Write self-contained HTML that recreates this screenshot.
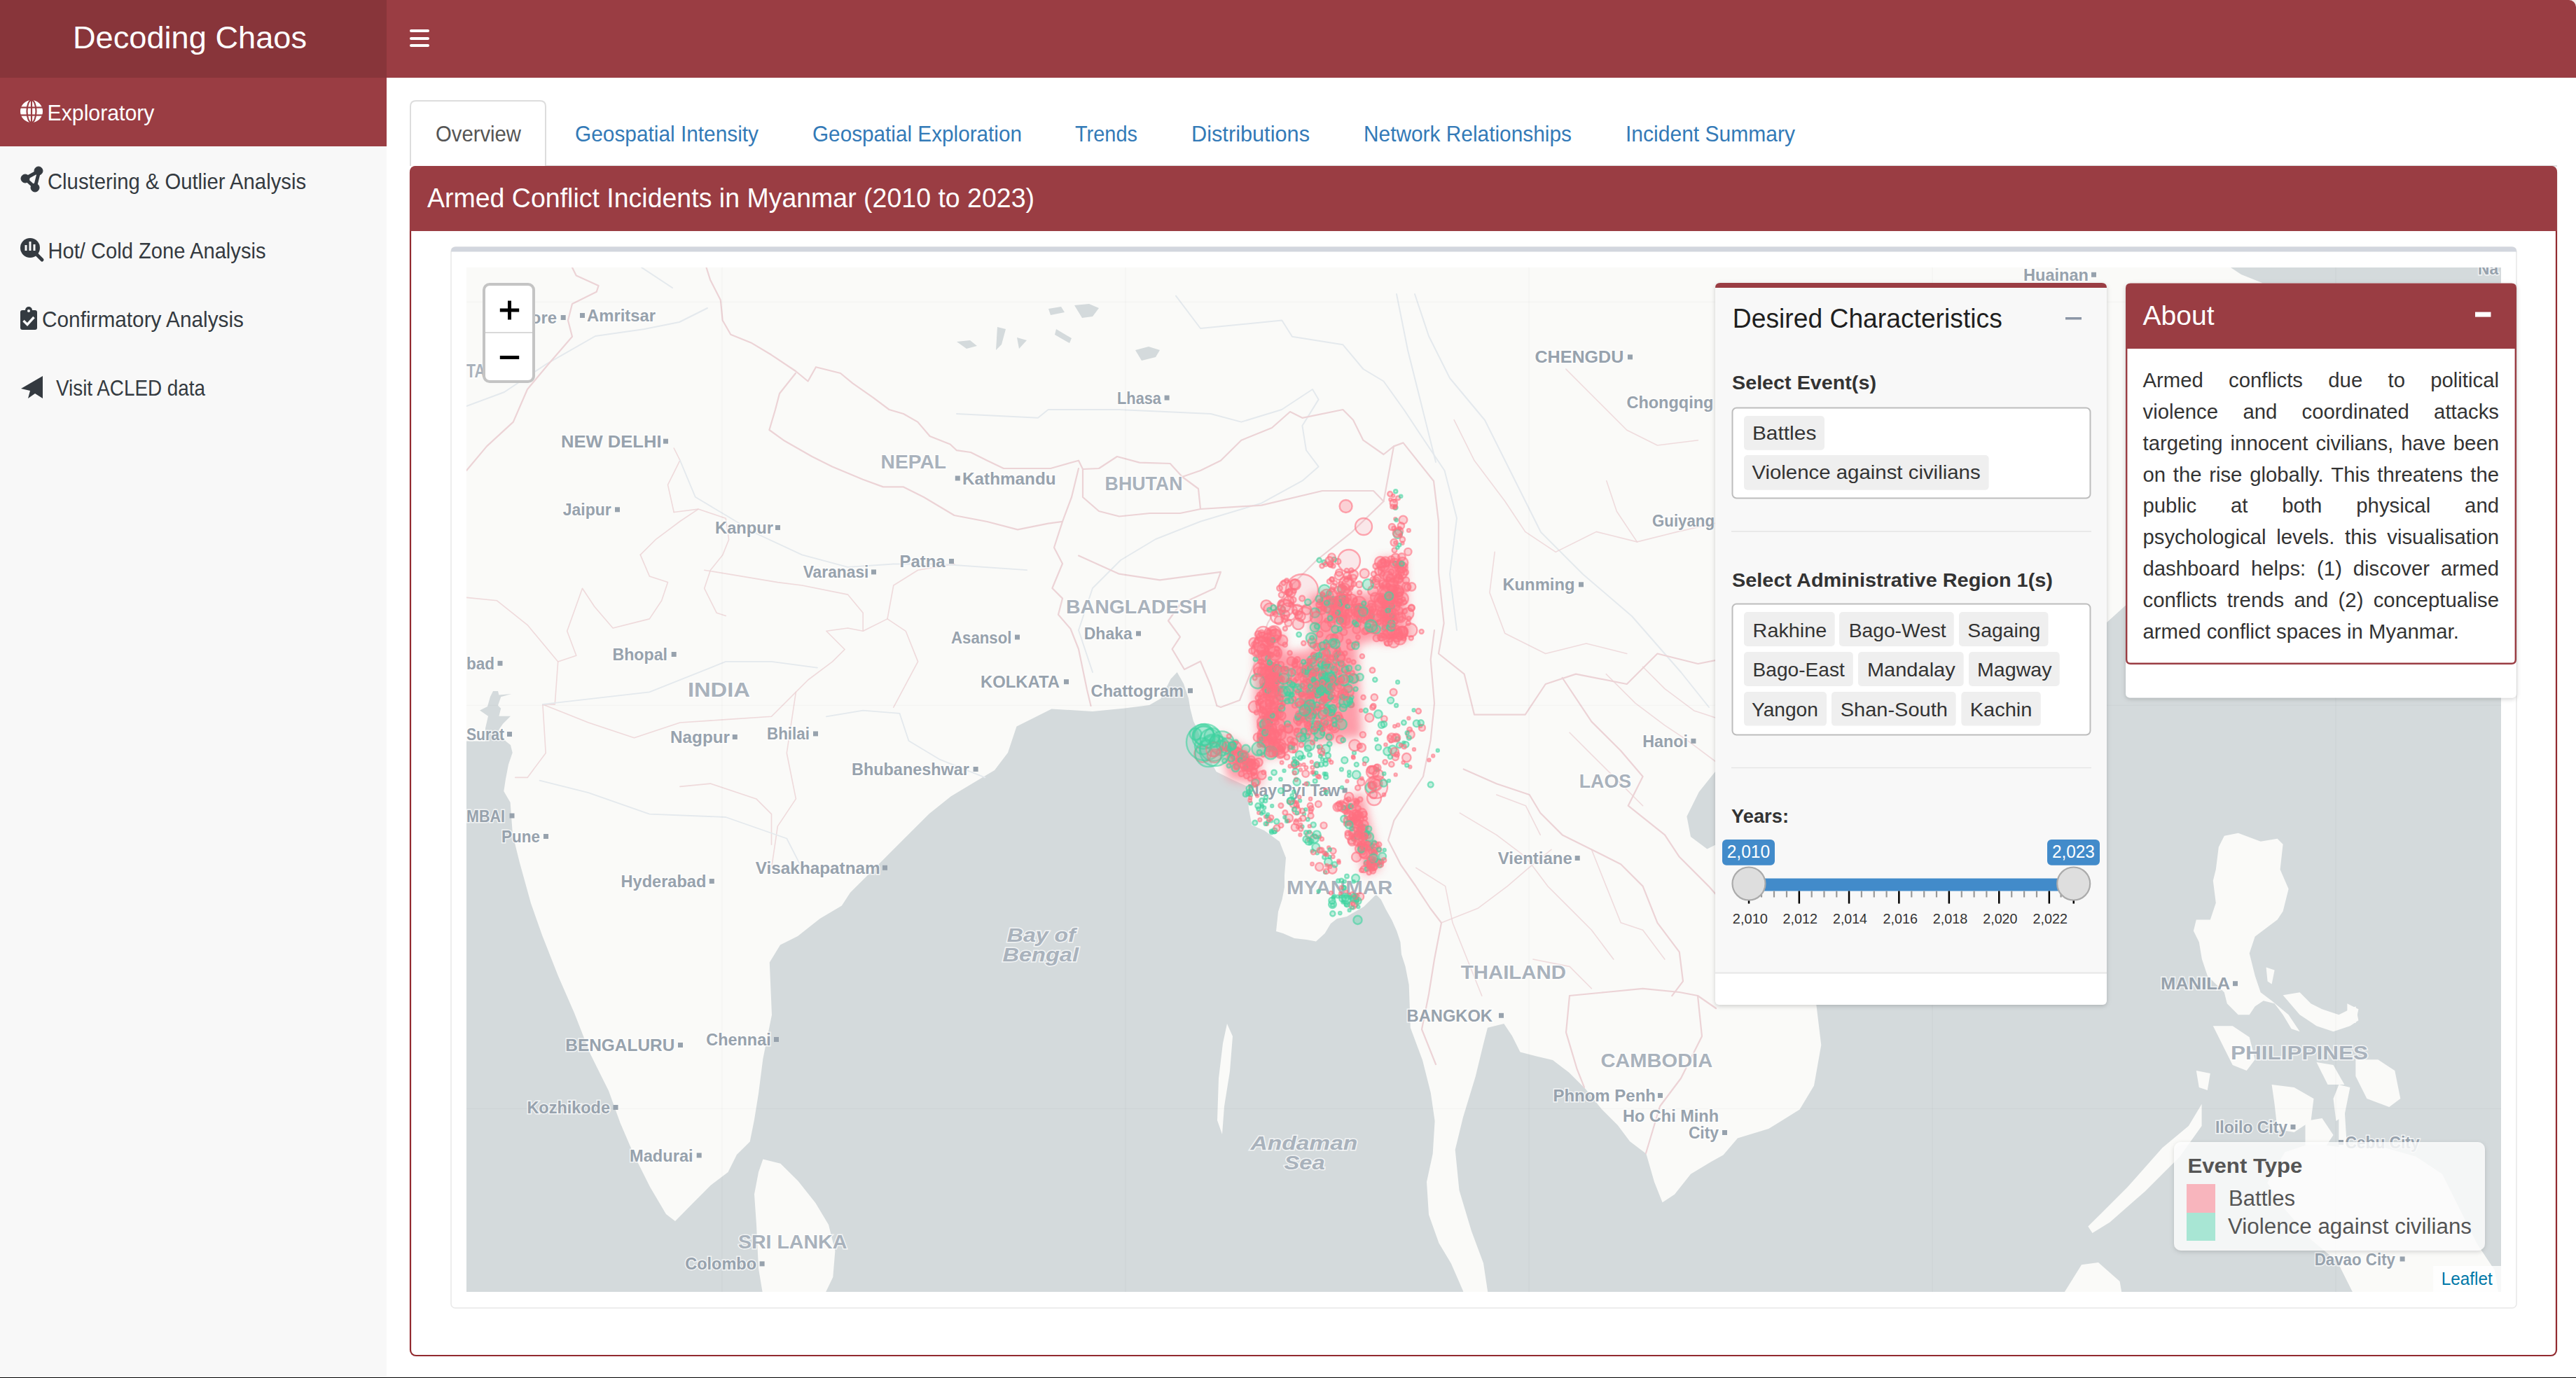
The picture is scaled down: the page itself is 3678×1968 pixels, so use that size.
<!DOCTYPE html>
<html><head><meta charset="utf-8"><title>Decoding Chaos</title>
<style>html,body{margin:0;padding:0;background:#fcfcfc;overflow:hidden;} svg{display:block;}</style>
</head><body>
<svg width="3678" height="1968" viewBox="0 0 3678 1968">
<rect x="0" y="0" width="3678" height="1968" fill="#ffffff"/>
<rect x="0" y="0" width="3678" height="111" fill="#9a3d43"/>
<rect x="0" y="0" width="552" height="111" fill="#88353a"/>
<path d="M3668,0 A10,10 0 0 1 3678,10 L3678,0 Z" fill="#f3e8e8"/>
<text x="104.0" y="68.5" font-family="Liberation Sans" font-size="44" font-weight="normal" fill="#ffffff" text-anchor="start" textLength="334.0" lengthAdjust="spacingAndGlyphs" >Decoding Chaos</text>
<rect x="585" y="42" width="28" height="4" rx="2" fill="#ffffff"/>
<rect x="585" y="53" width="28" height="4" rx="2" fill="#ffffff"/>
<rect x="585" y="63" width="28" height="4" rx="2" fill="#ffffff"/>
<rect x="0" y="111" width="552" height="1857" fill="#f8f8f8"/>
<rect x="0" y="111" width="552" height="98" fill="#9a3d43"/>
<text x="67.5" y="172.0" font-family="Liberation Sans" font-size="32" font-weight="normal" fill="#ffffff" text-anchor="start" textLength="153.0" lengthAdjust="spacingAndGlyphs" >Exploratory</text>
<text x="68.0" y="270.0" font-family="Liberation Sans" font-size="32" font-weight="normal" fill="#343a40" text-anchor="start" textLength="369.0" lengthAdjust="spacingAndGlyphs" >Clustering &amp; Outlier Analysis</text>
<text x="68.5" y="368.5" font-family="Liberation Sans" font-size="32" font-weight="normal" fill="#343a40" text-anchor="start" textLength="311.0" lengthAdjust="spacingAndGlyphs" >Hot/ Cold Zone Analysis</text>
<text x="60.0" y="466.7" font-family="Liberation Sans" font-size="32" font-weight="normal" fill="#343a40" text-anchor="start" textLength="288.0" lengthAdjust="spacingAndGlyphs" >Confirmatory Analysis</text>
<text x="80.0" y="565.4" font-family="Liberation Sans" font-size="32" font-weight="normal" fill="#343a40" text-anchor="start" textLength="213.0" lengthAdjust="spacingAndGlyphs" >Visit ACLED data</text>
<g transform="translate(45,159)"><circle r="16" fill="#fff"/><ellipse rx="6.5" ry="16" fill="none" stroke="#9a3d43" stroke-width="2.2"/><line x1="-16" y1="-5.5" x2="16" y2="-5.5" stroke="#9a3d43" stroke-width="2.2"/><line x1="-16" y1="5.5" x2="16" y2="5.5" stroke="#9a3d43" stroke-width="2.2"/><line x1="0" y1="-16" x2="0" y2="16" stroke="#9a3d43" stroke-width="2.2"/></g>
<g fill="#343a40" stroke="#343a40"><path d="M36,255 L56,244 L50,268 Z" fill="none" stroke-width="5" stroke-linejoin="round"/><circle cx="36" cy="255" r="6"/><circle cx="55" cy="244" r="6"/><circle cx="50" cy="268" r="6"/></g>
<g><circle cx="43" cy="354" r="14" fill="#343a40"/><line x1="52" y1="363" x2="60" y2="371" stroke="#343a40" stroke-width="5" stroke-linecap="round"/><rect x="35.5" y="350" width="3" height="8" fill="#f8f8f8"/><rect x="41.5" y="345" width="3" height="13" fill="#f8f8f8"/><rect x="47.5" y="349" width="3" height="9" fill="#f8f8f8"/></g>
<g><rect x="29" y="443" width="24" height="28" rx="3" fill="#343a40"/><circle cx="41" cy="443" r="5" fill="#343a40"/><circle cx="41" cy="444" r="2" fill="#f8f8f8"/><path d="M33.5,458 L39,463.5 L48.5,453" fill="none" stroke="#f8f8f8" stroke-width="3.4"/></g>
<path d="M30,555 L61,537 L61,569 L50,562 L40,569 L43,558 Z" fill="#343a40"/>
<path d="M586,237 L586,152 Q586,144 594,144 L771,144 Q779,144 779,152 L779,237" fill="#ffffff" stroke="#dddddd" stroke-width="2"/>
<line x1="779" y1="237" x2="3651" y2="237" stroke="#dddddd" stroke-width="2"/>
<text x="622.0" y="202.0" font-family="Liberation Sans" font-size="32" font-weight="normal" fill="#555555" text-anchor="start" textLength="122.0" lengthAdjust="spacingAndGlyphs" >Overview</text>
<text x="821.0" y="202.0" font-family="Liberation Sans" font-size="32" font-weight="normal" fill="#337ab7" text-anchor="start" textLength="262.0" lengthAdjust="spacingAndGlyphs" >Geospatial Intensity</text>
<text x="1160.0" y="202.0" font-family="Liberation Sans" font-size="32" font-weight="normal" fill="#337ab7" text-anchor="start" textLength="299.0" lengthAdjust="spacingAndGlyphs" >Geospatial Exploration</text>
<text x="1535.0" y="202.0" font-family="Liberation Sans" font-size="32" font-weight="normal" fill="#337ab7" text-anchor="start" textLength="89.0" lengthAdjust="spacingAndGlyphs" >Trends</text>
<text x="1701.0" y="202.0" font-family="Liberation Sans" font-size="32" font-weight="normal" fill="#337ab7" text-anchor="start" textLength="169.0" lengthAdjust="spacingAndGlyphs" >Distributions</text>
<text x="1947.0" y="202.0" font-family="Liberation Sans" font-size="32" font-weight="normal" fill="#337ab7" text-anchor="start" textLength="297.0" lengthAdjust="spacingAndGlyphs" >Network Relationships</text>
<text x="2321.0" y="202.0" font-family="Liberation Sans" font-size="32" font-weight="normal" fill="#337ab7" text-anchor="start" textLength="242.0" lengthAdjust="spacingAndGlyphs" >Incident Summary</text>
<rect x="586" y="238" width="3064" height="1698" rx="8" fill="#ffffff" stroke="#922a2f" stroke-width="2.2"/>
<path d="M585,246 Q585,237 594,237 L3642,237 Q3651,237 3651,246 L3651,330 L585,330 Z" fill="#9a3d43"/>
<text x="610.0" y="296.3" font-family="Liberation Sans" font-size="38" font-weight="normal" fill="#ffffff" text-anchor="start" textLength="867.0" lengthAdjust="spacingAndGlyphs" >Armed Conflict Incidents in Myanmar (2010 to 2023)</text>
<rect x="644" y="353" width="2949" height="1515" rx="6" fill="#ffffff" stroke="#e8e8e8" stroke-width="1.5"/>
<path d="M644,359.5 L644,359 Q644,352.5 650.5,352.5 L3586.5,352.5 Q3593,352.5 3593,359 L3593,359.5 Z" fill="#d2d6de"/>
<defs><clipPath id="mapclip"><rect x="666" y="382" width="2905" height="1463"/></clipPath><filter id="sh" x="-10%" y="-10%" width="120%" height="130%"><feDropShadow dx="0" dy="2" stdDeviation="3" flood-color="#000" flood-opacity="0.18"/></filter></defs>
<g clip-path="url(#mapclip)">
<rect x="666" y="382" width="2905" height="1463" fill="#fafaf8"/>
<polygon points="660.0,1058.6 693.0,1058.6 693.0,1040.0 697.0,1022.8 685.0,1014.5 696.0,1009.0 700.0,995.0 704.0,986.9 711.0,986.9 712.4,992.4 730.3,991.0 715.2,995.2 711.0,1007.6 715.2,1011.7 712.4,1022.8 729.0,1022.8 718.0,1033.8 712.4,1042.0 722.0,1058.6 729.0,1064.0 731.7,1075.0 726.0,1091.7 722.0,1112.4 719.3,1130.0 728.6,1146.0 732.0,1191.8 741.7,1231.0 758.0,1290.0 774.0,1335.6 797.0,1394.0 820.0,1446.7 843.0,1505.6 869.0,1557.8 885.5,1603.6 905.0,1649.0 928.0,1695.0 951.0,1734.0 964.0,1744.0 989.6,1717.9 1014.5,1692.9 1039.5,1674.0 1052.0,1649.0 1070.7,1630.5 1077.0,1599.0 1083.0,1561.8 1089.4,1511.9 1102.0,1449.4 1098.8,1374.5 1114.0,1349.6 1139.0,1337.0 1170.6,1312.0 1201.8,1293.4 1214.0,1274.7 1251.7,1237.2 1289.0,1199.8 1326.6,1162.3 1357.8,1137.3 1389.0,1118.6 1420.0,1099.9 1439.0,1074.9 1451.5,1037.5 1476.5,1025.0 1501.4,1012.5 1560.0,1016.0 1606.0,1011.5 1641.0,1007.0 1657.5,997.5 1671.5,969.7 1680.7,960.0 1690.0,976.6 1697.0,997.5 1699.3,1011.5 1704.0,1030.0 1708.6,1039.3 1720.0,1070.0 1736.5,1102.0 1759.7,1113.6 1780.6,1123.0 1783.0,1155.4 1787.5,1178.6 1805.0,1186.0 1827.0,1202.0 1836.0,1225.0 1834.0,1250.0 1834.0,1267.0 1830.6,1284.5 1825.0,1302.0 1822.0,1330.0 1832.0,1333.0 1848.0,1340.0 1865.4,1342.0 1879.0,1344.6 1891.6,1333.0 1900.0,1319.0 1909.0,1312.0 1923.0,1309.0 1935.0,1302.0 1947.0,1295.0 1957.7,1284.5 1964.7,1277.5 1971.7,1284.5 1978.6,1298.4 1987.3,1314.0 1994.3,1329.8 1999.5,1345.4 2001.0,1363.0 2006.5,1380.0 2011.7,1406.4 2013.8,1467.8 2031.0,1514.0 2042.8,1560.7 2048.6,1601.0 2045.7,1647.7 2037.0,1688.0 2040.0,1734.7 2054.5,1775.4 2071.9,1804.4 2089.0,1843.8 2092.0,1860.0 660.0,1860.0" fill="#d4dadc"/>
<polygon points="2128.0,1860.0 2124.0,1843.8 2118.0,1804.0 2100.9,1758.0 2083.5,1700.0 2077.7,1641.9 2089.0,1595.5 2106.7,1537.4 2118.0,1491.0 2124.0,1467.8 2147.3,1462.0 2159.0,1479.4 2170.5,1502.6 2193.7,1508.4 2217.0,1514.0 2240.0,1531.6 2263.4,1554.8 2286.6,1583.8 2309.8,1607.0 2327.0,1630.0 2350.4,1647.7 2362.0,1688.0 2373.6,1717.3 2391.0,1705.7 2414.0,1676.7 2443.0,1659.3 2460.5,1649.4 2481.0,1625.6 2525.3,1612.0 2569.6,1584.6 2590.0,1550.5 2600.3,1492.5 2593.5,1436.3 2580.0,1380.0 2540.0,1300.0 2470.0,1230.0 2449.0,1206.7 2437.4,1212.5 2414.0,1195.0 2408.4,1166.0 2425.8,1131.0 2449.0,1102.0 2520.0,1080.0 2700.0,1000.0 2900.0,930.0 3008.0,889.0 3040.0,860.0 3100.0,700.0 3230.0,404.0 3200.0,392.0 3185.0,382.0 3185.0,370.0 3590.0,370.0 3590.0,1860.0" fill="#d4dadc"/>
<polygon points="1089.4,1655.4 1114.4,1661.7 1139.4,1686.6 1164.4,1717.9 1183.0,1749.0 1192.4,1786.5 1189.3,1824.0 1176.8,1850.0 1089.4,1850.0 1083.0,1811.5 1080.0,1749.0 1077.0,1705.4 1083.0,1674.0" fill="#fafaf8"/>
<polygon points="1752.0,1462.0 1760.0,1480.0 1756.0,1530.0 1748.0,1580.0 1745.0,1620.0 1738.0,1600.0 1740.0,1540.0 1746.0,1490.0" fill="#fafaf8"/>
<polygon points="3175.8,1193.8 3195.7,1189.8 3227.7,1201.8 3251.6,1197.8 3259.6,1205.8 3255.6,1241.7 3267.6,1269.6 3259.6,1301.6 3251.6,1313.6 3235.6,1325.5 3219.7,1337.5 3211.7,1361.5 3219.7,1393.4 3227.7,1417.3 3243.6,1429.3 3267.6,1449.3 3283.6,1473.2 3271.6,1469.2 3259.6,1449.3 3247.6,1433.3 3231.7,1429.3 3219.7,1437.3 3211.7,1449.3 3195.7,1449.3 3179.8,1433.3 3175.8,1417.3 3163.8,1405.4 3151.8,1393.4 3143.8,1369.4 3139.8,1345.5 3131.9,1329.5 3135.8,1313.6 3155.8,1313.6 3163.8,1289.6 3159.8,1257.7 3163.8,1241.7 3167.8,1209.8" fill="#fafaf8"/>
<polygon points="3259.6,1421.3 3283.6,1417.3 3299.5,1433.3 3315.5,1441.3 3339.4,1449.3 3363.4,1437.3 3367.4,1457.3 3355.4,1465.2 3331.5,1473.2 3307.5,1465.2 3283.6,1449.3" fill="#fafaf8"/>
<polygon points="3159.8,1465.2 3187.7,1465.2 3211.7,1481.2 3219.7,1513.2 3207.7,1529.1 3187.7,1521.1 3171.8,1489.2" fill="#fafaf8"/>
<polygon points="3363.4,1513.2 3395.3,1513.2 3419.3,1529.1 3427.3,1569.0 3411.3,1581.0 3379.4,1569.0 3363.4,1537.1" fill="#fafaf8"/>
<polygon points="3339.4,1549.1 3355.4,1553.1 3347.4,1593.0 3335.4,1601.0 3331.5,1569.0" fill="#fafaf8"/>
<polygon points="3243.6,1549.1 3275.6,1553.1 3303.5,1569.0 3299.5,1601.0 3275.6,1616.9 3251.6,1613.0 3247.6,1577.0" fill="#fafaf8"/>
<polygon points="3291.5,1601.0 3315.5,1597.0 3331.5,1620.9 3315.5,1644.9 3291.5,1644.9" fill="#fafaf8"/>
<polygon points="3307.5,1517.1 3331.5,1521.1 3347.4,1549.1 3323.5,1549.1" fill="#fafaf8"/>
<polygon points="3339.4,1581.0 3347.4,1581.0 3351.4,1644.9 3339.4,1644.9" fill="#fafaf8"/>
<polygon points="3135.8,1529.1 3155.8,1533.1 3151.8,1557.1 3139.8,1553.1" fill="#fafaf8"/>
<polygon points="3235.6,1381.4 3247.6,1385.4 3243.6,1405.4 3237.6,1401.4" fill="#fafaf8"/>
<polygon points="3351.4,1433.3 3367.4,1441.3 3363.4,1461.3 3351.4,1457.3" fill="#fafaf8"/>
<polygon points="3262.2,1645.5 3299.7,1633.0 3349.6,1639.3 3405.8,1639.3 3449.5,1651.8 3487.0,1676.7 3511.9,1726.7 3536.9,1776.6 3561.9,1814.1 3568.1,1851.5 3362.1,1851.5 3337.1,1801.6 3299.7,1770.4 3262.2,1726.7 3237.2,1689.2" fill="#fafaf8"/>
<polygon points="3143.6,1576.8 3124.9,1608.1 3087.4,1639.3 3037.5,1695.5 3000.0,1732.9 2981.3,1751.6 2987.5,1761.0 3012.5,1745.4 3062.4,1701.7 3112.4,1651.8 3143.6,1608.1" fill="#fafaf8"/>
<polygon points="2944.8,1850.0 2972.0,1806.3 2996.0,1803.0 3026.6,1830.0 3030.0,1850.0" fill="#fafaf8"/>
<polyline points="1366.0,591.0 1482.0,596.8 1496.6,585.0 1598.0,585.0 1728.8,591.0 1772.3,602.6 1830.0,585.0 1874.0,556.0 1882.6,570.6 1859.4,608.0 1865.0,643.0 1882.6,666.4 1859.4,686.7 1801.0,718.6 1714.0,744.8 1650.0,770.0 1600.0,800.0 1560.0,840.0 1540.0,900.0 1560.0,960.0" fill="none" stroke="#e4e9ed" stroke-width="2" stroke-linejoin="round" stroke-linecap="round" />
<polyline points="1679.0,422.6 1714.0,469.0 1830.3,457.5 1845.0,480.7 1917.4,492.3 1946.4,527.0 1975.5,544.5 2004.5,585.0 2033.5,628.7 2062.5,672.0 2080.0,740.0 2070.0,820.0 2080.0,900.0" fill="none" stroke="#e4e9ed" stroke-width="2" stroke-linejoin="round" stroke-linecap="round" />
<polyline points="916.0,382.0 960.0,411.0" fill="none" stroke="#e4e9ed" stroke-width="2" stroke-linejoin="round" stroke-linecap="round" />
<polyline points="666.0,580.0 720.0,560.0 780.0,520.0 850.0,480.0 920.0,470.0 970.0,460.0 1010.0,440.0" fill="none" stroke="#e4e9ed" stroke-width="2" stroke-linejoin="round" stroke-linecap="round" />
<polyline points="2020.0,420.0 2040.0,480.0 2070.0,540.0 2120.0,600.0 2160.0,680.0 2200.0,760.0 2260.0,820.0 2330.0,880.0 2400.0,960.0 2440.0,1010.0" fill="none" stroke="#e4e9ed" stroke-width="2" stroke-linejoin="round" stroke-linecap="round" />
<polyline points="1994.0,420.0 2010.0,500.0 2030.0,580.0 2050.0,660.0" fill="none" stroke="#e4e9ed" stroke-width="2" stroke-linejoin="round" stroke-linecap="round" />
<polyline points="817.0,382.0 822.7,393.6 854.6,408.0 851.7,416.8 817.0,434.0 811.0,457.5 817.0,480.7 782.0,521.3 753.0,556.0 732.8,602.6 695.0,637.4 666.0,672.0" fill="none" stroke="#ecd3d6" stroke-width="2.2" stroke-linejoin="round" stroke-linecap="round" />
<polyline points="1008.5,382.0 1014.0,399.4 1028.8,428.4 1031.7,457.5 1043.3,477.8 1072.3,489.4 1101.3,506.8 1136.0,530.0 1153.6,544.5 1165.0,524.2 1200.0,533.0 1217.4,547.4 1246.4,567.7 1269.6,585.0 1290.0,591.0 1310.3,602.6 1327.7,623.0 1356.7,634.5 1366.0,643.2 1386.0,646.0 1409.5,657.7 1433.0,669.0 1462.0,669.0 1500.0,669.0 1540.0,657.7 1546.0,670.0 1569.0,669.0 1595.0,652.0 1627.0,660.6 1670.7,662.0 1688.0,681.0 1714.0,672.0 1743.0,657.7 1772.3,628.7 1816.0,611.0 1842.0,588.0 1859.4,596.8 1917.4,585.0 1932.0,599.7 1946.4,628.7 1975.5,649.0 1990.0,637.4 2003.5,632.4 2047.0,687.0 2054.0,745.0 2054.0,817.4 2061.6,890.0 2054.0,933.5 2090.6,962.6 2105.0,1020.6 2134.0,1020.6 2177.7,1020.6 2206.7,977.0 2250.0,962.6 2322.8,977.0 2366.4,933.5 2424.4,948.0 2460.0,940.8" fill="none" stroke="#ecd3d6" stroke-width="2.2" stroke-linejoin="round" stroke-linecap="round" />
<polyline points="1136.0,533.0 1113.0,562.0 1107.0,585.0 1098.4,614.0 1118.7,628.7 1159.4,652.0 1188.4,666.4 1232.0,684.8 1261.0,695.4 1290.0,695.4 1319.0,710.0 1362.5,736.0 1409.5,745.0 1453.0,756.4 1496.6,747.7 1517.0,744.8 1530.0,710.0 1540.0,669.0" fill="none" stroke="#ecd3d6" stroke-width="2.2" stroke-linejoin="round" stroke-linecap="round" />
<polyline points="1546.0,670.0 1546.0,710.0 1569.0,730.0 1598.0,737.5 1641.7,733.0 1685.0,733.0 1714.0,727.0 1711.0,698.0 1688.0,681.0" fill="none" stroke="#ecd3d6" stroke-width="2.2" stroke-linejoin="round" stroke-linecap="round" />
<polyline points="1517.0,744.8 1505.0,782.0 1517.0,805.0 1502.4,840.0 1517.0,854.6 1511.0,877.8 1528.5,898.0 1540.0,927.0 1546.0,956.0 1552.0,985.0 1557.5,1008.0" fill="none" stroke="#ecd3d6" stroke-width="2.2" stroke-linejoin="round" stroke-linecap="round" />
<polyline points="1540.0,793.6 1598.0,819.7 1656.0,828.4 1743.0,816.8 1734.6,840.0 1685.0,863.0 1668.0,886.5 1685.0,909.7 1673.6,927.0 1691.0,956.0 1714.0,944.5 1728.8,979.3 1737.5,1008.0" fill="none" stroke="#ecd3d6" stroke-width="2.2" stroke-linejoin="round" stroke-linecap="round" />
<polyline points="1714.0,727.0 1801.0,721.6 1888.0,701.0 1961.0,701.0 1975.5,716.0 1990.0,637.4" fill="none" stroke="#ecd3d6" stroke-width="2.2" stroke-linejoin="round" stroke-linecap="round" />
<polyline points="1975.5,716.0 1930.0,760.0 1880.0,800.0 1840.0,840.0 1810.0,890.0 1790.0,950.0 1770.0,1000.0 1743.0,1010.0 1737.5,1008.0" fill="none" stroke="#ecd3d6" stroke-width="2.2" stroke-linejoin="round" stroke-linecap="round" />
<polyline points="2048.0,900.0 2042.7,941.8 2048.0,1004.4 2042.7,1056.7 2032.0,1109.0 2011.3,1140.0 1990.4,1171.6 1982.0,1200.0 2000.0,1235.0 2021.0,1265.0 2042.0,1297.0 2058.0,1318.0 2048.0,1370.0 2040.0,1420.0 2030.0,1470.0 2050.0,1520.0" fill="none" stroke="#ecd3d6" stroke-width="2.2" stroke-linejoin="round" stroke-linecap="round" />
<polyline points="2089.7,1098.4 2136.7,1119.3 2183.7,1135.0 2199.3,1161.0 2230.7,1192.4 2272.4,1213.3 2314.2,1234.2 2345.6,1265.6 2366.4,1317.8 2397.8,1359.6 2403.0,1401.3 2387.3,1422.2" fill="none" stroke="#ecd3d6" stroke-width="2.2" stroke-linejoin="round" stroke-linecap="round" />
<polyline points="2241.0,1422.0 2293.0,1417.0 2345.6,1411.8 2397.8,1417.0 2424.0,1422.0 2450.0,1440.0" fill="none" stroke="#ecd3d6" stroke-width="2.2" stroke-linejoin="round" stroke-linecap="round" />
<polyline points="2241.0,1422.0 2236.0,1474.4 2251.6,1526.7 2262.0,1552.8" fill="none" stroke="#ecd3d6" stroke-width="2.2" stroke-linejoin="round" stroke-linecap="round" />
<polyline points="2230.7,968.0 2272.4,1030.6 2314.2,1072.3 2345.6,1109.0 2324.7,1150.7 2377.0,1192.4 2397.8,1223.8 2439.6,1265.6 2470.0,1300.0" fill="none" stroke="#ecd3d6" stroke-width="2.2" stroke-linejoin="round" stroke-linecap="round" />
<polyline points="2424.0,1422.0 2430.0,1480.0 2400.0,1540.0 2370.0,1580.0 2350.0,1647.0" fill="none" stroke="#ecd3d6" stroke-width="2.2" stroke-linejoin="round" stroke-linecap="round" />
<polyline points="962.2,731.5 997.0,727.1 1036.2,740.2 1040.6,770.7 1031.9,792.4 1014.4,814.2 1005.7,840.3 1023.1,875.2 1036.2,879.5" fill="none" stroke="#ecd3d6" stroke-width="1.6" stroke-linejoin="round" stroke-linecap="round" stroke-opacity="0.85"/>
<polyline points="1005.7,814.2 1058.0,822.9 1110.3,831.6 1145.1,836.0 1210.4,849.1 1232.2,875.2 1232.2,901.3 1267.0,883.9" fill="none" stroke="#ecd3d6" stroke-width="1.6" stroke-linejoin="round" stroke-linecap="round" stroke-opacity="0.85"/>
<polyline points="774.9,1005.9 840.2,1032.0 905.5,1053.8 970.9,1032.0 1036.2,1027.6 1101.5,1023.3 1136.4,988.4 1153.8,971.0 1188.6,944.9 1206.1,927.5 1179.9,901.3 1210.4,897.0 1232.2,901.3" fill="none" stroke="#ecd3d6" stroke-width="1.6" stroke-linejoin="round" stroke-linecap="round" stroke-opacity="0.85"/>
<polyline points="1136.4,988.4 1123.3,1075.5 1136.4,1140.9 1110.3,1180.1 1101.5,1240.2" fill="none" stroke="#ecd3d6" stroke-width="1.6" stroke-linejoin="round" stroke-linecap="round" stroke-opacity="0.85"/>
<polyline points="1275.8,1010.2 1310.6,944.9 1293.2,901.3 1267.0,883.9 1275.8,836.0 1310.6,814.2 1362.9,805.5" fill="none" stroke="#ecd3d6" stroke-width="1.6" stroke-linejoin="round" stroke-linecap="round" stroke-opacity="0.85"/>
<polyline points="666.0,853.4 709.6,857.8 753.1,892.6 796.7,944.9 792.3,1005.9 774.9,1005.9 779.2,1075.5 753.1,1110.4 735.7,1110.4" fill="none" stroke="#ecd3d6" stroke-width="1.6" stroke-linejoin="round" stroke-linecap="round" stroke-opacity="0.85"/>
<polyline points="970.9,1123.4 1014.4,1119.1 1079.8,1140.9 1101.5,1162.6 1101.5,1206.2" fill="none" stroke="#ecd3d6" stroke-width="1.6" stroke-linejoin="round" stroke-linecap="round" stroke-opacity="0.85"/>
<polyline points="962.2,731.5 953.5,692.3 970.9,657.4 962.2,640.0" fill="none" stroke="#ecd3d6" stroke-width="1.6" stroke-linejoin="round" stroke-linecap="round" stroke-opacity="0.85"/>
<polyline points="914.3,792.4 936.0,770.7 970.9,744.5 997.0,727.1" fill="none" stroke="#ecd3d6" stroke-width="1.6" stroke-linejoin="round" stroke-linecap="round" stroke-opacity="0.85"/>
<polyline points="914.3,792.4 927.3,822.9 953.5,831.6 944.7,857.8 927.3,883.9 875.1,897.0 848.9,866.5 831.5,840.3 809.7,901.3 822.8,936.2 796.7,944.9" fill="none" stroke="#ecd3d6" stroke-width="1.6" stroke-linejoin="round" stroke-linecap="round" stroke-opacity="0.85"/>
<polyline points="2058.3,1317.8 2110.6,1296.9 2152.3,1265.6 2188.9,1234.2 2215.0,1213.3" fill="none" stroke="#ecd3d6" stroke-width="1.6" stroke-linejoin="round" stroke-linecap="round" stroke-opacity="0.8"/>
<polyline points="2084.4,1161.1 2136.7,1192.4 2178.4,1223.8 2209.8,1265.6 2241.1,1296.9 2272.4,1328.2 2303.8,1370.0" fill="none" stroke="#ecd3d6" stroke-width="1.6" stroke-linejoin="round" stroke-linecap="round" stroke-opacity="0.8"/>
<polyline points="2021.8,1239.4 2063.6,1265.6 2074.0,1317.8 2094.9,1370.0 2115.8,1422.2" fill="none" stroke="#ecd3d6" stroke-width="1.6" stroke-linejoin="round" stroke-linecap="round" stroke-opacity="0.8"/>
<polyline points="2136.7,1135.0 2178.4,1150.7 2199.3,1192.4" fill="none" stroke="#ecd3d6" stroke-width="1.6" stroke-linejoin="round" stroke-linecap="round" stroke-opacity="0.8"/>
<polyline points="2272.4,1213.3 2293.3,1265.6 2314.2,1317.8 2345.6,1328.2 2376.9,1370.0" fill="none" stroke="#ecd3d6" stroke-width="1.6" stroke-linejoin="round" stroke-linecap="round" stroke-opacity="0.8"/>
<polyline points="2188.9,1370.0 2241.1,1380.4 2272.4,1411.8" fill="none" stroke="#ecd3d6" stroke-width="1.6" stroke-linejoin="round" stroke-linecap="round" stroke-opacity="0.8"/>
<polyline points="2241.1,1046.2 2272.4,1077.6 2303.8,1108.9 2345.6,1150.7" fill="none" stroke="#ecd3d6" stroke-width="1.6" stroke-linejoin="round" stroke-linecap="round" stroke-opacity="0.8"/>
<polyline points="2293.3,962.7 2335.1,1004.4 2376.9,1035.8 2408.2,1056.7 2450.0,1088.0" fill="none" stroke="#ecd3d6" stroke-width="1.6" stroke-linejoin="round" stroke-linecap="round" stroke-opacity="0.8"/>
<polyline points="2345.6,952.2 2376.9,983.6 2418.7,1014.9 2450.0,1025.3" fill="none" stroke="#ecd3d6" stroke-width="1.6" stroke-linejoin="round" stroke-linecap="round" stroke-opacity="0.8"/>
<polyline points="2076.1,599.7 2105.1,657.8 2148.7,715.8 2177.7,759.4 2221.2,788.4 2279.3,759.4 2337.4,773.9 2395.4,759.4 2460.0,744.8" fill="none" stroke="#ecd3d6" stroke-width="1.6" stroke-linejoin="round" stroke-linecap="round" stroke-opacity="0.8"/>
<polyline points="2134.2,788.4 2126.9,846.4 2148.7,904.5 2206.7,933.5 2264.8,919.0 2322.8,933.5" fill="none" stroke="#ecd3d6" stroke-width="1.6" stroke-linejoin="round" stroke-linecap="round" stroke-opacity="0.8"/>
<polyline points="2235.8,527.1 2279.3,570.7 2322.8,614.2 2366.4,636.0 2424.4,628.7" fill="none" stroke="#ecd3d6" stroke-width="1.6" stroke-linejoin="round" stroke-linecap="round" stroke-opacity="0.8"/>
<polyline points="2293.8,686.8 2308.3,730.3 2337.4,773.9" fill="none" stroke="#ecd3d6" stroke-width="1.6" stroke-linejoin="round" stroke-linecap="round" stroke-opacity="0.8"/>
<polyline points="970.9,657.4 992.7,709.7 1036.2,735.8 1079.8,762.0 1145.1,792.4 1210.4,809.9 1275.8,805.5 1341.1,805.5 1466.1,814.2" fill="none" stroke="#e4e9ed" stroke-width="1.8" stroke-linejoin="round" stroke-linecap="round" />
<polyline points="774.9,1005.9 927.3,988.4 1036.2,944.9 1101.5,944.9 1166.9,953.6" fill="none" stroke="#e4e9ed" stroke-width="1.8" stroke-linejoin="round" stroke-linecap="round" />
<polyline points="770.5,1114.7 840.2,1132.2 927.3,1162.6 1036.2,1167.0 1123.3,1197.5 1145.1,1240.2" fill="none" stroke="#e4e9ed" stroke-width="1.8" stroke-linejoin="round" stroke-linecap="round" />
<polyline points="1179.9,1023.3 1232.2,1014.6 1284.5,1018.9 1297.5,1058.1 1341.1,1084.3 1406.4,1110.4" fill="none" stroke="#e4e9ed" stroke-width="1.8" stroke-linejoin="round" stroke-linecap="round" />
<rect x="1030.5" y="382" width="1" height="1463" fill="#000" fill-opacity="0.03"/>
<rect x="1606.5" y="382" width="1" height="1463" fill="#000" fill-opacity="0.03"/>
<rect x="2182.5" y="382" width="1" height="1463" fill="#000" fill-opacity="0.03"/>
<rect x="2758.5" y="382" width="1" height="1463" fill="#000" fill-opacity="0.03"/>
<rect x="3334.5" y="382" width="1" height="1463" fill="#000" fill-opacity="0.03"/>
<rect x="666" y="430.7" width="2905" height="1" fill="#000" fill-opacity="0.03"/>
<rect x="666" y="1006.7" width="2905" height="1" fill="#000" fill-opacity="0.03"/>
<rect x="666" y="1582.7" width="2905" height="1" fill="#000" fill-opacity="0.03"/>
<polygon points="1621.0,500.0 1640.0,495.0 1656.0,500.0 1650.0,510.0 1630.0,515.0" fill="#d4dadc"/>
<polygon points="1534.0,436.0 1555.0,434.0 1569.0,440.0 1560.0,452.0 1545.0,454.0" fill="#d4dadc"/>
<polygon points="1366.0,488.0 1385.0,486.0 1395.0,494.0 1380.0,498.0" fill="#d4dadc"/>
<polygon points="1497.0,441.0 1515.0,438.0 1520.0,446.0 1500.0,450.0" fill="#d4dadc"/>
<polygon points="1424.0,467.0 1436.0,470.0 1430.0,492.0 1422.0,500.0" fill="#d4dadc"/>
<polygon points="1452.0,482.0 1466.0,486.0 1455.0,498.0" fill="#d4dadc"/>
<polygon points="1508.0,470.0 1530.0,483.0 1527.0,490.0 1506.0,478.0" fill="#d4dadc"/>
<text x="757.8" y="462.0" font-family="Liberation Sans" font-size="23" font-weight="bold" fill="#97a2ad" stroke="#ffffff" stroke-width="3" stroke-opacity="0.7" paint-order="stroke" textLength="37.2" lengthAdjust="spacingAndGlyphs">ore</text>
<rect x="800.7" y="450.0" width="7" height="7" fill="#97a2ad"/>
<text x="838.0" y="459.0" font-family="Liberation Sans" font-size="23" font-weight="bold" fill="#97a2ad" stroke="#ffffff" stroke-width="3" stroke-opacity="0.7" paint-order="stroke" textLength="98.0" lengthAdjust="spacingAndGlyphs">Amritsar</text>
<rect x="828.0" y="447.0" width="7" height="7" fill="#97a2ad"/>
<text x="666.0" y="539.0" font-family="Liberation Sans" font-size="28" font-weight="bold" fill="#a9b2bc" stroke="#ffffff" stroke-width="3" stroke-opacity="0.7" paint-order="stroke" textLength="27.0" lengthAdjust="spacingAndGlyphs">TA</text>
<text x="801.0" y="638.7" font-family="Liberation Sans" font-size="23" font-weight="bold" fill="#97a2ad" stroke="#ffffff" stroke-width="3" stroke-opacity="0.7" paint-order="stroke" textLength="143.5" lengthAdjust="spacingAndGlyphs">NEW DELHI</text>
<rect x="947.0" y="626.7" width="7" height="7" fill="#97a2ad"/>
<text x="1595.0" y="576.6" font-family="Liberation Sans" font-size="23" font-weight="bold" fill="#97a2ad" stroke="#ffffff" stroke-width="3" stroke-opacity="0.7" paint-order="stroke" textLength="63.0" lengthAdjust="spacingAndGlyphs">Lhasa</text>
<rect x="1662.6" y="564.6" width="7" height="7" fill="#97a2ad"/>
<text x="1257.6" y="668.5" font-family="Liberation Sans" font-size="27" font-weight="bold" fill="#a9b2bc" stroke="#ffffff" stroke-width="3" stroke-opacity="0.7" paint-order="stroke" textLength="93.4" lengthAdjust="spacingAndGlyphs">NEPAL</text>
<text x="1374.0" y="691.5" font-family="Liberation Sans" font-size="23" font-weight="bold" fill="#97a2ad" stroke="#ffffff" stroke-width="3" stroke-opacity="0.7" paint-order="stroke" textLength="133.6" lengthAdjust="spacingAndGlyphs">Kathmandu</text>
<rect x="1363.8" y="679.5" width="7" height="7" fill="#97a2ad"/>
<text x="1577.6" y="700.0" font-family="Liberation Sans" font-size="27" font-weight="bold" fill="#a9b2bc" stroke="#ffffff" stroke-width="3" stroke-opacity="0.7" paint-order="stroke" textLength="110.9" lengthAdjust="spacingAndGlyphs">BHUTAN</text>
<text x="803.7" y="736.3" font-family="Liberation Sans" font-size="23" font-weight="bold" fill="#97a2ad" stroke="#ffffff" stroke-width="3" stroke-opacity="0.7" paint-order="stroke" textLength="69.0" lengthAdjust="spacingAndGlyphs">Jaipur</text>
<rect x="878.0" y="724.3" width="7" height="7" fill="#97a2ad"/>
<text x="1021.0" y="762.0" font-family="Liberation Sans" font-size="23" font-weight="bold" fill="#97a2ad" stroke="#ffffff" stroke-width="3" stroke-opacity="0.7" paint-order="stroke" textLength="83.0" lengthAdjust="spacingAndGlyphs">Kanpur</text>
<rect x="1107.0" y="750.0" width="7" height="7" fill="#97a2ad"/>
<text x="1284.6" y="810.0" font-family="Liberation Sans" font-size="23" font-weight="bold" fill="#97a2ad" stroke="#ffffff" stroke-width="3" stroke-opacity="0.7" paint-order="stroke" textLength="65.0" lengthAdjust="spacingAndGlyphs">Patna</text>
<rect x="1355.0" y="798.0" width="7" height="7" fill="#97a2ad"/>
<text x="1146.7" y="825.4" font-family="Liberation Sans" font-size="23" font-weight="bold" fill="#97a2ad" stroke="#ffffff" stroke-width="3" stroke-opacity="0.7" paint-order="stroke" textLength="93.7" lengthAdjust="spacingAndGlyphs">Varanasi</text>
<rect x="1244.0" y="813.4" width="7" height="7" fill="#97a2ad"/>
<text x="1522.0" y="876.0" font-family="Liberation Sans" font-size="27" font-weight="bold" fill="#a9b2bc" stroke="#ffffff" stroke-width="3" stroke-opacity="0.7" paint-order="stroke" textLength="201.0" lengthAdjust="spacingAndGlyphs">BANGLADESH</text>
<text x="1547.8" y="913.3" font-family="Liberation Sans" font-size="23" font-weight="bold" fill="#97a2ad" stroke="#ffffff" stroke-width="3" stroke-opacity="0.7" paint-order="stroke" textLength="68.9" lengthAdjust="spacingAndGlyphs">Dhaka</text>
<rect x="1622.0" y="901.3" width="7" height="7" fill="#97a2ad"/>
<text x="1358.0" y="918.5" font-family="Liberation Sans" font-size="23" font-weight="bold" fill="#97a2ad" stroke="#ffffff" stroke-width="3" stroke-opacity="0.7" paint-order="stroke" textLength="86.4" lengthAdjust="spacingAndGlyphs">Asansol</text>
<rect x="1449.0" y="906.5" width="7" height="7" fill="#97a2ad"/>
<text x="874.4" y="943.0" font-family="Liberation Sans" font-size="23" font-weight="bold" fill="#97a2ad" stroke="#ffffff" stroke-width="3" stroke-opacity="0.7" paint-order="stroke" textLength="78.6" lengthAdjust="spacingAndGlyphs">Bhopal</text>
<rect x="958.7" y="931.0" width="7" height="7" fill="#97a2ad"/>
<text x="666.0" y="955.8" font-family="Liberation Sans" font-size="23" font-weight="bold" fill="#97a2ad" stroke="#ffffff" stroke-width="3" stroke-opacity="0.7" paint-order="stroke" textLength="40.0" lengthAdjust="spacingAndGlyphs">bad</text>
<rect x="710.5" y="943.8" width="7" height="7" fill="#97a2ad"/>
<text x="981.9" y="994.9" font-family="Liberation Sans" font-size="30" font-weight="bold" fill="#a9b2bc" stroke="#ffffff" stroke-width="3" stroke-opacity="0.7" paint-order="stroke" textLength="89.1" lengthAdjust="spacingAndGlyphs">INDIA</text>
<text x="1400.0" y="982.2" font-family="Liberation Sans" font-size="23" font-weight="bold" fill="#97a2ad" stroke="#ffffff" stroke-width="3" stroke-opacity="0.7" paint-order="stroke" textLength="113.0" lengthAdjust="spacingAndGlyphs">KOLKATA</text>
<rect x="1519.0" y="970.2" width="7" height="7" fill="#97a2ad"/>
<text x="1557.6" y="994.9" font-family="Liberation Sans" font-size="23" font-weight="bold" fill="#97a2ad" stroke="#ffffff" stroke-width="3" stroke-opacity="0.7" paint-order="stroke" textLength="132.4" lengthAdjust="spacingAndGlyphs">Chattogram</text>
<rect x="1696.0" y="982.9" width="7" height="7" fill="#97a2ad"/>
<text x="666.0" y="1057.0" font-family="Liberation Sans" font-size="23" font-weight="bold" fill="#97a2ad" stroke="#ffffff" stroke-width="3" stroke-opacity="0.7" paint-order="stroke" textLength="54.0" lengthAdjust="spacingAndGlyphs">Surat</text>
<rect x="724.0" y="1045.0" width="7" height="7" fill="#97a2ad"/>
<text x="957.0" y="1061.0" font-family="Liberation Sans" font-size="23" font-weight="bold" fill="#97a2ad" stroke="#ffffff" stroke-width="3" stroke-opacity="0.7" paint-order="stroke" textLength="85.0" lengthAdjust="spacingAndGlyphs">Nagpur</text>
<rect x="1045.8" y="1049.0" width="7" height="7" fill="#97a2ad"/>
<text x="1095.0" y="1056.4" font-family="Liberation Sans" font-size="23" font-weight="bold" fill="#97a2ad" stroke="#ffffff" stroke-width="3" stroke-opacity="0.7" paint-order="stroke" textLength="61.0" lengthAdjust="spacingAndGlyphs">Bhilai</text>
<rect x="1161.0" y="1044.4" width="7" height="7" fill="#97a2ad"/>
<text x="1216.0" y="1107.0" font-family="Liberation Sans" font-size="23" font-weight="bold" fill="#97a2ad" stroke="#ffffff" stroke-width="3" stroke-opacity="0.7" paint-order="stroke" textLength="168.0" lengthAdjust="spacingAndGlyphs">Bhubaneshwar</text>
<rect x="1389.6" y="1095.0" width="7" height="7" fill="#97a2ad"/>
<text x="666.0" y="1173.5" font-family="Liberation Sans" font-size="23" font-weight="bold" fill="#97a2ad" stroke="#ffffff" stroke-width="3" stroke-opacity="0.7" paint-order="stroke" textLength="55.0" lengthAdjust="spacingAndGlyphs">MBAI</text>
<rect x="727.5" y="1161.5" width="7" height="7" fill="#97a2ad"/>
<text x="716.0" y="1203.0" font-family="Liberation Sans" font-size="23" font-weight="bold" fill="#97a2ad" stroke="#ffffff" stroke-width="3" stroke-opacity="0.7" paint-order="stroke" textLength="55.0" lengthAdjust="spacingAndGlyphs">Pune</text>
<rect x="776.0" y="1191.0" width="7" height="7" fill="#97a2ad"/>
<text x="886.6" y="1267.0" font-family="Liberation Sans" font-size="23" font-weight="bold" fill="#97a2ad" stroke="#ffffff" stroke-width="3" stroke-opacity="0.7" paint-order="stroke" textLength="121.7" lengthAdjust="spacingAndGlyphs">Hyderabad</text>
<rect x="1012.8" y="1255.0" width="7" height="7" fill="#97a2ad"/>
<text x="1078.8" y="1247.8" font-family="Liberation Sans" font-size="23" font-weight="bold" fill="#97a2ad" stroke="#ffffff" stroke-width="3" stroke-opacity="0.7" paint-order="stroke" textLength="177.9" lengthAdjust="spacingAndGlyphs">Visakhapatnam</text>
<rect x="1260.0" y="1235.8" width="7" height="7" fill="#97a2ad"/>
<text x="1437.8" y="1344.6" font-family="Liberation Sans" font-size="27" font-weight="bold" fill="#a9b2bc" stroke="#ffffff" stroke-width="3" stroke-opacity="0.7" paint-order="stroke" textLength="98.0" lengthAdjust="spacingAndGlyphs" font-style="italic">Bay of</text>
<text x="1431.5" y="1372.7" font-family="Liberation Sans" font-size="27" font-weight="bold" fill="#a9b2bc" stroke="#ffffff" stroke-width="3" stroke-opacity="0.7" paint-order="stroke" textLength="108.5" lengthAdjust="spacingAndGlyphs" font-style="italic">Bengal</text>
<text x="1837.0" y="1276.5" font-family="Liberation Sans" font-size="27" font-weight="bold" fill="#a9b2bc" stroke="#ffffff" stroke-width="3" stroke-opacity="0.7" paint-order="stroke" textLength="151.3" lengthAdjust="spacingAndGlyphs">MYANMAR</text>
<text x="807.3" y="1501.0" font-family="Liberation Sans" font-size="23" font-weight="bold" fill="#97a2ad" stroke="#ffffff" stroke-width="3" stroke-opacity="0.7" paint-order="stroke" textLength="156.0" lengthAdjust="spacingAndGlyphs">BENGALURU</text>
<rect x="968.0" y="1489.0" width="7" height="7" fill="#97a2ad"/>
<text x="1008.3" y="1493.0" font-family="Liberation Sans" font-size="23" font-weight="bold" fill="#97a2ad" stroke="#ffffff" stroke-width="3" stroke-opacity="0.7" paint-order="stroke" textLength="92.4" lengthAdjust="spacingAndGlyphs">Chennai</text>
<rect x="1105.0" y="1481.0" width="7" height="7" fill="#97a2ad"/>
<text x="752.4" y="1590.0" font-family="Liberation Sans" font-size="23" font-weight="bold" fill="#97a2ad" stroke="#ffffff" stroke-width="3" stroke-opacity="0.7" paint-order="stroke" textLength="118.6" lengthAdjust="spacingAndGlyphs">Kozhikode</text>
<rect x="875.5" y="1578.0" width="7" height="7" fill="#97a2ad"/>
<text x="899.0" y="1658.5" font-family="Liberation Sans" font-size="23" font-weight="bold" fill="#97a2ad" stroke="#ffffff" stroke-width="3" stroke-opacity="0.7" paint-order="stroke" textLength="90.6" lengthAdjust="spacingAndGlyphs">Madurai</text>
<rect x="994.7" y="1646.5" width="7" height="7" fill="#97a2ad"/>
<text x="1785.4" y="1641.7" font-family="Liberation Sans" font-size="27" font-weight="bold" fill="#a9b2bc" stroke="#ffffff" stroke-width="3" stroke-opacity="0.7" paint-order="stroke" textLength="153.0" lengthAdjust="spacingAndGlyphs" font-style="italic">Andaman</text>
<text x="1833.5" y="1669.8" font-family="Liberation Sans" font-size="27" font-weight="bold" fill="#a9b2bc" stroke="#ffffff" stroke-width="3" stroke-opacity="0.7" paint-order="stroke" textLength="58.1" lengthAdjust="spacingAndGlyphs" font-style="italic">Sea</text>
<text x="1053.9" y="1783.4" font-family="Liberation Sans" font-size="27" font-weight="bold" fill="#a9b2bc" stroke="#ffffff" stroke-width="3" stroke-opacity="0.7" paint-order="stroke" textLength="155.4" lengthAdjust="spacingAndGlyphs">SRI LANKA</text>
<text x="978.3" y="1813.4" font-family="Liberation Sans" font-size="23" font-weight="bold" fill="#97a2ad" stroke="#ffffff" stroke-width="3" stroke-opacity="0.7" paint-order="stroke" textLength="101.7" lengthAdjust="spacingAndGlyphs">Colombo</text>
<rect x="1084.6" y="1801.4" width="7" height="7" fill="#97a2ad"/>
<text x="2889.0" y="400.8" font-family="Liberation Sans" font-size="23" font-weight="bold" fill="#97a2ad" stroke="#ffffff" stroke-width="3" stroke-opacity="0.7" paint-order="stroke" textLength="93.0" lengthAdjust="spacingAndGlyphs">Huainan</text>
<rect x="2986.0" y="388.8" width="7" height="7" fill="#97a2ad"/>
<text x="2191.4" y="518.4" font-family="Liberation Sans" font-size="23" font-weight="bold" fill="#97a2ad" stroke="#ffffff" stroke-width="3" stroke-opacity="0.7" paint-order="stroke" textLength="127.0" lengthAdjust="spacingAndGlyphs">CHENGDU</text>
<rect x="2324.0" y="506.4" width="7" height="7" fill="#97a2ad"/>
<text x="2322.4" y="583.0" font-family="Liberation Sans" font-size="23" font-weight="bold" fill="#97a2ad" stroke="#ffffff" stroke-width="3" stroke-opacity="0.7" paint-order="stroke" textLength="124.1" lengthAdjust="spacingAndGlyphs">Chongqing</text>
<text x="2359.0" y="752.0" font-family="Liberation Sans" font-size="23" font-weight="bold" fill="#97a2ad" stroke="#ffffff" stroke-width="3" stroke-opacity="0.7" paint-order="stroke" textLength="89.0" lengthAdjust="spacingAndGlyphs">Guiyang</text>
<text x="2145.4" y="843.3" font-family="Liberation Sans" font-size="23" font-weight="bold" fill="#97a2ad" stroke="#ffffff" stroke-width="3" stroke-opacity="0.7" paint-order="stroke" textLength="103.1" lengthAdjust="spacingAndGlyphs">Kunming</text>
<rect x="2254.0" y="831.3" width="7" height="7" fill="#97a2ad"/>
<text x="2345.3" y="1066.8" font-family="Liberation Sans" font-size="23" font-weight="bold" fill="#97a2ad" stroke="#ffffff" stroke-width="3" stroke-opacity="0.7" paint-order="stroke" textLength="64.7" lengthAdjust="spacingAndGlyphs">Hanoi</text>
<rect x="2414.4" y="1054.8" width="7" height="7" fill="#97a2ad"/>
<text x="2254.8" y="1124.8" font-family="Liberation Sans" font-size="27" font-weight="bold" fill="#a9b2bc" stroke="#ffffff" stroke-width="3" stroke-opacity="0.7" paint-order="stroke" textLength="74.2" lengthAdjust="spacingAndGlyphs">LAOS</text>
<text x="2138.7" y="1234.0" font-family="Liberation Sans" font-size="23" font-weight="bold" fill="#97a2ad" stroke="#ffffff" stroke-width="3" stroke-opacity="0.7" paint-order="stroke" textLength="106.1" lengthAdjust="spacingAndGlyphs">Vientiane</text>
<rect x="2248.7" y="1222.0" width="7" height="7" fill="#97a2ad"/>
<text x="2085.7" y="1397.6" font-family="Liberation Sans" font-size="27" font-weight="bold" fill="#a9b2bc" stroke="#ffffff" stroke-width="3" stroke-opacity="0.7" paint-order="stroke" textLength="150.3" lengthAdjust="spacingAndGlyphs">THAILAND</text>
<text x="2008.6" y="1458.8" font-family="Liberation Sans" font-size="23" font-weight="bold" fill="#97a2ad" stroke="#ffffff" stroke-width="3" stroke-opacity="0.7" paint-order="stroke" textLength="122.4" lengthAdjust="spacingAndGlyphs">BANGKOK</text>
<rect x="2140.0" y="1446.8" width="7" height="7" fill="#97a2ad"/>
<text x="2285.4" y="1524.3" font-family="Liberation Sans" font-size="27" font-weight="bold" fill="#a9b2bc" stroke="#ffffff" stroke-width="3" stroke-opacity="0.7" paint-order="stroke" textLength="159.8" lengthAdjust="spacingAndGlyphs">CAMBODIA</text>
<text x="2217.4" y="1573.0" font-family="Liberation Sans" font-size="23" font-weight="bold" fill="#97a2ad" stroke="#ffffff" stroke-width="3" stroke-opacity="0.7" paint-order="stroke" textLength="146.6" lengthAdjust="spacingAndGlyphs">Phnom Penh</text>
<rect x="2367.0" y="1561.0" width="7" height="7" fill="#97a2ad"/>
<text x="2317.0" y="1602.4" font-family="Liberation Sans" font-size="23" font-weight="bold" fill="#97a2ad" stroke="#ffffff" stroke-width="3" stroke-opacity="0.7" paint-order="stroke" textLength="137.0" lengthAdjust="spacingAndGlyphs">Ho Chi Minh</text>
<text x="2410.9" y="1626.0" font-family="Liberation Sans" font-size="23" font-weight="bold" fill="#97a2ad" stroke="#ffffff" stroke-width="3" stroke-opacity="0.7" paint-order="stroke" textLength="43.1" lengthAdjust="spacingAndGlyphs">City</text>
<rect x="2459.0" y="1614.0" width="7" height="7" fill="#97a2ad"/>
<text x="3085.0" y="1413.2" font-family="Liberation Sans" font-size="23" font-weight="bold" fill="#97a2ad" stroke="#ffffff" stroke-width="3" stroke-opacity="0.7" paint-order="stroke" textLength="99.3" lengthAdjust="spacingAndGlyphs">MANILA</text>
<rect x="3188.0" y="1401.2" width="7" height="7" fill="#97a2ad"/>
<text x="3185.0" y="1513.0" font-family="Liberation Sans" font-size="27" font-weight="bold" fill="#a9b2bc" stroke="#ffffff" stroke-width="3" stroke-opacity="0.7" paint-order="stroke" textLength="196.0" lengthAdjust="spacingAndGlyphs">PHILIPPINES</text>
<text x="3163.0" y="1618.0" font-family="Liberation Sans" font-size="23" font-weight="bold" fill="#97a2ad" stroke="#ffffff" stroke-width="3" stroke-opacity="0.7" paint-order="stroke" textLength="103.0" lengthAdjust="spacingAndGlyphs">Iloilo City</text>
<rect x="3270.5" y="1606.0" width="7" height="7" fill="#97a2ad"/>
<text x="3348.4" y="1640.0" font-family="Liberation Sans" font-size="23" font-weight="bold" fill="#97a2ad" stroke="#ffffff" stroke-width="3" stroke-opacity="0.7" paint-order="stroke" textLength="106.2" lengthAdjust="spacingAndGlyphs">Cebu City</text>
<rect x="3339.0" y="1628.0" width="7" height="7" fill="#97a2ad"/>
<text x="3304.7" y="1806.5" font-family="Liberation Sans" font-size="23" font-weight="bold" fill="#97a2ad" stroke="#ffffff" stroke-width="3" stroke-opacity="0.7" paint-order="stroke" textLength="115.3" lengthAdjust="spacingAndGlyphs">Davao City</text>
<rect x="3426.6" y="1794.5" width="7" height="7" fill="#97a2ad"/>
<text x="3538.0" y="392.0" font-family="Liberation Sans" font-size="23" font-weight="bold" fill="#97a2ad" stroke="#ffffff" stroke-width="3" stroke-opacity="0.7" paint-order="stroke" textLength="29.0" lengthAdjust="spacingAndGlyphs">Na</text>
<text x="1781.0" y="1137.3" font-family="Liberation Sans" font-size="23" font-weight="bold" fill="#97a2ad" stroke="#ffffff" stroke-width="3" stroke-opacity="0.7" paint-order="stroke" textLength="132.4" lengthAdjust="spacingAndGlyphs">Nay Pyi Taw</text>
<rect x="1916.6" y="1125.3" width="7" height="7" fill="#97a2ad"/>
<g>
<filter id="ub" x="-20%" y="-20%" width="140%" height="140%"><feGaussianBlur stdDeviation="7"/></filter>
<g filter="url(#ub)" opacity="0.8">
<polygon points="1797.0,915.0 1830.0,905.0 1836.0,1000.0 1834.0,1075.0 1802.0,1080.0 1794.0,1000.0" fill="#ff8494" stroke="#ff8494" stroke-width="6" stroke-linejoin="round"/>
<polygon points="1872.0,852.0 1990.0,848.0 2002.0,900.0 1940.0,918.0 1876.0,925.0" fill="#ff8494" stroke="#ff8494" stroke-width="6" stroke-linejoin="round"/>
<polygon points="1972.0,800.0 2002.0,800.0 2008.0,912.0 1974.0,916.0" fill="#ff8494" stroke="#ff8494" stroke-width="6" stroke-linejoin="round"/>
<polygon points="1836.0,935.0 1935.0,925.0 1942.0,1050.0 1840.0,1060.0" fill="#ff8494" stroke="#ff8494" stroke-width="6" stroke-linejoin="round"/>
<polygon points="1926.0,1142.0 1944.0,1136.0 1968.0,1238.0 1950.0,1246.0" fill="#ff8494" stroke="#ff8494" stroke-width="6" stroke-linejoin="round"/>
<polygon points="1742.0,1052.0 1794.0,1080.0 1800.0,1118.0 1756.0,1110.0" fill="#ff8494" stroke="#ff8494" stroke-width="6" stroke-linejoin="round"/>
</g>
<circle cx="1803.5" cy="1077.9" r="3.0" fill="#ff6f80" fill-opacity="0.3" stroke="#ff6f80" stroke-opacity="0.6" stroke-width="2.4"/>
<circle cx="1849.1" cy="1091.0" r="5.5" fill="#ff6f80" fill-opacity="0.3" stroke="#ff6f80" stroke-opacity="0.6" stroke-width="2.4"/>
<circle cx="1997.5" cy="758.7" r="5.8" fill="#ff6f80" fill-opacity="0.3" stroke="#ff6f80" stroke-opacity="0.6" stroke-width="2.4"/>
<circle cx="1833.5" cy="1100.7" r="2.0" fill="#3fd3a0" fill-opacity="0.3" stroke="#3fd3a0" stroke-opacity="0.6" stroke-width="2.4"/>
<circle cx="1977.8" cy="863.6" r="3.5" fill="#ff6f80" fill-opacity="0.3" stroke="#ff6f80" stroke-opacity="0.6" stroke-width="2.4"/>
<circle cx="1917.8" cy="990.9" r="7.0" fill="#ff6f80" fill-opacity="0.3" stroke="#ff6f80" stroke-opacity="0.6" stroke-width="2.4"/>
<circle cx="1910.5" cy="926.5" r="3.0" fill="#ff6f80" fill-opacity="0.3" stroke="#ff6f80" stroke-opacity="0.6" stroke-width="2.4"/>
<circle cx="1997.7" cy="872.4" r="5.3" fill="#ff6f80" fill-opacity="0.3" stroke="#ff6f80" stroke-opacity="0.6" stroke-width="2.4"/>
<circle cx="1966.5" cy="881.7" r="5.0" fill="#ff6f80" fill-opacity="0.3" stroke="#ff6f80" stroke-opacity="0.6" stroke-width="2.4"/>
<circle cx="1996.1" cy="711.3" r="2.9" fill="#ff6f80" fill-opacity="0.3" stroke="#ff6f80" stroke-opacity="0.6" stroke-width="2.4"/>
<circle cx="1941.6" cy="882.1" r="3.0" fill="#3fd3a0" fill-opacity="0.3" stroke="#3fd3a0" stroke-opacity="0.6" stroke-width="2.4"/>
<circle cx="1785.7" cy="1090.8" r="6.9" fill="#ff6f80" fill-opacity="0.3" stroke="#ff6f80" stroke-opacity="0.6" stroke-width="2.4"/>
<circle cx="2010.0" cy="876.5" r="8.3" fill="#ff6f80" fill-opacity="0.3" stroke="#ff6f80" stroke-opacity="0.6" stroke-width="2.4"/>
<circle cx="1744.7" cy="1061.6" r="17.2" fill="#3fd3a0" fill-opacity="0.13" stroke="#3fd3a0" stroke-opacity="0.6" stroke-width="2.4"/>
<circle cx="1874.8" cy="936.2" r="3.0" fill="#ff6f80" fill-opacity="0.3" stroke="#ff6f80" stroke-opacity="0.6" stroke-width="2.4"/>
<circle cx="1948.0" cy="1197.0" r="3.6" fill="#ff6f80" fill-opacity="0.3" stroke="#ff6f80" stroke-opacity="0.6" stroke-width="2.4"/>
<circle cx="1801.0" cy="1046.0" r="3.0" fill="#ff6f80" fill-opacity="0.3" stroke="#ff6f80" stroke-opacity="0.6" stroke-width="2.4"/>
<circle cx="1847.2" cy="1130.8" r="2.0" fill="#3fd3a0" fill-opacity="0.3" stroke="#3fd3a0" stroke-opacity="0.6" stroke-width="2.4"/>
<circle cx="1904.1" cy="837.5" r="4.2" fill="#ff6f80" fill-opacity="0.3" stroke="#ff6f80" stroke-opacity="0.6" stroke-width="2.4"/>
<circle cx="1841.6" cy="932.5" r="3.1" fill="#ff6f80" fill-opacity="0.3" stroke="#ff6f80" stroke-opacity="0.6" stroke-width="2.4"/>
<circle cx="1821.9" cy="968.9" r="7.4" fill="#ff6f80" fill-opacity="0.3" stroke="#ff6f80" stroke-opacity="0.6" stroke-width="2.4"/>
<circle cx="1894.5" cy="850.7" r="9.1" fill="#ff6f80" fill-opacity="0.3" stroke="#ff6f80" stroke-opacity="0.6" stroke-width="2.4"/>
<circle cx="1892.5" cy="1128.3" r="2.3" fill="#ff6f80" fill-opacity="0.3" stroke="#ff6f80" stroke-opacity="0.6" stroke-width="2.4"/>
<circle cx="1807.4" cy="989.0" r="3.6" fill="#ff6f80" fill-opacity="0.3" stroke="#ff6f80" stroke-opacity="0.6" stroke-width="2.4"/>
<circle cx="1947.7" cy="1163.0" r="4.1" fill="#ff6f80" fill-opacity="0.3" stroke="#ff6f80" stroke-opacity="0.6" stroke-width="2.4"/>
<circle cx="1944.0" cy="1067.7" r="6.0" fill="#ff6f80" fill-opacity="0.3" stroke="#ff6f80" stroke-opacity="0.6" stroke-width="2.4"/>
<circle cx="1848.9" cy="1181.6" r="5.2" fill="#ff6f80" fill-opacity="0.3" stroke="#ff6f80" stroke-opacity="0.6" stroke-width="2.4"/>
<circle cx="1945.4" cy="1184.1" r="6.3" fill="#3fd3a0" fill-opacity="0.3" stroke="#3fd3a0" stroke-opacity="0.6" stroke-width="2.4"/>
<circle cx="1802.4" cy="932.8" r="3.0" fill="#ff6f80" fill-opacity="0.3" stroke="#ff6f80" stroke-opacity="0.6" stroke-width="2.4"/>
<circle cx="1805.2" cy="1153.6" r="2.1" fill="#3fd3a0" fill-opacity="0.3" stroke="#3fd3a0" stroke-opacity="0.6" stroke-width="2.4"/>
<circle cx="1796.9" cy="1088.7" r="5.8" fill="#ff6f80" fill-opacity="0.3" stroke="#ff6f80" stroke-opacity="0.6" stroke-width="2.4"/>
<circle cx="1902.6" cy="1010.7" r="4.2" fill="#ff6f80" fill-opacity="0.3" stroke="#ff6f80" stroke-opacity="0.6" stroke-width="2.4"/>
<circle cx="1941.7" cy="967.0" r="5.0" fill="#3fd3a0" fill-opacity="0.3" stroke="#3fd3a0" stroke-opacity="0.6" stroke-width="2.4"/>
<circle cx="1907.2" cy="933.5" r="3.9" fill="#ff6f80" fill-opacity="0.3" stroke="#ff6f80" stroke-opacity="0.6" stroke-width="2.4"/>
<circle cx="1886.4" cy="1036.1" r="3.2" fill="#ff6f80" fill-opacity="0.3" stroke="#ff6f80" stroke-opacity="0.6" stroke-width="2.4"/>
<circle cx="1999.6" cy="807.0" r="2.9" fill="#ff6f80" fill-opacity="0.3" stroke="#ff6f80" stroke-opacity="0.6" stroke-width="2.4"/>
<circle cx="1912.4" cy="1026.2" r="5.1" fill="#ff6f80" fill-opacity="0.3" stroke="#ff6f80" stroke-opacity="0.6" stroke-width="2.4"/>
<circle cx="1906.3" cy="832.5" r="3.1" fill="#ff6f80" fill-opacity="0.3" stroke="#ff6f80" stroke-opacity="0.6" stroke-width="2.4"/>
<circle cx="1919.8" cy="1085.8" r="4.5" fill="#3fd3a0" fill-opacity="0.3" stroke="#3fd3a0" stroke-opacity="0.6" stroke-width="2.4"/>
<circle cx="1893.8" cy="996.1" r="8.0" fill="#3fd3a0" fill-opacity="0.3" stroke="#3fd3a0" stroke-opacity="0.6" stroke-width="2.4"/>
<circle cx="1991.6" cy="888.5" r="3.2" fill="#ff6f80" fill-opacity="0.3" stroke="#ff6f80" stroke-opacity="0.6" stroke-width="2.4"/>
<circle cx="1924.6" cy="1158.6" r="3.0" fill="#ff6f80" fill-opacity="0.3" stroke="#ff6f80" stroke-opacity="0.6" stroke-width="2.4"/>
<circle cx="1938.7" cy="1125.2" r="3.6" fill="#ff6f80" fill-opacity="0.3" stroke="#ff6f80" stroke-opacity="0.6" stroke-width="2.4"/>
<circle cx="1936.9" cy="1146.8" r="3.2" fill="#ff6f80" fill-opacity="0.3" stroke="#ff6f80" stroke-opacity="0.6" stroke-width="2.4"/>
<circle cx="1824.0" cy="880.0" r="10.0" fill="#ff6f80" fill-opacity="0.13" stroke="#ff6f80" stroke-opacity="0.6" stroke-width="2.4"/>
<circle cx="1892.1" cy="1245.7" r="2.1" fill="#3fd3a0" fill-opacity="0.3" stroke="#3fd3a0" stroke-opacity="0.6" stroke-width="2.4"/>
<circle cx="1987.1" cy="863.6" r="3.0" fill="#ff6f80" fill-opacity="0.3" stroke="#ff6f80" stroke-opacity="0.6" stroke-width="2.4"/>
<circle cx="1774.1" cy="1083.6" r="4.0" fill="#ff6f80" fill-opacity="0.3" stroke="#ff6f80" stroke-opacity="0.6" stroke-width="2.4"/>
<circle cx="1743.5" cy="1064.5" r="6.8" fill="#3fd3a0" fill-opacity="0.3" stroke="#3fd3a0" stroke-opacity="0.6" stroke-width="2.4"/>
<circle cx="1936.9" cy="878.4" r="3.1" fill="#ff6f80" fill-opacity="0.3" stroke="#ff6f80" stroke-opacity="0.6" stroke-width="2.4"/>
<circle cx="1852.7" cy="982.9" r="6.0" fill="#3fd3a0" fill-opacity="0.3" stroke="#3fd3a0" stroke-opacity="0.6" stroke-width="2.4"/>
<circle cx="1895.4" cy="997.5" r="3.3" fill="#ff6f80" fill-opacity="0.3" stroke="#ff6f80" stroke-opacity="0.6" stroke-width="2.4"/>
<circle cx="1826.8" cy="1020.1" r="5.1" fill="#ff6f80" fill-opacity="0.3" stroke="#ff6f80" stroke-opacity="0.6" stroke-width="2.4"/>
<circle cx="1825.0" cy="999.1" r="6.9" fill="#ff6f80" fill-opacity="0.3" stroke="#ff6f80" stroke-opacity="0.6" stroke-width="2.4"/>
<circle cx="1791.1" cy="1009.6" r="8.3" fill="#ff6f80" fill-opacity="0.3" stroke="#ff6f80" stroke-opacity="0.6" stroke-width="2.4"/>
<circle cx="1976.9" cy="896.6" r="3.4" fill="#3fd3a0" fill-opacity="0.3" stroke="#3fd3a0" stroke-opacity="0.6" stroke-width="2.4"/>
<circle cx="1900.4" cy="979.4" r="3.0" fill="#ff6f80" fill-opacity="0.3" stroke="#ff6f80" stroke-opacity="0.6" stroke-width="2.4"/>
<circle cx="1965.7" cy="1231.5" r="4.9" fill="#ff6f80" fill-opacity="0.3" stroke="#ff6f80" stroke-opacity="0.6" stroke-width="2.4"/>
<circle cx="1842.3" cy="1056.6" r="4.3" fill="#ff6f80" fill-opacity="0.3" stroke="#ff6f80" stroke-opacity="0.6" stroke-width="2.4"/>
<circle cx="1881.4" cy="991.3" r="4.8" fill="#3fd3a0" fill-opacity="0.3" stroke="#3fd3a0" stroke-opacity="0.6" stroke-width="2.4"/>
<circle cx="1808.8" cy="1051.0" r="3.0" fill="#ff6f80" fill-opacity="0.3" stroke="#ff6f80" stroke-opacity="0.6" stroke-width="2.4"/>
<circle cx="1839.4" cy="1172.2" r="2.3" fill="#ff6f80" fill-opacity="0.3" stroke="#ff6f80" stroke-opacity="0.6" stroke-width="2.4"/>
<circle cx="1967.8" cy="1106.6" r="7.5" fill="#ff6f80" fill-opacity="0.3" stroke="#ff6f80" stroke-opacity="0.6" stroke-width="2.4"/>
<circle cx="1893.0" cy="894.1" r="7.6" fill="#ff6f80" fill-opacity="0.3" stroke="#ff6f80" stroke-opacity="0.6" stroke-width="2.4"/>
<circle cx="1921.4" cy="862.5" r="9.3" fill="#ff6f80" fill-opacity="0.3" stroke="#ff6f80" stroke-opacity="0.6" stroke-width="2.4"/>
<circle cx="1815.2" cy="1069.1" r="3.0" fill="#ff6f80" fill-opacity="0.3" stroke="#ff6f80" stroke-opacity="0.6" stroke-width="2.4"/>
<circle cx="1775.1" cy="1077.4" r="4.1" fill="#3fd3a0" fill-opacity="0.3" stroke="#3fd3a0" stroke-opacity="0.6" stroke-width="2.4"/>
<circle cx="1847.7" cy="1072.7" r="2.0" fill="#ff6f80" fill-opacity="0.3" stroke="#ff6f80" stroke-opacity="0.6" stroke-width="2.4"/>
<circle cx="1918.7" cy="902.7" r="4.7" fill="#ff6f80" fill-opacity="0.3" stroke="#ff6f80" stroke-opacity="0.6" stroke-width="2.4"/>
<circle cx="1831.0" cy="914.5" r="7.2" fill="#ff6f80" fill-opacity="0.3" stroke="#ff6f80" stroke-opacity="0.6" stroke-width="2.4"/>
<circle cx="1917.6" cy="872.7" r="7.8" fill="#ff6f80" fill-opacity="0.3" stroke="#ff6f80" stroke-opacity="0.6" stroke-width="2.4"/>
<circle cx="2018.6" cy="1014.2" r="2.0" fill="#3fd3a0" fill-opacity="0.3" stroke="#3fd3a0" stroke-opacity="0.6" stroke-width="2.4"/>
<circle cx="1953.6" cy="1193.2" r="3.8" fill="#ff6f80" fill-opacity="0.3" stroke="#ff6f80" stroke-opacity="0.6" stroke-width="2.4"/>
<circle cx="1801.6" cy="1107.2" r="6.0" fill="#ff6f80" fill-opacity="0.3" stroke="#ff6f80" stroke-opacity="0.6" stroke-width="2.4"/>
<circle cx="1857.0" cy="1099.5" r="2.0" fill="#ff6f80" fill-opacity="0.3" stroke="#ff6f80" stroke-opacity="0.6" stroke-width="2.4"/>
<circle cx="1820.9" cy="980.9" r="3.9" fill="#ff6f80" fill-opacity="0.3" stroke="#ff6f80" stroke-opacity="0.6" stroke-width="2.4"/>
<circle cx="2030.4" cy="1039.4" r="4.5" fill="#ff6f80" fill-opacity="0.3" stroke="#ff6f80" stroke-opacity="0.6" stroke-width="2.4"/>
<circle cx="1864.8" cy="961.5" r="5.5" fill="#3fd3a0" fill-opacity="0.3" stroke="#3fd3a0" stroke-opacity="0.6" stroke-width="2.4"/>
<circle cx="1852.9" cy="1180.9" r="2.0" fill="#ff6f80" fill-opacity="0.3" stroke="#ff6f80" stroke-opacity="0.6" stroke-width="2.4"/>
<circle cx="1981.6" cy="872.3" r="3.0" fill="#ff6f80" fill-opacity="0.3" stroke="#ff6f80" stroke-opacity="0.6" stroke-width="2.4"/>
<circle cx="1903.7" cy="859.8" r="7.6" fill="#3fd3a0" fill-opacity="0.3" stroke="#3fd3a0" stroke-opacity="0.6" stroke-width="2.4"/>
<circle cx="1982.5" cy="846.7" r="3.0" fill="#ff6f80" fill-opacity="0.3" stroke="#ff6f80" stroke-opacity="0.6" stroke-width="2.4"/>
<circle cx="1791.6" cy="968.3" r="3.0" fill="#ff6f80" fill-opacity="0.3" stroke="#ff6f80" stroke-opacity="0.6" stroke-width="2.4"/>
<circle cx="1976.4" cy="1026.6" r="4.2" fill="#ff6f80" fill-opacity="0.3" stroke="#ff6f80" stroke-opacity="0.6" stroke-width="2.4"/>
<circle cx="1812.6" cy="1029.1" r="3.0" fill="#ff6f80" fill-opacity="0.3" stroke="#ff6f80" stroke-opacity="0.6" stroke-width="2.4"/>
<circle cx="1825.8" cy="886.0" r="5.9" fill="#ff6f80" fill-opacity="0.3" stroke="#ff6f80" stroke-opacity="0.6" stroke-width="2.4"/>
<circle cx="1928.1" cy="1151.2" r="3.3" fill="#3fd3a0" fill-opacity="0.3" stroke="#3fd3a0" stroke-opacity="0.6" stroke-width="2.4"/>
<circle cx="2001.3" cy="855.0" r="9.5" fill="#ff6f80" fill-opacity="0.3" stroke="#ff6f80" stroke-opacity="0.6" stroke-width="2.4"/>
<circle cx="1908.7" cy="952.7" r="3.9" fill="#ff6f80" fill-opacity="0.3" stroke="#ff6f80" stroke-opacity="0.6" stroke-width="2.4"/>
<circle cx="1791.0" cy="1108.0" r="4.1" fill="#ff6f80" fill-opacity="0.3" stroke="#ff6f80" stroke-opacity="0.6" stroke-width="2.4"/>
<circle cx="1883.3" cy="1109.5" r="2.6" fill="#ff6f80" fill-opacity="0.3" stroke="#ff6f80" stroke-opacity="0.6" stroke-width="2.4"/>
<circle cx="1926.9" cy="824.8" r="3.2" fill="#ff6f80" fill-opacity="0.3" stroke="#ff6f80" stroke-opacity="0.6" stroke-width="2.4"/>
<circle cx="1943.8" cy="1170.7" r="3.0" fill="#ff6f80" fill-opacity="0.3" stroke="#ff6f80" stroke-opacity="0.6" stroke-width="2.4"/>
<circle cx="1876.5" cy="972.8" r="3.5" fill="#ff6f80" fill-opacity="0.3" stroke="#ff6f80" stroke-opacity="0.6" stroke-width="2.4"/>
<circle cx="1931.7" cy="1292.2" r="5.9" fill="#ff6f80" fill-opacity="0.3" stroke="#ff6f80" stroke-opacity="0.6" stroke-width="2.4"/>
<circle cx="1828.6" cy="871.2" r="6.5" fill="#3fd3a0" fill-opacity="0.3" stroke="#3fd3a0" stroke-opacity="0.6" stroke-width="2.4"/>
<circle cx="1839.8" cy="846.2" r="4.5" fill="#ff6f80" fill-opacity="0.3" stroke="#ff6f80" stroke-opacity="0.6" stroke-width="2.4"/>
<circle cx="1871.5" cy="1165.0" r="4.0" fill="#ff6f80" fill-opacity="0.3" stroke="#ff6f80" stroke-opacity="0.6" stroke-width="2.4"/>
<circle cx="1905.3" cy="962.7" r="3.0" fill="#3fd3a0" fill-opacity="0.3" stroke="#3fd3a0" stroke-opacity="0.6" stroke-width="2.4"/>
<circle cx="1991.0" cy="785.8" r="3.4" fill="#ff6f80" fill-opacity="0.3" stroke="#ff6f80" stroke-opacity="0.6" stroke-width="2.4"/>
<circle cx="1903.1" cy="1223.5" r="2.4" fill="#ff6f80" fill-opacity="0.3" stroke="#ff6f80" stroke-opacity="0.6" stroke-width="2.4"/>
<circle cx="1906.9" cy="939.8" r="3.0" fill="#ff6f80" fill-opacity="0.3" stroke="#ff6f80" stroke-opacity="0.6" stroke-width="2.4"/>
<circle cx="1915.1" cy="940.3" r="5.4" fill="#ff6f80" fill-opacity="0.3" stroke="#ff6f80" stroke-opacity="0.6" stroke-width="2.4"/>
<circle cx="1827.9" cy="1076.4" r="6.3" fill="#ff6f80" fill-opacity="0.3" stroke="#ff6f80" stroke-opacity="0.6" stroke-width="2.4"/>
<circle cx="1880.1" cy="964.8" r="4.7" fill="#ff6f80" fill-opacity="0.3" stroke="#ff6f80" stroke-opacity="0.6" stroke-width="2.4"/>
<circle cx="1997.5" cy="826.4" r="5.0" fill="#ff6f80" fill-opacity="0.3" stroke="#ff6f80" stroke-opacity="0.6" stroke-width="2.4"/>
<circle cx="1830.1" cy="1089.1" r="2.3" fill="#ff6f80" fill-opacity="0.3" stroke="#ff6f80" stroke-opacity="0.6" stroke-width="2.4"/>
<circle cx="1802.7" cy="922.2" r="3.0" fill="#ff6f80" fill-opacity="0.3" stroke="#ff6f80" stroke-opacity="0.6" stroke-width="2.4"/>
<circle cx="1905.4" cy="998.0" r="5.1" fill="#ff6f80" fill-opacity="0.3" stroke="#ff6f80" stroke-opacity="0.6" stroke-width="2.4"/>
<circle cx="1976.7" cy="884.1" r="3.2" fill="#ff6f80" fill-opacity="0.3" stroke="#ff6f80" stroke-opacity="0.6" stroke-width="2.4"/>
<circle cx="1814.2" cy="982.7" r="3.1" fill="#ff6f80" fill-opacity="0.3" stroke="#ff6f80" stroke-opacity="0.6" stroke-width="2.4"/>
<circle cx="1810.7" cy="913.9" r="9.4" fill="#ff6f80" fill-opacity="0.3" stroke="#ff6f80" stroke-opacity="0.6" stroke-width="2.4"/>
<circle cx="1800.0" cy="919.6" r="10.3" fill="#ff6f80" fill-opacity="0.13" stroke="#ff6f80" stroke-opacity="0.6" stroke-width="2.4"/>
<circle cx="1850.6" cy="1113.3" r="2.5" fill="#ff6f80" fill-opacity="0.3" stroke="#ff6f80" stroke-opacity="0.6" stroke-width="2.4"/>
<circle cx="1806.3" cy="973.7" r="7.5" fill="#ff6f80" fill-opacity="0.3" stroke="#ff6f80" stroke-opacity="0.6" stroke-width="2.4"/>
<circle cx="1921.7" cy="1273.6" r="2.1" fill="#ff6f80" fill-opacity="0.3" stroke="#ff6f80" stroke-opacity="0.6" stroke-width="2.4"/>
<circle cx="1899.1" cy="805.5" r="3.8" fill="#ff6f80" fill-opacity="0.3" stroke="#ff6f80" stroke-opacity="0.6" stroke-width="2.4"/>
<circle cx="1877.2" cy="987.0" r="3.4" fill="#ff6f80" fill-opacity="0.3" stroke="#ff6f80" stroke-opacity="0.6" stroke-width="2.4"/>
<circle cx="1798.9" cy="944.7" r="3.1" fill="#ff6f80" fill-opacity="0.3" stroke="#ff6f80" stroke-opacity="0.6" stroke-width="2.4"/>
<circle cx="1784.4" cy="1090.6" r="3.0" fill="#ff6f80" fill-opacity="0.3" stroke="#ff6f80" stroke-opacity="0.6" stroke-width="2.4"/>
<circle cx="1876.4" cy="1043.0" r="5.2" fill="#3fd3a0" fill-opacity="0.3" stroke="#3fd3a0" stroke-opacity="0.6" stroke-width="2.4"/>
<circle cx="1974.6" cy="834.2" r="5.6" fill="#ff6f80" fill-opacity="0.3" stroke="#ff6f80" stroke-opacity="0.6" stroke-width="2.4"/>
<circle cx="1766.2" cy="1077.7" r="9.3" fill="#ff6f80" fill-opacity="0.3" stroke="#ff6f80" stroke-opacity="0.6" stroke-width="2.4"/>
<circle cx="1892.6" cy="1036.0" r="3.0" fill="#ff6f80" fill-opacity="0.3" stroke="#ff6f80" stroke-opacity="0.6" stroke-width="2.4"/>
<circle cx="1778.5" cy="1134.2" r="3.7" fill="#3fd3a0" fill-opacity="0.3" stroke="#3fd3a0" stroke-opacity="0.6" stroke-width="2.4"/>
<circle cx="1953.1" cy="1207.6" r="6.0" fill="#3fd3a0" fill-opacity="0.3" stroke="#3fd3a0" stroke-opacity="0.6" stroke-width="2.4"/>
<circle cx="1886.6" cy="923.1" r="5.5" fill="#ff6f80" fill-opacity="0.3" stroke="#ff6f80" stroke-opacity="0.6" stroke-width="2.4"/>
<circle cx="1916.9" cy="861.5" r="3.0" fill="#ff6f80" fill-opacity="0.3" stroke="#ff6f80" stroke-opacity="0.6" stroke-width="2.4"/>
<circle cx="1794.4" cy="932.8" r="3.5" fill="#ff6f80" fill-opacity="0.3" stroke="#ff6f80" stroke-opacity="0.6" stroke-width="2.4"/>
<circle cx="1818.0" cy="1057.0" r="3.8" fill="#ff6f80" fill-opacity="0.3" stroke="#ff6f80" stroke-opacity="0.6" stroke-width="2.4"/>
<circle cx="1998.2" cy="909.4" r="3.1" fill="#ff6f80" fill-opacity="0.3" stroke="#ff6f80" stroke-opacity="0.6" stroke-width="2.4"/>
<circle cx="1867.9" cy="972.8" r="3.1" fill="#3fd3a0" fill-opacity="0.3" stroke="#3fd3a0" stroke-opacity="0.6" stroke-width="2.4"/>
<circle cx="1911.0" cy="874.1" r="3.2" fill="#3fd3a0" fill-opacity="0.3" stroke="#3fd3a0" stroke-opacity="0.6" stroke-width="2.4"/>
<circle cx="1989.2" cy="708.0" r="2.0" fill="#ff6f80" fill-opacity="0.3" stroke="#ff6f80" stroke-opacity="0.6" stroke-width="2.4"/>
<circle cx="1848.9" cy="972.1" r="3.0" fill="#ff6f80" fill-opacity="0.3" stroke="#ff6f80" stroke-opacity="0.6" stroke-width="2.4"/>
<circle cx="1813.7" cy="1034.8" r="3.0" fill="#ff6f80" fill-opacity="0.3" stroke="#ff6f80" stroke-opacity="0.6" stroke-width="2.4"/>
<circle cx="1929.4" cy="814.5" r="3.1" fill="#ff6f80" fill-opacity="0.3" stroke="#ff6f80" stroke-opacity="0.6" stroke-width="2.4"/>
<circle cx="1873.1" cy="942.7" r="6.1" fill="#3fd3a0" fill-opacity="0.3" stroke="#3fd3a0" stroke-opacity="0.6" stroke-width="2.4"/>
<circle cx="1732.3" cy="1067.8" r="19.0" fill="#3fd3a0" fill-opacity="0.13" stroke="#3fd3a0" stroke-opacity="0.6" stroke-width="2.4"/>
<circle cx="1879.6" cy="937.8" r="4.4" fill="#3fd3a0" fill-opacity="0.3" stroke="#3fd3a0" stroke-opacity="0.6" stroke-width="2.4"/>
<circle cx="1822.8" cy="932.5" r="4.2" fill="#ff6f80" fill-opacity="0.3" stroke="#ff6f80" stroke-opacity="0.6" stroke-width="2.4"/>
<circle cx="1900.7" cy="874.8" r="3.1" fill="#ff6f80" fill-opacity="0.3" stroke="#ff6f80" stroke-opacity="0.6" stroke-width="2.4"/>
<circle cx="1856.0" cy="1092.6" r="2.0" fill="#ff6f80" fill-opacity="0.3" stroke="#ff6f80" stroke-opacity="0.6" stroke-width="2.4"/>
<circle cx="2008.1" cy="838.2" r="6.4" fill="#ff6f80" fill-opacity="0.3" stroke="#ff6f80" stroke-opacity="0.6" stroke-width="2.4"/>
<circle cx="2014.8" cy="911.2" r="3.0" fill="#ff6f80" fill-opacity="0.3" stroke="#ff6f80" stroke-opacity="0.6" stroke-width="2.4"/>
<circle cx="1891.8" cy="989.2" r="3.0" fill="#3fd3a0" fill-opacity="0.3" stroke="#3fd3a0" stroke-opacity="0.6" stroke-width="2.4"/>
<circle cx="1918.8" cy="856.9" r="3.0" fill="#ff6f80" fill-opacity="0.3" stroke="#ff6f80" stroke-opacity="0.6" stroke-width="2.4"/>
<circle cx="1964.5" cy="808.5" r="4.0" fill="#ff6f80" fill-opacity="0.3" stroke="#ff6f80" stroke-opacity="0.6" stroke-width="2.4"/>
<circle cx="1869.9" cy="1078.0" r="2.9" fill="#3fd3a0" fill-opacity="0.3" stroke="#3fd3a0" stroke-opacity="0.6" stroke-width="2.4"/>
<circle cx="1914.3" cy="1280.1" r="2.1" fill="#3fd3a0" fill-opacity="0.3" stroke="#3fd3a0" stroke-opacity="0.6" stroke-width="2.4"/>
<circle cx="1805.6" cy="1056.6" r="10.3" fill="#ff6f80" fill-opacity="0.13" stroke="#ff6f80" stroke-opacity="0.6" stroke-width="2.4"/>
<circle cx="1913.3" cy="1304.1" r="2.2" fill="#3fd3a0" fill-opacity="0.3" stroke="#3fd3a0" stroke-opacity="0.6" stroke-width="2.4"/>
<circle cx="1874.9" cy="921.3" r="4.2" fill="#3fd3a0" fill-opacity="0.3" stroke="#3fd3a0" stroke-opacity="0.6" stroke-width="2.4"/>
<circle cx="1988.8" cy="898.7" r="3.0" fill="#ff6f80" fill-opacity="0.3" stroke="#ff6f80" stroke-opacity="0.6" stroke-width="2.4"/>
<circle cx="1785.4" cy="1135.3" r="2.6" fill="#3fd3a0" fill-opacity="0.3" stroke="#3fd3a0" stroke-opacity="0.6" stroke-width="2.4"/>
<circle cx="1889.4" cy="975.8" r="7.3" fill="#ff6f80" fill-opacity="0.3" stroke="#ff6f80" stroke-opacity="0.6" stroke-width="2.4"/>
<circle cx="1778.8" cy="1069.7" r="5.9" fill="#3fd3a0" fill-opacity="0.3" stroke="#3fd3a0" stroke-opacity="0.6" stroke-width="2.4"/>
<circle cx="1898.0" cy="1085.2" r="2.0" fill="#ff6f80" fill-opacity="0.3" stroke="#ff6f80" stroke-opacity="0.6" stroke-width="2.4"/>
<circle cx="1826.5" cy="1014.3" r="3.0" fill="#ff6f80" fill-opacity="0.3" stroke="#ff6f80" stroke-opacity="0.6" stroke-width="2.4"/>
<circle cx="1817.4" cy="971.6" r="10.1" fill="#ff6f80" fill-opacity="0.13" stroke="#ff6f80" stroke-opacity="0.6" stroke-width="2.4"/>
<circle cx="1973.1" cy="907.8" r="3.2" fill="#ff6f80" fill-opacity="0.3" stroke="#ff6f80" stroke-opacity="0.6" stroke-width="2.4"/>
<circle cx="1910.0" cy="1024.8" r="3.1" fill="#3fd3a0" fill-opacity="0.3" stroke="#3fd3a0" stroke-opacity="0.6" stroke-width="2.4"/>
<circle cx="1843.0" cy="1143.9" r="4.9" fill="#3fd3a0" fill-opacity="0.3" stroke="#3fd3a0" stroke-opacity="0.6" stroke-width="2.4"/>
<circle cx="1957.8" cy="869.7" r="3.0" fill="#ff6f80" fill-opacity="0.3" stroke="#ff6f80" stroke-opacity="0.6" stroke-width="2.4"/>
<circle cx="1810.2" cy="968.5" r="4.5" fill="#ff6f80" fill-opacity="0.3" stroke="#ff6f80" stroke-opacity="0.6" stroke-width="2.4"/>
<circle cx="1987.1" cy="1053.7" r="6.3" fill="#ff6f80" fill-opacity="0.3" stroke="#ff6f80" stroke-opacity="0.6" stroke-width="2.4"/>
<circle cx="1893.2" cy="1109.8" r="3.1" fill="#3fd3a0" fill-opacity="0.3" stroke="#3fd3a0" stroke-opacity="0.6" stroke-width="2.4"/>
<circle cx="1915.1" cy="969.7" r="4.7" fill="#3fd3a0" fill-opacity="0.3" stroke="#3fd3a0" stroke-opacity="0.6" stroke-width="2.4"/>
<circle cx="1902.7" cy="1012.0" r="5.5" fill="#3fd3a0" fill-opacity="0.3" stroke="#3fd3a0" stroke-opacity="0.6" stroke-width="2.4"/>
<circle cx="1942.4" cy="883.3" r="5.3" fill="#ff6f80" fill-opacity="0.3" stroke="#ff6f80" stroke-opacity="0.6" stroke-width="2.4"/>
<circle cx="2029.6" cy="902.0" r="3.0" fill="#ff6f80" fill-opacity="0.3" stroke="#ff6f80" stroke-opacity="0.6" stroke-width="2.4"/>
<circle cx="1887.5" cy="1002.1" r="3.6" fill="#3fd3a0" fill-opacity="0.3" stroke="#3fd3a0" stroke-opacity="0.6" stroke-width="2.4"/>
<circle cx="1816.3" cy="955.1" r="5.1" fill="#ff6f80" fill-opacity="0.3" stroke="#ff6f80" stroke-opacity="0.6" stroke-width="2.4"/>
<circle cx="1910.4" cy="801.9" r="3.9" fill="#ff6f80" fill-opacity="0.3" stroke="#ff6f80" stroke-opacity="0.6" stroke-width="2.4"/>
<circle cx="1871.9" cy="969.7" r="4.0" fill="#ff6f80" fill-opacity="0.3" stroke="#ff6f80" stroke-opacity="0.6" stroke-width="2.4"/>
<circle cx="1877.7" cy="1115.5" r="2.9" fill="#3fd3a0" fill-opacity="0.3" stroke="#3fd3a0" stroke-opacity="0.6" stroke-width="2.4"/>
<circle cx="1809.2" cy="1030.9" r="7.8" fill="#ff6f80" fill-opacity="0.3" stroke="#ff6f80" stroke-opacity="0.6" stroke-width="2.4"/>
<circle cx="1920.3" cy="954.9" r="5.3" fill="#ff6f80" fill-opacity="0.3" stroke="#ff6f80" stroke-opacity="0.6" stroke-width="2.4"/>
<circle cx="1924.8" cy="983.2" r="5.7" fill="#3fd3a0" fill-opacity="0.3" stroke="#3fd3a0" stroke-opacity="0.6" stroke-width="2.4"/>
<circle cx="1806.6" cy="1143.6" r="2.7" fill="#3fd3a0" fill-opacity="0.3" stroke="#3fd3a0" stroke-opacity="0.6" stroke-width="2.4"/>
<circle cx="1928.5" cy="1005.8" r="4.4" fill="#3fd3a0" fill-opacity="0.3" stroke="#3fd3a0" stroke-opacity="0.6" stroke-width="2.4"/>
<circle cx="2002.7" cy="803.6" r="7.6" fill="#ff6f80" fill-opacity="0.3" stroke="#ff6f80" stroke-opacity="0.6" stroke-width="2.4"/>
<circle cx="1924.3" cy="1153.1" r="3.2" fill="#ff6f80" fill-opacity="0.3" stroke="#ff6f80" stroke-opacity="0.6" stroke-width="2.4"/>
<circle cx="1881.3" cy="978.0" r="4.1" fill="#ff6f80" fill-opacity="0.3" stroke="#ff6f80" stroke-opacity="0.6" stroke-width="2.4"/>
<circle cx="1881.4" cy="979.5" r="3.6" fill="#3fd3a0" fill-opacity="0.3" stroke="#3fd3a0" stroke-opacity="0.6" stroke-width="2.4"/>
<circle cx="1937.7" cy="1144.8" r="3.2" fill="#ff6f80" fill-opacity="0.3" stroke="#ff6f80" stroke-opacity="0.6" stroke-width="2.4"/>
<circle cx="1831.5" cy="990.5" r="11.0" fill="#3fd3a0" fill-opacity="0.13" stroke="#3fd3a0" stroke-opacity="0.6" stroke-width="2.4"/>
<circle cx="1883.1" cy="1011.5" r="3.0" fill="#ff6f80" fill-opacity="0.3" stroke="#ff6f80" stroke-opacity="0.6" stroke-width="2.4"/>
<circle cx="1752.1" cy="1065.1" r="10.9" fill="#3fd3a0" fill-opacity="0.13" stroke="#3fd3a0" stroke-opacity="0.6" stroke-width="2.4"/>
<circle cx="1796.6" cy="1003.7" r="3.6" fill="#ff6f80" fill-opacity="0.3" stroke="#ff6f80" stroke-opacity="0.6" stroke-width="2.4"/>
<circle cx="1921.8" cy="1176.6" r="3.0" fill="#ff6f80" fill-opacity="0.3" stroke="#ff6f80" stroke-opacity="0.6" stroke-width="2.4"/>
<circle cx="1986.2" cy="876.5" r="6.6" fill="#ff6f80" fill-opacity="0.3" stroke="#ff6f80" stroke-opacity="0.6" stroke-width="2.4"/>
<circle cx="1883.0" cy="870.9" r="3.8" fill="#ff6f80" fill-opacity="0.3" stroke="#ff6f80" stroke-opacity="0.6" stroke-width="2.4"/>
<circle cx="1874.5" cy="978.1" r="3.0" fill="#ff6f80" fill-opacity="0.3" stroke="#ff6f80" stroke-opacity="0.6" stroke-width="2.4"/>
<circle cx="1799.3" cy="955.5" r="9.4" fill="#ff6f80" fill-opacity="0.3" stroke="#ff6f80" stroke-opacity="0.6" stroke-width="2.4"/>
<circle cx="1920.6" cy="849.0" r="3.2" fill="#ff6f80" fill-opacity="0.3" stroke="#ff6f80" stroke-opacity="0.6" stroke-width="2.4"/>
<circle cx="1958.0" cy="1216.0" r="3.9" fill="#ff6f80" fill-opacity="0.3" stroke="#ff6f80" stroke-opacity="0.6" stroke-width="2.4"/>
<circle cx="1911.1" cy="1007.2" r="3.0" fill="#ff6f80" fill-opacity="0.3" stroke="#ff6f80" stroke-opacity="0.6" stroke-width="2.4"/>
<circle cx="1926.1" cy="1164.5" r="6.4" fill="#ff6f80" fill-opacity="0.3" stroke="#ff6f80" stroke-opacity="0.6" stroke-width="2.4"/>
<circle cx="1955.3" cy="1025.0" r="6.0" fill="#ff6f80" fill-opacity="0.3" stroke="#ff6f80" stroke-opacity="0.6" stroke-width="2.4"/>
<circle cx="1808.9" cy="1176.7" r="2.0" fill="#ff6f80" fill-opacity="0.3" stroke="#ff6f80" stroke-opacity="0.6" stroke-width="2.4"/>
<circle cx="1992.4" cy="724.8" r="3.1" fill="#3fd3a0" fill-opacity="0.3" stroke="#3fd3a0" stroke-opacity="0.6" stroke-width="2.4"/>
<circle cx="1840.4" cy="1168.4" r="5.7" fill="#ff6f80" fill-opacity="0.3" stroke="#ff6f80" stroke-opacity="0.6" stroke-width="2.4"/>
<circle cx="1942.0" cy="1190.3" r="3.2" fill="#ff6f80" fill-opacity="0.3" stroke="#ff6f80" stroke-opacity="0.6" stroke-width="2.4"/>
<circle cx="1918.3" cy="1267.8" r="2.8" fill="#3fd3a0" fill-opacity="0.3" stroke="#3fd3a0" stroke-opacity="0.6" stroke-width="2.4"/>
<circle cx="1910.1" cy="842.7" r="5.3" fill="#ff6f80" fill-opacity="0.3" stroke="#ff6f80" stroke-opacity="0.6" stroke-width="2.4"/>
<circle cx="1808.2" cy="961.2" r="9.2" fill="#ff6f80" fill-opacity="0.3" stroke="#ff6f80" stroke-opacity="0.6" stroke-width="2.4"/>
<circle cx="1849.1" cy="943.9" r="3.3" fill="#ff6f80" fill-opacity="0.3" stroke="#ff6f80" stroke-opacity="0.6" stroke-width="2.4"/>
<circle cx="1812.8" cy="1030.1" r="3.8" fill="#3fd3a0" fill-opacity="0.3" stroke="#3fd3a0" stroke-opacity="0.6" stroke-width="2.4"/>
<circle cx="1803.9" cy="990.4" r="5.9" fill="#ff6f80" fill-opacity="0.3" stroke="#ff6f80" stroke-opacity="0.6" stroke-width="2.4"/>
<circle cx="1868.8" cy="968.8" r="7.9" fill="#ff6f80" fill-opacity="0.3" stroke="#ff6f80" stroke-opacity="0.6" stroke-width="2.4"/>
<circle cx="1821.6" cy="976.8" r="10.6" fill="#ff6f80" fill-opacity="0.13" stroke="#ff6f80" stroke-opacity="0.6" stroke-width="2.4"/>
<circle cx="1940.7" cy="1175.9" r="4.7" fill="#ff6f80" fill-opacity="0.3" stroke="#ff6f80" stroke-opacity="0.6" stroke-width="2.4"/>
<circle cx="1889.7" cy="975.0" r="5.1" fill="#ff6f80" fill-opacity="0.3" stroke="#ff6f80" stroke-opacity="0.6" stroke-width="2.4"/>
<circle cx="2002.0" cy="902.8" r="8.3" fill="#ff6f80" fill-opacity="0.3" stroke="#ff6f80" stroke-opacity="0.6" stroke-width="2.4"/>
<circle cx="1811.1" cy="902.7" r="3.1" fill="#ff6f80" fill-opacity="0.3" stroke="#ff6f80" stroke-opacity="0.6" stroke-width="2.4"/>
<circle cx="1999.4" cy="824.6" r="2.0" fill="#ff6f80" fill-opacity="0.3" stroke="#ff6f80" stroke-opacity="0.6" stroke-width="2.4"/>
<circle cx="1981.6" cy="823.1" r="7.0" fill="#ff6f80" fill-opacity="0.3" stroke="#ff6f80" stroke-opacity="0.6" stroke-width="2.4"/>
<circle cx="1798.2" cy="992.2" r="3.3" fill="#ff6f80" fill-opacity="0.3" stroke="#ff6f80" stroke-opacity="0.6" stroke-width="2.4"/>
<circle cx="1988.2" cy="1070.6" r="5.9" fill="#3fd3a0" fill-opacity="0.3" stroke="#3fd3a0" stroke-opacity="0.6" stroke-width="2.4"/>
<circle cx="1957.8" cy="879.9" r="3.7" fill="#3fd3a0" fill-opacity="0.3" stroke="#3fd3a0" stroke-opacity="0.6" stroke-width="2.4"/>
<circle cx="1872.4" cy="1201.5" r="3.2" fill="#3fd3a0" fill-opacity="0.3" stroke="#3fd3a0" stroke-opacity="0.6" stroke-width="2.4"/>
<circle cx="1778.1" cy="1086.2" r="5.2" fill="#3fd3a0" fill-opacity="0.3" stroke="#3fd3a0" stroke-opacity="0.6" stroke-width="2.4"/>
<circle cx="1962.2" cy="1214.1" r="4.1" fill="#3fd3a0" fill-opacity="0.3" stroke="#3fd3a0" stroke-opacity="0.6" stroke-width="2.4"/>
<circle cx="1809.9" cy="1009.9" r="10.9" fill="#ff6f80" fill-opacity="0.13" stroke="#ff6f80" stroke-opacity="0.6" stroke-width="2.4"/>
<circle cx="1893.3" cy="1032.3" r="3.2" fill="#3fd3a0" fill-opacity="0.3" stroke="#3fd3a0" stroke-opacity="0.6" stroke-width="2.4"/>
<circle cx="1801.6" cy="1143.2" r="3.2" fill="#3fd3a0" fill-opacity="0.3" stroke="#3fd3a0" stroke-opacity="0.6" stroke-width="2.4"/>
<circle cx="2007.3" cy="1063.2" r="4.1" fill="#3fd3a0" fill-opacity="0.3" stroke="#3fd3a0" stroke-opacity="0.6" stroke-width="2.4"/>
<circle cx="1828.9" cy="949.2" r="4.2" fill="#ff6f80" fill-opacity="0.3" stroke="#ff6f80" stroke-opacity="0.6" stroke-width="2.4"/>
<circle cx="1851.0" cy="1149.4" r="3.5" fill="#ff6f80" fill-opacity="0.3" stroke="#ff6f80" stroke-opacity="0.6" stroke-width="2.4"/>
<circle cx="1946.1" cy="1216.7" r="3.4" fill="#ff6f80" fill-opacity="0.3" stroke="#ff6f80" stroke-opacity="0.6" stroke-width="2.4"/>
<circle cx="1845.5" cy="977.9" r="3.6" fill="#3fd3a0" fill-opacity="0.3" stroke="#3fd3a0" stroke-opacity="0.6" stroke-width="2.4"/>
<circle cx="1763.8" cy="1079.6" r="5.0" fill="#ff6f80" fill-opacity="0.3" stroke="#ff6f80" stroke-opacity="0.6" stroke-width="2.4"/>
<circle cx="1852.6" cy="988.4" r="3.1" fill="#ff6f80" fill-opacity="0.3" stroke="#ff6f80" stroke-opacity="0.6" stroke-width="2.4"/>
<circle cx="1884.0" cy="976.4" r="3.5" fill="#ff6f80" fill-opacity="0.3" stroke="#ff6f80" stroke-opacity="0.6" stroke-width="2.4"/>
<circle cx="1912.4" cy="848.6" r="3.0" fill="#ff6f80" fill-opacity="0.3" stroke="#ff6f80" stroke-opacity="0.6" stroke-width="2.4"/>
<circle cx="1867.6" cy="959.1" r="4.4" fill="#3fd3a0" fill-opacity="0.3" stroke="#3fd3a0" stroke-opacity="0.6" stroke-width="2.4"/>
<circle cx="1902.4" cy="1241.6" r="6.1" fill="#ff6f80" fill-opacity="0.3" stroke="#ff6f80" stroke-opacity="0.6" stroke-width="2.4"/>
<circle cx="1943.2" cy="1014.8" r="2.1" fill="#ff6f80" fill-opacity="0.3" stroke="#ff6f80" stroke-opacity="0.6" stroke-width="2.4"/>
<circle cx="1834.3" cy="883.8" r="4.8" fill="#ff6f80" fill-opacity="0.3" stroke="#ff6f80" stroke-opacity="0.6" stroke-width="2.4"/>
<circle cx="1949.7" cy="887.8" r="3.0" fill="#ff6f80" fill-opacity="0.3" stroke="#ff6f80" stroke-opacity="0.6" stroke-width="2.4"/>
<circle cx="1941.9" cy="1213.5" r="3.1" fill="#ff6f80" fill-opacity="0.3" stroke="#ff6f80" stroke-opacity="0.6" stroke-width="2.4"/>
<circle cx="1850.4" cy="944.7" r="3.0" fill="#ff6f80" fill-opacity="0.3" stroke="#ff6f80" stroke-opacity="0.6" stroke-width="2.4"/>
<circle cx="1997.6" cy="901.2" r="3.9" fill="#ff6f80" fill-opacity="0.3" stroke="#ff6f80" stroke-opacity="0.6" stroke-width="2.4"/>
<circle cx="1796.3" cy="1150.9" r="3.9" fill="#3fd3a0" fill-opacity="0.3" stroke="#3fd3a0" stroke-opacity="0.6" stroke-width="2.4"/>
<circle cx="1893.4" cy="1218.7" r="2.2" fill="#3fd3a0" fill-opacity="0.3" stroke="#3fd3a0" stroke-opacity="0.6" stroke-width="2.4"/>
<circle cx="1895.9" cy="974.7" r="3.2" fill="#ff6f80" fill-opacity="0.3" stroke="#ff6f80" stroke-opacity="0.6" stroke-width="2.4"/>
<circle cx="1922.3" cy="827.7" r="3.3" fill="#ff6f80" fill-opacity="0.3" stroke="#ff6f80" stroke-opacity="0.6" stroke-width="2.4"/>
<circle cx="1843.4" cy="1064.2" r="4.7" fill="#ff6f80" fill-opacity="0.3" stroke="#ff6f80" stroke-opacity="0.6" stroke-width="2.4"/>
<circle cx="1873.5" cy="1215.2" r="2.0" fill="#3fd3a0" fill-opacity="0.3" stroke="#3fd3a0" stroke-opacity="0.6" stroke-width="2.4"/>
<circle cx="1843.6" cy="944.2" r="6.0" fill="#ff6f80" fill-opacity="0.3" stroke="#ff6f80" stroke-opacity="0.6" stroke-width="2.4"/>
<circle cx="1942.3" cy="871.8" r="9.6" fill="#ff6f80" fill-opacity="0.3" stroke="#ff6f80" stroke-opacity="0.6" stroke-width="2.4"/>
<circle cx="1844.3" cy="960.4" r="5.4" fill="#3fd3a0" fill-opacity="0.3" stroke="#3fd3a0" stroke-opacity="0.6" stroke-width="2.4"/>
<circle cx="1788.7" cy="1105.8" r="2.5" fill="#ff6f80" fill-opacity="0.3" stroke="#ff6f80" stroke-opacity="0.6" stroke-width="2.4"/>
<circle cx="1786.9" cy="1084.3" r="4.6" fill="#ff6f80" fill-opacity="0.3" stroke="#ff6f80" stroke-opacity="0.6" stroke-width="2.4"/>
<circle cx="1948.5" cy="878.5" r="3.1" fill="#ff6f80" fill-opacity="0.3" stroke="#ff6f80" stroke-opacity="0.6" stroke-width="2.4"/>
<circle cx="1956.9" cy="883.0" r="3.0" fill="#ff6f80" fill-opacity="0.3" stroke="#ff6f80" stroke-opacity="0.6" stroke-width="2.4"/>
<circle cx="1785.0" cy="1112.1" r="3.1" fill="#ff6f80" fill-opacity="0.3" stroke="#ff6f80" stroke-opacity="0.6" stroke-width="2.4"/>
<circle cx="1906.8" cy="877.0" r="5.6" fill="#ff6f80" fill-opacity="0.3" stroke="#ff6f80" stroke-opacity="0.6" stroke-width="2.4"/>
<circle cx="1930.0" cy="1006.7" r="3.3" fill="#ff6f80" fill-opacity="0.3" stroke="#ff6f80" stroke-opacity="0.6" stroke-width="2.4"/>
<circle cx="1955.5" cy="899.3" r="4.5" fill="#ff6f80" fill-opacity="0.3" stroke="#ff6f80" stroke-opacity="0.6" stroke-width="2.4"/>
<circle cx="1868.4" cy="988.1" r="3.7" fill="#3fd3a0" fill-opacity="0.3" stroke="#3fd3a0" stroke-opacity="0.6" stroke-width="2.4"/>
<circle cx="1869.5" cy="949.2" r="3.1" fill="#ff6f80" fill-opacity="0.3" stroke="#ff6f80" stroke-opacity="0.6" stroke-width="2.4"/>
<circle cx="1985.5" cy="713.5" r="2.1" fill="#ff6f80" fill-opacity="0.3" stroke="#ff6f80" stroke-opacity="0.6" stroke-width="2.4"/>
<circle cx="1836.1" cy="955.3" r="3.0" fill="#3fd3a0" fill-opacity="0.3" stroke="#3fd3a0" stroke-opacity="0.6" stroke-width="2.4"/>
<circle cx="1856.6" cy="1082.5" r="3.1" fill="#3fd3a0" fill-opacity="0.3" stroke="#3fd3a0" stroke-opacity="0.6" stroke-width="2.4"/>
<circle cx="1855.8" cy="1004.0" r="6.6" fill="#3fd3a0" fill-opacity="0.3" stroke="#3fd3a0" stroke-opacity="0.6" stroke-width="2.4"/>
<circle cx="1840.9" cy="971.9" r="3.3" fill="#ff6f80" fill-opacity="0.3" stroke="#ff6f80" stroke-opacity="0.6" stroke-width="2.4"/>
<circle cx="1992.5" cy="796.5" r="5.7" fill="#ff6f80" fill-opacity="0.3" stroke="#ff6f80" stroke-opacity="0.6" stroke-width="2.4"/>
<circle cx="1895.5" cy="870.8" r="4.4" fill="#3fd3a0" fill-opacity="0.3" stroke="#3fd3a0" stroke-opacity="0.6" stroke-width="2.4"/>
<circle cx="1902.7" cy="1292.4" r="2.7" fill="#3fd3a0" fill-opacity="0.3" stroke="#3fd3a0" stroke-opacity="0.6" stroke-width="2.4"/>
<circle cx="1978.4" cy="903.3" r="3.3" fill="#ff6f80" fill-opacity="0.3" stroke="#ff6f80" stroke-opacity="0.6" stroke-width="2.4"/>
<circle cx="1819.2" cy="908.3" r="9.5" fill="#ff6f80" fill-opacity="0.3" stroke="#ff6f80" stroke-opacity="0.6" stroke-width="2.4"/>
<circle cx="1934.1" cy="969.0" r="5.9" fill="#ff6f80" fill-opacity="0.3" stroke="#ff6f80" stroke-opacity="0.6" stroke-width="2.4"/>
<circle cx="1960.3" cy="1100.1" r="5.9" fill="#ff6f80" fill-opacity="0.3" stroke="#ff6f80" stroke-opacity="0.6" stroke-width="2.4"/>
<circle cx="1957.5" cy="884.2" r="3.3" fill="#ff6f80" fill-opacity="0.3" stroke="#ff6f80" stroke-opacity="0.6" stroke-width="2.4"/>
<circle cx="1772.0" cy="1084.6" r="5.7" fill="#ff6f80" fill-opacity="0.3" stroke="#ff6f80" stroke-opacity="0.6" stroke-width="2.4"/>
<circle cx="1804.5" cy="1008.0" r="10.5" fill="#ff6f80" fill-opacity="0.13" stroke="#ff6f80" stroke-opacity="0.6" stroke-width="2.4"/>
<circle cx="1918.0" cy="851.7" r="3.0" fill="#ff6f80" fill-opacity="0.3" stroke="#ff6f80" stroke-opacity="0.6" stroke-width="2.4"/>
<circle cx="1810.7" cy="1070.0" r="3.2" fill="#ff6f80" fill-opacity="0.3" stroke="#ff6f80" stroke-opacity="0.6" stroke-width="2.4"/>
<circle cx="1893.2" cy="1105.7" r="2.4" fill="#3fd3a0" fill-opacity="0.3" stroke="#3fd3a0" stroke-opacity="0.6" stroke-width="2.4"/>
<circle cx="1807.7" cy="992.7" r="3.5" fill="#ff6f80" fill-opacity="0.3" stroke="#ff6f80" stroke-opacity="0.6" stroke-width="2.4"/>
<circle cx="1947.4" cy="1241.4" r="4.6" fill="#ff6f80" fill-opacity="0.3" stroke="#ff6f80" stroke-opacity="0.6" stroke-width="2.4"/>
<circle cx="1934.1" cy="1290.2" r="5.0" fill="#ff6f80" fill-opacity="0.3" stroke="#ff6f80" stroke-opacity="0.6" stroke-width="2.4"/>
<circle cx="1841.1" cy="975.2" r="3.6" fill="#3fd3a0" fill-opacity="0.3" stroke="#3fd3a0" stroke-opacity="0.6" stroke-width="2.4"/>
<circle cx="1803.7" cy="1005.9" r="4.8" fill="#ff6f80" fill-opacity="0.3" stroke="#ff6f80" stroke-opacity="0.6" stroke-width="2.4"/>
<circle cx="1946.1" cy="1190.8" r="4.7" fill="#ff6f80" fill-opacity="0.3" stroke="#ff6f80" stroke-opacity="0.6" stroke-width="2.4"/>
<circle cx="1892.7" cy="1085.7" r="2.7" fill="#3fd3a0" fill-opacity="0.3" stroke="#3fd3a0" stroke-opacity="0.6" stroke-width="2.4"/>
<circle cx="1796.7" cy="906.1" r="5.0" fill="#ff6f80" fill-opacity="0.3" stroke="#ff6f80" stroke-opacity="0.6" stroke-width="2.4"/>
<circle cx="1832.2" cy="1005.1" r="3.0" fill="#ff6f80" fill-opacity="0.3" stroke="#ff6f80" stroke-opacity="0.6" stroke-width="2.4"/>
<circle cx="1835.1" cy="877.7" r="6.0" fill="#ff6f80" fill-opacity="0.3" stroke="#ff6f80" stroke-opacity="0.6" stroke-width="2.4"/>
<circle cx="1991.8" cy="724.7" r="2.4" fill="#ff6f80" fill-opacity="0.3" stroke="#ff6f80" stroke-opacity="0.6" stroke-width="2.4"/>
<circle cx="2000.2" cy="708.8" r="2.1" fill="#3fd3a0" fill-opacity="0.3" stroke="#3fd3a0" stroke-opacity="0.6" stroke-width="2.4"/>
<circle cx="1986.3" cy="900.6" r="6.0" fill="#ff6f80" fill-opacity="0.3" stroke="#ff6f80" stroke-opacity="0.6" stroke-width="2.4"/>
<circle cx="1813.2" cy="1026.9" r="3.0" fill="#ff6f80" fill-opacity="0.3" stroke="#ff6f80" stroke-opacity="0.6" stroke-width="2.4"/>
<circle cx="1868.9" cy="1199.2" r="2.4" fill="#ff6f80" fill-opacity="0.3" stroke="#ff6f80" stroke-opacity="0.6" stroke-width="2.4"/>
<circle cx="1816.4" cy="953.1" r="6.3" fill="#ff6f80" fill-opacity="0.3" stroke="#ff6f80" stroke-opacity="0.6" stroke-width="2.4"/>
<circle cx="1975.1" cy="884.1" r="3.0" fill="#ff6f80" fill-opacity="0.3" stroke="#ff6f80" stroke-opacity="0.6" stroke-width="2.4"/>
<circle cx="1830.7" cy="1008.6" r="3.0" fill="#ff6f80" fill-opacity="0.3" stroke="#ff6f80" stroke-opacity="0.6" stroke-width="2.4"/>
<circle cx="2012.6" cy="1042.0" r="3.3" fill="#ff6f80" fill-opacity="0.3" stroke="#ff6f80" stroke-opacity="0.6" stroke-width="2.4"/>
<circle cx="1819.8" cy="1073.0" r="3.2" fill="#ff6f80" fill-opacity="0.3" stroke="#ff6f80" stroke-opacity="0.6" stroke-width="2.4"/>
<circle cx="1846.2" cy="1067.7" r="2.0" fill="#3fd3a0" fill-opacity="0.3" stroke="#3fd3a0" stroke-opacity="0.6" stroke-width="2.4"/>
<circle cx="1994.5" cy="837.7" r="3.0" fill="#ff6f80" fill-opacity="0.3" stroke="#ff6f80" stroke-opacity="0.6" stroke-width="2.4"/>
<circle cx="1977.1" cy="888.9" r="3.3" fill="#ff6f80" fill-opacity="0.3" stroke="#ff6f80" stroke-opacity="0.6" stroke-width="2.4"/>
<circle cx="1883.7" cy="1047.7" r="7.4" fill="#3fd3a0" fill-opacity="0.3" stroke="#3fd3a0" stroke-opacity="0.6" stroke-width="2.4"/>
<circle cx="1945.7" cy="1191.1" r="3.2" fill="#ff6f80" fill-opacity="0.3" stroke="#ff6f80" stroke-opacity="0.6" stroke-width="2.4"/>
<circle cx="1877.9" cy="1195.0" r="2.5" fill="#ff6f80" fill-opacity="0.3" stroke="#ff6f80" stroke-opacity="0.6" stroke-width="2.4"/>
<circle cx="1972.5" cy="1035.3" r="4.6" fill="#3fd3a0" fill-opacity="0.3" stroke="#3fd3a0" stroke-opacity="0.6" stroke-width="2.4"/>
<circle cx="1867.0" cy="1119.4" r="2.6" fill="#3fd3a0" fill-opacity="0.3" stroke="#3fd3a0" stroke-opacity="0.6" stroke-width="2.4"/>
<circle cx="1872.8" cy="1002.7" r="3.0" fill="#3fd3a0" fill-opacity="0.3" stroke="#3fd3a0" stroke-opacity="0.6" stroke-width="2.4"/>
<circle cx="1920.4" cy="933.1" r="3.1" fill="#ff6f80" fill-opacity="0.3" stroke="#ff6f80" stroke-opacity="0.6" stroke-width="2.4"/>
<circle cx="1952.6" cy="868.9" r="3.3" fill="#ff6f80" fill-opacity="0.3" stroke="#ff6f80" stroke-opacity="0.6" stroke-width="2.4"/>
<circle cx="1847.3" cy="998.0" r="3.1" fill="#ff6f80" fill-opacity="0.3" stroke="#ff6f80" stroke-opacity="0.6" stroke-width="2.4"/>
<circle cx="1808.4" cy="1024.5" r="4.5" fill="#ff6f80" fill-opacity="0.3" stroke="#ff6f80" stroke-opacity="0.6" stroke-width="2.4"/>
<circle cx="1876.3" cy="1105.7" r="2.0" fill="#3fd3a0" fill-opacity="0.3" stroke="#3fd3a0" stroke-opacity="0.6" stroke-width="2.4"/>
<circle cx="1970.0" cy="861.5" r="7.1" fill="#ff6f80" fill-opacity="0.3" stroke="#ff6f80" stroke-opacity="0.6" stroke-width="2.4"/>
<circle cx="1951.5" cy="1241.1" r="3.0" fill="#3fd3a0" fill-opacity="0.3" stroke="#3fd3a0" stroke-opacity="0.6" stroke-width="2.4"/>
<circle cx="1896.5" cy="1230.9" r="5.4" fill="#3fd3a0" fill-opacity="0.3" stroke="#3fd3a0" stroke-opacity="0.6" stroke-width="2.4"/>
<circle cx="1888.0" cy="1084.5" r="2.1" fill="#3fd3a0" fill-opacity="0.3" stroke="#3fd3a0" stroke-opacity="0.6" stroke-width="2.4"/>
<circle cx="1996.5" cy="809.7" r="2.6" fill="#ff6f80" fill-opacity="0.3" stroke="#ff6f80" stroke-opacity="0.6" stroke-width="2.4"/>
<circle cx="1758.8" cy="1075.7" r="3.0" fill="#ff6f80" fill-opacity="0.3" stroke="#ff6f80" stroke-opacity="0.6" stroke-width="2.4"/>
<circle cx="1908.9" cy="880.2" r="5.9" fill="#ff6f80" fill-opacity="0.3" stroke="#ff6f80" stroke-opacity="0.6" stroke-width="2.4"/>
<circle cx="1803.6" cy="1031.4" r="8.4" fill="#ff6f80" fill-opacity="0.3" stroke="#ff6f80" stroke-opacity="0.6" stroke-width="2.4"/>
<circle cx="1808.7" cy="926.8" r="3.1" fill="#ff6f80" fill-opacity="0.3" stroke="#ff6f80" stroke-opacity="0.6" stroke-width="2.4"/>
<circle cx="1791.8" cy="1175.1" r="3.4" fill="#3fd3a0" fill-opacity="0.3" stroke="#3fd3a0" stroke-opacity="0.6" stroke-width="2.4"/>
<circle cx="1771.8" cy="1078.5" r="3.0" fill="#3fd3a0" fill-opacity="0.3" stroke="#3fd3a0" stroke-opacity="0.6" stroke-width="2.4"/>
<circle cx="1874.0" cy="1096.1" r="2.5" fill="#ff6f80" fill-opacity="0.3" stroke="#ff6f80" stroke-opacity="0.6" stroke-width="2.4"/>
<circle cx="1774.5" cy="1088.3" r="8.0" fill="#ff6f80" fill-opacity="0.3" stroke="#ff6f80" stroke-opacity="0.6" stroke-width="2.4"/>
<circle cx="1941.0" cy="868.7" r="6.4" fill="#ff6f80" fill-opacity="0.3" stroke="#ff6f80" stroke-opacity="0.6" stroke-width="2.4"/>
<circle cx="1817.9" cy="900.1" r="4.6" fill="#ff6f80" fill-opacity="0.3" stroke="#ff6f80" stroke-opacity="0.6" stroke-width="2.4"/>
<circle cx="1857.7" cy="1023.5" r="5.8" fill="#3fd3a0" fill-opacity="0.3" stroke="#3fd3a0" stroke-opacity="0.6" stroke-width="2.4"/>
<circle cx="1859.9" cy="1010.5" r="3.4" fill="#ff6f80" fill-opacity="0.3" stroke="#ff6f80" stroke-opacity="0.6" stroke-width="2.4"/>
<circle cx="1754.6" cy="1093.6" r="3.0" fill="#3fd3a0" fill-opacity="0.3" stroke="#3fd3a0" stroke-opacity="0.6" stroke-width="2.4"/>
<circle cx="1807.9" cy="976.8" r="3.0" fill="#ff6f80" fill-opacity="0.3" stroke="#ff6f80" stroke-opacity="0.6" stroke-width="2.4"/>
<circle cx="1808.0" cy="864.8" r="7.7" fill="#ff6f80" fill-opacity="0.3" stroke="#ff6f80" stroke-opacity="0.6" stroke-width="2.4"/>
<circle cx="1838.0" cy="1001.1" r="3.8" fill="#3fd3a0" fill-opacity="0.3" stroke="#3fd3a0" stroke-opacity="0.6" stroke-width="2.4"/>
<circle cx="1821.2" cy="877.0" r="3.3" fill="#ff6f80" fill-opacity="0.3" stroke="#ff6f80" stroke-opacity="0.6" stroke-width="2.4"/>
<circle cx="1848.8" cy="1007.3" r="3.8" fill="#ff6f80" fill-opacity="0.3" stroke="#ff6f80" stroke-opacity="0.6" stroke-width="2.4"/>
<circle cx="1932.3" cy="1178.7" r="3.0" fill="#ff6f80" fill-opacity="0.3" stroke="#ff6f80" stroke-opacity="0.6" stroke-width="2.4"/>
<circle cx="1858.6" cy="990.9" r="3.9" fill="#3fd3a0" fill-opacity="0.3" stroke="#3fd3a0" stroke-opacity="0.6" stroke-width="2.4"/>
<circle cx="1876.4" cy="1021.7" r="3.5" fill="#ff6f80" fill-opacity="0.3" stroke="#ff6f80" stroke-opacity="0.6" stroke-width="2.4"/>
<circle cx="1972.5" cy="909.7" r="5.6" fill="#ff6f80" fill-opacity="0.3" stroke="#ff6f80" stroke-opacity="0.6" stroke-width="2.4"/>
<circle cx="1807.1" cy="1176.4" r="2.5" fill="#3fd3a0" fill-opacity="0.3" stroke="#3fd3a0" stroke-opacity="0.6" stroke-width="2.4"/>
<circle cx="1832.7" cy="832.8" r="3.0" fill="#ff6f80" fill-opacity="0.3" stroke="#ff6f80" stroke-opacity="0.6" stroke-width="2.4"/>
<circle cx="1816.2" cy="1054.8" r="7.3" fill="#ff6f80" fill-opacity="0.3" stroke="#ff6f80" stroke-opacity="0.6" stroke-width="2.4"/>
<circle cx="1766.5" cy="1094.2" r="4.0" fill="#ff6f80" fill-opacity="0.3" stroke="#ff6f80" stroke-opacity="0.6" stroke-width="2.4"/>
<circle cx="1910.1" cy="1280.4" r="2.0" fill="#3fd3a0" fill-opacity="0.3" stroke="#3fd3a0" stroke-opacity="0.6" stroke-width="2.4"/>
<circle cx="1994.6" cy="1077.6" r="3.4" fill="#ff6f80" fill-opacity="0.3" stroke="#ff6f80" stroke-opacity="0.6" stroke-width="2.4"/>
<circle cx="1899.1" cy="967.6" r="3.0" fill="#3fd3a0" fill-opacity="0.3" stroke="#3fd3a0" stroke-opacity="0.6" stroke-width="2.4"/>
<circle cx="1992.4" cy="775.0" r="2.0" fill="#ff6f80" fill-opacity="0.3" stroke="#ff6f80" stroke-opacity="0.6" stroke-width="2.4"/>
<circle cx="1859.3" cy="1180.6" r="2.2" fill="#3fd3a0" fill-opacity="0.3" stroke="#3fd3a0" stroke-opacity="0.6" stroke-width="2.4"/>
<circle cx="1903.5" cy="1215.3" r="4.1" fill="#ff6f80" fill-opacity="0.3" stroke="#ff6f80" stroke-opacity="0.6" stroke-width="2.4"/>
<circle cx="1933.0" cy="1197.9" r="3.0" fill="#3fd3a0" fill-opacity="0.3" stroke="#3fd3a0" stroke-opacity="0.6" stroke-width="2.4"/>
<circle cx="1893.2" cy="856.9" r="5.6" fill="#ff6f80" fill-opacity="0.3" stroke="#ff6f80" stroke-opacity="0.6" stroke-width="2.4"/>
<circle cx="1896.2" cy="952.1" r="3.0" fill="#ff6f80" fill-opacity="0.3" stroke="#ff6f80" stroke-opacity="0.6" stroke-width="2.4"/>
<circle cx="1990.8" cy="909.1" r="3.3" fill="#ff6f80" fill-opacity="0.3" stroke="#ff6f80" stroke-opacity="0.6" stroke-width="2.4"/>
<circle cx="1838.4" cy="991.2" r="3.0" fill="#3fd3a0" fill-opacity="0.3" stroke="#3fd3a0" stroke-opacity="0.6" stroke-width="2.4"/>
<circle cx="1941.2" cy="846.3" r="3.0" fill="#ff6f80" fill-opacity="0.3" stroke="#ff6f80" stroke-opacity="0.6" stroke-width="2.4"/>
<circle cx="1813.6" cy="952.3" r="6.9" fill="#ff6f80" fill-opacity="0.3" stroke="#ff6f80" stroke-opacity="0.6" stroke-width="2.4"/>
<circle cx="1869.2" cy="1192.2" r="5.0" fill="#ff6f80" fill-opacity="0.3" stroke="#ff6f80" stroke-opacity="0.6" stroke-width="2.4"/>
<circle cx="1866.6" cy="953.4" r="7.2" fill="#3fd3a0" fill-opacity="0.3" stroke="#3fd3a0" stroke-opacity="0.6" stroke-width="2.4"/>
<circle cx="1942.2" cy="1207.9" r="3.7" fill="#ff6f80" fill-opacity="0.3" stroke="#ff6f80" stroke-opacity="0.6" stroke-width="2.4"/>
<circle cx="1998.8" cy="819.3" r="2.1" fill="#ff6f80" fill-opacity="0.3" stroke="#ff6f80" stroke-opacity="0.6" stroke-width="2.4"/>
<circle cx="1883.9" cy="1238.0" r="5.8" fill="#ff6f80" fill-opacity="0.3" stroke="#ff6f80" stroke-opacity="0.6" stroke-width="2.4"/>
<circle cx="1969.1" cy="1231.0" r="3.8" fill="#3fd3a0" fill-opacity="0.3" stroke="#3fd3a0" stroke-opacity="0.6" stroke-width="2.4"/>
<circle cx="1964.7" cy="898.6" r="6.3" fill="#3fd3a0" fill-opacity="0.3" stroke="#3fd3a0" stroke-opacity="0.6" stroke-width="2.4"/>
<circle cx="1790.4" cy="920.0" r="3.2" fill="#ff6f80" fill-opacity="0.3" stroke="#ff6f80" stroke-opacity="0.6" stroke-width="2.4"/>
<circle cx="1805.5" cy="973.9" r="3.8" fill="#ff6f80" fill-opacity="0.3" stroke="#ff6f80" stroke-opacity="0.6" stroke-width="2.4"/>
<circle cx="1863.4" cy="1008.1" r="5.1" fill="#ff6f80" fill-opacity="0.3" stroke="#ff6f80" stroke-opacity="0.6" stroke-width="2.4"/>
<circle cx="1799.3" cy="1051.7" r="4.2" fill="#ff6f80" fill-opacity="0.3" stroke="#ff6f80" stroke-opacity="0.6" stroke-width="2.4"/>
<circle cx="1873.6" cy="1103.3" r="2.0" fill="#ff6f80" fill-opacity="0.3" stroke="#ff6f80" stroke-opacity="0.6" stroke-width="2.4"/>
<circle cx="1813.1" cy="948.5" r="4.1" fill="#ff6f80" fill-opacity="0.3" stroke="#ff6f80" stroke-opacity="0.6" stroke-width="2.4"/>
<circle cx="1941.5" cy="868.7" r="3.3" fill="#ff6f80" fill-opacity="0.3" stroke="#ff6f80" stroke-opacity="0.6" stroke-width="2.4"/>
<circle cx="1802.3" cy="951.3" r="3.8" fill="#ff6f80" fill-opacity="0.3" stroke="#ff6f80" stroke-opacity="0.6" stroke-width="2.4"/>
<circle cx="1707.0" cy="1048.3" r="8.4" fill="#3fd3a0" fill-opacity="0.3" stroke="#3fd3a0" stroke-opacity="0.6" stroke-width="2.4"/>
<circle cx="1810.0" cy="981.8" r="8.0" fill="#ff6f80" fill-opacity="0.3" stroke="#ff6f80" stroke-opacity="0.6" stroke-width="2.4"/>
<circle cx="1909.8" cy="877.9" r="4.3" fill="#ff6f80" fill-opacity="0.3" stroke="#ff6f80" stroke-opacity="0.6" stroke-width="2.4"/>
<circle cx="1846.2" cy="1141.6" r="2.1" fill="#3fd3a0" fill-opacity="0.3" stroke="#3fd3a0" stroke-opacity="0.6" stroke-width="2.4"/>
<circle cx="1969.1" cy="1213.4" r="3.3" fill="#ff6f80" fill-opacity="0.3" stroke="#ff6f80" stroke-opacity="0.6" stroke-width="2.4"/>
<circle cx="1889.5" cy="967.6" r="3.0" fill="#3fd3a0" fill-opacity="0.3" stroke="#3fd3a0" stroke-opacity="0.6" stroke-width="2.4"/>
<circle cx="1802.9" cy="928.7" r="8.2" fill="#ff6f80" fill-opacity="0.3" stroke="#ff6f80" stroke-opacity="0.6" stroke-width="2.4"/>
<circle cx="1848.6" cy="1094.7" r="2.9" fill="#ff6f80" fill-opacity="0.3" stroke="#ff6f80" stroke-opacity="0.6" stroke-width="2.4"/>
<circle cx="1925.5" cy="943.3" r="3.0" fill="#ff6f80" fill-opacity="0.3" stroke="#ff6f80" stroke-opacity="0.6" stroke-width="2.4"/>
<circle cx="1977.9" cy="874.4" r="3.0" fill="#3fd3a0" fill-opacity="0.3" stroke="#3fd3a0" stroke-opacity="0.6" stroke-width="2.4"/>
<circle cx="1977.8" cy="882.6" r="3.5" fill="#ff6f80" fill-opacity="0.3" stroke="#ff6f80" stroke-opacity="0.6" stroke-width="2.4"/>
<circle cx="1906.6" cy="944.0" r="3.5" fill="#3fd3a0" fill-opacity="0.3" stroke="#3fd3a0" stroke-opacity="0.6" stroke-width="2.4"/>
<circle cx="1984.8" cy="891.2" r="5.0" fill="#ff6f80" fill-opacity="0.3" stroke="#ff6f80" stroke-opacity="0.6" stroke-width="2.4"/>
<circle cx="1937.6" cy="1285.3" r="2.6" fill="#3fd3a0" fill-opacity="0.3" stroke="#3fd3a0" stroke-opacity="0.6" stroke-width="2.4"/>
<circle cx="1781.0" cy="1134.5" r="2.0" fill="#3fd3a0" fill-opacity="0.3" stroke="#3fd3a0" stroke-opacity="0.6" stroke-width="2.4"/>
<circle cx="1912.0" cy="817.8" r="4.9" fill="#ff6f80" fill-opacity="0.3" stroke="#ff6f80" stroke-opacity="0.6" stroke-width="2.4"/>
<circle cx="1895.0" cy="948.2" r="4.0" fill="#3fd3a0" fill-opacity="0.3" stroke="#3fd3a0" stroke-opacity="0.6" stroke-width="2.4"/>
<circle cx="2003.6" cy="1089.0" r="2.1" fill="#ff6f80" fill-opacity="0.3" stroke="#ff6f80" stroke-opacity="0.6" stroke-width="2.4"/>
<circle cx="1870.4" cy="1010.2" r="4.9" fill="#3fd3a0" fill-opacity="0.3" stroke="#3fd3a0" stroke-opacity="0.6" stroke-width="2.4"/>
<circle cx="1880.7" cy="924.1" r="5.2" fill="#ff6f80" fill-opacity="0.3" stroke="#ff6f80" stroke-opacity="0.6" stroke-width="2.4"/>
<circle cx="1819.5" cy="1022.9" r="6.3" fill="#ff6f80" fill-opacity="0.3" stroke="#ff6f80" stroke-opacity="0.6" stroke-width="2.4"/>
<circle cx="1951.4" cy="1190.7" r="3.3" fill="#ff6f80" fill-opacity="0.3" stroke="#ff6f80" stroke-opacity="0.6" stroke-width="2.4"/>
<circle cx="1942.0" cy="1280.4" r="5.2" fill="#ff6f80" fill-opacity="0.3" stroke="#ff6f80" stroke-opacity="0.6" stroke-width="2.4"/>
<circle cx="1913.3" cy="960.2" r="3.0" fill="#ff6f80" fill-opacity="0.3" stroke="#ff6f80" stroke-opacity="0.6" stroke-width="2.4"/>
<circle cx="1764.6" cy="1059.9" r="3.2" fill="#3fd3a0" fill-opacity="0.3" stroke="#3fd3a0" stroke-opacity="0.6" stroke-width="2.4"/>
<circle cx="1926.6" cy="1300.0" r="2.0" fill="#3fd3a0" fill-opacity="0.3" stroke="#3fd3a0" stroke-opacity="0.6" stroke-width="2.4"/>
<circle cx="1930.1" cy="1194.0" r="3.3" fill="#ff6f80" fill-opacity="0.3" stroke="#ff6f80" stroke-opacity="0.6" stroke-width="2.4"/>
<circle cx="1884.4" cy="1195.3" r="2.0" fill="#ff6f80" fill-opacity="0.3" stroke="#ff6f80" stroke-opacity="0.6" stroke-width="2.4"/>
<circle cx="1998.7" cy="912.0" r="8.6" fill="#ff6f80" fill-opacity="0.3" stroke="#ff6f80" stroke-opacity="0.6" stroke-width="2.4"/>
<circle cx="1853.4" cy="1028.1" r="6.2" fill="#ff6f80" fill-opacity="0.3" stroke="#ff6f80" stroke-opacity="0.6" stroke-width="2.4"/>
<circle cx="1886.1" cy="970.6" r="8.3" fill="#ff6f80" fill-opacity="0.3" stroke="#ff6f80" stroke-opacity="0.6" stroke-width="2.4"/>
<circle cx="1808.5" cy="1032.2" r="5.2" fill="#ff6f80" fill-opacity="0.3" stroke="#ff6f80" stroke-opacity="0.6" stroke-width="2.4"/>
<circle cx="1985.5" cy="884.7" r="5.5" fill="#ff6f80" fill-opacity="0.3" stroke="#ff6f80" stroke-opacity="0.6" stroke-width="2.4"/>
<circle cx="1862.7" cy="1019.2" r="8.1" fill="#ff6f80" fill-opacity="0.3" stroke="#ff6f80" stroke-opacity="0.6" stroke-width="2.4"/>
<circle cx="1988.5" cy="828.6" r="3.0" fill="#ff6f80" fill-opacity="0.3" stroke="#ff6f80" stroke-opacity="0.6" stroke-width="2.4"/>
<circle cx="1918.8" cy="887.5" r="3.0" fill="#ff6f80" fill-opacity="0.3" stroke="#ff6f80" stroke-opacity="0.6" stroke-width="2.4"/>
<circle cx="1951.5" cy="875.9" r="6.2" fill="#ff6f80" fill-opacity="0.3" stroke="#ff6f80" stroke-opacity="0.6" stroke-width="2.4"/>
<circle cx="1839.9" cy="858.7" r="7.3" fill="#ff6f80" fill-opacity="0.3" stroke="#ff6f80" stroke-opacity="0.6" stroke-width="2.4"/>
<circle cx="1892.6" cy="1090.8" r="3.4" fill="#3fd3a0" fill-opacity="0.3" stroke="#3fd3a0" stroke-opacity="0.6" stroke-width="2.4"/>
<circle cx="1930.2" cy="1189.5" r="4.7" fill="#ff6f80" fill-opacity="0.3" stroke="#ff6f80" stroke-opacity="0.6" stroke-width="2.4"/>
<circle cx="1803.8" cy="951.6" r="3.1" fill="#ff6f80" fill-opacity="0.3" stroke="#ff6f80" stroke-opacity="0.6" stroke-width="2.4"/>
<circle cx="1895.9" cy="953.8" r="8.0" fill="#3fd3a0" fill-opacity="0.3" stroke="#3fd3a0" stroke-opacity="0.6" stroke-width="2.4"/>
<circle cx="1849.8" cy="1101.8" r="4.3" fill="#3fd3a0" fill-opacity="0.3" stroke="#3fd3a0" stroke-opacity="0.6" stroke-width="2.4"/>
<circle cx="1851.2" cy="1043.1" r="3.0" fill="#ff6f80" fill-opacity="0.3" stroke="#ff6f80" stroke-opacity="0.6" stroke-width="2.4"/>
<circle cx="1962.9" cy="1207.8" r="6.1" fill="#ff6f80" fill-opacity="0.3" stroke="#ff6f80" stroke-opacity="0.6" stroke-width="2.4"/>
<circle cx="1972.2" cy="873.9" r="6.1" fill="#ff6f80" fill-opacity="0.3" stroke="#ff6f80" stroke-opacity="0.6" stroke-width="2.4"/>
<circle cx="1914.1" cy="1276.2" r="2.1" fill="#ff6f80" fill-opacity="0.3" stroke="#ff6f80" stroke-opacity="0.6" stroke-width="2.4"/>
<circle cx="1946.4" cy="1219.4" r="5.5" fill="#ff6f80" fill-opacity="0.3" stroke="#ff6f80" stroke-opacity="0.6" stroke-width="2.4"/>
<circle cx="1873.6" cy="1017.6" r="3.0" fill="#ff6f80" fill-opacity="0.3" stroke="#ff6f80" stroke-opacity="0.6" stroke-width="2.4"/>
<circle cx="1929.5" cy="995.9" r="3.0" fill="#3fd3a0" fill-opacity="0.3" stroke="#3fd3a0" stroke-opacity="0.6" stroke-width="2.4"/>
<circle cx="1890.8" cy="1105.0" r="2.0" fill="#3fd3a0" fill-opacity="0.3" stroke="#3fd3a0" stroke-opacity="0.6" stroke-width="2.4"/>
<circle cx="1925.2" cy="987.6" r="7.7" fill="#ff6f80" fill-opacity="0.3" stroke="#ff6f80" stroke-opacity="0.6" stroke-width="2.4"/>
<circle cx="1823.9" cy="1036.4" r="10.9" fill="#ff6f80" fill-opacity="0.13" stroke="#ff6f80" stroke-opacity="0.6" stroke-width="2.4"/>
<circle cx="1762.6" cy="1086.4" r="3.0" fill="#ff6f80" fill-opacity="0.3" stroke="#ff6f80" stroke-opacity="0.6" stroke-width="2.4"/>
<circle cx="1890.5" cy="858.1" r="5.8" fill="#ff6f80" fill-opacity="0.3" stroke="#ff6f80" stroke-opacity="0.6" stroke-width="2.4"/>
<circle cx="1878.9" cy="1055.7" r="2.3" fill="#3fd3a0" fill-opacity="0.3" stroke="#3fd3a0" stroke-opacity="0.6" stroke-width="2.4"/>
<circle cx="1816.2" cy="1151.0" r="2.0" fill="#3fd3a0" fill-opacity="0.3" stroke="#3fd3a0" stroke-opacity="0.6" stroke-width="2.4"/>
<circle cx="1875.2" cy="1178.0" r="3.6" fill="#3fd3a0" fill-opacity="0.3" stroke="#3fd3a0" stroke-opacity="0.6" stroke-width="2.4"/>
<circle cx="1933.0" cy="834.1" r="3.4" fill="#ff6f80" fill-opacity="0.3" stroke="#ff6f80" stroke-opacity="0.6" stroke-width="2.4"/>
<circle cx="1995.7" cy="762.6" r="6.3" fill="#3fd3a0" fill-opacity="0.3" stroke="#3fd3a0" stroke-opacity="0.6" stroke-width="2.4"/>
<circle cx="1804.3" cy="1103.1" r="3.0" fill="#ff6f80" fill-opacity="0.3" stroke="#ff6f80" stroke-opacity="0.6" stroke-width="2.4"/>
<circle cx="1876.5" cy="1197.7" r="6.2" fill="#3fd3a0" fill-opacity="0.3" stroke="#3fd3a0" stroke-opacity="0.6" stroke-width="2.4"/>
<circle cx="2013.3" cy="1095.2" r="2.0" fill="#ff6f80" fill-opacity="0.3" stroke="#ff6f80" stroke-opacity="0.6" stroke-width="2.4"/>
<circle cx="1861.1" cy="1081.3" r="2.1" fill="#3fd3a0" fill-opacity="0.3" stroke="#3fd3a0" stroke-opacity="0.6" stroke-width="2.4"/>
<circle cx="1942.1" cy="1141.8" r="3.3" fill="#ff6f80" fill-opacity="0.3" stroke="#ff6f80" stroke-opacity="0.6" stroke-width="2.4"/>
<circle cx="1891.4" cy="933.8" r="7.9" fill="#3fd3a0" fill-opacity="0.3" stroke="#3fd3a0" stroke-opacity="0.6" stroke-width="2.4"/>
<circle cx="1801.0" cy="945.1" r="3.6" fill="#ff6f80" fill-opacity="0.3" stroke="#ff6f80" stroke-opacity="0.6" stroke-width="2.4"/>
<circle cx="1812.7" cy="959.7" r="6.7" fill="#ff6f80" fill-opacity="0.3" stroke="#ff6f80" stroke-opacity="0.6" stroke-width="2.4"/>
<circle cx="1812.1" cy="1062.7" r="8.1" fill="#ff6f80" fill-opacity="0.3" stroke="#ff6f80" stroke-opacity="0.6" stroke-width="2.4"/>
<circle cx="1995.3" cy="846.4" r="6.4" fill="#ff6f80" fill-opacity="0.3" stroke="#ff6f80" stroke-opacity="0.6" stroke-width="2.4"/>
<circle cx="1929.8" cy="1200.0" r="5.4" fill="#ff6f80" fill-opacity="0.3" stroke="#ff6f80" stroke-opacity="0.6" stroke-width="2.4"/>
<circle cx="1859.0" cy="843.0" r="23.0" fill="#ff6f80" fill-opacity="0.13" stroke="#ff6f80" stroke-opacity="0.6" stroke-width="2.4"/>
<circle cx="1888.3" cy="1047.2" r="3.0" fill="#3fd3a0" fill-opacity="0.3" stroke="#3fd3a0" stroke-opacity="0.6" stroke-width="2.4"/>
<circle cx="1961.4" cy="819.9" r="3.6" fill="#ff6f80" fill-opacity="0.3" stroke="#ff6f80" stroke-opacity="0.6" stroke-width="2.4"/>
<circle cx="1920.1" cy="1156.7" r="4.4" fill="#ff6f80" fill-opacity="0.3" stroke="#ff6f80" stroke-opacity="0.6" stroke-width="2.4"/>
<circle cx="1890.7" cy="1224.3" r="2.5" fill="#3fd3a0" fill-opacity="0.3" stroke="#3fd3a0" stroke-opacity="0.6" stroke-width="2.4"/>
<circle cx="1915.2" cy="1034.3" r="7.7" fill="#3fd3a0" fill-opacity="0.3" stroke="#3fd3a0" stroke-opacity="0.6" stroke-width="2.4"/>
<circle cx="1997.5" cy="850.9" r="4.9" fill="#ff6f80" fill-opacity="0.3" stroke="#ff6f80" stroke-opacity="0.6" stroke-width="2.4"/>
<circle cx="1887.4" cy="871.6" r="5.7" fill="#ff6f80" fill-opacity="0.3" stroke="#ff6f80" stroke-opacity="0.6" stroke-width="2.4"/>
<circle cx="1813.0" cy="955.1" r="3.1" fill="#ff6f80" fill-opacity="0.3" stroke="#ff6f80" stroke-opacity="0.6" stroke-width="2.4"/>
<circle cx="1831.9" cy="955.3" r="3.3" fill="#ff6f80" fill-opacity="0.3" stroke="#ff6f80" stroke-opacity="0.6" stroke-width="2.4"/>
<circle cx="1961.2" cy="898.2" r="6.3" fill="#ff6f80" fill-opacity="0.3" stroke="#ff6f80" stroke-opacity="0.6" stroke-width="2.4"/>
<circle cx="1854.2" cy="878.1" r="5.6" fill="#ff6f80" fill-opacity="0.3" stroke="#ff6f80" stroke-opacity="0.6" stroke-width="2.4"/>
<circle cx="1948.8" cy="1219.4" r="6.9" fill="#ff6f80" fill-opacity="0.3" stroke="#ff6f80" stroke-opacity="0.6" stroke-width="2.4"/>
<circle cx="1852.4" cy="1089.9" r="2.0" fill="#3fd3a0" fill-opacity="0.3" stroke="#3fd3a0" stroke-opacity="0.6" stroke-width="2.4"/>
<circle cx="1880.8" cy="957.6" r="3.6" fill="#ff6f80" fill-opacity="0.3" stroke="#ff6f80" stroke-opacity="0.6" stroke-width="2.4"/>
<circle cx="1801.4" cy="1149.6" r="2.0" fill="#3fd3a0" fill-opacity="0.3" stroke="#3fd3a0" stroke-opacity="0.6" stroke-width="2.4"/>
<circle cx="1810.5" cy="1173.1" r="2.0" fill="#3fd3a0" fill-opacity="0.3" stroke="#3fd3a0" stroke-opacity="0.6" stroke-width="2.4"/>
<circle cx="1873.9" cy="958.8" r="3.3" fill="#3fd3a0" fill-opacity="0.3" stroke="#3fd3a0" stroke-opacity="0.6" stroke-width="2.4"/>
<circle cx="1885.7" cy="988.8" r="4.0" fill="#3fd3a0" fill-opacity="0.3" stroke="#3fd3a0" stroke-opacity="0.6" stroke-width="2.4"/>
<circle cx="1973.8" cy="811.9" r="3.0" fill="#ff6f80" fill-opacity="0.3" stroke="#ff6f80" stroke-opacity="0.6" stroke-width="2.4"/>
<circle cx="1865.3" cy="953.5" r="3.0" fill="#ff6f80" fill-opacity="0.3" stroke="#ff6f80" stroke-opacity="0.6" stroke-width="2.4"/>
<circle cx="1884.4" cy="905.7" r="4.1" fill="#ff6f80" fill-opacity="0.3" stroke="#ff6f80" stroke-opacity="0.6" stroke-width="2.4"/>
<circle cx="1898.4" cy="1038.7" r="3.6" fill="#ff6f80" fill-opacity="0.3" stroke="#ff6f80" stroke-opacity="0.6" stroke-width="2.4"/>
<circle cx="1948.2" cy="819.0" r="6.5" fill="#ff6f80" fill-opacity="0.3" stroke="#ff6f80" stroke-opacity="0.6" stroke-width="2.4"/>
<circle cx="1874.0" cy="1036.2" r="3.2" fill="#3fd3a0" fill-opacity="0.3" stroke="#3fd3a0" stroke-opacity="0.6" stroke-width="2.4"/>
<circle cx="1905.2" cy="1039.2" r="7.1" fill="#ff6f80" fill-opacity="0.3" stroke="#ff6f80" stroke-opacity="0.6" stroke-width="2.4"/>
<circle cx="1919.2" cy="1268.1" r="2.8" fill="#3fd3a0" fill-opacity="0.3" stroke="#3fd3a0" stroke-opacity="0.6" stroke-width="2.4"/>
<circle cx="1980.1" cy="877.6" r="4.1" fill="#ff6f80" fill-opacity="0.3" stroke="#ff6f80" stroke-opacity="0.6" stroke-width="2.4"/>
<circle cx="1917.7" cy="1010.7" r="5.1" fill="#3fd3a0" fill-opacity="0.3" stroke="#3fd3a0" stroke-opacity="0.6" stroke-width="2.4"/>
<circle cx="1855.0" cy="982.1" r="3.0" fill="#3fd3a0" fill-opacity="0.3" stroke="#3fd3a0" stroke-opacity="0.6" stroke-width="2.4"/>
<circle cx="1892.5" cy="932.6" r="4.0" fill="#ff6f80" fill-opacity="0.3" stroke="#ff6f80" stroke-opacity="0.6" stroke-width="2.4"/>
<circle cx="1908.3" cy="856.4" r="4.3" fill="#ff6f80" fill-opacity="0.3" stroke="#ff6f80" stroke-opacity="0.6" stroke-width="2.4"/>
<circle cx="1908.5" cy="869.9" r="8.1" fill="#ff6f80" fill-opacity="0.3" stroke="#ff6f80" stroke-opacity="0.6" stroke-width="2.4"/>
<circle cx="1893.6" cy="1131.5" r="2.6" fill="#3fd3a0" fill-opacity="0.3" stroke="#3fd3a0" stroke-opacity="0.6" stroke-width="2.4"/>
<circle cx="1974.2" cy="819.4" r="3.1" fill="#ff6f80" fill-opacity="0.3" stroke="#ff6f80" stroke-opacity="0.6" stroke-width="2.4"/>
<circle cx="1873.6" cy="1014.6" r="3.3" fill="#ff6f80" fill-opacity="0.3" stroke="#ff6f80" stroke-opacity="0.6" stroke-width="2.4"/>
<circle cx="1866.4" cy="985.7" r="3.2" fill="#ff6f80" fill-opacity="0.3" stroke="#ff6f80" stroke-opacity="0.6" stroke-width="2.4"/>
<circle cx="1963.3" cy="970.7" r="3.1" fill="#3fd3a0" fill-opacity="0.3" stroke="#3fd3a0" stroke-opacity="0.6" stroke-width="2.4"/>
<circle cx="1813.1" cy="870.3" r="8.9" fill="#ff6f80" fill-opacity="0.3" stroke="#ff6f80" stroke-opacity="0.6" stroke-width="2.4"/>
<circle cx="1980.3" cy="859.8" r="9.7" fill="#ff6f80" fill-opacity="0.3" stroke="#ff6f80" stroke-opacity="0.6" stroke-width="2.4"/>
<circle cx="1870.7" cy="1150.5" r="3.9" fill="#ff6f80" fill-opacity="0.3" stroke="#ff6f80" stroke-opacity="0.6" stroke-width="2.4"/>
<circle cx="1772.4" cy="1105.1" r="3.8" fill="#ff6f80" fill-opacity="0.3" stroke="#ff6f80" stroke-opacity="0.6" stroke-width="2.4"/>
<circle cx="1897.2" cy="1210.5" r="2.0" fill="#ff6f80" fill-opacity="0.3" stroke="#ff6f80" stroke-opacity="0.6" stroke-width="2.4"/>
<circle cx="1874.7" cy="943.3" r="3.7" fill="#3fd3a0" fill-opacity="0.3" stroke="#3fd3a0" stroke-opacity="0.6" stroke-width="2.4"/>
<circle cx="1876.8" cy="986.8" r="8.1" fill="#ff6f80" fill-opacity="0.3" stroke="#ff6f80" stroke-opacity="0.6" stroke-width="2.4"/>
<circle cx="1897.3" cy="847.4" r="3.4" fill="#3fd3a0" fill-opacity="0.3" stroke="#3fd3a0" stroke-opacity="0.6" stroke-width="2.4"/>
<circle cx="1827.0" cy="840.1" r="3.8" fill="#ff6f80" fill-opacity="0.3" stroke="#ff6f80" stroke-opacity="0.6" stroke-width="2.4"/>
<circle cx="1977.6" cy="1088.3" r="3.2" fill="#ff6f80" fill-opacity="0.3" stroke="#ff6f80" stroke-opacity="0.6" stroke-width="2.4"/>
<circle cx="1879.5" cy="1014.4" r="5.2" fill="#ff6f80" fill-opacity="0.3" stroke="#ff6f80" stroke-opacity="0.6" stroke-width="2.4"/>
<circle cx="1859.2" cy="854.7" r="3.9" fill="#ff6f80" fill-opacity="0.3" stroke="#ff6f80" stroke-opacity="0.6" stroke-width="2.4"/>
<circle cx="1864.2" cy="1105.0" r="4.9" fill="#ff6f80" fill-opacity="0.3" stroke="#ff6f80" stroke-opacity="0.6" stroke-width="2.4"/>
<circle cx="1903.6" cy="881.1" r="7.8" fill="#ff6f80" fill-opacity="0.3" stroke="#ff6f80" stroke-opacity="0.6" stroke-width="2.4"/>
<circle cx="1819.4" cy="975.7" r="4.4" fill="#ff6f80" fill-opacity="0.3" stroke="#ff6f80" stroke-opacity="0.6" stroke-width="2.4"/>
<circle cx="1880.7" cy="1218.3" r="2.1" fill="#3fd3a0" fill-opacity="0.3" stroke="#3fd3a0" stroke-opacity="0.6" stroke-width="2.4"/>
<circle cx="1891.0" cy="1218.1" r="2.5" fill="#ff6f80" fill-opacity="0.3" stroke="#ff6f80" stroke-opacity="0.6" stroke-width="2.4"/>
<circle cx="1837.2" cy="846.2" r="3.0" fill="#ff6f80" fill-opacity="0.3" stroke="#ff6f80" stroke-opacity="0.6" stroke-width="2.4"/>
<circle cx="1910.8" cy="933.2" r="3.0" fill="#3fd3a0" fill-opacity="0.3" stroke="#3fd3a0" stroke-opacity="0.6" stroke-width="2.4"/>
<circle cx="1869.6" cy="1001.6" r="6.6" fill="#3fd3a0" fill-opacity="0.3" stroke="#3fd3a0" stroke-opacity="0.6" stroke-width="2.4"/>
<circle cx="1969.8" cy="1235.8" r="3.2" fill="#3fd3a0" fill-opacity="0.3" stroke="#3fd3a0" stroke-opacity="0.6" stroke-width="2.4"/>
<circle cx="1910.7" cy="928.8" r="3.0" fill="#ff6f80" fill-opacity="0.3" stroke="#ff6f80" stroke-opacity="0.6" stroke-width="2.4"/>
<circle cx="1914.7" cy="866.8" r="3.2" fill="#ff6f80" fill-opacity="0.3" stroke="#ff6f80" stroke-opacity="0.6" stroke-width="2.4"/>
<circle cx="1936.9" cy="899.1" r="5.6" fill="#ff6f80" fill-opacity="0.3" stroke="#ff6f80" stroke-opacity="0.6" stroke-width="2.4"/>
<circle cx="1815.4" cy="1011.9" r="8.5" fill="#ff6f80" fill-opacity="0.3" stroke="#ff6f80" stroke-opacity="0.6" stroke-width="2.4"/>
<circle cx="1823.3" cy="926.7" r="3.4" fill="#ff6f80" fill-opacity="0.3" stroke="#ff6f80" stroke-opacity="0.6" stroke-width="2.4"/>
<circle cx="1884.3" cy="859.8" r="3.7" fill="#ff6f80" fill-opacity="0.3" stroke="#ff6f80" stroke-opacity="0.6" stroke-width="2.4"/>
<circle cx="1919.1" cy="1169.6" r="4.9" fill="#3fd3a0" fill-opacity="0.3" stroke="#3fd3a0" stroke-opacity="0.6" stroke-width="2.4"/>
<circle cx="1882.6" cy="1272.7" r="2.1" fill="#3fd3a0" fill-opacity="0.3" stroke="#3fd3a0" stroke-opacity="0.6" stroke-width="2.4"/>
<circle cx="1810.3" cy="916.5" r="3.1" fill="#ff6f80" fill-opacity="0.3" stroke="#ff6f80" stroke-opacity="0.6" stroke-width="2.4"/>
<circle cx="1932.5" cy="820.6" r="6.4" fill="#ff6f80" fill-opacity="0.3" stroke="#ff6f80" stroke-opacity="0.6" stroke-width="2.4"/>
<circle cx="1855.4" cy="1078.0" r="5.5" fill="#3fd3a0" fill-opacity="0.3" stroke="#3fd3a0" stroke-opacity="0.6" stroke-width="2.4"/>
<circle cx="1936.0" cy="1204.3" r="3.0" fill="#ff6f80" fill-opacity="0.3" stroke="#ff6f80" stroke-opacity="0.6" stroke-width="2.4"/>
<circle cx="1807.3" cy="1001.8" r="10.8" fill="#ff6f80" fill-opacity="0.13" stroke="#ff6f80" stroke-opacity="0.6" stroke-width="2.4"/>
<circle cx="1778.4" cy="1095.9" r="3.1" fill="#3fd3a0" fill-opacity="0.3" stroke="#3fd3a0" stroke-opacity="0.6" stroke-width="2.4"/>
<circle cx="1829.1" cy="985.3" r="3.2" fill="#ff6f80" fill-opacity="0.3" stroke="#ff6f80" stroke-opacity="0.6" stroke-width="2.4"/>
<circle cx="1979.4" cy="873.8" r="8.2" fill="#ff6f80" fill-opacity="0.3" stroke="#ff6f80" stroke-opacity="0.6" stroke-width="2.4"/>
<circle cx="1910.6" cy="1022.7" r="5.4" fill="#ff6f80" fill-opacity="0.3" stroke="#ff6f80" stroke-opacity="0.6" stroke-width="2.4"/>
<circle cx="1978.6" cy="858.7" r="3.2" fill="#ff6f80" fill-opacity="0.3" stroke="#ff6f80" stroke-opacity="0.6" stroke-width="2.4"/>
<circle cx="1787.5" cy="929.6" r="4.1" fill="#ff6f80" fill-opacity="0.3" stroke="#ff6f80" stroke-opacity="0.6" stroke-width="2.4"/>
<circle cx="1717.2" cy="1076.8" r="11.8" fill="#ff6f80" fill-opacity="0.13" stroke="#ff6f80" stroke-opacity="0.6" stroke-width="2.4"/>
<circle cx="1905.5" cy="997.0" r="3.0" fill="#ff6f80" fill-opacity="0.3" stroke="#ff6f80" stroke-opacity="0.6" stroke-width="2.4"/>
<circle cx="1963.4" cy="853.0" r="6.5" fill="#ff6f80" fill-opacity="0.3" stroke="#ff6f80" stroke-opacity="0.6" stroke-width="2.4"/>
<circle cx="1803.7" cy="1159.8" r="2.6" fill="#3fd3a0" fill-opacity="0.3" stroke="#3fd3a0" stroke-opacity="0.6" stroke-width="2.4"/>
<circle cx="1927.4" cy="969.5" r="4.2" fill="#3fd3a0" fill-opacity="0.3" stroke="#3fd3a0" stroke-opacity="0.6" stroke-width="2.4"/>
<circle cx="1903.9" cy="879.5" r="3.5" fill="#ff6f80" fill-opacity="0.3" stroke="#ff6f80" stroke-opacity="0.6" stroke-width="2.4"/>
<circle cx="1996.2" cy="844.2" r="7.9" fill="#ff6f80" fill-opacity="0.3" stroke="#ff6f80" stroke-opacity="0.6" stroke-width="2.4"/>
<circle cx="1843.2" cy="863.7" r="3.0" fill="#ff6f80" fill-opacity="0.3" stroke="#ff6f80" stroke-opacity="0.6" stroke-width="2.4"/>
<circle cx="1811.6" cy="1052.3" r="3.0" fill="#ff6f80" fill-opacity="0.3" stroke="#ff6f80" stroke-opacity="0.6" stroke-width="2.4"/>
<circle cx="1975.1" cy="807.0" r="8.7" fill="#ff6f80" fill-opacity="0.3" stroke="#ff6f80" stroke-opacity="0.6" stroke-width="2.4"/>
<circle cx="1886.6" cy="1072.9" r="4.8" fill="#ff6f80" fill-opacity="0.3" stroke="#ff6f80" stroke-opacity="0.6" stroke-width="2.4"/>
<circle cx="1837.4" cy="1081.2" r="3.7" fill="#ff6f80" fill-opacity="0.3" stroke="#ff6f80" stroke-opacity="0.6" stroke-width="2.4"/>
<circle cx="1866.0" cy="958.9" r="4.6" fill="#ff6f80" fill-opacity="0.3" stroke="#ff6f80" stroke-opacity="0.6" stroke-width="2.4"/>
<circle cx="1847.5" cy="1083.3" r="2.0" fill="#3fd3a0" fill-opacity="0.3" stroke="#3fd3a0" stroke-opacity="0.6" stroke-width="2.4"/>
<circle cx="1981.1" cy="1073.1" r="5.8" fill="#3fd3a0" fill-opacity="0.3" stroke="#3fd3a0" stroke-opacity="0.6" stroke-width="2.4"/>
<circle cx="1925.4" cy="1141.4" r="3.0" fill="#ff6f80" fill-opacity="0.3" stroke="#ff6f80" stroke-opacity="0.6" stroke-width="2.4"/>
<circle cx="1963.5" cy="1119.2" r="10.1" fill="#ff6f80" fill-opacity="0.13" stroke="#ff6f80" stroke-opacity="0.6" stroke-width="2.4"/>
<circle cx="1819.7" cy="1186.4" r="3.8" fill="#3fd3a0" fill-opacity="0.3" stroke="#3fd3a0" stroke-opacity="0.6" stroke-width="2.4"/>
<circle cx="1868.1" cy="944.5" r="3.8" fill="#ff6f80" fill-opacity="0.3" stroke="#ff6f80" stroke-opacity="0.6" stroke-width="2.4"/>
<circle cx="1906.8" cy="863.1" r="3.1" fill="#ff6f80" fill-opacity="0.3" stroke="#ff6f80" stroke-opacity="0.6" stroke-width="2.4"/>
<circle cx="1856.1" cy="1143.5" r="2.0" fill="#3fd3a0" fill-opacity="0.3" stroke="#3fd3a0" stroke-opacity="0.6" stroke-width="2.4"/>
<circle cx="1966.4" cy="1099.0" r="2.4" fill="#3fd3a0" fill-opacity="0.3" stroke="#3fd3a0" stroke-opacity="0.6" stroke-width="2.4"/>
<circle cx="1988.1" cy="723.4" r="2.8" fill="#ff6f80" fill-opacity="0.3" stroke="#ff6f80" stroke-opacity="0.6" stroke-width="2.4"/>
<circle cx="1867.2" cy="1170.2" r="2.3" fill="#3fd3a0" fill-opacity="0.3" stroke="#3fd3a0" stroke-opacity="0.6" stroke-width="2.4"/>
<circle cx="1846.8" cy="1148.4" r="4.9" fill="#ff6f80" fill-opacity="0.3" stroke="#ff6f80" stroke-opacity="0.6" stroke-width="2.4"/>
<circle cx="1878.6" cy="979.7" r="3.1" fill="#3fd3a0" fill-opacity="0.3" stroke="#3fd3a0" stroke-opacity="0.6" stroke-width="2.4"/>
<circle cx="1791.9" cy="1093.7" r="4.5" fill="#ff6f80" fill-opacity="0.3" stroke="#ff6f80" stroke-opacity="0.6" stroke-width="2.4"/>
<circle cx="1990.2" cy="754.5" r="2.8" fill="#ff6f80" fill-opacity="0.3" stroke="#ff6f80" stroke-opacity="0.6" stroke-width="2.4"/>
<circle cx="1882.4" cy="1148.4" r="4.4" fill="#ff6f80" fill-opacity="0.3" stroke="#ff6f80" stroke-opacity="0.6" stroke-width="2.4"/>
<circle cx="1908.1" cy="976.0" r="3.0" fill="#3fd3a0" fill-opacity="0.3" stroke="#3fd3a0" stroke-opacity="0.6" stroke-width="2.4"/>
<circle cx="1997.9" cy="862.8" r="3.0" fill="#ff6f80" fill-opacity="0.3" stroke="#ff6f80" stroke-opacity="0.6" stroke-width="2.4"/>
<circle cx="1915.4" cy="840.9" r="5.5" fill="#3fd3a0" fill-opacity="0.3" stroke="#3fd3a0" stroke-opacity="0.6" stroke-width="2.4"/>
<circle cx="1869.7" cy="1064.5" r="7.2" fill="#3fd3a0" fill-opacity="0.3" stroke="#3fd3a0" stroke-opacity="0.6" stroke-width="2.4"/>
<circle cx="1937.1" cy="875.4" r="3.3" fill="#ff6f80" fill-opacity="0.3" stroke="#ff6f80" stroke-opacity="0.6" stroke-width="2.4"/>
<circle cx="1887.5" cy="1040.8" r="3.6" fill="#ff6f80" fill-opacity="0.3" stroke="#ff6f80" stroke-opacity="0.6" stroke-width="2.4"/>
<circle cx="1838.2" cy="1033.7" r="4.1" fill="#3fd3a0" fill-opacity="0.3" stroke="#3fd3a0" stroke-opacity="0.6" stroke-width="2.4"/>
<circle cx="1936.1" cy="1162.1" r="5.4" fill="#ff6f80" fill-opacity="0.3" stroke="#ff6f80" stroke-opacity="0.6" stroke-width="2.4"/>
<circle cx="1988.8" cy="877.5" r="8.3" fill="#ff6f80" fill-opacity="0.3" stroke="#ff6f80" stroke-opacity="0.6" stroke-width="2.4"/>
<circle cx="1820.8" cy="955.9" r="5.0" fill="#ff6f80" fill-opacity="0.3" stroke="#ff6f80" stroke-opacity="0.6" stroke-width="2.4"/>
<circle cx="1877.7" cy="992.4" r="4.2" fill="#ff6f80" fill-opacity="0.3" stroke="#ff6f80" stroke-opacity="0.6" stroke-width="2.4"/>
<circle cx="1807.1" cy="937.7" r="6.4" fill="#ff6f80" fill-opacity="0.3" stroke="#ff6f80" stroke-opacity="0.6" stroke-width="2.4"/>
<circle cx="1949.3" cy="1182.2" r="3.7" fill="#ff6f80" fill-opacity="0.3" stroke="#ff6f80" stroke-opacity="0.6" stroke-width="2.4"/>
<circle cx="1803.0" cy="1041.4" r="4.8" fill="#ff6f80" fill-opacity="0.3" stroke="#ff6f80" stroke-opacity="0.6" stroke-width="2.4"/>
<circle cx="1912.7" cy="858.8" r="7.9" fill="#ff6f80" fill-opacity="0.3" stroke="#ff6f80" stroke-opacity="0.6" stroke-width="2.4"/>
<circle cx="1947.9" cy="1208.6" r="3.8" fill="#ff6f80" fill-opacity="0.3" stroke="#ff6f80" stroke-opacity="0.6" stroke-width="2.4"/>
<circle cx="1938.9" cy="890.9" r="4.0" fill="#ff6f80" fill-opacity="0.3" stroke="#ff6f80" stroke-opacity="0.6" stroke-width="2.4"/>
<circle cx="1943.0" cy="1163.5" r="3.2" fill="#ff6f80" fill-opacity="0.3" stroke="#ff6f80" stroke-opacity="0.6" stroke-width="2.4"/>
<circle cx="1857.1" cy="992.4" r="3.0" fill="#ff6f80" fill-opacity="0.3" stroke="#ff6f80" stroke-opacity="0.6" stroke-width="2.4"/>
<circle cx="1939.1" cy="1193.3" r="5.6" fill="#3fd3a0" fill-opacity="0.3" stroke="#3fd3a0" stroke-opacity="0.6" stroke-width="2.4"/>
<circle cx="1902.6" cy="982.4" r="3.0" fill="#3fd3a0" fill-opacity="0.3" stroke="#3fd3a0" stroke-opacity="0.6" stroke-width="2.4"/>
<circle cx="1892.9" cy="1069.7" r="6.1" fill="#3fd3a0" fill-opacity="0.3" stroke="#3fd3a0" stroke-opacity="0.6" stroke-width="2.4"/>
<circle cx="1958.5" cy="1208.1" r="3.0" fill="#3fd3a0" fill-opacity="0.3" stroke="#3fd3a0" stroke-opacity="0.6" stroke-width="2.4"/>
<circle cx="1896.3" cy="974.6" r="4.8" fill="#ff6f80" fill-opacity="0.3" stroke="#ff6f80" stroke-opacity="0.6" stroke-width="2.4"/>
<circle cx="1804.7" cy="1062.4" r="3.0" fill="#ff6f80" fill-opacity="0.3" stroke="#ff6f80" stroke-opacity="0.6" stroke-width="2.4"/>
<circle cx="1798.2" cy="1064.1" r="3.0" fill="#ff6f80" fill-opacity="0.3" stroke="#ff6f80" stroke-opacity="0.6" stroke-width="2.4"/>
<circle cx="1919.0" cy="988.5" r="4.0" fill="#ff6f80" fill-opacity="0.3" stroke="#ff6f80" stroke-opacity="0.6" stroke-width="2.4"/>
<circle cx="1880.3" cy="1016.2" r="3.6" fill="#ff6f80" fill-opacity="0.3" stroke="#ff6f80" stroke-opacity="0.6" stroke-width="2.4"/>
<circle cx="1988.7" cy="881.2" r="3.4" fill="#ff6f80" fill-opacity="0.3" stroke="#ff6f80" stroke-opacity="0.6" stroke-width="2.4"/>
<circle cx="1902.9" cy="968.0" r="3.6" fill="#3fd3a0" fill-opacity="0.3" stroke="#3fd3a0" stroke-opacity="0.6" stroke-width="2.4"/>
<circle cx="1875.5" cy="1102.8" r="2.0" fill="#ff6f80" fill-opacity="0.3" stroke="#ff6f80" stroke-opacity="0.6" stroke-width="2.4"/>
<circle cx="1912.8" cy="898.4" r="3.1" fill="#3fd3a0" fill-opacity="0.3" stroke="#3fd3a0" stroke-opacity="0.6" stroke-width="2.4"/>
<circle cx="1915.6" cy="859.9" r="3.0" fill="#ff6f80" fill-opacity="0.3" stroke="#ff6f80" stroke-opacity="0.6" stroke-width="2.4"/>
<circle cx="1977.7" cy="890.5" r="3.4" fill="#ff6f80" fill-opacity="0.3" stroke="#ff6f80" stroke-opacity="0.6" stroke-width="2.4"/>
<circle cx="1901.1" cy="890.5" r="5.0" fill="#ff6f80" fill-opacity="0.3" stroke="#ff6f80" stroke-opacity="0.6" stroke-width="2.4"/>
<circle cx="1813.0" cy="1019.6" r="3.0" fill="#ff6f80" fill-opacity="0.3" stroke="#ff6f80" stroke-opacity="0.6" stroke-width="2.4"/>
<circle cx="1843.3" cy="992.6" r="3.0" fill="#3fd3a0" fill-opacity="0.3" stroke="#3fd3a0" stroke-opacity="0.6" stroke-width="2.4"/>
<circle cx="1815.4" cy="922.0" r="3.0" fill="#ff6f80" fill-opacity="0.3" stroke="#ff6f80" stroke-opacity="0.6" stroke-width="2.4"/>
<circle cx="1779.9" cy="1108.1" r="3.8" fill="#ff6f80" fill-opacity="0.3" stroke="#ff6f80" stroke-opacity="0.6" stroke-width="2.4"/>
<circle cx="1929.4" cy="1171.9" r="3.5" fill="#ff6f80" fill-opacity="0.3" stroke="#ff6f80" stroke-opacity="0.6" stroke-width="2.4"/>
<circle cx="1949.9" cy="1085.1" r="4.1" fill="#3fd3a0" fill-opacity="0.3" stroke="#3fd3a0" stroke-opacity="0.6" stroke-width="2.4"/>
<circle cx="1902.7" cy="972.2" r="7.4" fill="#3fd3a0" fill-opacity="0.3" stroke="#3fd3a0" stroke-opacity="0.6" stroke-width="2.4"/>
<circle cx="1874.8" cy="1016.8" r="3.0" fill="#ff6f80" fill-opacity="0.3" stroke="#ff6f80" stroke-opacity="0.6" stroke-width="2.4"/>
<circle cx="1804.5" cy="1021.3" r="3.0" fill="#ff6f80" fill-opacity="0.3" stroke="#ff6f80" stroke-opacity="0.6" stroke-width="2.4"/>
<circle cx="1814.9" cy="1172.4" r="2.0" fill="#3fd3a0" fill-opacity="0.3" stroke="#3fd3a0" stroke-opacity="0.6" stroke-width="2.4"/>
<circle cx="1940.6" cy="861.6" r="9.6" fill="#ff6f80" fill-opacity="0.3" stroke="#ff6f80" stroke-opacity="0.6" stroke-width="2.4"/>
<circle cx="1969.4" cy="888.2" r="3.0" fill="#ff6f80" fill-opacity="0.3" stroke="#ff6f80" stroke-opacity="0.6" stroke-width="2.4"/>
<circle cx="1909.9" cy="910.7" r="7.4" fill="#ff6f80" fill-opacity="0.3" stroke="#ff6f80" stroke-opacity="0.6" stroke-width="2.4"/>
<circle cx="1878.7" cy="1036.2" r="6.5" fill="#3fd3a0" fill-opacity="0.3" stroke="#3fd3a0" stroke-opacity="0.6" stroke-width="2.4"/>
<circle cx="1876.4" cy="963.0" r="3.2" fill="#3fd3a0" fill-opacity="0.3" stroke="#3fd3a0" stroke-opacity="0.6" stroke-width="2.4"/>
<circle cx="1815.9" cy="1003.6" r="9.0" fill="#ff6f80" fill-opacity="0.3" stroke="#ff6f80" stroke-opacity="0.6" stroke-width="2.4"/>
<circle cx="1892.4" cy="1220.1" r="2.0" fill="#ff6f80" fill-opacity="0.3" stroke="#ff6f80" stroke-opacity="0.6" stroke-width="2.4"/>
<circle cx="1934.5" cy="889.9" r="3.0" fill="#ff6f80" fill-opacity="0.3" stroke="#ff6f80" stroke-opacity="0.6" stroke-width="2.4"/>
<circle cx="1894.2" cy="886.3" r="3.1" fill="#ff6f80" fill-opacity="0.3" stroke="#ff6f80" stroke-opacity="0.6" stroke-width="2.4"/>
<circle cx="1986.8" cy="1091.6" r="3.7" fill="#ff6f80" fill-opacity="0.3" stroke="#ff6f80" stroke-opacity="0.6" stroke-width="2.4"/>
<circle cx="1972.3" cy="1231.0" r="3.4" fill="#ff6f80" fill-opacity="0.3" stroke="#ff6f80" stroke-opacity="0.6" stroke-width="2.4"/>
<circle cx="1887.6" cy="971.4" r="3.0" fill="#3fd3a0" fill-opacity="0.3" stroke="#3fd3a0" stroke-opacity="0.6" stroke-width="2.4"/>
<circle cx="1869.7" cy="988.9" r="3.1" fill="#3fd3a0" fill-opacity="0.3" stroke="#3fd3a0" stroke-opacity="0.6" stroke-width="2.4"/>
<circle cx="1993.0" cy="832.8" r="3.2" fill="#ff6f80" fill-opacity="0.3" stroke="#ff6f80" stroke-opacity="0.6" stroke-width="2.4"/>
<circle cx="1898.9" cy="1015.4" r="7.1" fill="#3fd3a0" fill-opacity="0.3" stroke="#3fd3a0" stroke-opacity="0.6" stroke-width="2.4"/>
<circle cx="1873.9" cy="964.6" r="3.5" fill="#ff6f80" fill-opacity="0.3" stroke="#ff6f80" stroke-opacity="0.6" stroke-width="2.4"/>
<circle cx="1901.4" cy="827.5" r="3.0" fill="#ff6f80" fill-opacity="0.3" stroke="#ff6f80" stroke-opacity="0.6" stroke-width="2.4"/>
<circle cx="1792.2" cy="1117.9" r="5.1" fill="#3fd3a0" fill-opacity="0.3" stroke="#3fd3a0" stroke-opacity="0.6" stroke-width="2.4"/>
<circle cx="1905.1" cy="910.8" r="5.1" fill="#ff6f80" fill-opacity="0.3" stroke="#ff6f80" stroke-opacity="0.6" stroke-width="2.4"/>
<circle cx="1892.8" cy="948.9" r="5.8" fill="#3fd3a0" fill-opacity="0.3" stroke="#3fd3a0" stroke-opacity="0.6" stroke-width="2.4"/>
<circle cx="1896.7" cy="977.1" r="3.1" fill="#3fd3a0" fill-opacity="0.3" stroke="#3fd3a0" stroke-opacity="0.6" stroke-width="2.4"/>
<circle cx="1920.5" cy="956.4" r="4.6" fill="#3fd3a0" fill-opacity="0.3" stroke="#3fd3a0" stroke-opacity="0.6" stroke-width="2.4"/>
<circle cx="1804.0" cy="1040.8" r="3.2" fill="#ff6f80" fill-opacity="0.3" stroke="#ff6f80" stroke-opacity="0.6" stroke-width="2.4"/>
<circle cx="1810.0" cy="955.1" r="4.0" fill="#ff6f80" fill-opacity="0.3" stroke="#ff6f80" stroke-opacity="0.6" stroke-width="2.4"/>
<circle cx="1920.0" cy="1002.6" r="7.9" fill="#3fd3a0" fill-opacity="0.3" stroke="#3fd3a0" stroke-opacity="0.6" stroke-width="2.4"/>
<circle cx="1795.6" cy="914.4" r="3.9" fill="#ff6f80" fill-opacity="0.3" stroke="#ff6f80" stroke-opacity="0.6" stroke-width="2.4"/>
<circle cx="1823.1" cy="972.3" r="3.5" fill="#3fd3a0" fill-opacity="0.3" stroke="#3fd3a0" stroke-opacity="0.6" stroke-width="2.4"/>
<circle cx="1899.1" cy="882.9" r="3.4" fill="#3fd3a0" fill-opacity="0.3" stroke="#3fd3a0" stroke-opacity="0.6" stroke-width="2.4"/>
<circle cx="1919.0" cy="1153.1" r="3.0" fill="#ff6f80" fill-opacity="0.3" stroke="#ff6f80" stroke-opacity="0.6" stroke-width="2.4"/>
<circle cx="1990.0" cy="840.5" r="3.4" fill="#ff6f80" fill-opacity="0.3" stroke="#ff6f80" stroke-opacity="0.6" stroke-width="2.4"/>
<circle cx="1959.1" cy="1236.8" r="3.0" fill="#3fd3a0" fill-opacity="0.3" stroke="#3fd3a0" stroke-opacity="0.6" stroke-width="2.4"/>
<circle cx="1821.9" cy="1067.3" r="3.1" fill="#ff6f80" fill-opacity="0.3" stroke="#ff6f80" stroke-opacity="0.6" stroke-width="2.4"/>
<circle cx="1942.9" cy="1198.1" r="3.6" fill="#ff6f80" fill-opacity="0.3" stroke="#ff6f80" stroke-opacity="0.6" stroke-width="2.4"/>
<circle cx="1851.2" cy="1157.7" r="5.9" fill="#ff6f80" fill-opacity="0.3" stroke="#ff6f80" stroke-opacity="0.6" stroke-width="2.4"/>
<circle cx="1898.7" cy="1213.4" r="2.2" fill="#3fd3a0" fill-opacity="0.3" stroke="#3fd3a0" stroke-opacity="0.6" stroke-width="2.4"/>
<circle cx="1995.4" cy="1055.5" r="3.1" fill="#3fd3a0" fill-opacity="0.3" stroke="#3fd3a0" stroke-opacity="0.6" stroke-width="2.4"/>
<circle cx="1936.8" cy="1091.9" r="3.0" fill="#3fd3a0" fill-opacity="0.3" stroke="#3fd3a0" stroke-opacity="0.6" stroke-width="2.4"/>
<circle cx="1807.1" cy="1166.6" r="2.1" fill="#ff6f80" fill-opacity="0.3" stroke="#ff6f80" stroke-opacity="0.6" stroke-width="2.4"/>
<circle cx="1987.6" cy="879.7" r="3.0" fill="#3fd3a0" fill-opacity="0.3" stroke="#3fd3a0" stroke-opacity="0.6" stroke-width="2.4"/>
<circle cx="1999.6" cy="764.6" r="2.1" fill="#ff6f80" fill-opacity="0.3" stroke="#ff6f80" stroke-opacity="0.6" stroke-width="2.4"/>
<circle cx="1810.6" cy="997.6" r="3.0" fill="#ff6f80" fill-opacity="0.3" stroke="#ff6f80" stroke-opacity="0.6" stroke-width="2.4"/>
<circle cx="1879.9" cy="975.6" r="4.7" fill="#3fd3a0" fill-opacity="0.3" stroke="#3fd3a0" stroke-opacity="0.6" stroke-width="2.4"/>
<circle cx="1893.4" cy="961.3" r="3.2" fill="#ff6f80" fill-opacity="0.3" stroke="#ff6f80" stroke-opacity="0.6" stroke-width="2.4"/>
<circle cx="1951.2" cy="900.1" r="5.0" fill="#ff6f80" fill-opacity="0.3" stroke="#ff6f80" stroke-opacity="0.6" stroke-width="2.4"/>
<circle cx="1834.7" cy="920.7" r="3.2" fill="#ff6f80" fill-opacity="0.3" stroke="#ff6f80" stroke-opacity="0.6" stroke-width="2.4"/>
<circle cx="1856.1" cy="1170.7" r="2.0" fill="#ff6f80" fill-opacity="0.3" stroke="#ff6f80" stroke-opacity="0.6" stroke-width="2.4"/>
<circle cx="1994.5" cy="868.2" r="3.8" fill="#ff6f80" fill-opacity="0.3" stroke="#ff6f80" stroke-opacity="0.6" stroke-width="2.4"/>
<circle cx="1996.0" cy="863.0" r="3.2" fill="#ff6f80" fill-opacity="0.3" stroke="#ff6f80" stroke-opacity="0.6" stroke-width="2.4"/>
<circle cx="2014.0" cy="899.9" r="9.4" fill="#ff6f80" fill-opacity="0.3" stroke="#ff6f80" stroke-opacity="0.6" stroke-width="2.4"/>
<circle cx="1814.0" cy="1022.5" r="4.2" fill="#ff6f80" fill-opacity="0.3" stroke="#ff6f80" stroke-opacity="0.6" stroke-width="2.4"/>
<circle cx="1885.8" cy="1040.4" r="3.1" fill="#3fd3a0" fill-opacity="0.3" stroke="#3fd3a0" stroke-opacity="0.6" stroke-width="2.4"/>
<circle cx="1872.5" cy="964.9" r="3.0" fill="#ff6f80" fill-opacity="0.3" stroke="#ff6f80" stroke-opacity="0.6" stroke-width="2.4"/>
<circle cx="1976.2" cy="1104.9" r="2.2" fill="#3fd3a0" fill-opacity="0.3" stroke="#3fd3a0" stroke-opacity="0.6" stroke-width="2.4"/>
<circle cx="1810.2" cy="1163.2" r="2.0" fill="#3fd3a0" fill-opacity="0.3" stroke="#3fd3a0" stroke-opacity="0.6" stroke-width="2.4"/>
<circle cx="1822.8" cy="1173.3" r="3.6" fill="#3fd3a0" fill-opacity="0.3" stroke="#3fd3a0" stroke-opacity="0.6" stroke-width="2.4"/>
<circle cx="1924.5" cy="853.5" r="4.4" fill="#ff6f80" fill-opacity="0.3" stroke="#ff6f80" stroke-opacity="0.6" stroke-width="2.4"/>
<circle cx="1847.8" cy="979.3" r="3.0" fill="#3fd3a0" fill-opacity="0.3" stroke="#3fd3a0" stroke-opacity="0.6" stroke-width="2.4"/>
<circle cx="2005.7" cy="872.8" r="3.4" fill="#ff6f80" fill-opacity="0.3" stroke="#ff6f80" stroke-opacity="0.6" stroke-width="2.4"/>
<circle cx="1882.8" cy="1032.7" r="3.1" fill="#3fd3a0" fill-opacity="0.3" stroke="#3fd3a0" stroke-opacity="0.6" stroke-width="2.4"/>
<circle cx="1877.4" cy="875.2" r="6.8" fill="#3fd3a0" fill-opacity="0.3" stroke="#3fd3a0" stroke-opacity="0.6" stroke-width="2.4"/>
<circle cx="1881.5" cy="1108.4" r="2.5" fill="#ff6f80" fill-opacity="0.3" stroke="#ff6f80" stroke-opacity="0.6" stroke-width="2.4"/>
<circle cx="1936.6" cy="1106.5" r="5.8" fill="#3fd3a0" fill-opacity="0.3" stroke="#3fd3a0" stroke-opacity="0.6" stroke-width="2.4"/>
<circle cx="1941.5" cy="1204.5" r="3.0" fill="#ff6f80" fill-opacity="0.3" stroke="#ff6f80" stroke-opacity="0.6" stroke-width="2.4"/>
<circle cx="1812.1" cy="1170.4" r="3.0" fill="#ff6f80" fill-opacity="0.3" stroke="#ff6f80" stroke-opacity="0.6" stroke-width="2.4"/>
<circle cx="1833.5" cy="1068.9" r="6.8" fill="#ff6f80" fill-opacity="0.3" stroke="#ff6f80" stroke-opacity="0.6" stroke-width="2.4"/>
<circle cx="1889.4" cy="850.8" r="3.1" fill="#ff6f80" fill-opacity="0.3" stroke="#ff6f80" stroke-opacity="0.6" stroke-width="2.4"/>
<circle cx="1889.5" cy="980.9" r="5.1" fill="#ff6f80" fill-opacity="0.3" stroke="#ff6f80" stroke-opacity="0.6" stroke-width="2.4"/>
<circle cx="1917.5" cy="837.1" r="3.0" fill="#ff6f80" fill-opacity="0.3" stroke="#ff6f80" stroke-opacity="0.6" stroke-width="2.4"/>
<circle cx="1859.7" cy="979.0" r="3.0" fill="#3fd3a0" fill-opacity="0.3" stroke="#3fd3a0" stroke-opacity="0.6" stroke-width="2.4"/>
<circle cx="1976.7" cy="1214.0" r="2.0" fill="#3fd3a0" fill-opacity="0.3" stroke="#3fd3a0" stroke-opacity="0.6" stroke-width="2.4"/>
<circle cx="1848.1" cy="1144.8" r="2.0" fill="#ff6f80" fill-opacity="0.3" stroke="#ff6f80" stroke-opacity="0.6" stroke-width="2.4"/>
<circle cx="1824.4" cy="935.1" r="3.0" fill="#ff6f80" fill-opacity="0.3" stroke="#ff6f80" stroke-opacity="0.6" stroke-width="2.4"/>
<circle cx="1875.8" cy="972.4" r="3.3" fill="#3fd3a0" fill-opacity="0.3" stroke="#3fd3a0" stroke-opacity="0.6" stroke-width="2.4"/>
<circle cx="1848.6" cy="948.3" r="3.9" fill="#ff6f80" fill-opacity="0.3" stroke="#ff6f80" stroke-opacity="0.6" stroke-width="2.4"/>
<circle cx="1969.4" cy="1046.5" r="3.1" fill="#ff6f80" fill-opacity="0.3" stroke="#ff6f80" stroke-opacity="0.6" stroke-width="2.4"/>
<circle cx="2001.5" cy="810.6" r="3.0" fill="#ff6f80" fill-opacity="0.3" stroke="#ff6f80" stroke-opacity="0.6" stroke-width="2.4"/>
<circle cx="1957.8" cy="869.2" r="6.9" fill="#ff6f80" fill-opacity="0.3" stroke="#ff6f80" stroke-opacity="0.6" stroke-width="2.4"/>
<circle cx="1950.9" cy="1232.1" r="3.1" fill="#3fd3a0" fill-opacity="0.3" stroke="#3fd3a0" stroke-opacity="0.6" stroke-width="2.4"/>
<circle cx="1855.3" cy="1138.3" r="2.2" fill="#ff6f80" fill-opacity="0.3" stroke="#ff6f80" stroke-opacity="0.6" stroke-width="2.4"/>
<circle cx="1963.6" cy="833.6" r="6.2" fill="#ff6f80" fill-opacity="0.3" stroke="#ff6f80" stroke-opacity="0.6" stroke-width="2.4"/>
<circle cx="1911.8" cy="822.3" r="6.1" fill="#ff6f80" fill-opacity="0.3" stroke="#ff6f80" stroke-opacity="0.6" stroke-width="2.4"/>
<circle cx="1953.8" cy="893.5" r="3.3" fill="#3fd3a0" fill-opacity="0.3" stroke="#3fd3a0" stroke-opacity="0.6" stroke-width="2.4"/>
<circle cx="1865.0" cy="959.9" r="3.1" fill="#3fd3a0" fill-opacity="0.3" stroke="#3fd3a0" stroke-opacity="0.6" stroke-width="2.4"/>
<circle cx="1748.4" cy="1086.5" r="3.3" fill="#3fd3a0" fill-opacity="0.3" stroke="#3fd3a0" stroke-opacity="0.6" stroke-width="2.4"/>
<circle cx="1883.2" cy="1012.3" r="3.0" fill="#ff6f80" fill-opacity="0.3" stroke="#ff6f80" stroke-opacity="0.6" stroke-width="2.4"/>
<circle cx="1861.3" cy="918.6" r="3.1" fill="#ff6f80" fill-opacity="0.3" stroke="#ff6f80" stroke-opacity="0.6" stroke-width="2.4"/>
<circle cx="1965.0" cy="1124.0" r="16.0" fill="#ff6f80" fill-opacity="0.13" stroke="#ff6f80" stroke-opacity="0.6" stroke-width="2.4"/>
<circle cx="1905.7" cy="1234.7" r="3.8" fill="#3fd3a0" fill-opacity="0.3" stroke="#3fd3a0" stroke-opacity="0.6" stroke-width="2.4"/>
<circle cx="1730.7" cy="1050.9" r="11.1" fill="#3fd3a0" fill-opacity="0.13" stroke="#3fd3a0" stroke-opacity="0.6" stroke-width="2.4"/>
<circle cx="1962.3" cy="1219.7" r="4.4" fill="#ff6f80" fill-opacity="0.3" stroke="#ff6f80" stroke-opacity="0.6" stroke-width="2.4"/>
<circle cx="1890.7" cy="803.2" r="3.2" fill="#3fd3a0" fill-opacity="0.3" stroke="#3fd3a0" stroke-opacity="0.6" stroke-width="2.4"/>
<circle cx="2008.7" cy="1093.0" r="2.4" fill="#3fd3a0" fill-opacity="0.3" stroke="#3fd3a0" stroke-opacity="0.6" stroke-width="2.4"/>
<circle cx="1879.4" cy="1103.7" r="2.0" fill="#3fd3a0" fill-opacity="0.3" stroke="#3fd3a0" stroke-opacity="0.6" stroke-width="2.4"/>
<circle cx="2011.6" cy="883.5" r="3.0" fill="#ff6f80" fill-opacity="0.3" stroke="#ff6f80" stroke-opacity="0.6" stroke-width="2.4"/>
<circle cx="1954.3" cy="1212.0" r="3.0" fill="#ff6f80" fill-opacity="0.3" stroke="#ff6f80" stroke-opacity="0.6" stroke-width="2.4"/>
<circle cx="1957.4" cy="1124.8" r="7.5" fill="#3fd3a0" fill-opacity="0.3" stroke="#3fd3a0" stroke-opacity="0.6" stroke-width="2.4"/>
<circle cx="1990.7" cy="855.0" r="5.2" fill="#ff6f80" fill-opacity="0.3" stroke="#ff6f80" stroke-opacity="0.6" stroke-width="2.4"/>
<circle cx="1904.8" cy="1040.3" r="3.1" fill="#ff6f80" fill-opacity="0.3" stroke="#ff6f80" stroke-opacity="0.6" stroke-width="2.4"/>
<circle cx="1811.5" cy="1004.3" r="4.2" fill="#ff6f80" fill-opacity="0.3" stroke="#ff6f80" stroke-opacity="0.6" stroke-width="2.4"/>
<circle cx="1806.7" cy="912.9" r="3.0" fill="#ff6f80" fill-opacity="0.3" stroke="#ff6f80" stroke-opacity="0.6" stroke-width="2.4"/>
<circle cx="1790.7" cy="1121.0" r="3.0" fill="#ff6f80" fill-opacity="0.3" stroke="#ff6f80" stroke-opacity="0.6" stroke-width="2.4"/>
<circle cx="1950.0" cy="1014.8" r="3.0" fill="#3fd3a0" fill-opacity="0.3" stroke="#3fd3a0" stroke-opacity="0.6" stroke-width="2.4"/>
<circle cx="1884.8" cy="1038.1" r="3.7" fill="#3fd3a0" fill-opacity="0.3" stroke="#3fd3a0" stroke-opacity="0.6" stroke-width="2.4"/>
<circle cx="1968.7" cy="1213.2" r="3.0" fill="#3fd3a0" fill-opacity="0.3" stroke="#3fd3a0" stroke-opacity="0.6" stroke-width="2.4"/>
<circle cx="1942.7" cy="1178.6" r="3.5" fill="#ff6f80" fill-opacity="0.3" stroke="#ff6f80" stroke-opacity="0.6" stroke-width="2.4"/>
<circle cx="1964.6" cy="829.6" r="5.2" fill="#ff6f80" fill-opacity="0.3" stroke="#ff6f80" stroke-opacity="0.6" stroke-width="2.4"/>
<circle cx="1996.2" cy="1035.5" r="2.2" fill="#ff6f80" fill-opacity="0.3" stroke="#ff6f80" stroke-opacity="0.6" stroke-width="2.4"/>
<circle cx="1911.8" cy="876.6" r="6.3" fill="#ff6f80" fill-opacity="0.3" stroke="#ff6f80" stroke-opacity="0.6" stroke-width="2.4"/>
<circle cx="1718.5" cy="1053.5" r="16.0" fill="#3fd3a0" fill-opacity="0.13" stroke="#3fd3a0" stroke-opacity="0.6" stroke-width="2.4"/>
<circle cx="1899.7" cy="1023.7" r="5.9" fill="#ff6f80" fill-opacity="0.3" stroke="#ff6f80" stroke-opacity="0.6" stroke-width="2.4"/>
<circle cx="1905.1" cy="956.6" r="4.7" fill="#3fd3a0" fill-opacity="0.3" stroke="#3fd3a0" stroke-opacity="0.6" stroke-width="2.4"/>
<circle cx="1899.2" cy="941.0" r="5.8" fill="#ff6f80" fill-opacity="0.3" stroke="#ff6f80" stroke-opacity="0.6" stroke-width="2.4"/>
<circle cx="1954.9" cy="1234.3" r="4.1" fill="#ff6f80" fill-opacity="0.3" stroke="#ff6f80" stroke-opacity="0.6" stroke-width="2.4"/>
<circle cx="1864.8" cy="1189.1" r="2.8" fill="#3fd3a0" fill-opacity="0.3" stroke="#3fd3a0" stroke-opacity="0.6" stroke-width="2.4"/>
<circle cx="1937.2" cy="1286.0" r="2.7" fill="#3fd3a0" fill-opacity="0.3" stroke="#3fd3a0" stroke-opacity="0.6" stroke-width="2.4"/>
<circle cx="1802.7" cy="980.1" r="3.2" fill="#ff6f80" fill-opacity="0.3" stroke="#ff6f80" stroke-opacity="0.6" stroke-width="2.4"/>
<circle cx="1888.9" cy="868.2" r="3.1" fill="#ff6f80" fill-opacity="0.3" stroke="#ff6f80" stroke-opacity="0.6" stroke-width="2.4"/>
<circle cx="1866.2" cy="1033.3" r="3.8" fill="#ff6f80" fill-opacity="0.3" stroke="#ff6f80" stroke-opacity="0.6" stroke-width="2.4"/>
<circle cx="1895.4" cy="868.9" r="5.5" fill="#ff6f80" fill-opacity="0.3" stroke="#ff6f80" stroke-opacity="0.6" stroke-width="2.4"/>
<circle cx="1740.6" cy="1073.1" r="3.2" fill="#ff6f80" fill-opacity="0.3" stroke="#ff6f80" stroke-opacity="0.6" stroke-width="2.4"/>
<circle cx="1839.8" cy="873.7" r="12.4" fill="#ff6f80" fill-opacity="0.13" stroke="#ff6f80" stroke-opacity="0.6" stroke-width="2.4"/>
<circle cx="1935.6" cy="984.1" r="3.0" fill="#3fd3a0" fill-opacity="0.3" stroke="#3fd3a0" stroke-opacity="0.6" stroke-width="2.4"/>
<circle cx="1793.5" cy="1116.7" r="5.7" fill="#ff6f80" fill-opacity="0.3" stroke="#ff6f80" stroke-opacity="0.6" stroke-width="2.4"/>
<circle cx="1751.6" cy="1066.3" r="6.5" fill="#ff6f80" fill-opacity="0.3" stroke="#ff6f80" stroke-opacity="0.6" stroke-width="2.4"/>
<circle cx="1862.7" cy="997.7" r="7.2" fill="#ff6f80" fill-opacity="0.3" stroke="#ff6f80" stroke-opacity="0.6" stroke-width="2.4"/>
<circle cx="1980.8" cy="854.4" r="3.7" fill="#ff6f80" fill-opacity="0.3" stroke="#ff6f80" stroke-opacity="0.6" stroke-width="2.4"/>
<circle cx="1815.7" cy="1023.5" r="6.6" fill="#ff6f80" fill-opacity="0.3" stroke="#ff6f80" stroke-opacity="0.6" stroke-width="2.4"/>
<circle cx="1992.3" cy="741.1" r="2.0" fill="#ff6f80" fill-opacity="0.3" stroke="#ff6f80" stroke-opacity="0.6" stroke-width="2.4"/>
<circle cx="1828.9" cy="1150.6" r="3.4" fill="#ff6f80" fill-opacity="0.3" stroke="#ff6f80" stroke-opacity="0.6" stroke-width="2.4"/>
<circle cx="1993.0" cy="887.0" r="3.4" fill="#ff6f80" fill-opacity="0.3" stroke="#ff6f80" stroke-opacity="0.6" stroke-width="2.4"/>
<circle cx="1904.1" cy="1021.8" r="3.0" fill="#ff6f80" fill-opacity="0.3" stroke="#ff6f80" stroke-opacity="0.6" stroke-width="2.4"/>
<circle cx="1823.5" cy="1012.7" r="3.1" fill="#ff6f80" fill-opacity="0.3" stroke="#ff6f80" stroke-opacity="0.6" stroke-width="2.4"/>
<circle cx="1892.9" cy="1016.0" r="3.0" fill="#3fd3a0" fill-opacity="0.3" stroke="#3fd3a0" stroke-opacity="0.6" stroke-width="2.4"/>
<circle cx="1976.4" cy="863.8" r="3.4" fill="#ff6f80" fill-opacity="0.3" stroke="#ff6f80" stroke-opacity="0.6" stroke-width="2.4"/>
<circle cx="1858.5" cy="950.2" r="3.2" fill="#ff6f80" fill-opacity="0.3" stroke="#ff6f80" stroke-opacity="0.6" stroke-width="2.4"/>
<circle cx="1865.5" cy="870.7" r="6.9" fill="#ff6f80" fill-opacity="0.3" stroke="#ff6f80" stroke-opacity="0.6" stroke-width="2.4"/>
<circle cx="1887.5" cy="808.3" r="3.1" fill="#ff6f80" fill-opacity="0.3" stroke="#ff6f80" stroke-opacity="0.6" stroke-width="2.4"/>
<circle cx="1890.2" cy="955.3" r="3.8" fill="#ff6f80" fill-opacity="0.3" stroke="#ff6f80" stroke-opacity="0.6" stroke-width="2.4"/>
<circle cx="1898.4" cy="1223.9" r="2.0" fill="#3fd3a0" fill-opacity="0.3" stroke="#3fd3a0" stroke-opacity="0.6" stroke-width="2.4"/>
<circle cx="1914.0" cy="884.5" r="3.4" fill="#ff6f80" fill-opacity="0.3" stroke="#ff6f80" stroke-opacity="0.6" stroke-width="2.4"/>
<circle cx="1887.6" cy="991.1" r="4.1" fill="#ff6f80" fill-opacity="0.3" stroke="#ff6f80" stroke-opacity="0.6" stroke-width="2.4"/>
<circle cx="1815.5" cy="987.3" r="3.1" fill="#ff6f80" fill-opacity="0.3" stroke="#ff6f80" stroke-opacity="0.6" stroke-width="2.4"/>
<circle cx="1802.4" cy="1037.1" r="7.0" fill="#ff6f80" fill-opacity="0.3" stroke="#ff6f80" stroke-opacity="0.6" stroke-width="2.4"/>
<circle cx="1932.2" cy="825.2" r="4.6" fill="#ff6f80" fill-opacity="0.3" stroke="#ff6f80" stroke-opacity="0.6" stroke-width="2.4"/>
<circle cx="1982.4" cy="827.2" r="3.0" fill="#ff6f80" fill-opacity="0.3" stroke="#ff6f80" stroke-opacity="0.6" stroke-width="2.4"/>
<circle cx="1854.7" cy="1005.1" r="3.0" fill="#ff6f80" fill-opacity="0.3" stroke="#ff6f80" stroke-opacity="0.6" stroke-width="2.4"/>
<circle cx="1995.6" cy="974.2" r="2.4" fill="#3fd3a0" fill-opacity="0.3" stroke="#3fd3a0" stroke-opacity="0.6" stroke-width="2.4"/>
<circle cx="1905.5" cy="1034.5" r="3.1" fill="#3fd3a0" fill-opacity="0.3" stroke="#3fd3a0" stroke-opacity="0.6" stroke-width="2.4"/>
<circle cx="1955.2" cy="884.0" r="4.0" fill="#ff6f80" fill-opacity="0.3" stroke="#ff6f80" stroke-opacity="0.6" stroke-width="2.4"/>
<circle cx="1783.2" cy="1092.8" r="8.9" fill="#ff6f80" fill-opacity="0.3" stroke="#ff6f80" stroke-opacity="0.6" stroke-width="2.4"/>
<circle cx="1990.0" cy="880.4" r="3.5" fill="#ff6f80" fill-opacity="0.3" stroke="#ff6f80" stroke-opacity="0.6" stroke-width="2.4"/>
<circle cx="1817.6" cy="1039.4" r="5.3" fill="#ff6f80" fill-opacity="0.3" stroke="#ff6f80" stroke-opacity="0.6" stroke-width="2.4"/>
<circle cx="1945.5" cy="1205.7" r="4.4" fill="#ff6f80" fill-opacity="0.3" stroke="#ff6f80" stroke-opacity="0.6" stroke-width="2.4"/>
<circle cx="1948.8" cy="1194.4" r="3.2" fill="#ff6f80" fill-opacity="0.3" stroke="#ff6f80" stroke-opacity="0.6" stroke-width="2.4"/>
<circle cx="1837.1" cy="1172.7" r="2.0" fill="#3fd3a0" fill-opacity="0.3" stroke="#3fd3a0" stroke-opacity="0.6" stroke-width="2.4"/>
<circle cx="1924.9" cy="963.8" r="3.1" fill="#ff6f80" fill-opacity="0.3" stroke="#ff6f80" stroke-opacity="0.6" stroke-width="2.4"/>
<circle cx="1922.1" cy="1292.1" r="2.1" fill="#3fd3a0" fill-opacity="0.3" stroke="#3fd3a0" stroke-opacity="0.6" stroke-width="2.4"/>
<circle cx="1803.2" cy="1057.0" r="3.3" fill="#ff6f80" fill-opacity="0.3" stroke="#ff6f80" stroke-opacity="0.6" stroke-width="2.4"/>
<circle cx="1973.2" cy="875.6" r="3.1" fill="#ff6f80" fill-opacity="0.3" stroke="#ff6f80" stroke-opacity="0.6" stroke-width="2.4"/>
<circle cx="1909.8" cy="960.0" r="3.5" fill="#ff6f80" fill-opacity="0.3" stroke="#ff6f80" stroke-opacity="0.6" stroke-width="2.4"/>
<circle cx="1916.6" cy="854.1" r="4.4" fill="#3fd3a0" fill-opacity="0.3" stroke="#3fd3a0" stroke-opacity="0.6" stroke-width="2.4"/>
<circle cx="1902.4" cy="965.4" r="3.2" fill="#3fd3a0" fill-opacity="0.3" stroke="#3fd3a0" stroke-opacity="0.6" stroke-width="2.4"/>
<circle cx="1830.0" cy="1070.4" r="3.0" fill="#ff6f80" fill-opacity="0.3" stroke="#ff6f80" stroke-opacity="0.6" stroke-width="2.4"/>
<circle cx="2009.1" cy="838.6" r="4.3" fill="#ff6f80" fill-opacity="0.3" stroke="#ff6f80" stroke-opacity="0.6" stroke-width="2.4"/>
<circle cx="1857.3" cy="1184.0" r="3.0" fill="#ff6f80" fill-opacity="0.3" stroke="#ff6f80" stroke-opacity="0.6" stroke-width="2.4"/>
<circle cx="1853.6" cy="890.9" r="8.0" fill="#ff6f80" fill-opacity="0.3" stroke="#ff6f80" stroke-opacity="0.6" stroke-width="2.4"/>
<circle cx="1926.1" cy="1193.3" r="5.5" fill="#ff6f80" fill-opacity="0.3" stroke="#ff6f80" stroke-opacity="0.6" stroke-width="2.4"/>
<circle cx="1991.7" cy="907.6" r="3.1" fill="#ff6f80" fill-opacity="0.3" stroke="#ff6f80" stroke-opacity="0.6" stroke-width="2.4"/>
<circle cx="2002.5" cy="775.8" r="2.0" fill="#ff6f80" fill-opacity="0.3" stroke="#ff6f80" stroke-opacity="0.6" stroke-width="2.4"/>
<circle cx="1932.9" cy="1283.6" r="4.6" fill="#3fd3a0" fill-opacity="0.3" stroke="#3fd3a0" stroke-opacity="0.6" stroke-width="2.4"/>
<circle cx="1817.0" cy="989.7" r="7.8" fill="#ff6f80" fill-opacity="0.3" stroke="#ff6f80" stroke-opacity="0.6" stroke-width="2.4"/>
<circle cx="1871.7" cy="1011.3" r="3.0" fill="#3fd3a0" fill-opacity="0.3" stroke="#3fd3a0" stroke-opacity="0.6" stroke-width="2.4"/>
<circle cx="1911.4" cy="864.0" r="9.5" fill="#ff6f80" fill-opacity="0.3" stroke="#ff6f80" stroke-opacity="0.6" stroke-width="2.4"/>
<circle cx="1759.6" cy="1077.0" r="4.0" fill="#ff6f80" fill-opacity="0.3" stroke="#ff6f80" stroke-opacity="0.6" stroke-width="2.4"/>
<circle cx="1930.9" cy="1296.1" r="2.4" fill="#3fd3a0" fill-opacity="0.3" stroke="#3fd3a0" stroke-opacity="0.6" stroke-width="2.4"/>
<circle cx="1931.4" cy="1282.6" r="2.3" fill="#3fd3a0" fill-opacity="0.3" stroke="#3fd3a0" stroke-opacity="0.6" stroke-width="2.4"/>
<circle cx="1819.3" cy="1052.9" r="9.9" fill="#ff6f80" fill-opacity="0.3" stroke="#ff6f80" stroke-opacity="0.6" stroke-width="2.4"/>
<circle cx="1978.5" cy="835.8" r="5.6" fill="#ff6f80" fill-opacity="0.3" stroke="#ff6f80" stroke-opacity="0.6" stroke-width="2.4"/>
<circle cx="1813.3" cy="934.2" r="3.0" fill="#ff6f80" fill-opacity="0.3" stroke="#ff6f80" stroke-opacity="0.6" stroke-width="2.4"/>
<circle cx="1951.7" cy="1189.9" r="3.1" fill="#3fd3a0" fill-opacity="0.3" stroke="#3fd3a0" stroke-opacity="0.6" stroke-width="2.4"/>
<circle cx="1823.3" cy="946.7" r="3.0" fill="#ff6f80" fill-opacity="0.3" stroke="#ff6f80" stroke-opacity="0.6" stroke-width="2.4"/>
<circle cx="1881.1" cy="1023.3" r="3.0" fill="#ff6f80" fill-opacity="0.3" stroke="#ff6f80" stroke-opacity="0.6" stroke-width="2.4"/>
<circle cx="1826.8" cy="1064.7" r="9.2" fill="#ff6f80" fill-opacity="0.3" stroke="#ff6f80" stroke-opacity="0.6" stroke-width="2.4"/>
<circle cx="1863.9" cy="1020.1" r="3.1" fill="#ff6f80" fill-opacity="0.3" stroke="#ff6f80" stroke-opacity="0.6" stroke-width="2.4"/>
<circle cx="1934.7" cy="1188.8" r="6.8" fill="#ff6f80" fill-opacity="0.3" stroke="#ff6f80" stroke-opacity="0.6" stroke-width="2.4"/>
<circle cx="1848.8" cy="950.3" r="3.6" fill="#ff6f80" fill-opacity="0.3" stroke="#ff6f80" stroke-opacity="0.6" stroke-width="2.4"/>
<circle cx="1962.0" cy="1203.5" r="3.0" fill="#3fd3a0" fill-opacity="0.3" stroke="#3fd3a0" stroke-opacity="0.6" stroke-width="2.4"/>
<circle cx="1943.2" cy="1117.0" r="5.0" fill="#ff6f80" fill-opacity="0.3" stroke="#ff6f80" stroke-opacity="0.6" stroke-width="2.4"/>
<circle cx="1939.2" cy="1174.5" r="4.6" fill="#ff6f80" fill-opacity="0.3" stroke="#ff6f80" stroke-opacity="0.6" stroke-width="2.4"/>
<circle cx="1904.9" cy="799.1" r="3.2" fill="#3fd3a0" fill-opacity="0.3" stroke="#3fd3a0" stroke-opacity="0.6" stroke-width="2.4"/>
<circle cx="1963.8" cy="1229.5" r="4.4" fill="#ff6f80" fill-opacity="0.3" stroke="#ff6f80" stroke-opacity="0.6" stroke-width="2.4"/>
<circle cx="1906.9" cy="877.6" r="3.4" fill="#ff6f80" fill-opacity="0.3" stroke="#ff6f80" stroke-opacity="0.6" stroke-width="2.4"/>
<circle cx="1886.9" cy="1214.1" r="3.4" fill="#ff6f80" fill-opacity="0.3" stroke="#ff6f80" stroke-opacity="0.6" stroke-width="2.4"/>
<circle cx="1801.7" cy="1011.2" r="3.0" fill="#ff6f80" fill-opacity="0.3" stroke="#ff6f80" stroke-opacity="0.6" stroke-width="2.4"/>
<circle cx="2007.5" cy="828.9" r="4.6" fill="#ff6f80" fill-opacity="0.3" stroke="#ff6f80" stroke-opacity="0.6" stroke-width="2.4"/>
<circle cx="1981.1" cy="883.5" r="3.5" fill="#ff6f80" fill-opacity="0.3" stroke="#ff6f80" stroke-opacity="0.6" stroke-width="2.4"/>
<circle cx="1994.9" cy="761.1" r="6.1" fill="#ff6f80" fill-opacity="0.3" stroke="#ff6f80" stroke-opacity="0.6" stroke-width="2.4"/>
<circle cx="1954.7" cy="1195.2" r="6.4" fill="#3fd3a0" fill-opacity="0.3" stroke="#3fd3a0" stroke-opacity="0.6" stroke-width="2.4"/>
<circle cx="1827.6" cy="1067.6" r="3.3" fill="#ff6f80" fill-opacity="0.3" stroke="#ff6f80" stroke-opacity="0.6" stroke-width="2.4"/>
<circle cx="1828.9" cy="1129.2" r="3.8" fill="#3fd3a0" fill-opacity="0.3" stroke="#3fd3a0" stroke-opacity="0.6" stroke-width="2.4"/>
<circle cx="1980.1" cy="806.2" r="3.1" fill="#ff6f80" fill-opacity="0.3" stroke="#ff6f80" stroke-opacity="0.6" stroke-width="2.4"/>
<circle cx="1806.1" cy="977.9" r="3.0" fill="#ff6f80" fill-opacity="0.3" stroke="#ff6f80" stroke-opacity="0.6" stroke-width="2.4"/>
<circle cx="1936.5" cy="1278.4" r="2.0" fill="#3fd3a0" fill-opacity="0.3" stroke="#3fd3a0" stroke-opacity="0.6" stroke-width="2.4"/>
<circle cx="1939.0" cy="910.0" r="3.0" fill="#ff6f80" fill-opacity="0.3" stroke="#ff6f80" stroke-opacity="0.6" stroke-width="2.4"/>
<circle cx="1971.8" cy="911.3" r="3.6" fill="#ff6f80" fill-opacity="0.3" stroke="#ff6f80" stroke-opacity="0.6" stroke-width="2.4"/>
<circle cx="1914.2" cy="834.1" r="3.4" fill="#ff6f80" fill-opacity="0.3" stroke="#ff6f80" stroke-opacity="0.6" stroke-width="2.4"/>
<circle cx="1806.9" cy="1034.2" r="8.0" fill="#3fd3a0" fill-opacity="0.3" stroke="#3fd3a0" stroke-opacity="0.6" stroke-width="2.4"/>
<circle cx="1925.8" cy="1151.6" r="3.2" fill="#ff6f80" fill-opacity="0.3" stroke="#ff6f80" stroke-opacity="0.6" stroke-width="2.4"/>
<circle cx="1915.4" cy="1098.8" r="2.4" fill="#3fd3a0" fill-opacity="0.3" stroke="#3fd3a0" stroke-opacity="0.6" stroke-width="2.4"/>
<circle cx="1807.6" cy="987.2" r="5.3" fill="#ff6f80" fill-opacity="0.3" stroke="#ff6f80" stroke-opacity="0.6" stroke-width="2.4"/>
<circle cx="1815.2" cy="1187.1" r="2.3" fill="#3fd3a0" fill-opacity="0.3" stroke="#3fd3a0" stroke-opacity="0.6" stroke-width="2.4"/>
<circle cx="1815.5" cy="1024.9" r="9.8" fill="#ff6f80" fill-opacity="0.3" stroke="#ff6f80" stroke-opacity="0.6" stroke-width="2.4"/>
<circle cx="1896.8" cy="987.6" r="5.0" fill="#ff6f80" fill-opacity="0.3" stroke="#ff6f80" stroke-opacity="0.6" stroke-width="2.4"/>
<circle cx="1818.3" cy="982.9" r="3.0" fill="#ff6f80" fill-opacity="0.3" stroke="#ff6f80" stroke-opacity="0.6" stroke-width="2.4"/>
<circle cx="1948.1" cy="1090.9" r="2.2" fill="#ff6f80" fill-opacity="0.3" stroke="#ff6f80" stroke-opacity="0.6" stroke-width="2.4"/>
<circle cx="1880.5" cy="894.6" r="3.6" fill="#3fd3a0" fill-opacity="0.3" stroke="#3fd3a0" stroke-opacity="0.6" stroke-width="2.4"/>
<circle cx="1963.4" cy="1120.2" r="8.2" fill="#ff6f80" fill-opacity="0.3" stroke="#ff6f80" stroke-opacity="0.6" stroke-width="2.4"/>
<circle cx="2000.4" cy="883.5" r="3.0" fill="#ff6f80" fill-opacity="0.3" stroke="#ff6f80" stroke-opacity="0.6" stroke-width="2.4"/>
<circle cx="1757.5" cy="1075.3" r="3.0" fill="#3fd3a0" fill-opacity="0.3" stroke="#3fd3a0" stroke-opacity="0.6" stroke-width="2.4"/>
<circle cx="1930.1" cy="1183.3" r="3.0" fill="#3fd3a0" fill-opacity="0.3" stroke="#3fd3a0" stroke-opacity="0.6" stroke-width="2.4"/>
<circle cx="1924.8" cy="834.1" r="8.6" fill="#ff6f80" fill-opacity="0.3" stroke="#ff6f80" stroke-opacity="0.6" stroke-width="2.4"/>
<circle cx="1985.6" cy="1000.3" r="4.5" fill="#3fd3a0" fill-opacity="0.3" stroke="#3fd3a0" stroke-opacity="0.6" stroke-width="2.4"/>
<circle cx="1923.0" cy="887.3" r="9.6" fill="#ff6f80" fill-opacity="0.3" stroke="#ff6f80" stroke-opacity="0.6" stroke-width="2.4"/>
<circle cx="1892.7" cy="805.8" r="3.0" fill="#ff6f80" fill-opacity="0.3" stroke="#ff6f80" stroke-opacity="0.6" stroke-width="2.4"/>
<circle cx="1857.2" cy="1177.7" r="2.0" fill="#ff6f80" fill-opacity="0.3" stroke="#ff6f80" stroke-opacity="0.6" stroke-width="2.4"/>
<circle cx="1823.6" cy="955.8" r="6.5" fill="#3fd3a0" fill-opacity="0.3" stroke="#3fd3a0" stroke-opacity="0.6" stroke-width="2.4"/>
<circle cx="1764.8" cy="1070.0" r="3.2" fill="#ff6f80" fill-opacity="0.3" stroke="#ff6f80" stroke-opacity="0.6" stroke-width="2.4"/>
<circle cx="1926.6" cy="1278.2" r="2.2" fill="#ff6f80" fill-opacity="0.3" stroke="#ff6f80" stroke-opacity="0.6" stroke-width="2.4"/>
<circle cx="1937.1" cy="1173.7" r="4.8" fill="#ff6f80" fill-opacity="0.3" stroke="#ff6f80" stroke-opacity="0.6" stroke-width="2.4"/>
<circle cx="1785.6" cy="1147.2" r="2.2" fill="#3fd3a0" fill-opacity="0.3" stroke="#3fd3a0" stroke-opacity="0.6" stroke-width="2.4"/>
<circle cx="1834.9" cy="897.7" r="3.0" fill="#ff6f80" fill-opacity="0.3" stroke="#ff6f80" stroke-opacity="0.6" stroke-width="2.4"/>
<circle cx="1991.8" cy="804.9" r="3.0" fill="#3fd3a0" fill-opacity="0.3" stroke="#3fd3a0" stroke-opacity="0.6" stroke-width="2.4"/>
<circle cx="1898.6" cy="1051.9" r="5.3" fill="#ff6f80" fill-opacity="0.3" stroke="#ff6f80" stroke-opacity="0.6" stroke-width="2.4"/>
<circle cx="1880.4" cy="957.9" r="3.0" fill="#ff6f80" fill-opacity="0.3" stroke="#ff6f80" stroke-opacity="0.6" stroke-width="2.4"/>
<circle cx="1813.8" cy="949.7" r="4.4" fill="#ff6f80" fill-opacity="0.3" stroke="#ff6f80" stroke-opacity="0.6" stroke-width="2.4"/>
<circle cx="1932.2" cy="969.0" r="6.7" fill="#3fd3a0" fill-opacity="0.3" stroke="#3fd3a0" stroke-opacity="0.6" stroke-width="2.4"/>
<circle cx="1720.0" cy="1060.0" r="26.0" fill="#3fd3a0" fill-opacity="0.13" stroke="#3fd3a0" stroke-opacity="0.6" stroke-width="2.4"/>
<circle cx="1908.2" cy="935.8" r="3.2" fill="#3fd3a0" fill-opacity="0.3" stroke="#3fd3a0" stroke-opacity="0.6" stroke-width="2.4"/>
<circle cx="1822.7" cy="910.6" r="3.5" fill="#ff6f80" fill-opacity="0.3" stroke="#ff6f80" stroke-opacity="0.6" stroke-width="2.4"/>
<circle cx="2002.4" cy="770.5" r="3.7" fill="#ff6f80" fill-opacity="0.3" stroke="#ff6f80" stroke-opacity="0.6" stroke-width="2.4"/>
<circle cx="1952.9" cy="1204.7" r="3.0" fill="#ff6f80" fill-opacity="0.3" stroke="#ff6f80" stroke-opacity="0.6" stroke-width="2.4"/>
<circle cx="1930.8" cy="961.0" r="3.0" fill="#ff6f80" fill-opacity="0.3" stroke="#ff6f80" stroke-opacity="0.6" stroke-width="2.4"/>
<circle cx="1846.7" cy="1062.8" r="2.1" fill="#ff6f80" fill-opacity="0.3" stroke="#ff6f80" stroke-opacity="0.6" stroke-width="2.4"/>
<circle cx="1880.8" cy="1034.8" r="4.3" fill="#ff6f80" fill-opacity="0.3" stroke="#ff6f80" stroke-opacity="0.6" stroke-width="2.4"/>
<circle cx="1851.7" cy="1116.6" r="5.1" fill="#3fd3a0" fill-opacity="0.3" stroke="#3fd3a0" stroke-opacity="0.6" stroke-width="2.4"/>
<circle cx="1915.3" cy="1257.5" r="2.7" fill="#3fd3a0" fill-opacity="0.3" stroke="#3fd3a0" stroke-opacity="0.6" stroke-width="2.4"/>
<circle cx="1852.7" cy="1026.3" r="3.0" fill="#3fd3a0" fill-opacity="0.3" stroke="#3fd3a0" stroke-opacity="0.6" stroke-width="2.4"/>
<circle cx="1885.8" cy="948.6" r="3.7" fill="#3fd3a0" fill-opacity="0.3" stroke="#3fd3a0" stroke-opacity="0.6" stroke-width="2.4"/>
<circle cx="1889.4" cy="965.6" r="6.4" fill="#3fd3a0" fill-opacity="0.3" stroke="#3fd3a0" stroke-opacity="0.6" stroke-width="2.4"/>
<circle cx="1924.0" cy="873.6" r="3.0" fill="#ff6f80" fill-opacity="0.3" stroke="#ff6f80" stroke-opacity="0.6" stroke-width="2.4"/>
<circle cx="1898.2" cy="800.9" r="5.7" fill="#ff6f80" fill-opacity="0.3" stroke="#ff6f80" stroke-opacity="0.6" stroke-width="2.4"/>
<circle cx="1914.8" cy="859.9" r="3.2" fill="#3fd3a0" fill-opacity="0.3" stroke="#3fd3a0" stroke-opacity="0.6" stroke-width="2.4"/>
<circle cx="1947.3" cy="861.8" r="3.1" fill="#3fd3a0" fill-opacity="0.3" stroke="#3fd3a0" stroke-opacity="0.6" stroke-width="2.4"/>
<circle cx="1961.2" cy="1237.4" r="5.4" fill="#ff6f80" fill-opacity="0.3" stroke="#ff6f80" stroke-opacity="0.6" stroke-width="2.4"/>
<circle cx="1993.5" cy="1053.2" r="4.3" fill="#ff6f80" fill-opacity="0.3" stroke="#ff6f80" stroke-opacity="0.6" stroke-width="2.4"/>
<circle cx="1910.2" cy="875.1" r="3.1" fill="#3fd3a0" fill-opacity="0.3" stroke="#3fd3a0" stroke-opacity="0.6" stroke-width="2.4"/>
<circle cx="1901.4" cy="974.2" r="6.9" fill="#ff6f80" fill-opacity="0.3" stroke="#ff6f80" stroke-opacity="0.6" stroke-width="2.4"/>
<circle cx="1901.9" cy="859.3" r="4.1" fill="#3fd3a0" fill-opacity="0.3" stroke="#3fd3a0" stroke-opacity="0.6" stroke-width="2.4"/>
<circle cx="1985.6" cy="862.4" r="8.1" fill="#ff6f80" fill-opacity="0.3" stroke="#ff6f80" stroke-opacity="0.6" stroke-width="2.4"/>
<circle cx="1761.2" cy="1082.1" r="8.9" fill="#ff6f80" fill-opacity="0.3" stroke="#ff6f80" stroke-opacity="0.6" stroke-width="2.4"/>
<circle cx="1941.3" cy="1065.4" r="3.4" fill="#ff6f80" fill-opacity="0.3" stroke="#ff6f80" stroke-opacity="0.6" stroke-width="2.4"/>
<circle cx="1869.6" cy="1188.1" r="2.2" fill="#3fd3a0" fill-opacity="0.3" stroke="#3fd3a0" stroke-opacity="0.6" stroke-width="2.4"/>
<circle cx="1931.9" cy="1171.1" r="3.0" fill="#ff6f80" fill-opacity="0.3" stroke="#ff6f80" stroke-opacity="0.6" stroke-width="2.4"/>
<circle cx="2006.9" cy="817.3" r="4.0" fill="#ff6f80" fill-opacity="0.3" stroke="#ff6f80" stroke-opacity="0.6" stroke-width="2.4"/>
<circle cx="1733.7" cy="1079.4" r="9.8" fill="#ff6f80" fill-opacity="0.3" stroke="#ff6f80" stroke-opacity="0.6" stroke-width="2.4"/>
<circle cx="1847.7" cy="843.9" r="3.1" fill="#ff6f80" fill-opacity="0.3" stroke="#ff6f80" stroke-opacity="0.6" stroke-width="2.4"/>
<circle cx="1957.1" cy="876.8" r="3.9" fill="#ff6f80" fill-opacity="0.3" stroke="#ff6f80" stroke-opacity="0.6" stroke-width="2.4"/>
<circle cx="1897.5" cy="1052.6" r="4.0" fill="#3fd3a0" fill-opacity="0.3" stroke="#3fd3a0" stroke-opacity="0.6" stroke-width="2.4"/>
<circle cx="1939.4" cy="1295.1" r="2.0" fill="#3fd3a0" fill-opacity="0.3" stroke="#3fd3a0" stroke-opacity="0.6" stroke-width="2.4"/>
<circle cx="1827.5" cy="1068.8" r="3.1" fill="#ff6f80" fill-opacity="0.3" stroke="#ff6f80" stroke-opacity="0.6" stroke-width="2.4"/>
<circle cx="1811.3" cy="1021.1" r="3.0" fill="#ff6f80" fill-opacity="0.3" stroke="#ff6f80" stroke-opacity="0.6" stroke-width="2.4"/>
<circle cx="1963.5" cy="890.8" r="3.1" fill="#ff6f80" fill-opacity="0.3" stroke="#ff6f80" stroke-opacity="0.6" stroke-width="2.4"/>
<circle cx="1893.1" cy="997.6" r="3.4" fill="#ff6f80" fill-opacity="0.3" stroke="#ff6f80" stroke-opacity="0.6" stroke-width="2.4"/>
<circle cx="1916.5" cy="858.0" r="9.2" fill="#ff6f80" fill-opacity="0.3" stroke="#ff6f80" stroke-opacity="0.6" stroke-width="2.4"/>
<circle cx="1884.8" cy="1067.3" r="3.5" fill="#ff6f80" fill-opacity="0.3" stroke="#ff6f80" stroke-opacity="0.6" stroke-width="2.4"/>
<circle cx="1903.9" cy="1281.0" r="2.0" fill="#3fd3a0" fill-opacity="0.3" stroke="#3fd3a0" stroke-opacity="0.6" stroke-width="2.4"/>
<circle cx="2022.6" cy="1033.3" r="4.8" fill="#3fd3a0" fill-opacity="0.3" stroke="#3fd3a0" stroke-opacity="0.6" stroke-width="2.4"/>
<circle cx="1801.2" cy="921.6" r="10.9" fill="#ff6f80" fill-opacity="0.13" stroke="#ff6f80" stroke-opacity="0.6" stroke-width="2.4"/>
<circle cx="1979.1" cy="884.6" r="4.1" fill="#ff6f80" fill-opacity="0.3" stroke="#ff6f80" stroke-opacity="0.6" stroke-width="2.4"/>
<circle cx="1822.1" cy="965.2" r="3.4" fill="#ff6f80" fill-opacity="0.3" stroke="#ff6f80" stroke-opacity="0.6" stroke-width="2.4"/>
<circle cx="1894.1" cy="982.3" r="3.5" fill="#3fd3a0" fill-opacity="0.3" stroke="#3fd3a0" stroke-opacity="0.6" stroke-width="2.4"/>
<circle cx="1973.5" cy="838.5" r="3.0" fill="#ff6f80" fill-opacity="0.3" stroke="#ff6f80" stroke-opacity="0.6" stroke-width="2.4"/>
<circle cx="1934.5" cy="1166.2" r="3.0" fill="#ff6f80" fill-opacity="0.3" stroke="#ff6f80" stroke-opacity="0.6" stroke-width="2.4"/>
<circle cx="1971.7" cy="877.0" r="5.9" fill="#ff6f80" fill-opacity="0.3" stroke="#ff6f80" stroke-opacity="0.6" stroke-width="2.4"/>
<circle cx="1911.2" cy="980.3" r="7.7" fill="#ff6f80" fill-opacity="0.3" stroke="#ff6f80" stroke-opacity="0.6" stroke-width="2.4"/>
<circle cx="1812.1" cy="982.3" r="3.0" fill="#ff6f80" fill-opacity="0.3" stroke="#ff6f80" stroke-opacity="0.6" stroke-width="2.4"/>
<circle cx="1922.0" cy="887.3" r="5.3" fill="#ff6f80" fill-opacity="0.3" stroke="#ff6f80" stroke-opacity="0.6" stroke-width="2.4"/>
<circle cx="1861.9" cy="1162.6" r="2.1" fill="#3fd3a0" fill-opacity="0.3" stroke="#3fd3a0" stroke-opacity="0.6" stroke-width="2.4"/>
<circle cx="1993.6" cy="1007.5" r="2.5" fill="#3fd3a0" fill-opacity="0.3" stroke="#3fd3a0" stroke-opacity="0.6" stroke-width="2.4"/>
<circle cx="1810.0" cy="932.9" r="3.3" fill="#ff6f80" fill-opacity="0.3" stroke="#ff6f80" stroke-opacity="0.6" stroke-width="2.4"/>
<circle cx="1897.8" cy="985.9" r="3.3" fill="#ff6f80" fill-opacity="0.3" stroke="#ff6f80" stroke-opacity="0.6" stroke-width="2.4"/>
<circle cx="1945.8" cy="1049.2" r="4.1" fill="#ff6f80" fill-opacity="0.3" stroke="#ff6f80" stroke-opacity="0.6" stroke-width="2.4"/>
<circle cx="1888.4" cy="977.0" r="4.8" fill="#3fd3a0" fill-opacity="0.3" stroke="#3fd3a0" stroke-opacity="0.6" stroke-width="2.4"/>
<circle cx="1900.0" cy="965.6" r="3.5" fill="#ff6f80" fill-opacity="0.3" stroke="#ff6f80" stroke-opacity="0.6" stroke-width="2.4"/>
<circle cx="1795.5" cy="972.8" r="10.4" fill="#3fd3a0" fill-opacity="0.13" stroke="#3fd3a0" stroke-opacity="0.6" stroke-width="2.4"/>
<circle cx="1811.0" cy="1046.1" r="3.6" fill="#ff6f80" fill-opacity="0.3" stroke="#ff6f80" stroke-opacity="0.6" stroke-width="2.4"/>
<circle cx="1971.3" cy="857.2" r="9.4" fill="#ff6f80" fill-opacity="0.3" stroke="#ff6f80" stroke-opacity="0.6" stroke-width="2.4"/>
<circle cx="1843.2" cy="1000.8" r="3.7" fill="#3fd3a0" fill-opacity="0.3" stroke="#3fd3a0" stroke-opacity="0.6" stroke-width="2.4"/>
<circle cx="1995.4" cy="782.0" r="2.1" fill="#3fd3a0" fill-opacity="0.3" stroke="#3fd3a0" stroke-opacity="0.6" stroke-width="2.4"/>
<circle cx="1860.9" cy="958.3" r="3.0" fill="#3fd3a0" fill-opacity="0.3" stroke="#3fd3a0" stroke-opacity="0.6" stroke-width="2.4"/>
<circle cx="1763.9" cy="1096.8" r="5.3" fill="#3fd3a0" fill-opacity="0.3" stroke="#3fd3a0" stroke-opacity="0.6" stroke-width="2.4"/>
<circle cx="1839.4" cy="889.5" r="5.0" fill="#ff6f80" fill-opacity="0.3" stroke="#ff6f80" stroke-opacity="0.6" stroke-width="2.4"/>
<circle cx="1805.0" cy="1048.7" r="9.3" fill="#ff6f80" fill-opacity="0.3" stroke="#ff6f80" stroke-opacity="0.6" stroke-width="2.4"/>
<circle cx="1865.2" cy="1016.7" r="3.5" fill="#ff6f80" fill-opacity="0.3" stroke="#ff6f80" stroke-opacity="0.6" stroke-width="2.4"/>
<circle cx="1945.6" cy="1210.0" r="6.1" fill="#ff6f80" fill-opacity="0.3" stroke="#ff6f80" stroke-opacity="0.6" stroke-width="2.4"/>
<circle cx="1825.5" cy="1068.2" r="9.1" fill="#ff6f80" fill-opacity="0.3" stroke="#ff6f80" stroke-opacity="0.6" stroke-width="2.4"/>
<circle cx="1857.7" cy="1052.9" r="6.7" fill="#3fd3a0" fill-opacity="0.3" stroke="#3fd3a0" stroke-opacity="0.6" stroke-width="2.4"/>
<circle cx="1887.0" cy="860.5" r="3.3" fill="#ff6f80" fill-opacity="0.3" stroke="#ff6f80" stroke-opacity="0.6" stroke-width="2.4"/>
<circle cx="1903.6" cy="808.2" r="3.0" fill="#ff6f80" fill-opacity="0.3" stroke="#ff6f80" stroke-opacity="0.6" stroke-width="2.4"/>
<circle cx="1842.7" cy="1067.5" r="3.0" fill="#3fd3a0" fill-opacity="0.3" stroke="#3fd3a0" stroke-opacity="0.6" stroke-width="2.4"/>
<circle cx="1763.3" cy="1067.5" r="8.9" fill="#ff6f80" fill-opacity="0.3" stroke="#ff6f80" stroke-opacity="0.6" stroke-width="2.4"/>
<circle cx="1986.6" cy="816.7" r="3.8" fill="#ff6f80" fill-opacity="0.3" stroke="#ff6f80" stroke-opacity="0.6" stroke-width="2.4"/>
<circle cx="1889.2" cy="997.8" r="3.8" fill="#ff6f80" fill-opacity="0.3" stroke="#ff6f80" stroke-opacity="0.6" stroke-width="2.4"/>
<circle cx="1932.2" cy="873.2" r="3.0" fill="#ff6f80" fill-opacity="0.3" stroke="#ff6f80" stroke-opacity="0.6" stroke-width="2.4"/>
<circle cx="1815.0" cy="967.5" r="6.3" fill="#ff6f80" fill-opacity="0.3" stroke="#ff6f80" stroke-opacity="0.6" stroke-width="2.4"/>
<circle cx="1866.7" cy="1040.8" r="3.0" fill="#ff6f80" fill-opacity="0.3" stroke="#ff6f80" stroke-opacity="0.6" stroke-width="2.4"/>
<circle cx="1961.0" cy="1135.1" r="5.3" fill="#ff6f80" fill-opacity="0.3" stroke="#ff6f80" stroke-opacity="0.6" stroke-width="2.4"/>
<circle cx="2015.2" cy="868.2" r="4.2" fill="#ff6f80" fill-opacity="0.3" stroke="#ff6f80" stroke-opacity="0.6" stroke-width="2.4"/>
<circle cx="1900.3" cy="1275.3" r="2.3" fill="#ff6f80" fill-opacity="0.3" stroke="#ff6f80" stroke-opacity="0.6" stroke-width="2.4"/>
<circle cx="1815.2" cy="1007.3" r="3.0" fill="#ff6f80" fill-opacity="0.3" stroke="#ff6f80" stroke-opacity="0.6" stroke-width="2.4"/>
<circle cx="2011.4" cy="1025.7" r="2.0" fill="#ff6f80" fill-opacity="0.3" stroke="#ff6f80" stroke-opacity="0.6" stroke-width="2.4"/>
<circle cx="1864.9" cy="1096.3" r="2.4" fill="#ff6f80" fill-opacity="0.3" stroke="#ff6f80" stroke-opacity="0.6" stroke-width="2.4"/>
<circle cx="1985.2" cy="879.0" r="6.5" fill="#ff6f80" fill-opacity="0.3" stroke="#ff6f80" stroke-opacity="0.6" stroke-width="2.4"/>
<circle cx="1993.7" cy="742.7" r="2.1" fill="#3fd3a0" fill-opacity="0.3" stroke="#3fd3a0" stroke-opacity="0.6" stroke-width="2.4"/>
<circle cx="1777.3" cy="1079.4" r="4.3" fill="#3fd3a0" fill-opacity="0.3" stroke="#3fd3a0" stroke-opacity="0.6" stroke-width="2.4"/>
<circle cx="1791.1" cy="1091.5" r="7.0" fill="#ff6f80" fill-opacity="0.3" stroke="#ff6f80" stroke-opacity="0.6" stroke-width="2.4"/>
<circle cx="1988.0" cy="843.1" r="7.1" fill="#ff6f80" fill-opacity="0.3" stroke="#ff6f80" stroke-opacity="0.6" stroke-width="2.4"/>
<circle cx="1883.5" cy="855.4" r="4.9" fill="#3fd3a0" fill-opacity="0.3" stroke="#3fd3a0" stroke-opacity="0.6" stroke-width="2.4"/>
<circle cx="1834.9" cy="1160.6" r="3.4" fill="#ff6f80" fill-opacity="0.3" stroke="#ff6f80" stroke-opacity="0.6" stroke-width="2.4"/>
<circle cx="1926.2" cy="1138.2" r="6.3" fill="#ff6f80" fill-opacity="0.3" stroke="#ff6f80" stroke-opacity="0.6" stroke-width="2.4"/>
<circle cx="1939.2" cy="868.9" r="4.0" fill="#3fd3a0" fill-opacity="0.3" stroke="#3fd3a0" stroke-opacity="0.6" stroke-width="2.4"/>
<circle cx="1898.5" cy="1015.5" r="3.1" fill="#3fd3a0" fill-opacity="0.3" stroke="#3fd3a0" stroke-opacity="0.6" stroke-width="2.4"/>
<circle cx="1872.2" cy="1019.6" r="7.1" fill="#3fd3a0" fill-opacity="0.3" stroke="#3fd3a0" stroke-opacity="0.6" stroke-width="2.4"/>
<circle cx="1863.4" cy="878.2" r="10.9" fill="#ff6f80" fill-opacity="0.13" stroke="#ff6f80" stroke-opacity="0.6" stroke-width="2.4"/>
<circle cx="1961.2" cy="869.5" r="3.5" fill="#ff6f80" fill-opacity="0.3" stroke="#ff6f80" stroke-opacity="0.6" stroke-width="2.4"/>
<circle cx="1840.2" cy="1145.2" r="2.0" fill="#ff6f80" fill-opacity="0.3" stroke="#ff6f80" stroke-opacity="0.6" stroke-width="2.4"/>
<circle cx="1864.5" cy="997.5" r="6.2" fill="#ff6f80" fill-opacity="0.3" stroke="#ff6f80" stroke-opacity="0.6" stroke-width="2.4"/>
<circle cx="1843.3" cy="846.6" r="6.2" fill="#ff6f80" fill-opacity="0.3" stroke="#ff6f80" stroke-opacity="0.6" stroke-width="2.4"/>
<circle cx="1853.5" cy="1027.1" r="3.0" fill="#ff6f80" fill-opacity="0.3" stroke="#ff6f80" stroke-opacity="0.6" stroke-width="2.4"/>
<circle cx="1974.6" cy="805.1" r="5.4" fill="#ff6f80" fill-opacity="0.3" stroke="#ff6f80" stroke-opacity="0.6" stroke-width="2.4"/>
<circle cx="1917.1" cy="1283.2" r="4.8" fill="#3fd3a0" fill-opacity="0.3" stroke="#3fd3a0" stroke-opacity="0.6" stroke-width="2.4"/>
<circle cx="1790.7" cy="1101.7" r="4.6" fill="#ff6f80" fill-opacity="0.3" stroke="#ff6f80" stroke-opacity="0.6" stroke-width="2.4"/>
<circle cx="1936.2" cy="1184.1" r="3.0" fill="#ff6f80" fill-opacity="0.3" stroke="#ff6f80" stroke-opacity="0.6" stroke-width="2.4"/>
<circle cx="1939.1" cy="953.6" r="3.7" fill="#3fd3a0" fill-opacity="0.3" stroke="#3fd3a0" stroke-opacity="0.6" stroke-width="2.4"/>
<circle cx="1933.1" cy="1171.2" r="3.7" fill="#ff6f80" fill-opacity="0.3" stroke="#ff6f80" stroke-opacity="0.6" stroke-width="2.4"/>
<circle cx="1999.5" cy="810.0" r="8.0" fill="#ff6f80" fill-opacity="0.3" stroke="#ff6f80" stroke-opacity="0.6" stroke-width="2.4"/>
<circle cx="1801.4" cy="958.7" r="5.8" fill="#ff6f80" fill-opacity="0.3" stroke="#ff6f80" stroke-opacity="0.6" stroke-width="2.4"/>
<circle cx="1817.7" cy="965.7" r="3.0" fill="#ff6f80" fill-opacity="0.3" stroke="#ff6f80" stroke-opacity="0.6" stroke-width="2.4"/>
<circle cx="1823.1" cy="1064.0" r="4.1" fill="#ff6f80" fill-opacity="0.3" stroke="#ff6f80" stroke-opacity="0.6" stroke-width="2.4"/>
<circle cx="1984.9" cy="904.9" r="6.5" fill="#ff6f80" fill-opacity="0.3" stroke="#ff6f80" stroke-opacity="0.6" stroke-width="2.4"/>
<circle cx="1937.2" cy="1279.3" r="3.2" fill="#ff6f80" fill-opacity="0.3" stroke="#ff6f80" stroke-opacity="0.6" stroke-width="2.4"/>
<circle cx="1856.9" cy="958.8" r="5.5" fill="#ff6f80" fill-opacity="0.3" stroke="#ff6f80" stroke-opacity="0.6" stroke-width="2.4"/>
<circle cx="1851.5" cy="969.4" r="3.0" fill="#ff6f80" fill-opacity="0.3" stroke="#ff6f80" stroke-opacity="0.6" stroke-width="2.4"/>
<circle cx="1913.1" cy="993.3" r="3.5" fill="#ff6f80" fill-opacity="0.3" stroke="#ff6f80" stroke-opacity="0.6" stroke-width="2.4"/>
<circle cx="1978.0" cy="802.3" r="6.9" fill="#ff6f80" fill-opacity="0.3" stroke="#ff6f80" stroke-opacity="0.6" stroke-width="2.4"/>
<circle cx="1954.6" cy="1246.1" r="3.1" fill="#ff6f80" fill-opacity="0.3" stroke="#ff6f80" stroke-opacity="0.6" stroke-width="2.4"/>
<circle cx="1796.4" cy="996.6" r="3.8" fill="#ff6f80" fill-opacity="0.3" stroke="#ff6f80" stroke-opacity="0.6" stroke-width="2.4"/>
<circle cx="2003.4" cy="742.5" r="5.9" fill="#ff6f80" fill-opacity="0.3" stroke="#ff6f80" stroke-opacity="0.6" stroke-width="2.4"/>
<circle cx="1890.8" cy="869.8" r="3.0" fill="#ff6f80" fill-opacity="0.3" stroke="#ff6f80" stroke-opacity="0.6" stroke-width="2.4"/>
<circle cx="2004.2" cy="1060.7" r="2.0" fill="#3fd3a0" fill-opacity="0.3" stroke="#3fd3a0" stroke-opacity="0.6" stroke-width="2.4"/>
<circle cx="1897.9" cy="988.5" r="3.1" fill="#3fd3a0" fill-opacity="0.3" stroke="#3fd3a0" stroke-opacity="0.6" stroke-width="2.4"/>
<circle cx="1933.5" cy="1075.2" r="2.4" fill="#3fd3a0" fill-opacity="0.3" stroke="#3fd3a0" stroke-opacity="0.6" stroke-width="2.4"/>
<circle cx="1900.8" cy="913.5" r="7.7" fill="#ff6f80" fill-opacity="0.3" stroke="#ff6f80" stroke-opacity="0.6" stroke-width="2.4"/>
<circle cx="1826.0" cy="968.2" r="5.6" fill="#ff6f80" fill-opacity="0.3" stroke="#ff6f80" stroke-opacity="0.6" stroke-width="2.4"/>
<circle cx="1887.7" cy="1076.3" r="3.5" fill="#ff6f80" fill-opacity="0.3" stroke="#ff6f80" stroke-opacity="0.6" stroke-width="2.4"/>
<circle cx="1986.9" cy="865.5" r="3.6" fill="#3fd3a0" fill-opacity="0.3" stroke="#3fd3a0" stroke-opacity="0.6" stroke-width="2.4"/>
<circle cx="1937.4" cy="1165.5" r="5.6" fill="#ff6f80" fill-opacity="0.3" stroke="#ff6f80" stroke-opacity="0.6" stroke-width="2.4"/>
<circle cx="1886.4" cy="1035.3" r="3.0" fill="#3fd3a0" fill-opacity="0.3" stroke="#3fd3a0" stroke-opacity="0.6" stroke-width="2.4"/>
<circle cx="2000.0" cy="904.3" r="9.2" fill="#ff6f80" fill-opacity="0.3" stroke="#ff6f80" stroke-opacity="0.6" stroke-width="2.4"/>
<circle cx="1883.7" cy="863.6" r="4.4" fill="#ff6f80" fill-opacity="0.3" stroke="#ff6f80" stroke-opacity="0.6" stroke-width="2.4"/>
<circle cx="1880.4" cy="1093.2" r="2.9" fill="#ff6f80" fill-opacity="0.3" stroke="#ff6f80" stroke-opacity="0.6" stroke-width="2.4"/>
<circle cx="1948.6" cy="872.4" r="4.1" fill="#ff6f80" fill-opacity="0.3" stroke="#ff6f80" stroke-opacity="0.6" stroke-width="2.4"/>
<circle cx="1918.2" cy="1153.8" r="3.1" fill="#3fd3a0" fill-opacity="0.3" stroke="#3fd3a0" stroke-opacity="0.6" stroke-width="2.4"/>
<circle cx="1884.6" cy="983.5" r="3.0" fill="#ff6f80" fill-opacity="0.3" stroke="#ff6f80" stroke-opacity="0.6" stroke-width="2.4"/>
<circle cx="1832.0" cy="869.4" r="3.0" fill="#ff6f80" fill-opacity="0.3" stroke="#ff6f80" stroke-opacity="0.6" stroke-width="2.4"/>
<circle cx="1812.0" cy="1041.7" r="6.8" fill="#ff6f80" fill-opacity="0.3" stroke="#ff6f80" stroke-opacity="0.6" stroke-width="2.4"/>
<circle cx="1959.0" cy="876.7" r="3.0" fill="#ff6f80" fill-opacity="0.3" stroke="#ff6f80" stroke-opacity="0.6" stroke-width="2.4"/>
<circle cx="1727.3" cy="1054.9" r="13.5" fill="#3fd3a0" fill-opacity="0.13" stroke="#3fd3a0" stroke-opacity="0.6" stroke-width="2.4"/>
<circle cx="1819.7" cy="874.7" r="3.2" fill="#ff6f80" fill-opacity="0.3" stroke="#ff6f80" stroke-opacity="0.6" stroke-width="2.4"/>
<circle cx="1908.7" cy="974.6" r="3.0" fill="#3fd3a0" fill-opacity="0.3" stroke="#3fd3a0" stroke-opacity="0.6" stroke-width="2.4"/>
<circle cx="1923.5" cy="959.6" r="3.2" fill="#ff6f80" fill-opacity="0.3" stroke="#ff6f80" stroke-opacity="0.6" stroke-width="2.4"/>
<circle cx="1823.8" cy="968.7" r="6.4" fill="#ff6f80" fill-opacity="0.3" stroke="#ff6f80" stroke-opacity="0.6" stroke-width="2.4"/>
<circle cx="1893.8" cy="1244.4" r="3.7" fill="#ff6f80" fill-opacity="0.3" stroke="#ff6f80" stroke-opacity="0.6" stroke-width="2.4"/>
<circle cx="1925.5" cy="916.4" r="3.1" fill="#ff6f80" fill-opacity="0.3" stroke="#ff6f80" stroke-opacity="0.6" stroke-width="2.4"/>
<circle cx="1854.6" cy="906.2" r="3.3" fill="#3fd3a0" fill-opacity="0.3" stroke="#3fd3a0" stroke-opacity="0.6" stroke-width="2.4"/>
<circle cx="1969.0" cy="1206.1" r="3.3" fill="#ff6f80" fill-opacity="0.3" stroke="#ff6f80" stroke-opacity="0.6" stroke-width="2.4"/>
<circle cx="1879.4" cy="882.4" r="8.6" fill="#ff6f80" fill-opacity="0.3" stroke="#ff6f80" stroke-opacity="0.6" stroke-width="2.4"/>
<circle cx="1918.9" cy="971.3" r="7.9" fill="#3fd3a0" fill-opacity="0.3" stroke="#3fd3a0" stroke-opacity="0.6" stroke-width="2.4"/>
<circle cx="1898.2" cy="1062.5" r="3.3" fill="#3fd3a0" fill-opacity="0.3" stroke="#3fd3a0" stroke-opacity="0.6" stroke-width="2.4"/>
<circle cx="1717.6" cy="1065.6" r="11.6" fill="#3fd3a0" fill-opacity="0.13" stroke="#3fd3a0" stroke-opacity="0.6" stroke-width="2.4"/>
<circle cx="1856.6" cy="963.9" r="3.0" fill="#ff6f80" fill-opacity="0.3" stroke="#ff6f80" stroke-opacity="0.6" stroke-width="2.4"/>
<circle cx="1930.4" cy="1277.7" r="3.4" fill="#ff6f80" fill-opacity="0.3" stroke="#ff6f80" stroke-opacity="0.6" stroke-width="2.4"/>
<circle cx="1851.9" cy="1161.0" r="2.1" fill="#3fd3a0" fill-opacity="0.3" stroke="#3fd3a0" stroke-opacity="0.6" stroke-width="2.4"/>
<circle cx="1810.4" cy="986.2" r="3.9" fill="#3fd3a0" fill-opacity="0.3" stroke="#3fd3a0" stroke-opacity="0.6" stroke-width="2.4"/>
<circle cx="1890.4" cy="1031.3" r="4.2" fill="#ff6f80" fill-opacity="0.3" stroke="#ff6f80" stroke-opacity="0.6" stroke-width="2.4"/>
<circle cx="1840.2" cy="1041.2" r="6.0" fill="#ff6f80" fill-opacity="0.3" stroke="#ff6f80" stroke-opacity="0.6" stroke-width="2.4"/>
<circle cx="1872.8" cy="1088.1" r="2.0" fill="#ff6f80" fill-opacity="0.3" stroke="#ff6f80" stroke-opacity="0.6" stroke-width="2.4"/>
<circle cx="1923.4" cy="1115.6" r="2.0" fill="#ff6f80" fill-opacity="0.3" stroke="#ff6f80" stroke-opacity="0.6" stroke-width="2.4"/>
<circle cx="1976.6" cy="892.7" r="3.3" fill="#ff6f80" fill-opacity="0.3" stroke="#ff6f80" stroke-opacity="0.6" stroke-width="2.4"/>
<circle cx="1788.4" cy="1089.1" r="3.2" fill="#ff6f80" fill-opacity="0.3" stroke="#ff6f80" stroke-opacity="0.6" stroke-width="2.4"/>
<circle cx="1919.4" cy="877.7" r="4.5" fill="#ff6f80" fill-opacity="0.3" stroke="#ff6f80" stroke-opacity="0.6" stroke-width="2.4"/>
<circle cx="1906.1" cy="919.4" r="6.8" fill="#3fd3a0" fill-opacity="0.3" stroke="#3fd3a0" stroke-opacity="0.6" stroke-width="2.4"/>
<circle cx="1896.4" cy="863.6" r="3.2" fill="#ff6f80" fill-opacity="0.3" stroke="#ff6f80" stroke-opacity="0.6" stroke-width="2.4"/>
<circle cx="1889.1" cy="1041.2" r="3.1" fill="#ff6f80" fill-opacity="0.3" stroke="#ff6f80" stroke-opacity="0.6" stroke-width="2.4"/>
<circle cx="1950.6" cy="1233.9" r="3.1" fill="#ff6f80" fill-opacity="0.3" stroke="#ff6f80" stroke-opacity="0.6" stroke-width="2.4"/>
<circle cx="1939.3" cy="1162.8" r="4.8" fill="#ff6f80" fill-opacity="0.3" stroke="#ff6f80" stroke-opacity="0.6" stroke-width="2.4"/>
<circle cx="1860.3" cy="1168.6" r="4.0" fill="#ff6f80" fill-opacity="0.3" stroke="#ff6f80" stroke-opacity="0.6" stroke-width="2.4"/>
<circle cx="2052.8" cy="1071.7" r="2.0" fill="#3fd3a0" fill-opacity="0.3" stroke="#3fd3a0" stroke-opacity="0.6" stroke-width="2.4"/>
<circle cx="1832.7" cy="969.2" r="7.8" fill="#3fd3a0" fill-opacity="0.3" stroke="#3fd3a0" stroke-opacity="0.6" stroke-width="2.4"/>
<circle cx="1936.9" cy="1195.4" r="4.8" fill="#ff6f80" fill-opacity="0.3" stroke="#ff6f80" stroke-opacity="0.6" stroke-width="2.4"/>
<circle cx="1806.7" cy="961.0" r="6.0" fill="#ff6f80" fill-opacity="0.3" stroke="#ff6f80" stroke-opacity="0.6" stroke-width="2.4"/>
<circle cx="1902.5" cy="1291.6" r="5.4" fill="#3fd3a0" fill-opacity="0.3" stroke="#3fd3a0" stroke-opacity="0.6" stroke-width="2.4"/>
<circle cx="1989.9" cy="718.4" r="5.2" fill="#ff6f80" fill-opacity="0.3" stroke="#ff6f80" stroke-opacity="0.6" stroke-width="2.4"/>
<circle cx="1816.7" cy="962.8" r="3.0" fill="#ff6f80" fill-opacity="0.3" stroke="#ff6f80" stroke-opacity="0.6" stroke-width="2.4"/>
<circle cx="1852.2" cy="870.9" r="7.4" fill="#ff6f80" fill-opacity="0.3" stroke="#ff6f80" stroke-opacity="0.6" stroke-width="2.4"/>
<circle cx="2000.8" cy="818.3" r="8.2" fill="#ff6f80" fill-opacity="0.3" stroke="#ff6f80" stroke-opacity="0.6" stroke-width="2.4"/>
<circle cx="1921.1" cy="1281.8" r="5.5" fill="#3fd3a0" fill-opacity="0.3" stroke="#3fd3a0" stroke-opacity="0.6" stroke-width="2.4"/>
<circle cx="1898.8" cy="1237.7" r="2.4" fill="#ff6f80" fill-opacity="0.3" stroke="#ff6f80" stroke-opacity="0.6" stroke-width="2.4"/>
<circle cx="1921.6" cy="723.0" r="9.0" fill="#ff6f80" fill-opacity="0.3" stroke="#ff6f80" stroke-opacity="0.6" stroke-width="2.4"/>
<circle cx="1886.6" cy="984.9" r="4.7" fill="#3fd3a0" fill-opacity="0.3" stroke="#3fd3a0" stroke-opacity="0.6" stroke-width="2.4"/>
<circle cx="1783.6" cy="1130.8" r="3.3" fill="#3fd3a0" fill-opacity="0.3" stroke="#3fd3a0" stroke-opacity="0.6" stroke-width="2.4"/>
<circle cx="1940.8" cy="834.7" r="4.4" fill="#ff6f80" fill-opacity="0.3" stroke="#ff6f80" stroke-opacity="0.6" stroke-width="2.4"/>
<circle cx="1809.7" cy="945.1" r="3.0" fill="#ff6f80" fill-opacity="0.3" stroke="#ff6f80" stroke-opacity="0.6" stroke-width="2.4"/>
<circle cx="1891.6" cy="973.1" r="3.0" fill="#ff6f80" fill-opacity="0.3" stroke="#ff6f80" stroke-opacity="0.6" stroke-width="2.4"/>
<circle cx="1938.5" cy="1313.9" r="6.1" fill="#3fd3a0" fill-opacity="0.3" stroke="#3fd3a0" stroke-opacity="0.6" stroke-width="2.4"/>
<circle cx="1861.1" cy="945.3" r="3.1" fill="#3fd3a0" fill-opacity="0.3" stroke="#3fd3a0" stroke-opacity="0.6" stroke-width="2.4"/>
<circle cx="1798.1" cy="1074.5" r="3.5" fill="#3fd3a0" fill-opacity="0.3" stroke="#3fd3a0" stroke-opacity="0.6" stroke-width="2.4"/>
<circle cx="1994.4" cy="907.4" r="8.9" fill="#ff6f80" fill-opacity="0.3" stroke="#ff6f80" stroke-opacity="0.6" stroke-width="2.4"/>
<circle cx="1923.7" cy="822.2" r="5.1" fill="#ff6f80" fill-opacity="0.3" stroke="#ff6f80" stroke-opacity="0.6" stroke-width="2.4"/>
<circle cx="1833.4" cy="864.9" r="9.5" fill="#ff6f80" fill-opacity="0.3" stroke="#ff6f80" stroke-opacity="0.6" stroke-width="2.4"/>
<circle cx="1865.2" cy="1198.7" r="4.7" fill="#3fd3a0" fill-opacity="0.3" stroke="#3fd3a0" stroke-opacity="0.6" stroke-width="2.4"/>
<circle cx="1797.4" cy="1160.8" r="2.1" fill="#ff6f80" fill-opacity="0.3" stroke="#ff6f80" stroke-opacity="0.6" stroke-width="2.4"/>
<circle cx="1998.3" cy="803.4" r="3.3" fill="#ff6f80" fill-opacity="0.3" stroke="#ff6f80" stroke-opacity="0.6" stroke-width="2.4"/>
<circle cx="1872.0" cy="1154.7" r="3.6" fill="#ff6f80" fill-opacity="0.3" stroke="#ff6f80" stroke-opacity="0.6" stroke-width="2.4"/>
<circle cx="1802.5" cy="1013.9" r="3.4" fill="#ff6f80" fill-opacity="0.3" stroke="#ff6f80" stroke-opacity="0.6" stroke-width="2.4"/>
<circle cx="1844.5" cy="992.1" r="3.3" fill="#3fd3a0" fill-opacity="0.3" stroke="#3fd3a0" stroke-opacity="0.6" stroke-width="2.4"/>
<circle cx="1872.9" cy="999.3" r="7.6" fill="#ff6f80" fill-opacity="0.3" stroke="#ff6f80" stroke-opacity="0.6" stroke-width="2.4"/>
<circle cx="1777.6" cy="1088.8" r="3.0" fill="#ff6f80" fill-opacity="0.3" stroke="#ff6f80" stroke-opacity="0.6" stroke-width="2.4"/>
<circle cx="1947.0" cy="1178.1" r="6.7" fill="#ff6f80" fill-opacity="0.3" stroke="#ff6f80" stroke-opacity="0.6" stroke-width="2.4"/>
<circle cx="1849.3" cy="834.8" r="7.6" fill="#ff6f80" fill-opacity="0.3" stroke="#ff6f80" stroke-opacity="0.6" stroke-width="2.4"/>
<circle cx="1870.6" cy="1204.4" r="2.0" fill="#3fd3a0" fill-opacity="0.3" stroke="#3fd3a0" stroke-opacity="0.6" stroke-width="2.4"/>
<circle cx="1805.8" cy="1042.9" r="3.2" fill="#ff6f80" fill-opacity="0.3" stroke="#ff6f80" stroke-opacity="0.6" stroke-width="2.4"/>
<circle cx="1888.1" cy="1020.8" r="6.0" fill="#3fd3a0" fill-opacity="0.3" stroke="#3fd3a0" stroke-opacity="0.6" stroke-width="2.4"/>
<circle cx="1986.9" cy="858.3" r="5.2" fill="#ff6f80" fill-opacity="0.3" stroke="#ff6f80" stroke-opacity="0.6" stroke-width="2.4"/>
<circle cx="1941.4" cy="1206.5" r="3.0" fill="#ff6f80" fill-opacity="0.3" stroke="#ff6f80" stroke-opacity="0.6" stroke-width="2.4"/>
<circle cx="1888.0" cy="1001.6" r="4.9" fill="#ff6f80" fill-opacity="0.3" stroke="#ff6f80" stroke-opacity="0.6" stroke-width="2.4"/>
<circle cx="1878.2" cy="985.6" r="3.9" fill="#ff6f80" fill-opacity="0.3" stroke="#ff6f80" stroke-opacity="0.6" stroke-width="2.4"/>
<circle cx="1989.8" cy="917.0" r="7.8" fill="#ff6f80" fill-opacity="0.3" stroke="#ff6f80" stroke-opacity="0.6" stroke-width="2.4"/>
<circle cx="1957.2" cy="1099.3" r="5.3" fill="#ff6f80" fill-opacity="0.3" stroke="#ff6f80" stroke-opacity="0.6" stroke-width="2.4"/>
<circle cx="1809.8" cy="914.0" r="3.1" fill="#ff6f80" fill-opacity="0.3" stroke="#ff6f80" stroke-opacity="0.6" stroke-width="2.4"/>
<circle cx="1889.7" cy="966.7" r="3.1" fill="#3fd3a0" fill-opacity="0.3" stroke="#3fd3a0" stroke-opacity="0.6" stroke-width="2.4"/>
<circle cx="2028.3" cy="1037.0" r="2.0" fill="#ff6f80" fill-opacity="0.3" stroke="#ff6f80" stroke-opacity="0.6" stroke-width="2.4"/>
<circle cx="2013.7" cy="1048.8" r="6.0" fill="#ff6f80" fill-opacity="0.3" stroke="#ff6f80" stroke-opacity="0.6" stroke-width="2.4"/>
<circle cx="1776.4" cy="1098.1" r="3.0" fill="#ff6f80" fill-opacity="0.3" stroke="#ff6f80" stroke-opacity="0.6" stroke-width="2.4"/>
<circle cx="1901.0" cy="939.5" r="3.1" fill="#ff6f80" fill-opacity="0.3" stroke="#ff6f80" stroke-opacity="0.6" stroke-width="2.4"/>
<circle cx="1924.4" cy="1171.9" r="5.7" fill="#ff6f80" fill-opacity="0.3" stroke="#ff6f80" stroke-opacity="0.6" stroke-width="2.4"/>
<circle cx="1829.8" cy="1076.3" r="5.3" fill="#ff6f80" fill-opacity="0.3" stroke="#ff6f80" stroke-opacity="0.6" stroke-width="2.4"/>
<circle cx="1930.6" cy="1170.0" r="3.1" fill="#ff6f80" fill-opacity="0.3" stroke="#ff6f80" stroke-opacity="0.6" stroke-width="2.4"/>
<circle cx="1939.3" cy="872.0" r="3.0" fill="#ff6f80" fill-opacity="0.3" stroke="#ff6f80" stroke-opacity="0.6" stroke-width="2.4"/>
<circle cx="1960.6" cy="1121.1" r="5.1" fill="#ff6f80" fill-opacity="0.3" stroke="#ff6f80" stroke-opacity="0.6" stroke-width="2.4"/>
<circle cx="1880.1" cy="1006.6" r="4.0" fill="#3fd3a0" fill-opacity="0.3" stroke="#3fd3a0" stroke-opacity="0.6" stroke-width="2.4"/>
<circle cx="1996.7" cy="826.4" r="6.6" fill="#ff6f80" fill-opacity="0.3" stroke="#ff6f80" stroke-opacity="0.6" stroke-width="2.4"/>
<circle cx="1752.7" cy="1069.8" r="3.0" fill="#ff6f80" fill-opacity="0.3" stroke="#ff6f80" stroke-opacity="0.6" stroke-width="2.4"/>
<circle cx="1936.5" cy="1190.6" r="3.0" fill="#ff6f80" fill-opacity="0.3" stroke="#ff6f80" stroke-opacity="0.6" stroke-width="2.4"/>
<circle cx="1849.3" cy="1087.6" r="2.2" fill="#3fd3a0" fill-opacity="0.3" stroke="#3fd3a0" stroke-opacity="0.6" stroke-width="2.4"/>
<circle cx="1880.7" cy="939.9" r="3.1" fill="#3fd3a0" fill-opacity="0.3" stroke="#3fd3a0" stroke-opacity="0.6" stroke-width="2.4"/>
<circle cx="1819.0" cy="1063.5" r="6.8" fill="#ff6f80" fill-opacity="0.3" stroke="#ff6f80" stroke-opacity="0.6" stroke-width="2.4"/>
<circle cx="1975.5" cy="899.6" r="3.0" fill="#ff6f80" fill-opacity="0.3" stroke="#ff6f80" stroke-opacity="0.6" stroke-width="2.4"/>
<circle cx="1790.5" cy="917.9" r="7.0" fill="#ff6f80" fill-opacity="0.3" stroke="#ff6f80" stroke-opacity="0.6" stroke-width="2.4"/>
<circle cx="2042.7" cy="1120.6" r="3.9" fill="#3fd3a0" fill-opacity="0.3" stroke="#3fd3a0" stroke-opacity="0.6" stroke-width="2.4"/>
<circle cx="1878.9" cy="976.2" r="3.4" fill="#ff6f80" fill-opacity="0.3" stroke="#ff6f80" stroke-opacity="0.6" stroke-width="2.4"/>
<circle cx="1920.0" cy="883.1" r="7.4" fill="#ff6f80" fill-opacity="0.3" stroke="#ff6f80" stroke-opacity="0.6" stroke-width="2.4"/>
<circle cx="1985.8" cy="906.7" r="3.5" fill="#ff6f80" fill-opacity="0.3" stroke="#ff6f80" stroke-opacity="0.6" stroke-width="2.4"/>
<circle cx="1822.5" cy="1049.7" r="3.9" fill="#ff6f80" fill-opacity="0.3" stroke="#ff6f80" stroke-opacity="0.6" stroke-width="2.4"/>
<circle cx="1957.2" cy="861.8" r="3.8" fill="#ff6f80" fill-opacity="0.3" stroke="#ff6f80" stroke-opacity="0.6" stroke-width="2.4"/>
<circle cx="1958.2" cy="1233.2" r="5.7" fill="#ff6f80" fill-opacity="0.3" stroke="#ff6f80" stroke-opacity="0.6" stroke-width="2.4"/>
<circle cx="2003.4" cy="901.3" r="6.3" fill="#ff6f80" fill-opacity="0.3" stroke="#ff6f80" stroke-opacity="0.6" stroke-width="2.4"/>
<circle cx="1887.3" cy="989.9" r="3.2" fill="#3fd3a0" fill-opacity="0.3" stroke="#3fd3a0" stroke-opacity="0.6" stroke-width="2.4"/>
<circle cx="1781.0" cy="1095.6" r="3.0" fill="#ff6f80" fill-opacity="0.3" stroke="#ff6f80" stroke-opacity="0.6" stroke-width="2.4"/>
<circle cx="1934.7" cy="857.3" r="3.0" fill="#ff6f80" fill-opacity="0.3" stroke="#ff6f80" stroke-opacity="0.6" stroke-width="2.4"/>
<circle cx="1754.5" cy="1068.7" r="3.7" fill="#ff6f80" fill-opacity="0.3" stroke="#ff6f80" stroke-opacity="0.6" stroke-width="2.4"/>
<circle cx="1872.7" cy="1015.9" r="5.5" fill="#ff6f80" fill-opacity="0.3" stroke="#ff6f80" stroke-opacity="0.6" stroke-width="2.4"/>
<circle cx="1944.1" cy="1242.9" r="3.0" fill="#ff6f80" fill-opacity="0.3" stroke="#ff6f80" stroke-opacity="0.6" stroke-width="2.4"/>
<circle cx="1735.0" cy="1072.0" r="22.0" fill="#3fd3a0" fill-opacity="0.13" stroke="#3fd3a0" stroke-opacity="0.6" stroke-width="2.4"/>
<circle cx="1808.3" cy="913.3" r="3.4" fill="#ff6f80" fill-opacity="0.3" stroke="#ff6f80" stroke-opacity="0.6" stroke-width="2.4"/>
<circle cx="1887.4" cy="948.9" r="5.5" fill="#3fd3a0" fill-opacity="0.3" stroke="#3fd3a0" stroke-opacity="0.6" stroke-width="2.4"/>
<circle cx="1976.5" cy="844.9" r="8.1" fill="#ff6f80" fill-opacity="0.3" stroke="#ff6f80" stroke-opacity="0.6" stroke-width="2.4"/>
<circle cx="1868.4" cy="1201.6" r="5.0" fill="#3fd3a0" fill-opacity="0.3" stroke="#3fd3a0" stroke-opacity="0.6" stroke-width="2.4"/>
<circle cx="1762.8" cy="1062.2" r="3.0" fill="#ff6f80" fill-opacity="0.3" stroke="#ff6f80" stroke-opacity="0.6" stroke-width="2.4"/>
<circle cx="1953.9" cy="1212.3" r="3.2" fill="#ff6f80" fill-opacity="0.3" stroke="#ff6f80" stroke-opacity="0.6" stroke-width="2.4"/>
<circle cx="1815.7" cy="973.7" r="4.3" fill="#ff6f80" fill-opacity="0.3" stroke="#ff6f80" stroke-opacity="0.6" stroke-width="2.4"/>
<circle cx="1968.6" cy="815.5" r="5.4" fill="#ff6f80" fill-opacity="0.3" stroke="#ff6f80" stroke-opacity="0.6" stroke-width="2.4"/>
<circle cx="1821.4" cy="986.9" r="4.7" fill="#ff6f80" fill-opacity="0.3" stroke="#ff6f80" stroke-opacity="0.6" stroke-width="2.4"/>
<circle cx="1864.8" cy="1006.3" r="3.2" fill="#ff6f80" fill-opacity="0.3" stroke="#ff6f80" stroke-opacity="0.6" stroke-width="2.4"/>
<circle cx="1906.4" cy="866.2" r="3.0" fill="#ff6f80" fill-opacity="0.3" stroke="#ff6f80" stroke-opacity="0.6" stroke-width="2.4"/>
<circle cx="1820.4" cy="1019.9" r="8.6" fill="#ff6f80" fill-opacity="0.3" stroke="#ff6f80" stroke-opacity="0.6" stroke-width="2.4"/>
<circle cx="1897.8" cy="854.8" r="3.9" fill="#ff6f80" fill-opacity="0.3" stroke="#ff6f80" stroke-opacity="0.6" stroke-width="2.4"/>
<circle cx="1893.5" cy="981.9" r="6.7" fill="#3fd3a0" fill-opacity="0.3" stroke="#3fd3a0" stroke-opacity="0.6" stroke-width="2.4"/>
<circle cx="1841.6" cy="845.7" r="4.5" fill="#ff6f80" fill-opacity="0.3" stroke="#ff6f80" stroke-opacity="0.6" stroke-width="2.4"/>
<circle cx="1883.0" cy="985.8" r="3.1" fill="#ff6f80" fill-opacity="0.3" stroke="#ff6f80" stroke-opacity="0.6" stroke-width="2.4"/>
<circle cx="1987.5" cy="752.6" r="4.6" fill="#ff6f80" fill-opacity="0.3" stroke="#ff6f80" stroke-opacity="0.6" stroke-width="2.4"/>
<circle cx="1899.1" cy="930.8" r="7.8" fill="#ff6f80" fill-opacity="0.3" stroke="#ff6f80" stroke-opacity="0.6" stroke-width="2.4"/>
<circle cx="1876.0" cy="990.5" r="3.0" fill="#ff6f80" fill-opacity="0.3" stroke="#ff6f80" stroke-opacity="0.6" stroke-width="2.4"/>
<circle cx="1827.1" cy="1046.5" r="3.4" fill="#ff6f80" fill-opacity="0.3" stroke="#ff6f80" stroke-opacity="0.6" stroke-width="2.4"/>
<circle cx="1821.5" cy="906.2" r="7.8" fill="#ff6f80" fill-opacity="0.3" stroke="#ff6f80" stroke-opacity="0.6" stroke-width="2.4"/>
<circle cx="1932.7" cy="1259.0" r="2.0" fill="#3fd3a0" fill-opacity="0.3" stroke="#3fd3a0" stroke-opacity="0.6" stroke-width="2.4"/>
<circle cx="1817.4" cy="914.3" r="3.1" fill="#3fd3a0" fill-opacity="0.3" stroke="#3fd3a0" stroke-opacity="0.6" stroke-width="2.4"/>
<circle cx="1937.4" cy="918.4" r="3.0" fill="#ff6f80" fill-opacity="0.3" stroke="#ff6f80" stroke-opacity="0.6" stroke-width="2.4"/>
<circle cx="1915.3" cy="1146.4" r="3.0" fill="#ff6f80" fill-opacity="0.3" stroke="#ff6f80" stroke-opacity="0.6" stroke-width="2.4"/>
<circle cx="1936.0" cy="866.3" r="3.6" fill="#ff6f80" fill-opacity="0.3" stroke="#ff6f80" stroke-opacity="0.6" stroke-width="2.4"/>
<circle cx="1856.4" cy="1192.2" r="2.0" fill="#ff6f80" fill-opacity="0.3" stroke="#ff6f80" stroke-opacity="0.6" stroke-width="2.4"/>
<circle cx="1925.9" cy="1175.4" r="3.4" fill="#ff6f80" fill-opacity="0.3" stroke="#ff6f80" stroke-opacity="0.6" stroke-width="2.4"/>
<circle cx="1835.6" cy="837.5" r="9.2" fill="#ff6f80" fill-opacity="0.3" stroke="#ff6f80" stroke-opacity="0.6" stroke-width="2.4"/>
<circle cx="1912.2" cy="980.8" r="3.0" fill="#ff6f80" fill-opacity="0.3" stroke="#ff6f80" stroke-opacity="0.6" stroke-width="2.4"/>
<circle cx="1830.1" cy="1011.8" r="4.3" fill="#3fd3a0" fill-opacity="0.3" stroke="#3fd3a0" stroke-opacity="0.6" stroke-width="2.4"/>
<circle cx="1941.8" cy="1212.1" r="6.8" fill="#ff6f80" fill-opacity="0.3" stroke="#ff6f80" stroke-opacity="0.6" stroke-width="2.4"/>
<circle cx="1986.7" cy="860.9" r="3.2" fill="#ff6f80" fill-opacity="0.3" stroke="#ff6f80" stroke-opacity="0.6" stroke-width="2.4"/>
<circle cx="1932.5" cy="1082.0" r="2.2" fill="#ff6f80" fill-opacity="0.3" stroke="#ff6f80" stroke-opacity="0.6" stroke-width="2.4"/>
<circle cx="1829.1" cy="1178.9" r="3.2" fill="#ff6f80" fill-opacity="0.3" stroke="#ff6f80" stroke-opacity="0.6" stroke-width="2.4"/>
<circle cx="1886.4" cy="1091.7" r="3.3" fill="#3fd3a0" fill-opacity="0.3" stroke="#3fd3a0" stroke-opacity="0.6" stroke-width="2.4"/>
<circle cx="1912.1" cy="1148.1" r="3.8" fill="#ff6f80" fill-opacity="0.3" stroke="#ff6f80" stroke-opacity="0.6" stroke-width="2.4"/>
<circle cx="1820.6" cy="1076.8" r="3.7" fill="#ff6f80" fill-opacity="0.3" stroke="#ff6f80" stroke-opacity="0.6" stroke-width="2.4"/>
<circle cx="1983.0" cy="909.7" r="3.0" fill="#ff6f80" fill-opacity="0.3" stroke="#ff6f80" stroke-opacity="0.6" stroke-width="2.4"/>
<circle cx="1928.8" cy="922.9" r="5.4" fill="#ff6f80" fill-opacity="0.3" stroke="#ff6f80" stroke-opacity="0.6" stroke-width="2.4"/>
<circle cx="1902.0" cy="827.4" r="3.3" fill="#ff6f80" fill-opacity="0.3" stroke="#ff6f80" stroke-opacity="0.6" stroke-width="2.4"/>
<circle cx="1792.7" cy="941.4" r="3.0" fill="#3fd3a0" fill-opacity="0.3" stroke="#3fd3a0" stroke-opacity="0.6" stroke-width="2.4"/>
<circle cx="1872.4" cy="911.3" r="7.6" fill="#3fd3a0" fill-opacity="0.3" stroke="#3fd3a0" stroke-opacity="0.6" stroke-width="2.4"/>
<circle cx="1853.7" cy="1046.4" r="6.1" fill="#ff6f80" fill-opacity="0.3" stroke="#ff6f80" stroke-opacity="0.6" stroke-width="2.4"/>
<circle cx="1965.1" cy="1056.1" r="2.3" fill="#3fd3a0" fill-opacity="0.3" stroke="#3fd3a0" stroke-opacity="0.6" stroke-width="2.4"/>
<circle cx="1866.0" cy="974.8" r="5.5" fill="#ff6f80" fill-opacity="0.3" stroke="#ff6f80" stroke-opacity="0.6" stroke-width="2.4"/>
<circle cx="1896.2" cy="1079.0" r="3.7" fill="#3fd3a0" fill-opacity="0.3" stroke="#3fd3a0" stroke-opacity="0.6" stroke-width="2.4"/>
<circle cx="1938.6" cy="1286.6" r="5.0" fill="#3fd3a0" fill-opacity="0.3" stroke="#3fd3a0" stroke-opacity="0.6" stroke-width="2.4"/>
<circle cx="2010.4" cy="788.0" r="5.1" fill="#ff6f80" fill-opacity="0.3" stroke="#ff6f80" stroke-opacity="0.6" stroke-width="2.4"/>
<circle cx="1898.5" cy="996.6" r="3.1" fill="#ff6f80" fill-opacity="0.3" stroke="#ff6f80" stroke-opacity="0.6" stroke-width="2.4"/>
<circle cx="1829.2" cy="861.3" r="3.6" fill="#ff6f80" fill-opacity="0.3" stroke="#ff6f80" stroke-opacity="0.6" stroke-width="2.4"/>
<circle cx="2040.4" cy="1085.4" r="2.0" fill="#ff6f80" fill-opacity="0.3" stroke="#ff6f80" stroke-opacity="0.6" stroke-width="2.4"/>
<circle cx="1865.1" cy="1020.2" r="4.7" fill="#ff6f80" fill-opacity="0.3" stroke="#ff6f80" stroke-opacity="0.6" stroke-width="2.4"/>
<circle cx="1986.6" cy="890.9" r="5.0" fill="#3fd3a0" fill-opacity="0.3" stroke="#3fd3a0" stroke-opacity="0.6" stroke-width="2.4"/>
<circle cx="1982.1" cy="859.6" r="9.2" fill="#ff6f80" fill-opacity="0.3" stroke="#ff6f80" stroke-opacity="0.6" stroke-width="2.4"/>
<circle cx="1819.1" cy="903.7" r="9.7" fill="#ff6f80" fill-opacity="0.3" stroke="#ff6f80" stroke-opacity="0.6" stroke-width="2.4"/>
<circle cx="1992.4" cy="1081.5" r="4.5" fill="#ff6f80" fill-opacity="0.3" stroke="#ff6f80" stroke-opacity="0.6" stroke-width="2.4"/>
<circle cx="1944.4" cy="1111.8" r="2.0" fill="#ff6f80" fill-opacity="0.3" stroke="#ff6f80" stroke-opacity="0.6" stroke-width="2.4"/>
<circle cx="1816.7" cy="1022.0" r="3.0" fill="#3fd3a0" fill-opacity="0.3" stroke="#3fd3a0" stroke-opacity="0.6" stroke-width="2.4"/>
<circle cx="1785.7" cy="1091.4" r="3.1" fill="#ff6f80" fill-opacity="0.3" stroke="#ff6f80" stroke-opacity="0.6" stroke-width="2.4"/>
<circle cx="1875.2" cy="1217.2" r="3.2" fill="#ff6f80" fill-opacity="0.3" stroke="#ff6f80" stroke-opacity="0.6" stroke-width="2.4"/>
<circle cx="1889.1" cy="922.0" r="5.3" fill="#3fd3a0" fill-opacity="0.3" stroke="#3fd3a0" stroke-opacity="0.6" stroke-width="2.4"/>
<circle cx="1916.7" cy="1152.3" r="6.9" fill="#ff6f80" fill-opacity="0.3" stroke="#ff6f80" stroke-opacity="0.6" stroke-width="2.4"/>
<circle cx="1926.0" cy="801.0" r="16.0" fill="#ff6f80" fill-opacity="0.13" stroke="#ff6f80" stroke-opacity="0.6" stroke-width="2.4"/>
<circle cx="1975.6" cy="1118.5" r="5.0" fill="#3fd3a0" fill-opacity="0.3" stroke="#3fd3a0" stroke-opacity="0.6" stroke-width="2.4"/>
<circle cx="1944.9" cy="937.2" r="3.1" fill="#ff6f80" fill-opacity="0.3" stroke="#ff6f80" stroke-opacity="0.6" stroke-width="2.4"/>
<circle cx="1962.0" cy="1140.0" r="10.0" fill="#ff6f80" fill-opacity="0.13" stroke="#ff6f80" stroke-opacity="0.6" stroke-width="2.4"/>
<circle cx="1732.9" cy="1076.1" r="4.1" fill="#ff6f80" fill-opacity="0.3" stroke="#ff6f80" stroke-opacity="0.6" stroke-width="2.4"/>
<circle cx="1919.5" cy="840.1" r="3.2" fill="#ff6f80" fill-opacity="0.3" stroke="#ff6f80" stroke-opacity="0.6" stroke-width="2.4"/>
<circle cx="1810.6" cy="940.2" r="3.6" fill="#3fd3a0" fill-opacity="0.3" stroke="#3fd3a0" stroke-opacity="0.6" stroke-width="2.4"/>
<circle cx="1877.2" cy="895.9" r="6.5" fill="#3fd3a0" fill-opacity="0.3" stroke="#3fd3a0" stroke-opacity="0.6" stroke-width="2.4"/>
<circle cx="1998.8" cy="905.7" r="3.5" fill="#ff6f80" fill-opacity="0.3" stroke="#ff6f80" stroke-opacity="0.6" stroke-width="2.4"/>
<circle cx="1930.5" cy="1202.4" r="5.2" fill="#ff6f80" fill-opacity="0.3" stroke="#ff6f80" stroke-opacity="0.6" stroke-width="2.4"/>
<circle cx="1866.6" cy="1051.5" r="3.6" fill="#3fd3a0" fill-opacity="0.3" stroke="#3fd3a0" stroke-opacity="0.6" stroke-width="2.4"/>
<circle cx="1879.6" cy="954.3" r="4.5" fill="#3fd3a0" fill-opacity="0.3" stroke="#3fd3a0" stroke-opacity="0.6" stroke-width="2.4"/>
<circle cx="1918.9" cy="883.2" r="3.9" fill="#ff6f80" fill-opacity="0.3" stroke="#ff6f80" stroke-opacity="0.6" stroke-width="2.4"/>
<circle cx="1987.7" cy="851.5" r="3.5" fill="#ff6f80" fill-opacity="0.3" stroke="#ff6f80" stroke-opacity="0.6" stroke-width="2.4"/>
<circle cx="1959.9" cy="1010.2" r="3.7" fill="#ff6f80" fill-opacity="0.3" stroke="#ff6f80" stroke-opacity="0.6" stroke-width="2.4"/>
<circle cx="1984.8" cy="866.4" r="4.8" fill="#ff6f80" fill-opacity="0.3" stroke="#ff6f80" stroke-opacity="0.6" stroke-width="2.4"/>
<circle cx="1924.7" cy="1001.4" r="6.4" fill="#3fd3a0" fill-opacity="0.3" stroke="#3fd3a0" stroke-opacity="0.6" stroke-width="2.4"/>
<circle cx="1732.6" cy="1070.1" r="10.5" fill="#ff6f80" fill-opacity="0.13" stroke="#ff6f80" stroke-opacity="0.6" stroke-width="2.4"/>
<circle cx="1867.3" cy="952.8" r="3.2" fill="#ff6f80" fill-opacity="0.3" stroke="#ff6f80" stroke-opacity="0.6" stroke-width="2.4"/>
<circle cx="1798.9" cy="1170.8" r="2.4" fill="#ff6f80" fill-opacity="0.3" stroke="#ff6f80" stroke-opacity="0.6" stroke-width="2.4"/>
<circle cx="1904.6" cy="1028.6" r="3.4" fill="#3fd3a0" fill-opacity="0.3" stroke="#3fd3a0" stroke-opacity="0.6" stroke-width="2.4"/>
<circle cx="1906.4" cy="898.7" r="5.2" fill="#3fd3a0" fill-opacity="0.3" stroke="#3fd3a0" stroke-opacity="0.6" stroke-width="2.4"/>
<circle cx="1830.6" cy="969.2" r="3.2" fill="#ff6f80" fill-opacity="0.3" stroke="#ff6f80" stroke-opacity="0.6" stroke-width="2.4"/>
<circle cx="1913.5" cy="1056.0" r="5.5" fill="#ff6f80" fill-opacity="0.3" stroke="#ff6f80" stroke-opacity="0.6" stroke-width="2.4"/>
<circle cx="1867.4" cy="1069.0" r="4.5" fill="#3fd3a0" fill-opacity="0.3" stroke="#3fd3a0" stroke-opacity="0.6" stroke-width="2.4"/>
<circle cx="1905.2" cy="969.3" r="4.9" fill="#ff6f80" fill-opacity="0.3" stroke="#ff6f80" stroke-opacity="0.6" stroke-width="2.4"/>
<circle cx="1935.6" cy="1254.2" r="5.4" fill="#3fd3a0" fill-opacity="0.3" stroke="#3fd3a0" stroke-opacity="0.6" stroke-width="2.4"/>
<circle cx="1853.7" cy="1023.1" r="4.5" fill="#3fd3a0" fill-opacity="0.3" stroke="#3fd3a0" stroke-opacity="0.6" stroke-width="2.4"/>
<circle cx="1911.3" cy="1229.5" r="2.0" fill="#ff6f80" fill-opacity="0.3" stroke="#ff6f80" stroke-opacity="0.6" stroke-width="2.4"/>
<circle cx="1959.5" cy="957.2" r="3.7" fill="#ff6f80" fill-opacity="0.3" stroke="#ff6f80" stroke-opacity="0.6" stroke-width="2.4"/>
<circle cx="1910.6" cy="945.5" r="3.0" fill="#ff6f80" fill-opacity="0.3" stroke="#ff6f80" stroke-opacity="0.6" stroke-width="2.4"/>
<circle cx="1883.6" cy="800.0" r="3.2" fill="#3fd3a0" fill-opacity="0.3" stroke="#3fd3a0" stroke-opacity="0.6" stroke-width="2.4"/>
<circle cx="2000.4" cy="750.8" r="4.7" fill="#ff6f80" fill-opacity="0.3" stroke="#ff6f80" stroke-opacity="0.6" stroke-width="2.4"/>
<circle cx="1860.9" cy="969.6" r="4.7" fill="#ff6f80" fill-opacity="0.3" stroke="#ff6f80" stroke-opacity="0.6" stroke-width="2.4"/>
<circle cx="1976.0" cy="1135.0" r="2.2" fill="#ff6f80" fill-opacity="0.3" stroke="#ff6f80" stroke-opacity="0.6" stroke-width="2.4"/>
<circle cx="1937.7" cy="872.0" r="8.9" fill="#ff6f80" fill-opacity="0.3" stroke="#ff6f80" stroke-opacity="0.6" stroke-width="2.4"/>
<circle cx="1893.0" cy="940.4" r="4.1" fill="#ff6f80" fill-opacity="0.3" stroke="#ff6f80" stroke-opacity="0.6" stroke-width="2.4"/>
<circle cx="1973.7" cy="1223.1" r="5.3" fill="#3fd3a0" fill-opacity="0.3" stroke="#3fd3a0" stroke-opacity="0.6" stroke-width="2.4"/>
<circle cx="1968.6" cy="889.2" r="3.4" fill="#ff6f80" fill-opacity="0.3" stroke="#ff6f80" stroke-opacity="0.6" stroke-width="2.4"/>
<circle cx="1971.8" cy="1234.9" r="3.2" fill="#ff6f80" fill-opacity="0.3" stroke="#ff6f80" stroke-opacity="0.6" stroke-width="2.4"/>
<circle cx="1939.0" cy="1154.6" r="3.8" fill="#ff6f80" fill-opacity="0.3" stroke="#ff6f80" stroke-opacity="0.6" stroke-width="2.4"/>
<circle cx="1988.2" cy="839.9" r="5.7" fill="#ff6f80" fill-opacity="0.3" stroke="#ff6f80" stroke-opacity="0.6" stroke-width="2.4"/>
<circle cx="1934.8" cy="1281.3" r="2.8" fill="#ff6f80" fill-opacity="0.3" stroke="#ff6f80" stroke-opacity="0.6" stroke-width="2.4"/>
<circle cx="1894.4" cy="991.5" r="3.0" fill="#ff6f80" fill-opacity="0.3" stroke="#ff6f80" stroke-opacity="0.6" stroke-width="2.4"/>
<circle cx="1943.5" cy="1213.1" r="4.6" fill="#3fd3a0" fill-opacity="0.3" stroke="#3fd3a0" stroke-opacity="0.6" stroke-width="2.4"/>
<circle cx="1859.5" cy="991.7" r="3.0" fill="#ff6f80" fill-opacity="0.3" stroke="#ff6f80" stroke-opacity="0.6" stroke-width="2.4"/>
<circle cx="1770.9" cy="1081.2" r="3.1" fill="#ff6f80" fill-opacity="0.3" stroke="#ff6f80" stroke-opacity="0.6" stroke-width="2.4"/>
<circle cx="1894.3" cy="974.2" r="3.0" fill="#3fd3a0" fill-opacity="0.3" stroke="#3fd3a0" stroke-opacity="0.6" stroke-width="2.4"/>
<circle cx="1959.7" cy="1230.5" r="4.0" fill="#ff6f80" fill-opacity="0.3" stroke="#ff6f80" stroke-opacity="0.6" stroke-width="2.4"/>
<circle cx="1881.1" cy="1010.0" r="3.6" fill="#ff6f80" fill-opacity="0.3" stroke="#ff6f80" stroke-opacity="0.6" stroke-width="2.4"/>
<circle cx="1817.5" cy="904.1" r="4.2" fill="#ff6f80" fill-opacity="0.3" stroke="#ff6f80" stroke-opacity="0.6" stroke-width="2.4"/>
<circle cx="1917.6" cy="1288.4" r="2.1" fill="#3fd3a0" fill-opacity="0.3" stroke="#3fd3a0" stroke-opacity="0.6" stroke-width="2.4"/>
<circle cx="1903.5" cy="1282.6" r="2.0" fill="#3fd3a0" fill-opacity="0.3" stroke="#3fd3a0" stroke-opacity="0.6" stroke-width="2.4"/>
<circle cx="1960.4" cy="843.8" r="7.2" fill="#ff6f80" fill-opacity="0.3" stroke="#ff6f80" stroke-opacity="0.6" stroke-width="2.4"/>
<circle cx="1831.7" cy="988.2" r="6.9" fill="#3fd3a0" fill-opacity="0.3" stroke="#3fd3a0" stroke-opacity="0.6" stroke-width="2.4"/>
<circle cx="1997.7" cy="845.6" r="6.2" fill="#ff6f80" fill-opacity="0.3" stroke="#ff6f80" stroke-opacity="0.6" stroke-width="2.4"/>
<circle cx="1982.1" cy="835.7" r="3.0" fill="#ff6f80" fill-opacity="0.3" stroke="#ff6f80" stroke-opacity="0.6" stroke-width="2.4"/>
<circle cx="1834.4" cy="1167.3" r="2.0" fill="#3fd3a0" fill-opacity="0.3" stroke="#3fd3a0" stroke-opacity="0.6" stroke-width="2.4"/>
<circle cx="1906.4" cy="858.5" r="3.1" fill="#ff6f80" fill-opacity="0.3" stroke="#ff6f80" stroke-opacity="0.6" stroke-width="2.4"/>
<circle cx="1859.5" cy="1158.2" r="3.6" fill="#ff6f80" fill-opacity="0.3" stroke="#ff6f80" stroke-opacity="0.6" stroke-width="2.4"/>
<circle cx="1949.0" cy="1168.9" r="3.0" fill="#ff6f80" fill-opacity="0.3" stroke="#ff6f80" stroke-opacity="0.6" stroke-width="2.4"/>
<circle cx="1976.1" cy="1228.4" r="3.1" fill="#ff6f80" fill-opacity="0.3" stroke="#ff6f80" stroke-opacity="0.6" stroke-width="2.4"/>
<circle cx="1870.6" cy="1024.0" r="6.8" fill="#3fd3a0" fill-opacity="0.3" stroke="#3fd3a0" stroke-opacity="0.6" stroke-width="2.4"/>
<circle cx="1991.1" cy="715.3" r="2.0" fill="#ff6f80" fill-opacity="0.3" stroke="#ff6f80" stroke-opacity="0.6" stroke-width="2.4"/>
<circle cx="1900.1" cy="806.7" r="3.5" fill="#ff6f80" fill-opacity="0.3" stroke="#ff6f80" stroke-opacity="0.6" stroke-width="2.4"/>
<circle cx="1893.0" cy="949.8" r="3.0" fill="#ff6f80" fill-opacity="0.3" stroke="#ff6f80" stroke-opacity="0.6" stroke-width="2.4"/>
<circle cx="1932.1" cy="1291.1" r="2.3" fill="#ff6f80" fill-opacity="0.3" stroke="#ff6f80" stroke-opacity="0.6" stroke-width="2.4"/>
<circle cx="1839.9" cy="986.6" r="6.7" fill="#3fd3a0" fill-opacity="0.3" stroke="#3fd3a0" stroke-opacity="0.6" stroke-width="2.4"/>
<circle cx="1981.3" cy="836.4" r="3.1" fill="#ff6f80" fill-opacity="0.3" stroke="#ff6f80" stroke-opacity="0.6" stroke-width="2.4"/>
<circle cx="1803.6" cy="905.3" r="10.4" fill="#ff6f80" fill-opacity="0.13" stroke="#ff6f80" stroke-opacity="0.6" stroke-width="2.4"/>
<circle cx="1815.7" cy="1188.8" r="2.4" fill="#3fd3a0" fill-opacity="0.3" stroke="#3fd3a0" stroke-opacity="0.6" stroke-width="2.4"/>
<circle cx="2011.8" cy="1053.8" r="3.0" fill="#3fd3a0" fill-opacity="0.3" stroke="#3fd3a0" stroke-opacity="0.6" stroke-width="2.4"/>
<circle cx="1920.1" cy="841.6" r="3.7" fill="#ff6f80" fill-opacity="0.3" stroke="#ff6f80" stroke-opacity="0.6" stroke-width="2.4"/>
<circle cx="1984.9" cy="1080.8" r="3.1" fill="#3fd3a0" fill-opacity="0.3" stroke="#3fd3a0" stroke-opacity="0.6" stroke-width="2.4"/>
<circle cx="1864.3" cy="1156.1" r="2.0" fill="#3fd3a0" fill-opacity="0.3" stroke="#3fd3a0" stroke-opacity="0.6" stroke-width="2.4"/>
<circle cx="1828.1" cy="995.7" r="4.2" fill="#ff6f80" fill-opacity="0.3" stroke="#ff6f80" stroke-opacity="0.6" stroke-width="2.4"/>
<circle cx="1870.1" cy="944.4" r="3.1" fill="#ff6f80" fill-opacity="0.3" stroke="#ff6f80" stroke-opacity="0.6" stroke-width="2.4"/>
<circle cx="1902.9" cy="918.2" r="5.8" fill="#3fd3a0" fill-opacity="0.3" stroke="#3fd3a0" stroke-opacity="0.6" stroke-width="2.4"/>
<circle cx="1911.7" cy="1231.7" r="2.0" fill="#ff6f80" fill-opacity="0.3" stroke="#ff6f80" stroke-opacity="0.6" stroke-width="2.4"/>
<circle cx="1888.9" cy="984.1" r="3.1" fill="#ff6f80" fill-opacity="0.3" stroke="#ff6f80" stroke-opacity="0.6" stroke-width="2.4"/>
<circle cx="2015.3" cy="868.1" r="4.6" fill="#ff6f80" fill-opacity="0.3" stroke="#ff6f80" stroke-opacity="0.6" stroke-width="2.4"/>
<circle cx="1919.8" cy="1258.8" r="2.0" fill="#3fd3a0" fill-opacity="0.3" stroke="#3fd3a0" stroke-opacity="0.6" stroke-width="2.4"/>
<circle cx="1947.3" cy="1194.5" r="5.0" fill="#ff6f80" fill-opacity="0.3" stroke="#ff6f80" stroke-opacity="0.6" stroke-width="2.4"/>
<circle cx="1986.6" cy="840.7" r="4.2" fill="#ff6f80" fill-opacity="0.3" stroke="#ff6f80" stroke-opacity="0.6" stroke-width="2.4"/>
<circle cx="1965.4" cy="911.3" r="4.8" fill="#ff6f80" fill-opacity="0.3" stroke="#ff6f80" stroke-opacity="0.6" stroke-width="2.4"/>
<circle cx="1935.7" cy="1172.4" r="3.1" fill="#ff6f80" fill-opacity="0.3" stroke="#ff6f80" stroke-opacity="0.6" stroke-width="2.4"/>
<circle cx="1841.8" cy="1094.3" r="2.2" fill="#ff6f80" fill-opacity="0.3" stroke="#ff6f80" stroke-opacity="0.6" stroke-width="2.4"/>
<circle cx="1938.2" cy="1168.6" r="4.6" fill="#ff6f80" fill-opacity="0.3" stroke="#ff6f80" stroke-opacity="0.6" stroke-width="2.4"/>
<circle cx="1913.4" cy="862.6" r="3.0" fill="#3fd3a0" fill-opacity="0.3" stroke="#3fd3a0" stroke-opacity="0.6" stroke-width="2.4"/>
<circle cx="1776.1" cy="1083.4" r="3.0" fill="#3fd3a0" fill-opacity="0.3" stroke="#3fd3a0" stroke-opacity="0.6" stroke-width="2.4"/>
<circle cx="1828.5" cy="1112.9" r="2.2" fill="#3fd3a0" fill-opacity="0.3" stroke="#3fd3a0" stroke-opacity="0.6" stroke-width="2.4"/>
<circle cx="1767.1" cy="1070.2" r="3.0" fill="#ff6f80" fill-opacity="0.3" stroke="#ff6f80" stroke-opacity="0.6" stroke-width="2.4"/>
<circle cx="1984.7" cy="705.5" r="3.5" fill="#ff6f80" fill-opacity="0.3" stroke="#ff6f80" stroke-opacity="0.6" stroke-width="2.4"/>
<circle cx="1868.7" cy="1045.1" r="4.3" fill="#ff6f80" fill-opacity="0.3" stroke="#ff6f80" stroke-opacity="0.6" stroke-width="2.4"/>
<circle cx="1894.1" cy="986.9" r="3.0" fill="#3fd3a0" fill-opacity="0.3" stroke="#3fd3a0" stroke-opacity="0.6" stroke-width="2.4"/>
<circle cx="1812.4" cy="871.0" r="3.0" fill="#3fd3a0" fill-opacity="0.3" stroke="#3fd3a0" stroke-opacity="0.6" stroke-width="2.4"/>
<circle cx="1759.2" cy="1065.4" r="5.7" fill="#3fd3a0" fill-opacity="0.3" stroke="#3fd3a0" stroke-opacity="0.6" stroke-width="2.4"/>
<circle cx="1795.2" cy="1136.5" r="2.0" fill="#ff6f80" fill-opacity="0.3" stroke="#ff6f80" stroke-opacity="0.6" stroke-width="2.4"/>
<circle cx="1852.7" cy="1152.0" r="2.1" fill="#ff6f80" fill-opacity="0.3" stroke="#ff6f80" stroke-opacity="0.6" stroke-width="2.4"/>
<circle cx="1784.7" cy="1143.2" r="2.2" fill="#ff6f80" fill-opacity="0.3" stroke="#ff6f80" stroke-opacity="0.6" stroke-width="2.4"/>
<circle cx="1997.8" cy="1064.3" r="3.9" fill="#3fd3a0" fill-opacity="0.3" stroke="#3fd3a0" stroke-opacity="0.6" stroke-width="2.4"/>
<circle cx="1921.1" cy="1280.3" r="2.2" fill="#3fd3a0" fill-opacity="0.3" stroke="#3fd3a0" stroke-opacity="0.6" stroke-width="2.4"/>
<circle cx="1962.5" cy="1217.4" r="3.5" fill="#ff6f80" fill-opacity="0.3" stroke="#ff6f80" stroke-opacity="0.6" stroke-width="2.4"/>
<circle cx="1922.8" cy="814.9" r="3.0" fill="#ff6f80" fill-opacity="0.3" stroke="#ff6f80" stroke-opacity="0.6" stroke-width="2.4"/>
<circle cx="1892.9" cy="978.8" r="4.6" fill="#3fd3a0" fill-opacity="0.3" stroke="#3fd3a0" stroke-opacity="0.6" stroke-width="2.4"/>
<circle cx="1814.3" cy="1075.1" r="9.3" fill="#3fd3a0" fill-opacity="0.3" stroke="#3fd3a0" stroke-opacity="0.6" stroke-width="2.4"/>
<circle cx="1876.9" cy="1041.6" r="3.2" fill="#ff6f80" fill-opacity="0.3" stroke="#ff6f80" stroke-opacity="0.6" stroke-width="2.4"/>
<circle cx="1946.5" cy="995.9" r="3.1" fill="#ff6f80" fill-opacity="0.3" stroke="#ff6f80" stroke-opacity="0.6" stroke-width="2.4"/>
<circle cx="1976.8" cy="872.3" r="3.6" fill="#ff6f80" fill-opacity="0.3" stroke="#ff6f80" stroke-opacity="0.6" stroke-width="2.4"/>
<circle cx="1889.4" cy="963.3" r="3.0" fill="#3fd3a0" fill-opacity="0.3" stroke="#3fd3a0" stroke-opacity="0.6" stroke-width="2.4"/>
<circle cx="1866.6" cy="993.4" r="3.5" fill="#ff6f80" fill-opacity="0.3" stroke="#ff6f80" stroke-opacity="0.6" stroke-width="2.4"/>
<circle cx="1905.1" cy="1279.7" r="2.0" fill="#3fd3a0" fill-opacity="0.3" stroke="#3fd3a0" stroke-opacity="0.6" stroke-width="2.4"/>
<circle cx="1944.4" cy="1208.1" r="3.3" fill="#ff6f80" fill-opacity="0.3" stroke="#ff6f80" stroke-opacity="0.6" stroke-width="2.4"/>
<circle cx="2019.0" cy="1070.3" r="2.0" fill="#ff6f80" fill-opacity="0.3" stroke="#ff6f80" stroke-opacity="0.6" stroke-width="2.4"/>
<circle cx="1914.8" cy="947.6" r="3.8" fill="#3fd3a0" fill-opacity="0.3" stroke="#3fd3a0" stroke-opacity="0.6" stroke-width="2.4"/>
<circle cx="1921.2" cy="858.3" r="4.6" fill="#ff6f80" fill-opacity="0.3" stroke="#ff6f80" stroke-opacity="0.6" stroke-width="2.4"/>
<circle cx="1898.0" cy="830.4" r="3.2" fill="#ff6f80" fill-opacity="0.3" stroke="#ff6f80" stroke-opacity="0.6" stroke-width="2.4"/>
<circle cx="1891.1" cy="843.4" r="8.1" fill="#3fd3a0" fill-opacity="0.3" stroke="#3fd3a0" stroke-opacity="0.6" stroke-width="2.4"/>
<circle cx="1945.5" cy="1205.1" r="3.5" fill="#ff6f80" fill-opacity="0.3" stroke="#ff6f80" stroke-opacity="0.6" stroke-width="2.4"/>
<circle cx="1947.5" cy="885.5" r="4.2" fill="#ff6f80" fill-opacity="0.3" stroke="#ff6f80" stroke-opacity="0.6" stroke-width="2.4"/>
<circle cx="1814.3" cy="980.6" r="5.4" fill="#ff6f80" fill-opacity="0.3" stroke="#ff6f80" stroke-opacity="0.6" stroke-width="2.4"/>
<circle cx="1999.6" cy="858.5" r="3.5" fill="#ff6f80" fill-opacity="0.3" stroke="#ff6f80" stroke-opacity="0.6" stroke-width="2.4"/>
<circle cx="2002.6" cy="810.4" r="7.2" fill="#ff6f80" fill-opacity="0.3" stroke="#ff6f80" stroke-opacity="0.6" stroke-width="2.4"/>
<circle cx="1957.8" cy="1229.0" r="5.5" fill="#ff6f80" fill-opacity="0.3" stroke="#ff6f80" stroke-opacity="0.6" stroke-width="2.4"/>
<circle cx="1934.0" cy="888.7" r="3.1" fill="#3fd3a0" fill-opacity="0.3" stroke="#3fd3a0" stroke-opacity="0.6" stroke-width="2.4"/>
<circle cx="1972.9" cy="836.1" r="3.0" fill="#ff6f80" fill-opacity="0.3" stroke="#ff6f80" stroke-opacity="0.6" stroke-width="2.4"/>
<circle cx="1893.1" cy="917.0" r="3.0" fill="#3fd3a0" fill-opacity="0.3" stroke="#3fd3a0" stroke-opacity="0.6" stroke-width="2.4"/>
<circle cx="1808.9" cy="1166.0" r="2.0" fill="#3fd3a0" fill-opacity="0.3" stroke="#3fd3a0" stroke-opacity="0.6" stroke-width="2.4"/>
<circle cx="1854.1" cy="1019.4" r="3.7" fill="#ff6f80" fill-opacity="0.3" stroke="#ff6f80" stroke-opacity="0.6" stroke-width="2.4"/>
<circle cx="1909.8" cy="863.1" r="3.7" fill="#ff6f80" fill-opacity="0.3" stroke="#ff6f80" stroke-opacity="0.6" stroke-width="2.4"/>
<circle cx="2008.3" cy="1082.0" r="6.2" fill="#ff6f80" fill-opacity="0.3" stroke="#ff6f80" stroke-opacity="0.6" stroke-width="2.4"/>
<circle cx="1869.7" cy="1179.9" r="2.0" fill="#ff6f80" fill-opacity="0.3" stroke="#ff6f80" stroke-opacity="0.6" stroke-width="2.4"/>
<circle cx="1820.0" cy="933.1" r="9.9" fill="#ff6f80" fill-opacity="0.3" stroke="#ff6f80" stroke-opacity="0.6" stroke-width="2.4"/>
<circle cx="1928.9" cy="1151.9" r="3.2" fill="#3fd3a0" fill-opacity="0.3" stroke="#3fd3a0" stroke-opacity="0.6" stroke-width="2.4"/>
<circle cx="1959.0" cy="1241.3" r="3.1" fill="#ff6f80" fill-opacity="0.3" stroke="#ff6f80" stroke-opacity="0.6" stroke-width="2.4"/>
<circle cx="1878.8" cy="1209.7" r="5.4" fill="#3fd3a0" fill-opacity="0.3" stroke="#3fd3a0" stroke-opacity="0.6" stroke-width="2.4"/>
<circle cx="1744.1" cy="1069.6" r="3.2" fill="#ff6f80" fill-opacity="0.3" stroke="#ff6f80" stroke-opacity="0.6" stroke-width="2.4"/>
<circle cx="1906.6" cy="875.8" r="3.2" fill="#ff6f80" fill-opacity="0.3" stroke="#ff6f80" stroke-opacity="0.6" stroke-width="2.4"/>
<circle cx="1804.1" cy="937.9" r="7.2" fill="#ff6f80" fill-opacity="0.3" stroke="#ff6f80" stroke-opacity="0.6" stroke-width="2.4"/>
<circle cx="1837.2" cy="829.2" r="3.0" fill="#ff6f80" fill-opacity="0.3" stroke="#ff6f80" stroke-opacity="0.6" stroke-width="2.4"/>
<circle cx="1894.8" cy="1010.0" r="4.3" fill="#3fd3a0" fill-opacity="0.3" stroke="#3fd3a0" stroke-opacity="0.6" stroke-width="2.4"/>
<circle cx="1935.6" cy="1143.5" r="3.1" fill="#ff6f80" fill-opacity="0.3" stroke="#ff6f80" stroke-opacity="0.6" stroke-width="2.4"/>
<circle cx="1828.1" cy="1049.2" r="7.7" fill="#ff6f80" fill-opacity="0.3" stroke="#ff6f80" stroke-opacity="0.6" stroke-width="2.4"/>
<circle cx="1819.6" cy="983.3" r="3.3" fill="#ff6f80" fill-opacity="0.3" stroke="#ff6f80" stroke-opacity="0.6" stroke-width="2.4"/>
<circle cx="1966.7" cy="826.2" r="5.0" fill="#ff6f80" fill-opacity="0.3" stroke="#ff6f80" stroke-opacity="0.6" stroke-width="2.4"/>
<circle cx="2001.4" cy="795.5" r="5.3" fill="#ff6f80" fill-opacity="0.3" stroke="#ff6f80" stroke-opacity="0.6" stroke-width="2.4"/>
<circle cx="1828.7" cy="1008.0" r="4.3" fill="#ff6f80" fill-opacity="0.3" stroke="#ff6f80" stroke-opacity="0.6" stroke-width="2.4"/>
<circle cx="1874.1" cy="1060.2" r="3.0" fill="#ff6f80" fill-opacity="0.3" stroke="#ff6f80" stroke-opacity="0.6" stroke-width="2.4"/>
<circle cx="1812.4" cy="1016.2" r="3.8" fill="#ff6f80" fill-opacity="0.3" stroke="#ff6f80" stroke-opacity="0.6" stroke-width="2.4"/>
<circle cx="1932.6" cy="945.6" r="3.0" fill="#ff6f80" fill-opacity="0.3" stroke="#ff6f80" stroke-opacity="0.6" stroke-width="2.4"/>
<circle cx="1816.2" cy="1003.0" r="3.2" fill="#ff6f80" fill-opacity="0.3" stroke="#ff6f80" stroke-opacity="0.6" stroke-width="2.4"/>
<circle cx="1940.8" cy="883.8" r="3.1" fill="#ff6f80" fill-opacity="0.3" stroke="#ff6f80" stroke-opacity="0.6" stroke-width="2.4"/>
<circle cx="1754.7" cy="1051.4" r="3.0" fill="#ff6f80" fill-opacity="0.3" stroke="#ff6f80" stroke-opacity="0.6" stroke-width="2.4"/>
<circle cx="1941.4" cy="1193.7" r="3.3" fill="#ff6f80" fill-opacity="0.3" stroke="#ff6f80" stroke-opacity="0.6" stroke-width="2.4"/>
<circle cx="1973.1" cy="857.3" r="5.5" fill="#ff6f80" fill-opacity="0.3" stroke="#ff6f80" stroke-opacity="0.6" stroke-width="2.4"/>
<circle cx="1813.8" cy="953.5" r="4.9" fill="#ff6f80" fill-opacity="0.3" stroke="#ff6f80" stroke-opacity="0.6" stroke-width="2.4"/>
<circle cx="1880.3" cy="1092.1" r="4.0" fill="#3fd3a0" fill-opacity="0.3" stroke="#3fd3a0" stroke-opacity="0.6" stroke-width="2.4"/>
<circle cx="1946.5" cy="873.2" r="6.5" fill="#3fd3a0" fill-opacity="0.3" stroke="#3fd3a0" stroke-opacity="0.6" stroke-width="2.4"/>
<circle cx="1881.0" cy="985.9" r="3.1" fill="#3fd3a0" fill-opacity="0.3" stroke="#3fd3a0" stroke-opacity="0.6" stroke-width="2.4"/>
<circle cx="1932.9" cy="1279.8" r="3.3" fill="#3fd3a0" fill-opacity="0.3" stroke="#3fd3a0" stroke-opacity="0.6" stroke-width="2.4"/>
<circle cx="1842.7" cy="1144.2" r="5.0" fill="#3fd3a0" fill-opacity="0.3" stroke="#3fd3a0" stroke-opacity="0.6" stroke-width="2.4"/>
<circle cx="1944.9" cy="1195.3" r="3.6" fill="#ff6f80" fill-opacity="0.3" stroke="#ff6f80" stroke-opacity="0.6" stroke-width="2.4"/>
<circle cx="1939.4" cy="1189.8" r="3.2" fill="#ff6f80" fill-opacity="0.3" stroke="#ff6f80" stroke-opacity="0.6" stroke-width="2.4"/>
<circle cx="1900.0" cy="995.2" r="3.6" fill="#3fd3a0" fill-opacity="0.3" stroke="#3fd3a0" stroke-opacity="0.6" stroke-width="2.4"/>
<circle cx="2004.4" cy="1032.1" r="3.3" fill="#3fd3a0" fill-opacity="0.3" stroke="#3fd3a0" stroke-opacity="0.6" stroke-width="2.4"/>
<circle cx="1893.9" cy="956.2" r="7.5" fill="#3fd3a0" fill-opacity="0.3" stroke="#3fd3a0" stroke-opacity="0.6" stroke-width="2.4"/>
<circle cx="1965.4" cy="1118.6" r="5.1" fill="#ff6f80" fill-opacity="0.3" stroke="#ff6f80" stroke-opacity="0.6" stroke-width="2.4"/>
<circle cx="1991.2" cy="804.2" r="6.5" fill="#ff6f80" fill-opacity="0.3" stroke="#ff6f80" stroke-opacity="0.6" stroke-width="2.4"/>
<circle cx="1970.7" cy="802.8" r="7.8" fill="#ff6f80" fill-opacity="0.3" stroke="#ff6f80" stroke-opacity="0.6" stroke-width="2.4"/>
<circle cx="1981.7" cy="838.9" r="3.0" fill="#ff6f80" fill-opacity="0.3" stroke="#ff6f80" stroke-opacity="0.6" stroke-width="2.4"/>
<circle cx="1922.2" cy="1143.8" r="3.6" fill="#ff6f80" fill-opacity="0.3" stroke="#ff6f80" stroke-opacity="0.6" stroke-width="2.4"/>
<circle cx="1960.9" cy="1217.1" r="3.2" fill="#ff6f80" fill-opacity="0.3" stroke="#ff6f80" stroke-opacity="0.6" stroke-width="2.4"/>
<circle cx="1993.0" cy="841.0" r="3.3" fill="#ff6f80" fill-opacity="0.3" stroke="#ff6f80" stroke-opacity="0.6" stroke-width="2.4"/>
<circle cx="1967.9" cy="1067.4" r="4.1" fill="#3fd3a0" fill-opacity="0.3" stroke="#3fd3a0" stroke-opacity="0.6" stroke-width="2.4"/>
<circle cx="1822.1" cy="948.4" r="3.3" fill="#ff6f80" fill-opacity="0.3" stroke="#ff6f80" stroke-opacity="0.6" stroke-width="2.4"/>
<circle cx="1820.1" cy="995.3" r="8.3" fill="#ff6f80" fill-opacity="0.3" stroke="#ff6f80" stroke-opacity="0.6" stroke-width="2.4"/>
<circle cx="1815.1" cy="1167.6" r="3.2" fill="#ff6f80" fill-opacity="0.3" stroke="#ff6f80" stroke-opacity="0.6" stroke-width="2.4"/>
<circle cx="1822.4" cy="1076.0" r="3.4" fill="#ff6f80" fill-opacity="0.3" stroke="#ff6f80" stroke-opacity="0.6" stroke-width="2.4"/>
<circle cx="1871.1" cy="1141.0" r="2.2" fill="#ff6f80" fill-opacity="0.3" stroke="#ff6f80" stroke-opacity="0.6" stroke-width="2.4"/>
<circle cx="1890.0" cy="1178.9" r="4.5" fill="#ff6f80" fill-opacity="0.3" stroke="#ff6f80" stroke-opacity="0.6" stroke-width="2.4"/>
<circle cx="1930.3" cy="1178.3" r="3.0" fill="#ff6f80" fill-opacity="0.3" stroke="#ff6f80" stroke-opacity="0.6" stroke-width="2.4"/>
<circle cx="1873.7" cy="917.6" r="6.2" fill="#ff6f80" fill-opacity="0.3" stroke="#ff6f80" stroke-opacity="0.6" stroke-width="2.4"/>
<circle cx="1993.3" cy="1053.5" r="5.9" fill="#ff6f80" fill-opacity="0.3" stroke="#ff6f80" stroke-opacity="0.6" stroke-width="2.4"/>
<circle cx="1793.9" cy="1017.5" r="3.0" fill="#ff6f80" fill-opacity="0.3" stroke="#ff6f80" stroke-opacity="0.6" stroke-width="2.4"/>
<circle cx="1897.7" cy="974.2" r="5.6" fill="#3fd3a0" fill-opacity="0.3" stroke="#3fd3a0" stroke-opacity="0.6" stroke-width="2.4"/>
<circle cx="1873.5" cy="1233.9" r="2.2" fill="#ff6f80" fill-opacity="0.3" stroke="#ff6f80" stroke-opacity="0.6" stroke-width="2.4"/>
<circle cx="1796.7" cy="928.5" r="10.0" fill="#ff6f80" fill-opacity="0.3" stroke="#ff6f80" stroke-opacity="0.6" stroke-width="2.4"/>
<circle cx="1936.6" cy="891.9" r="3.1" fill="#3fd3a0" fill-opacity="0.3" stroke="#3fd3a0" stroke-opacity="0.6" stroke-width="2.4"/>
<circle cx="1998.4" cy="754.4" r="2.0" fill="#ff6f80" fill-opacity="0.3" stroke="#ff6f80" stroke-opacity="0.6" stroke-width="2.4"/>
<circle cx="2004.3" cy="911.9" r="3.0" fill="#ff6f80" fill-opacity="0.3" stroke="#ff6f80" stroke-opacity="0.6" stroke-width="2.4"/>
<circle cx="1901.4" cy="795.8" r="5.4" fill="#ff6f80" fill-opacity="0.3" stroke="#ff6f80" stroke-opacity="0.6" stroke-width="2.4"/>
<circle cx="1992.7" cy="1106.4" r="2.0" fill="#ff6f80" fill-opacity="0.3" stroke="#ff6f80" stroke-opacity="0.6" stroke-width="2.4"/>
<circle cx="1815.9" cy="971.3" r="11.0" fill="#ff6f80" fill-opacity="0.13" stroke="#ff6f80" stroke-opacity="0.6" stroke-width="2.4"/>
<circle cx="1966.4" cy="1096.5" r="5.1" fill="#ff6f80" fill-opacity="0.3" stroke="#ff6f80" stroke-opacity="0.6" stroke-width="2.4"/>
<circle cx="1924.2" cy="866.1" r="3.0" fill="#3fd3a0" fill-opacity="0.3" stroke="#3fd3a0" stroke-opacity="0.6" stroke-width="2.4"/>
<circle cx="1810.8" cy="961.0" r="3.1" fill="#ff6f80" fill-opacity="0.3" stroke="#ff6f80" stroke-opacity="0.6" stroke-width="2.4"/>
<circle cx="1960.9" cy="1226.0" r="6.4" fill="#3fd3a0" fill-opacity="0.3" stroke="#3fd3a0" stroke-opacity="0.6" stroke-width="2.4"/>
<circle cx="1852.4" cy="942.2" r="3.9" fill="#ff6f80" fill-opacity="0.3" stroke="#ff6f80" stroke-opacity="0.6" stroke-width="2.4"/>
<circle cx="1809.1" cy="965.8" r="3.9" fill="#ff6f80" fill-opacity="0.3" stroke="#ff6f80" stroke-opacity="0.6" stroke-width="2.4"/>
<circle cx="1874.4" cy="992.9" r="4.5" fill="#ff6f80" fill-opacity="0.3" stroke="#ff6f80" stroke-opacity="0.6" stroke-width="2.4"/>
<circle cx="1993.0" cy="849.4" r="3.1" fill="#ff6f80" fill-opacity="0.3" stroke="#ff6f80" stroke-opacity="0.6" stroke-width="2.4"/>
<circle cx="1984.3" cy="911.7" r="5.0" fill="#ff6f80" fill-opacity="0.3" stroke="#ff6f80" stroke-opacity="0.6" stroke-width="2.4"/>
<circle cx="1806.2" cy="993.2" r="3.1" fill="#ff6f80" fill-opacity="0.3" stroke="#ff6f80" stroke-opacity="0.6" stroke-width="2.4"/>
<circle cx="1998.1" cy="858.4" r="3.2" fill="#ff6f80" fill-opacity="0.3" stroke="#ff6f80" stroke-opacity="0.6" stroke-width="2.4"/>
<circle cx="1799.5" cy="1001.7" r="4.0" fill="#ff6f80" fill-opacity="0.3" stroke="#ff6f80" stroke-opacity="0.6" stroke-width="2.4"/>
<circle cx="1816.5" cy="1061.1" r="3.3" fill="#ff6f80" fill-opacity="0.3" stroke="#ff6f80" stroke-opacity="0.6" stroke-width="2.4"/>
<circle cx="1814.4" cy="966.6" r="3.3" fill="#ff6f80" fill-opacity="0.3" stroke="#ff6f80" stroke-opacity="0.6" stroke-width="2.4"/>
<circle cx="1819.9" cy="967.0" r="5.5" fill="#ff6f80" fill-opacity="0.3" stroke="#ff6f80" stroke-opacity="0.6" stroke-width="2.4"/>
<circle cx="1859.8" cy="1028.5" r="3.1" fill="#ff6f80" fill-opacity="0.3" stroke="#ff6f80" stroke-opacity="0.6" stroke-width="2.4"/>
<circle cx="1845.9" cy="1067.7" r="7.3" fill="#ff6f80" fill-opacity="0.3" stroke="#ff6f80" stroke-opacity="0.6" stroke-width="2.4"/>
<circle cx="1823.0" cy="1182.7" r="4.4" fill="#ff6f80" fill-opacity="0.3" stroke="#ff6f80" stroke-opacity="0.6" stroke-width="2.4"/>
<circle cx="1795.8" cy="1053.2" r="6.1" fill="#ff6f80" fill-opacity="0.3" stroke="#ff6f80" stroke-opacity="0.6" stroke-width="2.4"/>
<circle cx="1992.9" cy="828.9" r="4.0" fill="#ff6f80" fill-opacity="0.3" stroke="#ff6f80" stroke-opacity="0.6" stroke-width="2.4"/>
<circle cx="1789.5" cy="1102.2" r="4.4" fill="#ff6f80" fill-opacity="0.3" stroke="#ff6f80" stroke-opacity="0.6" stroke-width="2.4"/>
<circle cx="1759.3" cy="1064.6" r="5.1" fill="#3fd3a0" fill-opacity="0.3" stroke="#3fd3a0" stroke-opacity="0.6" stroke-width="2.4"/>
<circle cx="1825.3" cy="1059.3" r="3.0" fill="#ff6f80" fill-opacity="0.3" stroke="#ff6f80" stroke-opacity="0.6" stroke-width="2.4"/>
<circle cx="2001.9" cy="806.0" r="2.1" fill="#ff6f80" fill-opacity="0.3" stroke="#ff6f80" stroke-opacity="0.6" stroke-width="2.4"/>
<circle cx="1975.7" cy="907.7" r="3.1" fill="#ff6f80" fill-opacity="0.3" stroke="#ff6f80" stroke-opacity="0.6" stroke-width="2.4"/>
<circle cx="1829.4" cy="1068.6" r="3.0" fill="#ff6f80" fill-opacity="0.3" stroke="#ff6f80" stroke-opacity="0.6" stroke-width="2.4"/>
<circle cx="1811.9" cy="1047.6" r="9.0" fill="#ff6f80" fill-opacity="0.3" stroke="#ff6f80" stroke-opacity="0.6" stroke-width="2.4"/>
<circle cx="1960.1" cy="1243.5" r="4.0" fill="#ff6f80" fill-opacity="0.3" stroke="#ff6f80" stroke-opacity="0.6" stroke-width="2.4"/>
<circle cx="1953.2" cy="834.7" r="7.6" fill="#3fd3a0" fill-opacity="0.3" stroke="#3fd3a0" stroke-opacity="0.6" stroke-width="2.4"/>
<circle cx="1814.5" cy="1039.2" r="3.3" fill="#ff6f80" fill-opacity="0.3" stroke="#ff6f80" stroke-opacity="0.6" stroke-width="2.4"/>
<circle cx="1774.8" cy="1080.4" r="8.4" fill="#ff6f80" fill-opacity="0.3" stroke="#ff6f80" stroke-opacity="0.6" stroke-width="2.4"/>
<circle cx="1975.0" cy="801.4" r="3.2" fill="#ff6f80" fill-opacity="0.3" stroke="#ff6f80" stroke-opacity="0.6" stroke-width="2.4"/>
<circle cx="1876.0" cy="935.7" r="4.2" fill="#ff6f80" fill-opacity="0.3" stroke="#ff6f80" stroke-opacity="0.6" stroke-width="2.4"/>
<circle cx="1831.7" cy="1041.1" r="3.5" fill="#ff6f80" fill-opacity="0.3" stroke="#ff6f80" stroke-opacity="0.6" stroke-width="2.4"/>
<circle cx="1931.1" cy="1169.9" r="7.0" fill="#ff6f80" fill-opacity="0.3" stroke="#ff6f80" stroke-opacity="0.6" stroke-width="2.4"/>
<circle cx="1758.1" cy="1083.0" r="4.6" fill="#3fd3a0" fill-opacity="0.3" stroke="#3fd3a0" stroke-opacity="0.6" stroke-width="2.4"/>
<circle cx="1936.7" cy="1224.0" r="6.7" fill="#ff6f80" fill-opacity="0.3" stroke="#ff6f80" stroke-opacity="0.6" stroke-width="2.4"/>
<circle cx="1833.6" cy="963.0" r="10.9" fill="#ff6f80" fill-opacity="0.13" stroke="#ff6f80" stroke-opacity="0.6" stroke-width="2.4"/>
<circle cx="1999.9" cy="881.7" r="7.0" fill="#ff6f80" fill-opacity="0.3" stroke="#ff6f80" stroke-opacity="0.6" stroke-width="2.4"/>
<circle cx="1974.9" cy="846.3" r="4.3" fill="#ff6f80" fill-opacity="0.3" stroke="#ff6f80" stroke-opacity="0.6" stroke-width="2.4"/>
<circle cx="1916.4" cy="995.4" r="3.1" fill="#3fd3a0" fill-opacity="0.3" stroke="#3fd3a0" stroke-opacity="0.6" stroke-width="2.4"/>
<circle cx="1810.2" cy="902.0" r="4.2" fill="#ff6f80" fill-opacity="0.3" stroke="#ff6f80" stroke-opacity="0.6" stroke-width="2.4"/>
<circle cx="1923.3" cy="1291.5" r="3.7" fill="#3fd3a0" fill-opacity="0.3" stroke="#3fd3a0" stroke-opacity="0.6" stroke-width="2.4"/>
<circle cx="1963.3" cy="879.6" r="9.7" fill="#ff6f80" fill-opacity="0.3" stroke="#ff6f80" stroke-opacity="0.6" stroke-width="2.4"/>
<circle cx="1931.2" cy="1165.1" r="4.6" fill="#ff6f80" fill-opacity="0.3" stroke="#ff6f80" stroke-opacity="0.6" stroke-width="2.4"/>
<circle cx="1808.2" cy="929.1" r="3.0" fill="#ff6f80" fill-opacity="0.3" stroke="#ff6f80" stroke-opacity="0.6" stroke-width="2.4"/>
<circle cx="1800.6" cy="1055.6" r="3.0" fill="#3fd3a0" fill-opacity="0.3" stroke="#3fd3a0" stroke-opacity="0.6" stroke-width="2.4"/>
<circle cx="1844.7" cy="1136.1" r="2.2" fill="#3fd3a0" fill-opacity="0.3" stroke="#3fd3a0" stroke-opacity="0.6" stroke-width="2.4"/>
<circle cx="1814.4" cy="935.9" r="3.4" fill="#ff6f80" fill-opacity="0.3" stroke="#ff6f80" stroke-opacity="0.6" stroke-width="2.4"/>
<circle cx="2009.1" cy="1046.8" r="2.5" fill="#3fd3a0" fill-opacity="0.3" stroke="#3fd3a0" stroke-opacity="0.6" stroke-width="2.4"/>
<circle cx="1901.9" cy="1286.2" r="4.6" fill="#3fd3a0" fill-opacity="0.3" stroke="#3fd3a0" stroke-opacity="0.6" stroke-width="2.4"/>
<circle cx="1894.8" cy="923.1" r="3.8" fill="#ff6f80" fill-opacity="0.3" stroke="#ff6f80" stroke-opacity="0.6" stroke-width="2.4"/>
<circle cx="1954.2" cy="1183.8" r="4.0" fill="#3fd3a0" fill-opacity="0.3" stroke="#3fd3a0" stroke-opacity="0.6" stroke-width="2.4"/>
<circle cx="1815.9" cy="980.5" r="3.4" fill="#ff6f80" fill-opacity="0.3" stroke="#ff6f80" stroke-opacity="0.6" stroke-width="2.4"/>
<circle cx="1801.2" cy="1161.8" r="2.0" fill="#3fd3a0" fill-opacity="0.3" stroke="#3fd3a0" stroke-opacity="0.6" stroke-width="2.4"/>
<circle cx="1914.9" cy="1267.5" r="2.2" fill="#ff6f80" fill-opacity="0.3" stroke="#ff6f80" stroke-opacity="0.6" stroke-width="2.4"/>
<circle cx="1734.7" cy="1059.2" r="7.8" fill="#3fd3a0" fill-opacity="0.3" stroke="#3fd3a0" stroke-opacity="0.6" stroke-width="2.4"/>
<circle cx="1929.7" cy="856.3" r="7.7" fill="#ff6f80" fill-opacity="0.3" stroke="#ff6f80" stroke-opacity="0.6" stroke-width="2.4"/>
<circle cx="1986.0" cy="846.1" r="3.1" fill="#ff6f80" fill-opacity="0.3" stroke="#ff6f80" stroke-opacity="0.6" stroke-width="2.4"/>
<circle cx="1849.2" cy="874.0" r="3.1" fill="#ff6f80" fill-opacity="0.3" stroke="#ff6f80" stroke-opacity="0.6" stroke-width="2.4"/>
<circle cx="1901.3" cy="1017.6" r="4.1" fill="#3fd3a0" fill-opacity="0.3" stroke="#3fd3a0" stroke-opacity="0.6" stroke-width="2.4"/>
<circle cx="1926.3" cy="1102.7" r="2.2" fill="#3fd3a0" fill-opacity="0.3" stroke="#3fd3a0" stroke-opacity="0.6" stroke-width="2.4"/>
<circle cx="1816.2" cy="934.9" r="3.0" fill="#ff6f80" fill-opacity="0.3" stroke="#ff6f80" stroke-opacity="0.6" stroke-width="2.4"/>
<circle cx="1933.3" cy="1163.6" r="6.8" fill="#ff6f80" fill-opacity="0.3" stroke="#ff6f80" stroke-opacity="0.6" stroke-width="2.4"/>
<circle cx="1955.0" cy="1226.5" r="3.2" fill="#ff6f80" fill-opacity="0.3" stroke="#ff6f80" stroke-opacity="0.6" stroke-width="2.4"/>
<circle cx="1785.1" cy="1139.5" r="2.1" fill="#ff6f80" fill-opacity="0.3" stroke="#ff6f80" stroke-opacity="0.6" stroke-width="2.4"/>
<circle cx="1818.3" cy="1047.9" r="7.5" fill="#ff6f80" fill-opacity="0.3" stroke="#ff6f80" stroke-opacity="0.6" stroke-width="2.4"/>
<circle cx="2003.5" cy="855.9" r="3.0" fill="#ff6f80" fill-opacity="0.3" stroke="#ff6f80" stroke-opacity="0.6" stroke-width="2.4"/>
<circle cx="1967.9" cy="1019.9" r="5.7" fill="#3fd3a0" fill-opacity="0.3" stroke="#3fd3a0" stroke-opacity="0.6" stroke-width="2.4"/>
<circle cx="1965.6" cy="1095.2" r="3.1" fill="#ff6f80" fill-opacity="0.3" stroke="#ff6f80" stroke-opacity="0.6" stroke-width="2.4"/>
<circle cx="1860.7" cy="1054.7" r="4.2" fill="#3fd3a0" fill-opacity="0.3" stroke="#3fd3a0" stroke-opacity="0.6" stroke-width="2.4"/>
<circle cx="1948.7" cy="901.8" r="4.5" fill="#ff6f80" fill-opacity="0.3" stroke="#ff6f80" stroke-opacity="0.6" stroke-width="2.4"/>
<circle cx="2005.2" cy="859.9" r="3.0" fill="#ff6f80" fill-opacity="0.3" stroke="#ff6f80" stroke-opacity="0.6" stroke-width="2.4"/>
<circle cx="1881.6" cy="992.4" r="4.1" fill="#3fd3a0" fill-opacity="0.3" stroke="#3fd3a0" stroke-opacity="0.6" stroke-width="2.4"/>
<circle cx="1961.8" cy="1238.2" r="4.4" fill="#ff6f80" fill-opacity="0.3" stroke="#ff6f80" stroke-opacity="0.6" stroke-width="2.4"/>
<circle cx="1884.3" cy="1214.3" r="3.7" fill="#ff6f80" fill-opacity="0.3" stroke="#ff6f80" stroke-opacity="0.6" stroke-width="2.4"/>
<circle cx="1945.3" cy="1182.4" r="3.0" fill="#ff6f80" fill-opacity="0.3" stroke="#ff6f80" stroke-opacity="0.6" stroke-width="2.4"/>
<circle cx="1921.5" cy="832.6" r="9.3" fill="#ff6f80" fill-opacity="0.3" stroke="#ff6f80" stroke-opacity="0.6" stroke-width="2.4"/>
<circle cx="1931.5" cy="1151.2" r="3.0" fill="#ff6f80" fill-opacity="0.3" stroke="#ff6f80" stroke-opacity="0.6" stroke-width="2.4"/>
<circle cx="1894.4" cy="861.1" r="3.5" fill="#3fd3a0" fill-opacity="0.3" stroke="#3fd3a0" stroke-opacity="0.6" stroke-width="2.4"/>
<circle cx="1928.3" cy="840.1" r="3.1" fill="#ff6f80" fill-opacity="0.3" stroke="#ff6f80" stroke-opacity="0.6" stroke-width="2.4"/>
<circle cx="1866.9" cy="1036.9" r="3.9" fill="#ff6f80" fill-opacity="0.3" stroke="#ff6f80" stroke-opacity="0.6" stroke-width="2.4"/>
<circle cx="1926.1" cy="954.3" r="4.0" fill="#3fd3a0" fill-opacity="0.3" stroke="#3fd3a0" stroke-opacity="0.6" stroke-width="2.4"/>
<circle cx="1924.1" cy="1189.7" r="3.5" fill="#ff6f80" fill-opacity="0.3" stroke="#ff6f80" stroke-opacity="0.6" stroke-width="2.4"/>
<circle cx="1880.7" cy="1032.9" r="3.0" fill="#ff6f80" fill-opacity="0.3" stroke="#ff6f80" stroke-opacity="0.6" stroke-width="2.4"/>
<circle cx="1941.7" cy="878.3" r="9.1" fill="#ff6f80" fill-opacity="0.3" stroke="#ff6f80" stroke-opacity="0.6" stroke-width="2.4"/>
<circle cx="1904.0" cy="952.5" r="4.6" fill="#ff6f80" fill-opacity="0.3" stroke="#ff6f80" stroke-opacity="0.6" stroke-width="2.4"/>
<circle cx="1917.7" cy="1056.9" r="3.3" fill="#3fd3a0" fill-opacity="0.3" stroke="#3fd3a0" stroke-opacity="0.6" stroke-width="2.4"/>
<circle cx="1922.0" cy="1159.9" r="3.1" fill="#ff6f80" fill-opacity="0.3" stroke="#ff6f80" stroke-opacity="0.6" stroke-width="2.4"/>
<circle cx="1836.0" cy="868.2" r="11.2" fill="#ff6f80" fill-opacity="0.13" stroke="#ff6f80" stroke-opacity="0.6" stroke-width="2.4"/>
<circle cx="2046.2" cy="1079.5" r="2.0" fill="#ff6f80" fill-opacity="0.3" stroke="#ff6f80" stroke-opacity="0.6" stroke-width="2.4"/>
<circle cx="1857.9" cy="1063.7" r="3.3" fill="#ff6f80" fill-opacity="0.3" stroke="#ff6f80" stroke-opacity="0.6" stroke-width="2.4"/>
<circle cx="1986.4" cy="798.8" r="4.7" fill="#ff6f80" fill-opacity="0.3" stroke="#ff6f80" stroke-opacity="0.6" stroke-width="2.4"/>
<circle cx="1807.4" cy="980.4" r="3.0" fill="#ff6f80" fill-opacity="0.3" stroke="#ff6f80" stroke-opacity="0.6" stroke-width="2.4"/>
<circle cx="1891.7" cy="1000.1" r="3.4" fill="#ff6f80" fill-opacity="0.3" stroke="#ff6f80" stroke-opacity="0.6" stroke-width="2.4"/>
<circle cx="2025.3" cy="1015.6" r="3.6" fill="#ff6f80" fill-opacity="0.3" stroke="#ff6f80" stroke-opacity="0.6" stroke-width="2.4"/>
<circle cx="1915.2" cy="847.9" r="3.0" fill="#ff6f80" fill-opacity="0.3" stroke="#ff6f80" stroke-opacity="0.6" stroke-width="2.4"/>
<circle cx="1992.7" cy="701.8" r="2.6" fill="#3fd3a0" fill-opacity="0.3" stroke="#3fd3a0" stroke-opacity="0.6" stroke-width="2.4"/>
<circle cx="1986.8" cy="875.2" r="3.3" fill="#ff6f80" fill-opacity="0.3" stroke="#ff6f80" stroke-opacity="0.6" stroke-width="2.4"/>
<circle cx="1812.9" cy="946.5" r="3.1" fill="#3fd3a0" fill-opacity="0.3" stroke="#3fd3a0" stroke-opacity="0.6" stroke-width="2.4"/>
<circle cx="1871.4" cy="1009.0" r="4.2" fill="#ff6f80" fill-opacity="0.3" stroke="#ff6f80" stroke-opacity="0.6" stroke-width="2.4"/>
<circle cx="1989.6" cy="988.6" r="4.9" fill="#ff6f80" fill-opacity="0.3" stroke="#ff6f80" stroke-opacity="0.6" stroke-width="2.4"/>
<circle cx="1927.0" cy="1000.2" r="4.1" fill="#3fd3a0" fill-opacity="0.3" stroke="#3fd3a0" stroke-opacity="0.6" stroke-width="2.4"/>
<circle cx="1998.0" cy="778.3" r="2.3" fill="#3fd3a0" fill-opacity="0.3" stroke="#3fd3a0" stroke-opacity="0.6" stroke-width="2.4"/>
<circle cx="1871.4" cy="1158.6" r="2.9" fill="#ff6f80" fill-opacity="0.3" stroke="#ff6f80" stroke-opacity="0.6" stroke-width="2.4"/>
<circle cx="1917.4" cy="949.3" r="3.0" fill="#ff6f80" fill-opacity="0.3" stroke="#ff6f80" stroke-opacity="0.6" stroke-width="2.4"/>
<circle cx="1829.4" cy="1038.7" r="3.4" fill="#ff6f80" fill-opacity="0.3" stroke="#ff6f80" stroke-opacity="0.6" stroke-width="2.4"/>
<circle cx="1797.4" cy="959.7" r="6.7" fill="#ff6f80" fill-opacity="0.3" stroke="#ff6f80" stroke-opacity="0.6" stroke-width="2.4"/>
<circle cx="2028.7" cy="1032.4" r="4.1" fill="#3fd3a0" fill-opacity="0.3" stroke="#3fd3a0" stroke-opacity="0.6" stroke-width="2.4"/>
<circle cx="1802.1" cy="906.5" r="3.9" fill="#ff6f80" fill-opacity="0.3" stroke="#ff6f80" stroke-opacity="0.6" stroke-width="2.4"/>
<circle cx="1955.4" cy="884.2" r="3.2" fill="#ff6f80" fill-opacity="0.3" stroke="#ff6f80" stroke-opacity="0.6" stroke-width="2.4"/>
<circle cx="1820.7" cy="987.0" r="7.9" fill="#ff6f80" fill-opacity="0.3" stroke="#ff6f80" stroke-opacity="0.6" stroke-width="2.4"/>
<circle cx="1846.5" cy="856.7" r="4.0" fill="#ff6f80" fill-opacity="0.3" stroke="#ff6f80" stroke-opacity="0.6" stroke-width="2.4"/>
<circle cx="1986.3" cy="895.3" r="5.8" fill="#3fd3a0" fill-opacity="0.3" stroke="#3fd3a0" stroke-opacity="0.6" stroke-width="2.4"/>
<circle cx="1981.7" cy="872.1" r="3.2" fill="#3fd3a0" fill-opacity="0.3" stroke="#3fd3a0" stroke-opacity="0.6" stroke-width="2.4"/>
<circle cx="1902.8" cy="1304.9" r="3.6" fill="#3fd3a0" fill-opacity="0.3" stroke="#3fd3a0" stroke-opacity="0.6" stroke-width="2.4"/>
<circle cx="1850.6" cy="1171.7" r="2.0" fill="#ff6f80" fill-opacity="0.3" stroke="#ff6f80" stroke-opacity="0.6" stroke-width="2.4"/>
<circle cx="1770.8" cy="1076.6" r="3.3" fill="#3fd3a0" fill-opacity="0.3" stroke="#3fd3a0" stroke-opacity="0.6" stroke-width="2.4"/>
<circle cx="1902.6" cy="867.1" r="3.2" fill="#ff6f80" fill-opacity="0.3" stroke="#ff6f80" stroke-opacity="0.6" stroke-width="2.4"/>
<circle cx="1879.6" cy="986.1" r="5.1" fill="#3fd3a0" fill-opacity="0.3" stroke="#3fd3a0" stroke-opacity="0.6" stroke-width="2.4"/>
<circle cx="1812.2" cy="1054.8" r="3.0" fill="#ff6f80" fill-opacity="0.3" stroke="#ff6f80" stroke-opacity="0.6" stroke-width="2.4"/>
<circle cx="1868.8" cy="1034.3" r="3.1" fill="#ff6f80" fill-opacity="0.3" stroke="#ff6f80" stroke-opacity="0.6" stroke-width="2.4"/>
<circle cx="1887.7" cy="935.4" r="3.4" fill="#ff6f80" fill-opacity="0.3" stroke="#ff6f80" stroke-opacity="0.6" stroke-width="2.4"/>
<circle cx="1865.2" cy="1024.9" r="6.8" fill="#ff6f80" fill-opacity="0.3" stroke="#ff6f80" stroke-opacity="0.6" stroke-width="2.4"/>
<circle cx="1978.5" cy="1063.5" r="2.1" fill="#ff6f80" fill-opacity="0.3" stroke="#ff6f80" stroke-opacity="0.6" stroke-width="2.4"/>
<circle cx="1925.6" cy="875.5" r="5.8" fill="#ff6f80" fill-opacity="0.3" stroke="#ff6f80" stroke-opacity="0.6" stroke-width="2.4"/>
<circle cx="1935.3" cy="921.9" r="5.2" fill="#3fd3a0" fill-opacity="0.3" stroke="#3fd3a0" stroke-opacity="0.6" stroke-width="2.4"/>
<circle cx="1805.5" cy="1014.5" r="3.0" fill="#ff6f80" fill-opacity="0.3" stroke="#ff6f80" stroke-opacity="0.6" stroke-width="2.4"/>
<circle cx="1890.1" cy="976.3" r="3.0" fill="#3fd3a0" fill-opacity="0.3" stroke="#3fd3a0" stroke-opacity="0.6" stroke-width="2.4"/>
<circle cx="1854.2" cy="1033.1" r="3.1" fill="#ff6f80" fill-opacity="0.3" stroke="#ff6f80" stroke-opacity="0.6" stroke-width="2.4"/>
<circle cx="2010.7" cy="889.7" r="3.1" fill="#ff6f80" fill-opacity="0.3" stroke="#ff6f80" stroke-opacity="0.6" stroke-width="2.4"/>
<circle cx="1815.2" cy="1073.6" r="7.7" fill="#ff6f80" fill-opacity="0.3" stroke="#ff6f80" stroke-opacity="0.6" stroke-width="2.4"/>
<circle cx="1913.5" cy="932.7" r="3.4" fill="#ff6f80" fill-opacity="0.3" stroke="#ff6f80" stroke-opacity="0.6" stroke-width="2.4"/>
<circle cx="1920.1" cy="859.7" r="3.1" fill="#ff6f80" fill-opacity="0.3" stroke="#ff6f80" stroke-opacity="0.6" stroke-width="2.4"/>
<circle cx="2000.8" cy="817.9" r="4.1" fill="#ff6f80" fill-opacity="0.3" stroke="#ff6f80" stroke-opacity="0.6" stroke-width="2.4"/>
<circle cx="1913.0" cy="886.5" r="4.8" fill="#3fd3a0" fill-opacity="0.3" stroke="#3fd3a0" stroke-opacity="0.6" stroke-width="2.4"/>
<circle cx="1991.8" cy="857.8" r="3.1" fill="#ff6f80" fill-opacity="0.3" stroke="#ff6f80" stroke-opacity="0.6" stroke-width="2.4"/>
<circle cx="1947.0" cy="752.0" r="12.0" fill="#ff6f80" fill-opacity="0.13" stroke="#ff6f80" stroke-opacity="0.6" stroke-width="2.4"/>
<circle cx="1926.7" cy="1281.5" r="2.3" fill="#3fd3a0" fill-opacity="0.3" stroke="#3fd3a0" stroke-opacity="0.6" stroke-width="2.4"/>
<circle cx="1816.1" cy="987.8" r="6.9" fill="#ff6f80" fill-opacity="0.3" stroke="#ff6f80" stroke-opacity="0.6" stroke-width="2.4"/>
<circle cx="1951.2" cy="1204.9" r="3.0" fill="#ff6f80" fill-opacity="0.3" stroke="#ff6f80" stroke-opacity="0.6" stroke-width="2.4"/>
<circle cx="1813.4" cy="1111.8" r="2.1" fill="#3fd3a0" fill-opacity="0.3" stroke="#3fd3a0" stroke-opacity="0.6" stroke-width="2.4"/>
<circle cx="1893.9" cy="1010.1" r="3.2" fill="#3fd3a0" fill-opacity="0.3" stroke="#3fd3a0" stroke-opacity="0.6" stroke-width="2.4"/>
<circle cx="1992.3" cy="722.8" r="2.1" fill="#ff6f80" fill-opacity="0.3" stroke="#ff6f80" stroke-opacity="0.6" stroke-width="2.4"/>
<circle cx="1916.0" cy="1124.6" r="2.0" fill="#3fd3a0" fill-opacity="0.3" stroke="#3fd3a0" stroke-opacity="0.6" stroke-width="2.4"/>
<circle cx="1910.8" cy="1258.0" r="2.5" fill="#3fd3a0" fill-opacity="0.3" stroke="#3fd3a0" stroke-opacity="0.6" stroke-width="2.4"/>
<circle cx="1870.3" cy="1007.3" r="7.7" fill="#3fd3a0" fill-opacity="0.3" stroke="#3fd3a0" stroke-opacity="0.6" stroke-width="2.4"/>
<circle cx="1718.1" cy="1049.2" r="14.9" fill="#3fd3a0" fill-opacity="0.13" stroke="#3fd3a0" stroke-opacity="0.6" stroke-width="2.4"/>
<circle cx="1829.7" cy="849.6" r="3.9" fill="#ff6f80" fill-opacity="0.3" stroke="#ff6f80" stroke-opacity="0.6" stroke-width="2.4"/>
<circle cx="1883.1" cy="936.1" r="4.2" fill="#3fd3a0" fill-opacity="0.3" stroke="#3fd3a0" stroke-opacity="0.6" stroke-width="2.4"/>
<circle cx="1804.5" cy="1058.3" r="8.1" fill="#ff6f80" fill-opacity="0.3" stroke="#ff6f80" stroke-opacity="0.6" stroke-width="2.4"/>
<circle cx="1861.6" cy="1091.9" r="2.0" fill="#ff6f80" fill-opacity="0.3" stroke="#ff6f80" stroke-opacity="0.6" stroke-width="2.4"/>
<circle cx="1871.1" cy="954.3" r="3.9" fill="#3fd3a0" fill-opacity="0.3" stroke="#3fd3a0" stroke-opacity="0.6" stroke-width="2.4"/>
<circle cx="1801.1" cy="904.4" r="4.6" fill="#ff6f80" fill-opacity="0.3" stroke="#ff6f80" stroke-opacity="0.6" stroke-width="2.4"/>
<circle cx="1881.6" cy="987.0" r="3.9" fill="#ff6f80" fill-opacity="0.3" stroke="#ff6f80" stroke-opacity="0.6" stroke-width="2.4"/>
<circle cx="1999.3" cy="825.2" r="2.0" fill="#ff6f80" fill-opacity="0.3" stroke="#ff6f80" stroke-opacity="0.6" stroke-width="2.4"/>
<circle cx="1850.6" cy="1174.5" r="3.4" fill="#ff6f80" fill-opacity="0.3" stroke="#ff6f80" stroke-opacity="0.6" stroke-width="2.4"/>
<circle cx="1905.4" cy="866.9" r="3.1" fill="#ff6f80" fill-opacity="0.3" stroke="#ff6f80" stroke-opacity="0.6" stroke-width="2.4"/>
<circle cx="1919.5" cy="969.9" r="5.5" fill="#ff6f80" fill-opacity="0.3" stroke="#ff6f80" stroke-opacity="0.6" stroke-width="2.4"/>
<circle cx="1885.3" cy="1080.1" r="2.3" fill="#3fd3a0" fill-opacity="0.3" stroke="#3fd3a0" stroke-opacity="0.6" stroke-width="2.4"/>
<circle cx="1897.8" cy="985.9" r="5.5" fill="#3fd3a0" fill-opacity="0.3" stroke="#3fd3a0" stroke-opacity="0.6" stroke-width="2.4"/>
<circle cx="1888.3" cy="962.3" r="3.0" fill="#ff6f80" fill-opacity="0.3" stroke="#ff6f80" stroke-opacity="0.6" stroke-width="2.4"/>
<circle cx="1848.0" cy="1155.9" r="3.0" fill="#3fd3a0" fill-opacity="0.3" stroke="#3fd3a0" stroke-opacity="0.6" stroke-width="2.4"/>
<circle cx="1949.0" cy="1209.3" r="5.0" fill="#ff6f80" fill-opacity="0.3" stroke="#ff6f80" stroke-opacity="0.6" stroke-width="2.4"/>
<circle cx="1899.0" cy="968.8" r="8.3" fill="#3fd3a0" fill-opacity="0.3" stroke="#3fd3a0" stroke-opacity="0.6" stroke-width="2.4"/>
<circle cx="1819.1" cy="1103.3" r="3.7" fill="#3fd3a0" fill-opacity="0.3" stroke="#3fd3a0" stroke-opacity="0.6" stroke-width="2.4"/>
<circle cx="1926.3" cy="1107.8" r="2.1" fill="#3fd3a0" fill-opacity="0.3" stroke="#3fd3a0" stroke-opacity="0.6" stroke-width="2.4"/>
<circle cx="1931.9" cy="1080.8" r="2.0" fill="#ff6f80" fill-opacity="0.3" stroke="#ff6f80" stroke-opacity="0.6" stroke-width="2.4"/>
<circle cx="1983.0" cy="1115.1" r="2.0" fill="#3fd3a0" fill-opacity="0.3" stroke="#3fd3a0" stroke-opacity="0.6" stroke-width="2.4"/>
<circle cx="1848.1" cy="1090.9" r="3.5" fill="#3fd3a0" fill-opacity="0.3" stroke="#3fd3a0" stroke-opacity="0.6" stroke-width="2.4"/>
<circle cx="1774.6" cy="1078.4" r="4.9" fill="#ff6f80" fill-opacity="0.3" stroke="#ff6f80" stroke-opacity="0.6" stroke-width="2.4"/>
<circle cx="1807.5" cy="1138.7" r="2.7" fill="#3fd3a0" fill-opacity="0.3" stroke="#3fd3a0" stroke-opacity="0.6" stroke-width="2.4"/>
<circle cx="1868.3" cy="985.7" r="7.8" fill="#ff6f80" fill-opacity="0.3" stroke="#ff6f80" stroke-opacity="0.6" stroke-width="2.4"/>
<circle cx="1957.5" cy="893.9" r="8.7" fill="#3fd3a0" fill-opacity="0.3" stroke="#3fd3a0" stroke-opacity="0.6" stroke-width="2.4"/>
<circle cx="1797.1" cy="1069.6" r="9.7" fill="#3fd3a0" fill-opacity="0.3" stroke="#3fd3a0" stroke-opacity="0.6" stroke-width="2.4"/>
<circle cx="1962.8" cy="1208.2" r="3.2" fill="#ff6f80" fill-opacity="0.3" stroke="#ff6f80" stroke-opacity="0.6" stroke-width="2.4"/>
<circle cx="1911.8" cy="1151.6" r="5.7" fill="#ff6f80" fill-opacity="0.3" stroke="#ff6f80" stroke-opacity="0.6" stroke-width="2.4"/>
<circle cx="1873.2" cy="911.1" r="3.0" fill="#3fd3a0" fill-opacity="0.3" stroke="#3fd3a0" stroke-opacity="0.6" stroke-width="2.4"/>
<circle cx="1971.0" cy="855.5" r="4.7" fill="#ff6f80" fill-opacity="0.3" stroke="#ff6f80" stroke-opacity="0.6" stroke-width="2.4"/>
<circle cx="1916.5" cy="885.0" r="6.1" fill="#ff6f80" fill-opacity="0.3" stroke="#ff6f80" stroke-opacity="0.6" stroke-width="2.4"/>
<circle cx="1755.7" cy="1069.8" r="3.0" fill="#3fd3a0" fill-opacity="0.3" stroke="#3fd3a0" stroke-opacity="0.6" stroke-width="2.4"/>
<circle cx="1822.9" cy="1031.9" r="3.0" fill="#ff6f80" fill-opacity="0.3" stroke="#ff6f80" stroke-opacity="0.6" stroke-width="2.4"/>
<circle cx="1900.9" cy="1088.6" r="2.4" fill="#ff6f80" fill-opacity="0.3" stroke="#ff6f80" stroke-opacity="0.6" stroke-width="2.4"/>
<circle cx="1959.9" cy="1102.6" r="9.0" fill="#ff6f80" fill-opacity="0.3" stroke="#ff6f80" stroke-opacity="0.6" stroke-width="2.4"/>
<circle cx="1879.1" cy="977.3" r="4.1" fill="#ff6f80" fill-opacity="0.3" stroke="#ff6f80" stroke-opacity="0.6" stroke-width="2.4"/>
<circle cx="1909.6" cy="1152.6" r="6.1" fill="#ff6f80" fill-opacity="0.3" stroke="#ff6f80" stroke-opacity="0.6" stroke-width="2.4"/>
<circle cx="1940.8" cy="1184.2" r="3.9" fill="#ff6f80" fill-opacity="0.3" stroke="#ff6f80" stroke-opacity="0.6" stroke-width="2.4"/>
<circle cx="1869.2" cy="1014.7" r="4.8" fill="#ff6f80" fill-opacity="0.3" stroke="#ff6f80" stroke-opacity="0.6" stroke-width="2.4"/>
<circle cx="1892.1" cy="976.7" r="3.0" fill="#ff6f80" fill-opacity="0.3" stroke="#ff6f80" stroke-opacity="0.6" stroke-width="2.4"/>
<circle cx="1949.3" cy="1194.1" r="3.6" fill="#ff6f80" fill-opacity="0.3" stroke="#ff6f80" stroke-opacity="0.6" stroke-width="2.4"/>
<circle cx="1984.5" cy="1052.6" r="2.4" fill="#ff6f80" fill-opacity="0.3" stroke="#ff6f80" stroke-opacity="0.6" stroke-width="2.4"/>
<circle cx="2001.5" cy="805.0" r="3.4" fill="#3fd3a0" fill-opacity="0.3" stroke="#3fd3a0" stroke-opacity="0.6" stroke-width="2.4"/>
<circle cx="1991.2" cy="1073.8" r="5.9" fill="#ff6f80" fill-opacity="0.3" stroke="#ff6f80" stroke-opacity="0.6" stroke-width="2.4"/>
<circle cx="1824.5" cy="956.1" r="4.6" fill="#ff6f80" fill-opacity="0.3" stroke="#ff6f80" stroke-opacity="0.6" stroke-width="2.4"/>
<circle cx="1805.0" cy="1020.2" r="7.0" fill="#ff6f80" fill-opacity="0.3" stroke="#ff6f80" stroke-opacity="0.6" stroke-width="2.4"/>
<circle cx="1989.2" cy="893.4" r="4.2" fill="#ff6f80" fill-opacity="0.3" stroke="#ff6f80" stroke-opacity="0.6" stroke-width="2.4"/>
<circle cx="1962.3" cy="995.9" r="4.7" fill="#ff6f80" fill-opacity="0.3" stroke="#ff6f80" stroke-opacity="0.6" stroke-width="2.4"/>
<circle cx="1864.8" cy="1119.5" r="2.4" fill="#ff6f80" fill-opacity="0.3" stroke="#ff6f80" stroke-opacity="0.6" stroke-width="2.4"/>
<circle cx="1918.6" cy="893.1" r="3.0" fill="#ff6f80" fill-opacity="0.3" stroke="#ff6f80" stroke-opacity="0.6" stroke-width="2.4"/>
<circle cx="1894.4" cy="1236.0" r="2.0" fill="#ff6f80" fill-opacity="0.3" stroke="#ff6f80" stroke-opacity="0.6" stroke-width="2.4"/>
<circle cx="1923.0" cy="1251.4" r="2.8" fill="#3fd3a0" fill-opacity="0.3" stroke="#3fd3a0" stroke-opacity="0.6" stroke-width="2.4"/>
<circle cx="1890.8" cy="1016.4" r="6.1" fill="#ff6f80" fill-opacity="0.3" stroke="#ff6f80" stroke-opacity="0.6" stroke-width="2.4"/>
<circle cx="1990.6" cy="774.8" r="5.0" fill="#ff6f80" fill-opacity="0.3" stroke="#ff6f80" stroke-opacity="0.6" stroke-width="2.4"/>
<circle cx="1898.0" cy="943.5" r="3.0" fill="#ff6f80" fill-opacity="0.3" stroke="#ff6f80" stroke-opacity="0.6" stroke-width="2.4"/>
<circle cx="1847.9" cy="1059.3" r="5.0" fill="#ff6f80" fill-opacity="0.3" stroke="#ff6f80" stroke-opacity="0.6" stroke-width="2.4"/>
<circle cx="1975.9" cy="1034.3" r="4.2" fill="#3fd3a0" fill-opacity="0.3" stroke="#3fd3a0" stroke-opacity="0.6" stroke-width="2.4"/>
<circle cx="1851.5" cy="1145.7" r="2.0" fill="#ff6f80" fill-opacity="0.3" stroke="#ff6f80" stroke-opacity="0.6" stroke-width="2.4"/>
<circle cx="1960.4" cy="828.2" r="4.0" fill="#ff6f80" fill-opacity="0.3" stroke="#ff6f80" stroke-opacity="0.6" stroke-width="2.4"/>
<circle cx="1770.8" cy="1085.4" r="3.2" fill="#3fd3a0" fill-opacity="0.3" stroke="#3fd3a0" stroke-opacity="0.6" stroke-width="2.4"/>
<circle cx="1819.9" cy="1188.1" r="2.0" fill="#3fd3a0" fill-opacity="0.3" stroke="#3fd3a0" stroke-opacity="0.6" stroke-width="2.4"/>
<circle cx="1814.0" cy="917.2" r="4.4" fill="#ff6f80" fill-opacity="0.3" stroke="#ff6f80" stroke-opacity="0.6" stroke-width="2.4"/>
<circle cx="1719.3" cy="1050.4" r="14.2" fill="#3fd3a0" fill-opacity="0.13" stroke="#3fd3a0" stroke-opacity="0.6" stroke-width="2.4"/>
<circle cx="1867.4" cy="860.1" r="4.3" fill="#3fd3a0" fill-opacity="0.3" stroke="#3fd3a0" stroke-opacity="0.6" stroke-width="2.4"/>
<circle cx="1908.4" cy="861.1" r="3.1" fill="#ff6f80" fill-opacity="0.3" stroke="#ff6f80" stroke-opacity="0.6" stroke-width="2.4"/>
<circle cx="1980.2" cy="919.0" r="3.1" fill="#ff6f80" fill-opacity="0.3" stroke="#ff6f80" stroke-opacity="0.6" stroke-width="2.4"/>
<circle cx="1893.8" cy="1030.1" r="7.8" fill="#ff6f80" fill-opacity="0.3" stroke="#ff6f80" stroke-opacity="0.6" stroke-width="2.4"/>
<circle cx="1839.3" cy="1040.1" r="6.2" fill="#ff6f80" fill-opacity="0.3" stroke="#ff6f80" stroke-opacity="0.6" stroke-width="2.4"/>
<circle cx="1812.6" cy="1052.2" r="9.1" fill="#ff6f80" fill-opacity="0.3" stroke="#ff6f80" stroke-opacity="0.6" stroke-width="2.4"/>
<circle cx="1848.2" cy="834.5" r="7.0" fill="#ff6f80" fill-opacity="0.3" stroke="#ff6f80" stroke-opacity="0.6" stroke-width="2.4"/>
<circle cx="1884.0" cy="943.5" r="3.2" fill="#ff6f80" fill-opacity="0.3" stroke="#ff6f80" stroke-opacity="0.6" stroke-width="2.4"/>
<circle cx="1934.2" cy="1064.4" r="8.0" fill="#ff6f80" fill-opacity="0.3" stroke="#ff6f80" stroke-opacity="0.6" stroke-width="2.4"/>
<circle cx="1863.0" cy="1014.5" r="7.8" fill="#3fd3a0" fill-opacity="0.3" stroke="#3fd3a0" stroke-opacity="0.6" stroke-width="2.4"/>
<circle cx="1983.2" cy="851.3" r="5.9" fill="#3fd3a0" fill-opacity="0.3" stroke="#3fd3a0" stroke-opacity="0.6" stroke-width="2.4"/>
<circle cx="1896.8" cy="973.0" r="3.0" fill="#3fd3a0" fill-opacity="0.3" stroke="#3fd3a0" stroke-opacity="0.6" stroke-width="2.4"/>
<circle cx="1876.4" cy="960.4" r="5.0" fill="#ff6f80" fill-opacity="0.3" stroke="#ff6f80" stroke-opacity="0.6" stroke-width="2.4"/>
<circle cx="1806.2" cy="1046.3" r="4.3" fill="#3fd3a0" fill-opacity="0.3" stroke="#3fd3a0" stroke-opacity="0.6" stroke-width="2.4"/>
<circle cx="1829.6" cy="1022.2" r="6.0" fill="#ff6f80" fill-opacity="0.3" stroke="#ff6f80" stroke-opacity="0.6" stroke-width="2.4"/>
<circle cx="1784.3" cy="1126.3" r="4.7" fill="#3fd3a0" fill-opacity="0.3" stroke="#3fd3a0" stroke-opacity="0.6" stroke-width="2.4"/>
<circle cx="1856.7" cy="880.0" r="7.0" fill="#ff6f80" fill-opacity="0.3" stroke="#ff6f80" stroke-opacity="0.6" stroke-width="2.4"/>
<circle cx="1926.2" cy="1177.8" r="5.4" fill="#3fd3a0" fill-opacity="0.3" stroke="#3fd3a0" stroke-opacity="0.6" stroke-width="2.4"/>
<circle cx="1982.1" cy="916.5" r="5.7" fill="#ff6f80" fill-opacity="0.3" stroke="#ff6f80" stroke-opacity="0.6" stroke-width="2.4"/>
<circle cx="1796.9" cy="1155.3" r="2.6" fill="#3fd3a0" fill-opacity="0.3" stroke="#3fd3a0" stroke-opacity="0.6" stroke-width="2.4"/>
<circle cx="1888.1" cy="974.2" r="3.0" fill="#ff6f80" fill-opacity="0.3" stroke="#ff6f80" stroke-opacity="0.6" stroke-width="2.4"/>
<circle cx="1862.0" cy="978.0" r="5.7" fill="#ff6f80" fill-opacity="0.3" stroke="#ff6f80" stroke-opacity="0.6" stroke-width="2.4"/>
<circle cx="1725.6" cy="1076.1" r="19.0" fill="#3fd3a0" fill-opacity="0.13" stroke="#3fd3a0" stroke-opacity="0.6" stroke-width="2.4"/>
<circle cx="1918.9" cy="841.2" r="8.4" fill="#ff6f80" fill-opacity="0.3" stroke="#ff6f80" stroke-opacity="0.6" stroke-width="2.4"/>
<circle cx="1875.5" cy="970.3" r="3.0" fill="#3fd3a0" fill-opacity="0.3" stroke="#3fd3a0" stroke-opacity="0.6" stroke-width="2.4"/>
<circle cx="1903.1" cy="991.5" r="3.0" fill="#ff6f80" fill-opacity="0.3" stroke="#ff6f80" stroke-opacity="0.6" stroke-width="2.4"/>
<circle cx="1933.3" cy="1196.7" r="4.0" fill="#ff6f80" fill-opacity="0.3" stroke="#ff6f80" stroke-opacity="0.6" stroke-width="2.4"/>
<circle cx="1814.9" cy="1041.0" r="7.2" fill="#ff6f80" fill-opacity="0.3" stroke="#ff6f80" stroke-opacity="0.6" stroke-width="2.4"/>
<circle cx="1810.7" cy="1032.2" r="3.1" fill="#ff6f80" fill-opacity="0.3" stroke="#ff6f80" stroke-opacity="0.6" stroke-width="2.4"/>
<circle cx="1851.3" cy="957.8" r="6.3" fill="#ff6f80" fill-opacity="0.3" stroke="#ff6f80" stroke-opacity="0.6" stroke-width="2.4"/>
<circle cx="2004.8" cy="1066.4" r="2.8" fill="#ff6f80" fill-opacity="0.3" stroke="#ff6f80" stroke-opacity="0.6" stroke-width="2.4"/>
<circle cx="2015.6" cy="838.0" r="5.7" fill="#ff6f80" fill-opacity="0.3" stroke="#ff6f80" stroke-opacity="0.6" stroke-width="2.4"/>
<circle cx="1944.5" cy="1161.4" r="6.6" fill="#ff6f80" fill-opacity="0.3" stroke="#ff6f80" stroke-opacity="0.6" stroke-width="2.4"/>
<circle cx="1991.3" cy="1037.2" r="2.1" fill="#ff6f80" fill-opacity="0.3" stroke="#ff6f80" stroke-opacity="0.6" stroke-width="2.4"/>
<circle cx="1861.5" cy="1044.5" r="4.2" fill="#3fd3a0" fill-opacity="0.3" stroke="#3fd3a0" stroke-opacity="0.6" stroke-width="2.4"/>
<circle cx="1955.8" cy="1237.7" r="3.3" fill="#ff6f80" fill-opacity="0.3" stroke="#ff6f80" stroke-opacity="0.6" stroke-width="2.4"/>
<circle cx="1901.9" cy="848.4" r="7.1" fill="#ff6f80" fill-opacity="0.3" stroke="#ff6f80" stroke-opacity="0.6" stroke-width="2.4"/>
<circle cx="1802.2" cy="1151.7" r="2.1" fill="#3fd3a0" fill-opacity="0.3" stroke="#3fd3a0" stroke-opacity="0.6" stroke-width="2.4"/>
<circle cx="1941.6" cy="1187.0" r="3.0" fill="#ff6f80" fill-opacity="0.3" stroke="#ff6f80" stroke-opacity="0.6" stroke-width="2.4"/>
<circle cx="1985.4" cy="825.8" r="5.8" fill="#ff6f80" fill-opacity="0.3" stroke="#ff6f80" stroke-opacity="0.6" stroke-width="2.4"/>
<circle cx="1887.3" cy="1198.2" r="2.6" fill="#ff6f80" fill-opacity="0.3" stroke="#ff6f80" stroke-opacity="0.6" stroke-width="2.4"/>
<circle cx="1873.5" cy="992.2" r="3.0" fill="#ff6f80" fill-opacity="0.3" stroke="#ff6f80" stroke-opacity="0.6" stroke-width="2.4"/>
<circle cx="1887.7" cy="1008.7" r="3.0" fill="#ff6f80" fill-opacity="0.3" stroke="#ff6f80" stroke-opacity="0.6" stroke-width="2.4"/>
<circle cx="2000.1" cy="1064.2" r="2.0" fill="#ff6f80" fill-opacity="0.3" stroke="#ff6f80" stroke-opacity="0.6" stroke-width="2.4"/>
<circle cx="1913.8" cy="971.7" r="4.0" fill="#ff6f80" fill-opacity="0.3" stroke="#ff6f80" stroke-opacity="0.6" stroke-width="2.4"/>
<circle cx="1913.7" cy="937.7" r="6.5" fill="#ff6f80" fill-opacity="0.3" stroke="#ff6f80" stroke-opacity="0.6" stroke-width="2.4"/>
<circle cx="1818.3" cy="867.9" r="3.8" fill="#3fd3a0" fill-opacity="0.3" stroke="#3fd3a0" stroke-opacity="0.6" stroke-width="2.4"/>
<circle cx="1870.8" cy="980.3" r="3.0" fill="#3fd3a0" fill-opacity="0.3" stroke="#3fd3a0" stroke-opacity="0.6" stroke-width="2.4"/>
<circle cx="1958.2" cy="1236.3" r="5.9" fill="#ff6f80" fill-opacity="0.3" stroke="#ff6f80" stroke-opacity="0.6" stroke-width="2.4"/>
<circle cx="1880.1" cy="1192.0" r="5.6" fill="#3fd3a0" fill-opacity="0.3" stroke="#3fd3a0" stroke-opacity="0.6" stroke-width="2.4"/>
<circle cx="1882.6" cy="1066.6" r="2.0" fill="#3fd3a0" fill-opacity="0.3" stroke="#3fd3a0" stroke-opacity="0.6" stroke-width="2.4"/>
<circle cx="1912.0" cy="973.1" r="3.2" fill="#ff6f80" fill-opacity="0.3" stroke="#ff6f80" stroke-opacity="0.6" stroke-width="2.4"/>
<circle cx="1834.3" cy="958.2" r="4.5" fill="#ff6f80" fill-opacity="0.3" stroke="#ff6f80" stroke-opacity="0.6" stroke-width="2.4"/>
<circle cx="1812.9" cy="972.6" r="5.9" fill="#ff6f80" fill-opacity="0.3" stroke="#ff6f80" stroke-opacity="0.6" stroke-width="2.4"/>
<circle cx="1922.2" cy="1285.1" r="6.1" fill="#3fd3a0" fill-opacity="0.3" stroke="#3fd3a0" stroke-opacity="0.6" stroke-width="2.4"/>
<circle cx="1961.0" cy="1008.4" r="3.5" fill="#ff6f80" fill-opacity="0.3" stroke="#ff6f80" stroke-opacity="0.6" stroke-width="2.4"/>
<circle cx="1920.0" cy="994.1" r="5.8" fill="#ff6f80" fill-opacity="0.3" stroke="#ff6f80" stroke-opacity="0.6" stroke-width="2.4"/>
<circle cx="1885.0" cy="986.7" r="5.1" fill="#3fd3a0" fill-opacity="0.3" stroke="#3fd3a0" stroke-opacity="0.6" stroke-width="2.4"/>
<circle cx="1815.6" cy="1076.2" r="4.0" fill="#ff6f80" fill-opacity="0.3" stroke="#ff6f80" stroke-opacity="0.6" stroke-width="2.4"/>
<circle cx="1982.0" cy="815.0" r="14.0" fill="#ff6f80" fill-opacity="0.13" stroke="#ff6f80" stroke-opacity="0.6" stroke-width="2.4"/>
<circle cx="1883.3" cy="985.9" r="3.0" fill="#3fd3a0" fill-opacity="0.3" stroke="#3fd3a0" stroke-opacity="0.6" stroke-width="2.4"/>
<circle cx="1994.8" cy="896.7" r="3.0" fill="#ff6f80" fill-opacity="0.3" stroke="#ff6f80" stroke-opacity="0.6" stroke-width="2.4"/>
<circle cx="1779.8" cy="1092.3" r="9.2" fill="#ff6f80" fill-opacity="0.3" stroke="#ff6f80" stroke-opacity="0.6" stroke-width="2.4"/>
<circle cx="1894.7" cy="1220.7" r="2.0" fill="#ff6f80" fill-opacity="0.3" stroke="#ff6f80" stroke-opacity="0.6" stroke-width="2.4"/>
<circle cx="1902.2" cy="841.9" r="3.2" fill="#ff6f80" fill-opacity="0.3" stroke="#ff6f80" stroke-opacity="0.6" stroke-width="2.4"/>
<circle cx="1848.3" cy="1103.8" r="2.4" fill="#ff6f80" fill-opacity="0.3" stroke="#ff6f80" stroke-opacity="0.6" stroke-width="2.4"/>
<circle cx="1892.5" cy="965.4" r="3.6" fill="#3fd3a0" fill-opacity="0.3" stroke="#3fd3a0" stroke-opacity="0.6" stroke-width="2.4"/>
<circle cx="1783.8" cy="1101.8" r="3.5" fill="#ff6f80" fill-opacity="0.3" stroke="#ff6f80" stroke-opacity="0.6" stroke-width="2.4"/>
<circle cx="1983.0" cy="886.6" r="4.6" fill="#ff6f80" fill-opacity="0.3" stroke="#ff6f80" stroke-opacity="0.6" stroke-width="2.4"/>
<circle cx="1874.7" cy="960.8" r="3.1" fill="#ff6f80" fill-opacity="0.3" stroke="#ff6f80" stroke-opacity="0.6" stroke-width="2.4"/>
<circle cx="1982.4" cy="879.8" r="4.1" fill="#ff6f80" fill-opacity="0.3" stroke="#ff6f80" stroke-opacity="0.6" stroke-width="2.4"/>
<circle cx="1958.4" cy="1121.5" r="5.0" fill="#ff6f80" fill-opacity="0.3" stroke="#ff6f80" stroke-opacity="0.6" stroke-width="2.4"/>
<circle cx="1900.2" cy="980.4" r="6.2" fill="#ff6f80" fill-opacity="0.3" stroke="#ff6f80" stroke-opacity="0.6" stroke-width="2.4"/>
<circle cx="1902.7" cy="970.3" r="3.0" fill="#ff6f80" fill-opacity="0.3" stroke="#ff6f80" stroke-opacity="0.6" stroke-width="2.4"/>
<circle cx="1812.7" cy="917.6" r="3.4" fill="#ff6f80" fill-opacity="0.3" stroke="#ff6f80" stroke-opacity="0.6" stroke-width="2.4"/>
<circle cx="2011.4" cy="757.5" r="2.4" fill="#ff6f80" fill-opacity="0.3" stroke="#ff6f80" stroke-opacity="0.6" stroke-width="2.4"/>
<circle cx="1904.9" cy="861.2" r="4.1" fill="#ff6f80" fill-opacity="0.3" stroke="#ff6f80" stroke-opacity="0.6" stroke-width="2.4"/>
<circle cx="1874.1" cy="947.5" r="6.1" fill="#ff6f80" fill-opacity="0.3" stroke="#ff6f80" stroke-opacity="0.6" stroke-width="2.4"/>
<circle cx="1888.1" cy="848.6" r="3.0" fill="#ff6f80" fill-opacity="0.3" stroke="#ff6f80" stroke-opacity="0.6" stroke-width="2.4"/>
<circle cx="1764.9" cy="1095.4" r="3.6" fill="#ff6f80" fill-opacity="0.3" stroke="#ff6f80" stroke-opacity="0.6" stroke-width="2.4"/>
<circle cx="1801.5" cy="909.9" r="7.0" fill="#ff6f80" fill-opacity="0.3" stroke="#ff6f80" stroke-opacity="0.6" stroke-width="2.4"/>
<circle cx="1985.8" cy="1058.4" r="2.1" fill="#ff6f80" fill-opacity="0.3" stroke="#ff6f80" stroke-opacity="0.6" stroke-width="2.4"/>
<circle cx="1926.9" cy="847.1" r="3.0" fill="#ff6f80" fill-opacity="0.3" stroke="#ff6f80" stroke-opacity="0.6" stroke-width="2.4"/>
</g>
</g>
<rect x="691" y="406" width="71" height="139" rx="8" fill="#ffffff" stroke="#c4c4c4" stroke-width="4"/>
<line x1="693" y1="475" x2="760" y2="475" stroke="#cccccc" stroke-width="1.5"/>
<rect x="713.8" y="440.5" width="27.4" height="5" fill="#000"/><rect x="725" y="429.5" width="5" height="27" fill="#000"/>
<rect x="713.8" y="508" width="27.4" height="5" fill="#000"/>
<g filter="url(#sh)"><rect x="2449" y="404" width="559" height="1031" rx="6" fill="#ffffff"/></g>
<path d="M2449,1389 L2449,411 Q2449,404 2456,404 L3001,404 Q3008,404 3008,411 L3008,1389 Z" fill="#f8f8f8"/>
<path d="M2449,411 Q2449,404 2456,404 L3001,404 Q3008,404 3008,411 Z" fill="#9a3d43"/>
<line x1="2449" y1="1389.5" x2="3008" y2="1389.5" stroke="#e6e6e6" stroke-width="2"/>
<text x="2473.8" y="467.8" font-family="Liberation Sans" font-size="38" font-weight="normal" fill="#1f1f1f" text-anchor="start" textLength="385.0" lengthAdjust="spacingAndGlyphs" >Desired Characteristics</text>
<rect x="2949" y="453" width="23" height="3.5" fill="#8c96a6"/>
<text x="2473.0" y="556.0" font-family="Liberation Sans" font-size="28.5" font-weight="bold" fill="#333333" text-anchor="start" textLength="206.0" lengthAdjust="spacingAndGlyphs" >Select Event(s)</text>
<rect x="2473.5" y="582.5" width="511" height="129" rx="6" fill="#ffffff" stroke="#bdbdbd" stroke-width="2"/>
<rect x="2490" y="594" width="115" height="48.700000000000045" rx="5" fill="#efefef"/>
<text x="2501.9" y="628.3" font-family="Liberation Sans" font-size="28.5" font-weight="normal" fill="#333333" text-anchor="start" textLength="91.5" lengthAdjust="spacingAndGlyphs" >Battles</text>
<rect x="2490" y="650" width="349.5999999999999" height="49.700000000000045" rx="5" fill="#efefef"/>
<text x="2501.4" y="684.0" font-family="Liberation Sans" font-size="28.5" font-weight="normal" fill="#333333" text-anchor="start" textLength="326.2" lengthAdjust="spacingAndGlyphs" >Violence against civilians</text>
<line x1="2472" y1="759" x2="2986" y2="759" stroke="#e5e5e5" stroke-width="1.5"/>
<text x="2473.0" y="838.3" font-family="Liberation Sans" font-size="28.5" font-weight="bold" fill="#333333" text-anchor="start" textLength="458.0" lengthAdjust="spacingAndGlyphs" >Select Administrative Region 1(s)</text>
<rect x="2473.5" y="862.5" width="511" height="187" rx="6" fill="#ffffff" stroke="#bdbdbd" stroke-width="2"/>
<rect x="2490" y="874" width="129.69999999999982" height="49" rx="5" fill="#efefef"/>
<text x="2502.6" y="910.0" font-family="Liberation Sans" font-size="28.5" font-weight="normal" fill="#333333" text-anchor="start" textLength="105.6" lengthAdjust="spacingAndGlyphs" >Rakhine</text>
<rect x="2626" y="874" width="163.69999999999982" height="49" rx="5" fill="#efefef"/>
<text x="2639.8" y="910.0" font-family="Liberation Sans" font-size="28.5" font-weight="normal" fill="#333333" text-anchor="start" textLength="138.9" lengthAdjust="spacingAndGlyphs" >Bago-West</text>
<rect x="2797" y="874" width="127.5" height="49" rx="5" fill="#efefef"/>
<text x="2809.3" y="910.0" font-family="Liberation Sans" font-size="28.5" font-weight="normal" fill="#333333" text-anchor="start" textLength="104.0" lengthAdjust="spacingAndGlyphs" >Sagaing</text>
<rect x="2490" y="931" width="155.80000000000018" height="49" rx="5" fill="#efefef"/>
<text x="2502.6" y="965.6" font-family="Liberation Sans" font-size="28.5" font-weight="normal" fill="#333333" text-anchor="start" textLength="131.2" lengthAdjust="spacingAndGlyphs" >Bago-East</text>
<rect x="2653" y="931" width="150.5999999999999" height="49" rx="5" fill="#efefef"/>
<text x="2665.9" y="965.6" font-family="Liberation Sans" font-size="28.5" font-weight="normal" fill="#333333" text-anchor="start" textLength="125.9" lengthAdjust="spacingAndGlyphs" >Mandalay</text>
<rect x="2811" y="931" width="129.69999999999982" height="49" rx="5" fill="#efefef"/>
<text x="2823.0" y="965.6" font-family="Liberation Sans" font-size="28.5" font-weight="normal" fill="#333333" text-anchor="start" textLength="106.5" lengthAdjust="spacingAndGlyphs" >Magway</text>
<rect x="2490" y="988" width="118" height="48.59999999999991" rx="5" fill="#efefef"/>
<text x="2501.0" y="1022.5" font-family="Liberation Sans" font-size="28.5" font-weight="normal" fill="#333333" text-anchor="start" textLength="94.9" lengthAdjust="spacingAndGlyphs" >Yangon</text>
<rect x="2615" y="988" width="177.5999999999999" height="48.59999999999991" rx="5" fill="#efefef"/>
<text x="2627.8" y="1022.5" font-family="Liberation Sans" font-size="28.5" font-weight="normal" fill="#333333" text-anchor="start" textLength="153.0" lengthAdjust="spacingAndGlyphs" >Shan-South</text>
<rect x="2800.4" y="988" width="113.40000000000009" height="48.59999999999991" rx="5" fill="#efefef"/>
<text x="2812.7" y="1022.5" font-family="Liberation Sans" font-size="28.5" font-weight="normal" fill="#333333" text-anchor="start" textLength="88.8" lengthAdjust="spacingAndGlyphs" >Kachin</text>
<line x1="2472" y1="1096.6" x2="2986" y2="1096.6" stroke="#e5e5e5" stroke-width="1.5"/>
<text x="2472.0" y="1175.3" font-family="Liberation Sans" font-size="28.5" font-weight="bold" fill="#333333" text-anchor="start" textLength="82.0" lengthAdjust="spacingAndGlyphs" >Years:</text>
<rect x="2459" y="1199" width="75" height="36.7" rx="6" fill="#428bca"/>
<rect x="2923" y="1199" width="75" height="36.7" rx="6" fill="#428bca"/>
<text x="2465.7" y="1225.0" font-family="Liberation Sans" font-size="26" font-weight="normal" fill="#ffffff" text-anchor="start" textLength="61.5" lengthAdjust="spacingAndGlyphs" >2,010</text>
<text x="2929.9" y="1225.0" font-family="Liberation Sans" font-size="26" font-weight="normal" fill="#ffffff" text-anchor="start" textLength="61.0" lengthAdjust="spacingAndGlyphs" >2,023</text>
<rect x="2497" y="1254.5" width="464" height="18" fill="#428bca"/>
<rect x="2495.8" y="1272.5" width="2.5" height="18" fill="#000"/>
<rect x="2513.9" y="1272.5" width="2.2" height="9" fill="#999"/>
<rect x="2531.9" y="1272.5" width="2.2" height="9" fill="#999"/>
<rect x="2549.9" y="1272.5" width="2.2" height="9" fill="#999"/>
<rect x="2567.6" y="1272.5" width="2.5" height="18" fill="#000"/>
<rect x="2585.6" y="1272.5" width="2.2" height="9" fill="#999"/>
<rect x="2603.4" y="1272.5" width="2.2" height="9" fill="#999"/>
<rect x="2621.2" y="1272.5" width="2.2" height="9" fill="#999"/>
<rect x="2638.8" y="1272.5" width="2.5" height="18" fill="#000"/>
<rect x="2656.8" y="1272.5" width="2.2" height="9" fill="#999"/>
<rect x="2674.7" y="1272.5" width="2.2" height="9" fill="#999"/>
<rect x="2692.5" y="1272.5" width="2.2" height="9" fill="#999"/>
<rect x="2710.1" y="1272.5" width="2.5" height="18" fill="#000"/>
<rect x="2728.2" y="1272.5" width="2.2" height="9" fill="#999"/>
<rect x="2746.1" y="1272.5" width="2.2" height="9" fill="#999"/>
<rect x="2763.9" y="1272.5" width="2.2" height="9" fill="#999"/>
<rect x="2781.6" y="1272.5" width="2.5" height="18" fill="#000"/>
<rect x="2799.7" y="1272.5" width="2.2" height="9" fill="#999"/>
<rect x="2817.5" y="1272.5" width="2.2" height="9" fill="#999"/>
<rect x="2835.3" y="1272.5" width="2.2" height="9" fill="#999"/>
<rect x="2853.0" y="1272.5" width="2.5" height="18" fill="#000"/>
<rect x="2871.1" y="1272.5" width="2.2" height="9" fill="#999"/>
<rect x="2889.0" y="1272.5" width="2.2" height="9" fill="#999"/>
<rect x="2906.9" y="1272.5" width="2.2" height="9" fill="#999"/>
<rect x="2924.6" y="1272.5" width="2.5" height="18" fill="#000"/>
<rect x="2941.5" y="1272.5" width="2.2" height="9" fill="#999"/>
<rect x="2959.5" y="1272.5" width="2.5" height="18" fill="#000"/>
<text x="2473.8" y="1319.0" font-family="Liberation Sans" font-size="20.5" font-weight="normal" fill="#333333" text-anchor="start" textLength="50.2" lengthAdjust="spacingAndGlyphs" >2,010</text>
<text x="2545.4" y="1319.0" font-family="Liberation Sans" font-size="20.5" font-weight="normal" fill="#333333" text-anchor="start" textLength="49.6" lengthAdjust="spacingAndGlyphs" >2,012</text>
<text x="2617.0" y="1319.0" font-family="Liberation Sans" font-size="20.5" font-weight="normal" fill="#333333" text-anchor="start" textLength="49.0" lengthAdjust="spacingAndGlyphs" >2,014</text>
<text x="2688.5" y="1319.0" font-family="Liberation Sans" font-size="20.5" font-weight="normal" fill="#333333" text-anchor="start" textLength="49.5" lengthAdjust="spacingAndGlyphs" >2,016</text>
<text x="2759.7" y="1319.0" font-family="Liberation Sans" font-size="20.5" font-weight="normal" fill="#333333" text-anchor="start" textLength="49.6" lengthAdjust="spacingAndGlyphs" >2,018</text>
<text x="2831.3" y="1319.0" font-family="Liberation Sans" font-size="20.5" font-weight="normal" fill="#333333" text-anchor="start" textLength="49.2" lengthAdjust="spacingAndGlyphs" >2,020</text>
<text x="2902.5" y="1319.0" font-family="Liberation Sans" font-size="20.5" font-weight="normal" fill="#333333" text-anchor="start" textLength="49.5" lengthAdjust="spacingAndGlyphs" >2,022</text>
<circle cx="2497" cy="1262" r="23.5" fill="#dedede" stroke="#ababab" stroke-width="2.2"/>
<circle cx="2960.7" cy="1262" r="23.5" fill="#dedede" stroke="#ababab" stroke-width="2.2"/>
<g filter="url(#sh)"><rect x="3035" y="404.5" width="558" height="592" rx="6" fill="#ffffff"/></g>
<path d="M3035,498 L3035,411 Q3035,404.5 3042,404.5 L3586,404.5 Q3593,404.5 3593,411 L3593,498 Z" fill="#9a3d43"/>
<path d="M3036.2,497 L3036.2,942 Q3036.2,947.8 3042,947.8 L3586,947.8 Q3591.8,947.8 3591.8,942 L3591.8,497" fill="none" stroke="#9a3d43" stroke-width="2.4"/>
<text x="3059.5" y="463.8" font-family="Liberation Sans" font-size="38" font-weight="normal" fill="#ffffff" text-anchor="start" textLength="102.0" lengthAdjust="spacingAndGlyphs" >About</text>
<rect x="3534" y="445.6" width="22.5" height="7" fill="#ffffff"/>
<text x="3059.5" y="553.0" font-family="Liberation Sans" font-size="29" font-weight="normal" fill="#333333" text-anchor="start" textLength="86.3" lengthAdjust="spacingAndGlyphs" >Armed</text>
<text x="3182.1" y="553.0" font-family="Liberation Sans" font-size="29" font-weight="normal" fill="#333333" text-anchor="start" textLength="105.9" lengthAdjust="spacingAndGlyphs" >conflicts</text>
<text x="3324.3" y="553.0" font-family="Liberation Sans" font-size="29" font-weight="normal" fill="#333333" text-anchor="start" textLength="48.9" lengthAdjust="spacingAndGlyphs" >due</text>
<text x="3409.5" y="553.0" font-family="Liberation Sans" font-size="29" font-weight="normal" fill="#333333" text-anchor="start" textLength="24.4" lengthAdjust="spacingAndGlyphs" >to</text>
<text x="3470.2" y="553.0" font-family="Liberation Sans" font-size="29" font-weight="normal" fill="#333333" text-anchor="start" textLength="97.8" lengthAdjust="spacingAndGlyphs" >political</text>
<text x="3059.5" y="597.8" font-family="Liberation Sans" font-size="29" font-weight="normal" fill="#333333" text-anchor="start" textLength="107.6" lengthAdjust="spacingAndGlyphs" >violence</text>
<text x="3202.4" y="597.8" font-family="Liberation Sans" font-size="29" font-weight="normal" fill="#333333" text-anchor="start" textLength="48.9" lengthAdjust="spacingAndGlyphs" >and</text>
<text x="3286.6" y="597.8" font-family="Liberation Sans" font-size="29" font-weight="normal" fill="#333333" text-anchor="start" textLength="153.2" lengthAdjust="spacingAndGlyphs" >coordinated</text>
<text x="3475.1" y="597.8" font-family="Liberation Sans" font-size="29" font-weight="normal" fill="#333333" text-anchor="start" textLength="92.9" lengthAdjust="spacingAndGlyphs" >attacks</text>
<text x="3059.5" y="642.6" font-family="Liberation Sans" font-size="29" font-weight="normal" fill="#333333" text-anchor="start" textLength="114.1" lengthAdjust="spacingAndGlyphs" >targeting</text>
<text x="3184.6" y="642.6" font-family="Liberation Sans" font-size="29" font-weight="normal" fill="#333333" text-anchor="start" textLength="110.8" lengthAdjust="spacingAndGlyphs" >innocent</text>
<text x="3306.4" y="642.6" font-family="Liberation Sans" font-size="29" font-weight="normal" fill="#333333" text-anchor="start" textLength="110.8" lengthAdjust="spacingAndGlyphs" >civilians,</text>
<text x="3428.2" y="642.6" font-family="Liberation Sans" font-size="29" font-weight="normal" fill="#333333" text-anchor="start" textLength="63.6" lengthAdjust="spacingAndGlyphs" >have</text>
<text x="3502.8" y="642.6" font-family="Liberation Sans" font-size="29" font-weight="normal" fill="#333333" text-anchor="start" textLength="65.2" lengthAdjust="spacingAndGlyphs" >been</text>
<text x="3059.5" y="687.5" font-family="Liberation Sans" font-size="29" font-weight="normal" fill="#333333" text-anchor="start" textLength="32.6" lengthAdjust="spacingAndGlyphs" >on</text>
<text x="3102.8" y="687.5" font-family="Liberation Sans" font-size="29" font-weight="normal" fill="#333333" text-anchor="start" textLength="40.7" lengthAdjust="spacingAndGlyphs" >the</text>
<text x="3154.2" y="687.5" font-family="Liberation Sans" font-size="29" font-weight="normal" fill="#333333" text-anchor="start" textLength="47.2" lengthAdjust="spacingAndGlyphs" >rise</text>
<text x="3212.2" y="687.5" font-family="Liberation Sans" font-size="29" font-weight="normal" fill="#333333" text-anchor="start" textLength="105.4" lengthAdjust="spacingAndGlyphs" >globally.</text>
<text x="3328.3" y="687.5" font-family="Liberation Sans" font-size="29" font-weight="normal" fill="#333333" text-anchor="start" textLength="55.4" lengthAdjust="spacingAndGlyphs" >This</text>
<text x="3394.3" y="687.5" font-family="Liberation Sans" font-size="29" font-weight="normal" fill="#333333" text-anchor="start" textLength="122.2" lengthAdjust="spacingAndGlyphs" >threatens</text>
<text x="3527.3" y="687.5" font-family="Liberation Sans" font-size="29" font-weight="normal" fill="#333333" text-anchor="start" textLength="40.7" lengthAdjust="spacingAndGlyphs" >the</text>
<text x="3059.5" y="732.3" font-family="Liberation Sans" font-size="29" font-weight="normal" fill="#333333" text-anchor="start" textLength="76.6" lengthAdjust="spacingAndGlyphs" >public</text>
<text x="3185.0" y="732.3" font-family="Liberation Sans" font-size="29" font-weight="normal" fill="#333333" text-anchor="start" textLength="24.4" lengthAdjust="spacingAndGlyphs" >at</text>
<text x="3258.3" y="732.3" font-family="Liberation Sans" font-size="29" font-weight="normal" fill="#333333" text-anchor="start" textLength="57.1" lengthAdjust="spacingAndGlyphs" >both</text>
<text x="3364.3" y="732.3" font-family="Liberation Sans" font-size="29" font-weight="normal" fill="#333333" text-anchor="start" textLength="105.9" lengthAdjust="spacingAndGlyphs" >physical</text>
<text x="3519.1" y="732.3" font-family="Liberation Sans" font-size="29" font-weight="normal" fill="#333333" text-anchor="start" textLength="48.9" lengthAdjust="spacingAndGlyphs" >and</text>
<text x="3059.5" y="777.0" font-family="Liberation Sans" font-size="29" font-weight="normal" fill="#333333" text-anchor="start" textLength="176.0" lengthAdjust="spacingAndGlyphs" >psychological</text>
<text x="3250.2" y="777.0" font-family="Liberation Sans" font-size="29" font-weight="normal" fill="#333333" text-anchor="start" textLength="83.1" lengthAdjust="spacingAndGlyphs" >levels.</text>
<text x="3348.0" y="777.0" font-family="Liberation Sans" font-size="29" font-weight="normal" fill="#333333" text-anchor="start" textLength="45.6" lengthAdjust="spacingAndGlyphs" >this</text>
<text x="3408.3" y="777.0" font-family="Liberation Sans" font-size="29" font-weight="normal" fill="#333333" text-anchor="start" textLength="159.7" lengthAdjust="spacingAndGlyphs" >visualisation</text>
<text x="3059.5" y="821.8" font-family="Liberation Sans" font-size="29" font-weight="normal" fill="#333333" text-anchor="start" textLength="138.5" lengthAdjust="spacingAndGlyphs" >dashboard</text>
<text x="3214.0" y="821.8" font-family="Liberation Sans" font-size="29" font-weight="normal" fill="#333333" text-anchor="start" textLength="78.2" lengthAdjust="spacingAndGlyphs" >helps:</text>
<text x="3308.1" y="821.8" font-family="Liberation Sans" font-size="29" font-weight="normal" fill="#333333" text-anchor="start" textLength="35.8" lengthAdjust="spacingAndGlyphs" >(1)</text>
<text x="3359.8" y="821.8" font-family="Liberation Sans" font-size="29" font-weight="normal" fill="#333333" text-anchor="start" textLength="109.2" lengthAdjust="spacingAndGlyphs" >discover</text>
<text x="3484.9" y="821.8" font-family="Liberation Sans" font-size="29" font-weight="normal" fill="#333333" text-anchor="start" textLength="83.1" lengthAdjust="spacingAndGlyphs" >armed</text>
<text x="3059.5" y="866.7" font-family="Liberation Sans" font-size="29" font-weight="normal" fill="#333333" text-anchor="start" textLength="105.9" lengthAdjust="spacingAndGlyphs" >conflicts</text>
<text x="3179.7" y="866.7" font-family="Liberation Sans" font-size="29" font-weight="normal" fill="#333333" text-anchor="start" textLength="81.5" lengthAdjust="spacingAndGlyphs" >trends</text>
<text x="3275.4" y="866.7" font-family="Liberation Sans" font-size="29" font-weight="normal" fill="#333333" text-anchor="start" textLength="48.9" lengthAdjust="spacingAndGlyphs" >and</text>
<text x="3338.6" y="866.7" font-family="Liberation Sans" font-size="29" font-weight="normal" fill="#333333" text-anchor="start" textLength="35.8" lengthAdjust="spacingAndGlyphs" >(2)</text>
<text x="3388.7" y="866.7" font-family="Liberation Sans" font-size="29" font-weight="normal" fill="#333333" text-anchor="start" textLength="179.3" lengthAdjust="spacingAndGlyphs" >conceptualise</text>
<text x="3059.5" y="911.5" font-family="Liberation Sans" font-size="29" font-weight="normal" fill="#333333" text-anchor="start" textLength="83.1" lengthAdjust="spacingAndGlyphs" >armed</text>
<text x="3150.7" y="911.5" font-family="Liberation Sans" font-size="29" font-weight="normal" fill="#333333" text-anchor="start" textLength="91.2" lengthAdjust="spacingAndGlyphs" >conflict</text>
<text x="3250.1" y="911.5" font-family="Liberation Sans" font-size="29" font-weight="normal" fill="#333333" text-anchor="start" textLength="92.9" lengthAdjust="spacingAndGlyphs" >spaces</text>
<text x="3351.1" y="911.5" font-family="Liberation Sans" font-size="29" font-weight="normal" fill="#333333" text-anchor="start" textLength="22.8" lengthAdjust="spacingAndGlyphs" >in</text>
<text x="3382.1" y="911.5" font-family="Liberation Sans" font-size="29" font-weight="normal" fill="#333333" text-anchor="start" textLength="128.7" lengthAdjust="spacingAndGlyphs" >Myanmar.</text>
<g filter="url(#sh)"><rect x="3104" y="1631" width="444" height="155" rx="10" fill="#ffffff" fill-opacity="0.8"/></g>
<text x="3123.4" y="1674.7" font-family="Liberation Sans" font-size="30" font-weight="bold" fill="#555555" text-anchor="start" textLength="164.0" lengthAdjust="spacingAndGlyphs" >Event Type</text>
<rect x="3122" y="1691" width="41" height="41" fill="#f8b5bd"/>
<rect x="3122" y="1732" width="41" height="40" fill="#a8e6d4"/>
<text x="3182.0" y="1721.5" font-family="Liberation Sans" font-size="31" font-weight="normal" fill="#555555" text-anchor="start" textLength="95.0" lengthAdjust="spacingAndGlyphs" >Battles</text>
<text x="3181.0" y="1762.0" font-family="Liberation Sans" font-size="31" font-weight="normal" fill="#555555" text-anchor="start" textLength="348.0" lengthAdjust="spacingAndGlyphs" >Violence against civilians</text>
<rect x="3474" y="1808" width="97" height="37" fill="#ffffff" fill-opacity="0.8"/>
<text x="3485.7" y="1834.6" font-family="Liberation Sans" font-size="25" font-weight="normal" fill="#0078a8" text-anchor="start" textLength="73.0" lengthAdjust="spacingAndGlyphs" >Leaflet</text>
<rect x="0" y="1967" width="3678" height="1" fill="#000000"/>
</svg>
</body></html>
